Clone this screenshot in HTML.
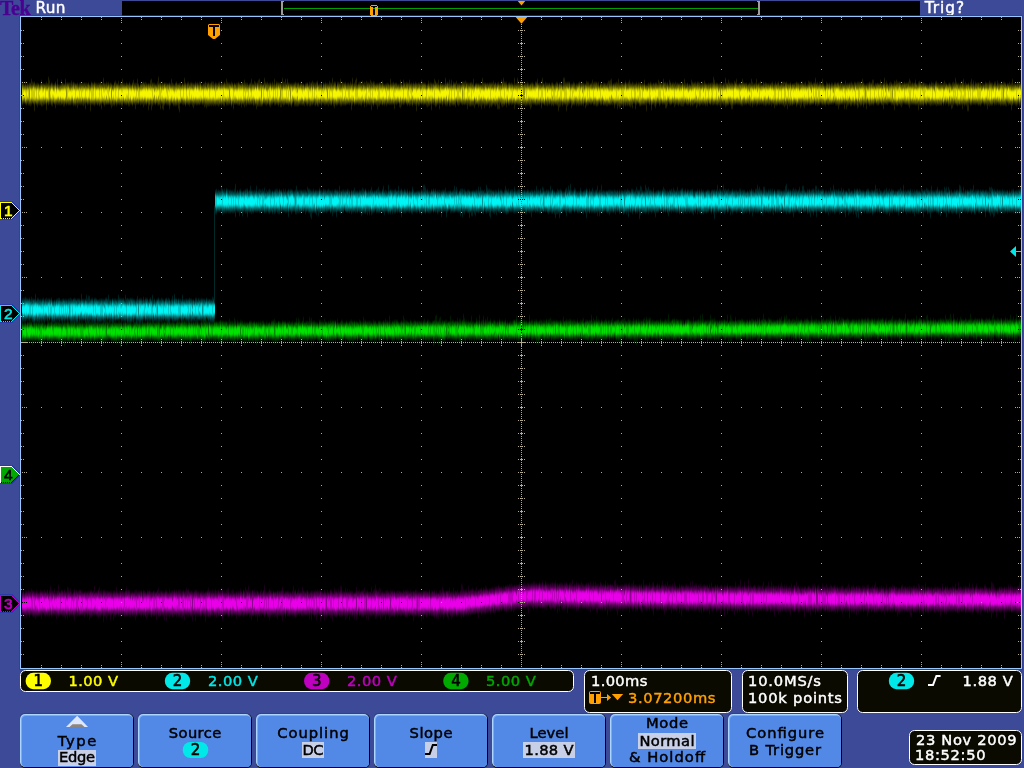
<!DOCTYPE html><html><head><meta charset="utf-8"><title>Tek Run</title><style>
html,body{margin:0;padding:0;}
body{width:1024px;height:768px;overflow:hidden;background:#3c4a98;}
svg{position:absolute;left:0;top:0;display:block;will-change:transform;}
text{font-family:"DejaVu Sans","Liberation Sans",sans-serif;white-space:pre;}
</style></head><body>
<svg width="1024" height="768" viewBox="0 0 1024 768" shape-rendering="crispEdges">
<rect x="122" y="1" width="798" height="14" fill="#000"/>
<text x="0" y="14.8" fill="#4b0091" stroke="#4b0091" stroke-width="0.35" font-size="20" font-weight="bold" textLength="30.5" lengthAdjust="spacing" style="font-family:'Liberation Serif','DejaVu Serif',serif">Tek</text>
<text x="35.5" y="13.2" fill="#fff" stroke="#fff" stroke-width="0.45" font-size="15.3" textLength="30" lengthAdjust="spacing">Run</text>
<text x="924.8" y="13.2" fill="#fff" stroke="#fff" stroke-width="0.45" font-size="15.3" textLength="39.3" lengthAdjust="spacing">Trig?</text>
<path d="M281 1h3v1h-1v12h1v1h-3z M757 1h3v14h-3v-1h1v-12h-1z" fill="#a09c9c"/>
<rect x="284" y="8" width="474" height="1" fill="#00a000"/>
<path d="M517.7 1h7.6l-3.8 4.5z" fill="#ffa000" shape-rendering="auto"/>
<rect x="19" y="15" width="1004" height="655" fill="#35418e"/>
<rect x="122" y="15" width="798" height="1" fill="#1c2466"/>
<path fill-rule="evenodd" d="M371 5h6v1h1v9h-1v1h-6v-1h-1v-9h1z M371 6v1h2v8h2v-8h2v-1z" fill="#ffa000"/>
<rect x="20" y="16" width="1002" height="653" fill="#96c8ff"/>
<rect x="21" y="17" width="1000" height="651" fill="#000"/>
<filter id="sf" filterUnits="userSpaceOnUse" x="21" y="17" width="1000" height="651"><feGaussianBlur stdDeviation="0.35 0.9"/></filter><g transform="translate(0.5,0)" fill="none" stroke-width="1" filter="url(#sf)"><path stroke="#202000" d="M22 84v21m1-22v20m1-18v18m1-21v22m1-19v20m1-22v20m1-19v21m1-22v22m1-22v23m1-27v26m1-23v21m1-20v21m1-22v29m1-27v20m1-20v21m1-22v24m1-23v20m1-19v20m1-21v21m1-25v26m1-22v22m1-22v21m1-21v20m1-20v20m1-22v28m1-26v19m1-26v28m1-25v24m1-20v20m1-20v21m1-22v23m1-21v18m1-19v20m1-22v26m1-23v19m1-25v26m1-20v19m1-19v20m1-20v20m1-25v25m1-22v21m1-20v22m1-22v22m1-27v25m1-21v22m1-22v21m1-21v22m1-22v22m1-22v22m1-24v23m1-21v21m1-22v24m1-23v22m1-21v22m1-22v21m1-22v25m1-23v20m1-22v21m1-21v22m1-22v21m1-21v22m1-22v23m1-23v21m1-21v26m1-26v20m1-19v21m1-21v19m1-18v19m1-19v26m1-29v22m1-21v21m1-20v21m1-23v24m1-23v20m1-20v21m1-20v21m1-22v20m1-20v23m1-24v23m1-21v25m1-26v20m1-25v26m1-21v23m1-22v20m1-22v22m1-21v21m1-22v22m1-20v20m1-21v22m1-21v24m1-23v21m1-21v20m1-23v24m1-25v23m1-21v23m1-22v20m1-23v23m1-19v20m1-22v21m1-21v23m1-27v27m1-22v19m1-20v21m1-20v20m1-20v21m1-21v20m1-20v22m1-24v24m1-22v19m1-18v19m1-21v23m1-26v24m1-21v21m1-21v26m1-26v21m1-25v25m1-20v20m1-18v17m1-19v21m1-22v21m1-21v20m1-21v25m1-24v22m1-23v22m1-21v22m1-21v19m1-19v26m1-26v21m1-25v24m1-25v31m1-27v23m1-23v21m1-21v21m1-20v21m1-21v19m1-21v23m1-28v28m1-22v22m1-22v26m1-25v20m1-22v27m1-25v26m1-27v22m1-22v20m1-20v21m1-20v21m1-21v21m1-22v26m1-25v21m1-26v24m1-20v21m1-20v22m1-21v19m1-21v23m1-24v22m1-20v21m1-21v25m1-26v29m1-29v20m1-18v18m1-19v19m1-19v21m1-27v26m1-21v23m1-22v20m1-21v21m1-22v23m1-21v22m1-23v21m1-21v21m1-21v23m1-22v24m1-24v21m1-23v22m1-21v22m1-22v22m1-21v20m1-22v23m1-23v22m1-19v19m1-19v20m1-21v20m1-21v24m1-25v24m1-23v25m1-25v23m1-23v23m1-22v22m1-23v22m1-23v24m1-24v23m1-23v24m1-22v21m1-22v23m1-23v22m1-21v21m1-22v23m1-24v23m1-21v19m1-22v25m1-23v21m1-20v22m1-24v24m1-21v18m1-24v26m1-23v23m1-22v22m1-22v21m1-20v20m1-22v24m1-23v21m1-19v24m1-26v21m1-20v20m1-21v21m1-21v22m1-23v23m1-22v22m1-21v20m1-21v24m1-24v21m1-21v22m1-25v27m1-24v22m1-22v23m1-23v21m1-19v19m1-20v21m1-22v20m1-24v25m1-20v20m1-20v22m1-25v24m1-23v23m1-22v26m1-27v24m1-26v26m1-27v27m1-23v23m1-23v23m1-22v21m1-21v19m1-25v26m1-22v23m1-22v22m1-23v22m1-20v20m1-21v23m1-23v24m1-23v21m1-23v22m1-20v19m1-24v26m1-21v21m1-23v22m1-20v20m1-21v23m1-23v21m1-21v24m1-24v24m1-29v26m1-22v24m1-24v23m1-26v25m1-20v20m1-25v25m1-21v23m1-23v21m1-20v21m1-21v23m1-22v19m1-20v19m1-20v23m1-24v24m1-23v23m1-23v23m1-23v23m1-21v20m1-22v22m1-23v23m1-21v21m1-21v21m1-20v21m1-22v19m1-20v22m1-22v23m1-21v19m1-22v24m1-23v23m1-22v21m1-24v24m1-22v21m1-21v22m1-22v23m1-24v22m1-23v25m1-21v21m1-22v20m1-20v20m1-22v24m1-20v18m1-21v21m1-20v21m1-22v22m1-21v20m1-21v22m1-21v22m1-25v23m1-21v22m1-22v22m1-27v25m1-20v23m1-24v26m1-26v22m1-18v19m1-23v23m1-23v22m1-21v20m1-24v27m1-23v23m1-24v23m1-22v22m1-22v22m1-23v23m1-21v20m1-21v21m1-21v21m1-20v21m1-23v21m1-19v26m1-32v27m1-21v19m1-20v22m1-25v24m1-26v26m1-19v19m1-21v22m1-23v22m1-22v23m1-23v24m1-25v23m1-20v20m1-22v25m1-24v20m1-22v25m1-23v21m1-21v21m1-21v22m1-25v25m1-23v28m1-27v21m1-22v24m1-24v22m1-20v20m1-20v21m1-22v26m1-25v22m1-23v23m1-23v21m1-21v20m1-22v23m1-20v20m1-19v19m1-20v20m1-20v22m1-23v21m1-20v20m1-19v20m1-26v25m1-20v20m1-21v21m1-22v22m1-20v25m1-26v21m1-21v22m1-21v20m1-20v19m1-19v23m1-27v28m1-25v23m1-21v19m1-24v25m1-22v21m1-21v20m1-21v22m1-20v22m1-23v21m1-24v26m1-22v21m1-22v21m1-20v22m1-23v21m1-20v19m1-21v23m1-22v28m1-27v20m1-21v23m1-23v22m1-21v19m1-23v24m1-22v22m1-21v22m1-22v21m1-21v21m1-19v21m1-22v23m1-26v25m1-21v19m1-21v21m1-21v27m1-26v20m1-21v21m1-25v26m1-24v26m1-24v23m1-23v21m1-24v24m1-19v24m1-26v21m1-20v20m1-20v22m1-22v20m1-20v20m1-26v27m1-22v23m1-24v22m1-21v20m1-23v26m1-22v22m1-26v25m1-20v20m1-23v23m1-22v22m1-22v24m1-26v21m1-18v21m1-21v22m1-22v21m1-21v19m1-20v21m1-22v23m1-23v22m1-22v23m1-24v23m1-21v22m1-22v26m1-26v22m1-22v23m1-23v23m1-23v22m1-22v21m1-25v25m1-19v23m1-24v21m1-22v21m1-20v20m1-20v23m1-23v21m1-21v22m1-21v24m1-31v27m1-22v21m1-21v25m1-25v21m1-20v21m1-22v22m1-21v20m1-21v25m1-25v23m1-23v24m1-24v22m1-24v23m1-20v21m1-21v22m1-22v21m1-22v26m1-27v27m1-25v25m1-25v19m1-23v26m1-24v25m1-29v28m1-24v23m1-23v22m1-22v25m1-22v18m1-20v22m1-22v22m1-21v20m1-21v22m1-21v20m1-19v19m1-26v31m1-25v21m1-22v21m1-26v26m1-23v24m1-21v21m1-23v24m1-23v25m1-25v23m1-21v20m1-21v21m1-22v23m1-23v21m1-22v23m1-22v22m1-21v22m1-22v25m1-26v24m1-23v20m1-20v20m1-19v19m1-22v23m1-23v23m1-26v26m1-21v20m1-21v22m1-21v19m1-22v27m1-30v26m1-21v21m1-20v21m1-23v23m1-22v22m1-22v23m1-22v20m1-21v22m1-20v19m1-21v23m1-23v22m1-21v22m1-21v19m1-20v21m1-23v23m1-21v22m1-21v26m1-28v24m1-23v22m1-24v22m1-19v21m1-28v26m1-26v26m1-22v23m1-22v28m1-29v24m1-24v23m1-23v22m1-20v19m1-19v24m1-24v21m1-23v22m1-21v22m1-20v19m1-20v22m1-22v20m1-21v23m1-24v23m1-22v22m1-23v23m1-22v21m1-21v23m1-22v19m1-19v24m1-27v25m1-24v23m1-23v23m1-21v19m1-19v20m1-21v21m1-24v23m1-20v22m1-23v23m1-23v23m1-23v24m1-23v23m1-24v23m1-19v17m1-19v21m1-22v22m1-21v20m1-21v22m1-22v22m1-21v21m1-21v22m1-23v23m1-25v23m1-23v24m1-25v25m1-26v25m1-20v21m1-21v20m1-21v25m1-25v22m1-23v22m1-21v26m1-30v27m1-23v25m1-24v23m1-24v22m1-22v22m1-21v24m1-25v22m1-24v25m1-23v22m1-22v23m1-24v23m1-25v26m1-23v24m1-23v21m1-23v26m1-25v20m1-19v19m1-19v25m1-27v23m1-21v19m1-20v20m1-20v23m1-23v23m1-21v20m1-21v21m1-21v21m1-25v25m1-20v20m1-20v26m1-27v18m1-19v20m1-19v21m1-23v22m1-20v26m1-26v20m1-21v21m1-19v21m1-23v25m1-25v22m1-21v19m1-23v23m1-21v24m1-23v21m1-21v20m1-20v21m1-25v25m1-21v21m1-22v26m1-24v24m1-25v22m1-21v19m1-23v24m1-22v23m1-21v20m1-21v20m1-20v21m1-19v22m1-25v23m1-21v20m1-21v21m1-20v22m1-22v20m1-21v22m1-21v22m1-24v24m1-22v22m1-27v25m1-21v20m1-19v20m1-21v22m1-20v20m1-21v20m1-19v21m1-26v24m1-22v24m1-23v22m1-22v21m1-22v21m1-20v25m1-26v24m1-24v22m1-20v22m1-22v21m1-20v19m1-22v23m1-21v21m1-24v23m1-21v23m1-22v21m1-21v22m1-23v20m1-18v19m1-21v22m1-22v21m1-21v22m1-28v28m1-25v24m1-20v20m1-21v22m1-22v22m1-21v20m1-20v21m1-22v24m1-24v22m1-20v19m1-21v22m1-20v20m1-27v29m1-24v23m1-23v22m1-25v25m1-21v19m1-20v22m1-22v26m1-26v26m1-25v21m1-24v23m1-22v22m1-25v25m1-20v20m1-20v20m1-21v21m1-20v21m1-21v21m1-26v27m1-22v19m1-20v22m1-22v20m1-20v22m1-21v19m1-19v20m1-21v22m1-21v22m1-27v25m1-22v25m1-23v20m1-20v21m1-22v21m1-25v27m1-22v21m1-22v21m1-21v22m1-24v23m1-20v19m1-18v19m1-22v23m1-21v21m1-22v23m1-23v22m1-21v20m1-20v21m1-21v21m1-21v20m1-21v23m1-24v22m1-20v20m1-20v24m1-26v23m1-21v21m1-22v22m1-23v22m1-19v20m1-21v20m1-22v22m1-22v23m1-23v22m1-22v25m1-24v21m1-22v23m1-20v24m1-25v20m1-20v22m1-23v22m1-20v20m1-21v21m1-21v20m1-20v20m1-21v20m1-21v23m1-22v21m1-21v21m1-19v20m1-21v24m1-26v24m1-24v21m1-19v22m1-23v25m1-26v23m1-20v20m1-21v21m1-24v23m1-22v23m1-23v23m1-23v22m1-20v20m1-21v21m1-21v20m1-25v27m1-22v21m1-22v24m1-22v21m1-23v23m1-22v20m1-19v20m1-25v26m1-21v21m1-20v20m1-20v21m1-24v22m1-21v21m1-20v21m1-22v21m1-19v19m1-21v21m1-21v21m1-19v19m1-21v20m1-19v21m1-21v21m1-22v22m1-21v25m1-25v21m1-22v21m1-23v23m1-20v20m1-20v20m1-20v25m1-28v23m1-20v25m1-26v23m1-22v21m1-22v21m1-21v23m1-24v24m1-22v20m1-20v21m1-23v24m1-23v21m1-21v22m1-23v26m1-26v25m1-25v22m1-21v23m1-24v22m1-25v25m1-20v23m1-23v20m1-20v20m1-20v25m1-25v20m1-21v21m1-22v24m1-23v22m1-22v22m1-25v24m1-24v24m1-19v19m1-21v20m1-19v20m1-21v22m1-21v21m1-21v20m1-24v23m1-19v21m1-21v21m1-22v26m1-31v26m1-21v21m1-23v23m1-20v21m1-20v18m1-20v20m1-21v21m1-20v22m1-21v20m1-19v20m1-24v29m1-28v22m1-24v25m1-23v24m1-24v23m1-23v22m1-21v22m1-21v23m1-24v22m1-21v19m1-21v22m1-20v20m1-21v21m1-21v21m1-22v22m1-25v29m1-27v24m1-21v19m1-20v21m1-20v20m1-21v21m1-24v25m1-21v21m1-21v21m1-23v28m1-29v24m1-22v22m1-21v21m1-22v22m1-21v22m1-23v21m1-20v20m1-20v21m1-21v19m1-18v19m1-21v22m1-21v22m1-24v23m1-22v22m1-22v22m1-21v19m1-21v23m1-24v25m1-23v22m1-22v22m1-21v21m1-22v22m1-21v20m1-20v19m1-20v21m1-23v22m1-20v22m1-21v19m1-18v19m1-20v22m1-23v22m1-21v21m1-19v23m1-26v25m1-26v23m1-22v21m1-26v26m1-22v23m1-21v22m1-23v22m1-21v21m1-22v22m1-24v24m1-23v27m1-30v25m1-20v22m1-24v23m1-21v22m1-22v27m1-28v28m1-26v19m1-22v22m1-25v26m1-21v20m1-23v22m1-18v19m1-22v23m1-22v21m1-21v21m1-21v21m1-21v22m1-22v23m1-20v18m1-21v20m1-19v20m1-20v20m1-22v22m1-21v22m1-22v26m1-26v22m1-24v25m1-22v21m1-22v22m1-22v22m1-20v18m1-21v23m1-23v21m1-18v20m1-24v23m1-21v22m1-20v19m1-20v22m1-24v23m1-21v21m1-23v23m1-23v23m1-22v23m1-21v21m1-23v20m1-19v21m1-23v22m1-20v21m1-22v27m1-31v26m1-21v20m1-21v21m1-20v21m1-21v22m1-23v22m1-23v22m1-21v23m1-22v21"/><path stroke="#343400" d="M22 83v21m1-19v18m1-18v17m1-17v18m1-18v19m1-19v18m1-17v18m1-20v20m1-20v19m1-17v17m1-18v18m1-20v21m1-21v22m1-20v17m1-18v19m1-18v19m1-20v20m1-19v18m1-19v19m1-20v22m1-19v17m1-19v20m1-19v19m1-20v19m1-18v20m1-19v17m1-19v20m1-18v16m1-16v16m1-19v22m1-20v19m1-19v17m1-17v19m1-21v20m1-18v19m1-19v17m1-17v19m1-19v18m1-18v17m1-17v18m1-19v18m1-17v18m1-18v19m1-21v19m1-17v19m1-21v20m1-19v20m1-20v19m1-18v19m1-18v17m1-17v17m1-19v20m1-20v20m1-20v20m1-19v18m1-19v19m1-18v18m1-18v19m1-20v19m1-19v20m1-19v18m1-18v19m1-20v20m1-19v18m1-18v18m1-18v19m1-21v21m1-19v18m1-18v20m1-20v19m1-20v20m1-20v19m1-19v20m1-19v19m1-18v17m1-19v21m1-19v18m1-19v20m1-21v20m1-20v19m1-18v17m1-18v20m1-19v20m1-21v20m1-19v19m1-18v17m1-18v18m1-18v17m1-18v20m1-20v20m1-19v18m1-18v19m1-20v20m1-20v18m1-17v19m1-20v20m1-19v18m1-18v18m1-18v19m1-21v21m1-19v19m1-20v18m1-17v19m1-19v19m1-21v21m1-20v19m1-18v19m1-20v19m1-17v18m1-19v19m1-21v21m1-20v18m1-17v19m1-19v19m1-18v18m1-19v18m1-18v18m1-16v16m1-18v19m1-20v19m1-19v20m1-20v19m1-19v19m1-18v19m1-20v20m1-19v18m1-19v20m1-19v20m1-20v19m1-19v18m1-19v20m1-19v18m1-17v17m1-18v19m1-18v17m1-18v18m1-18v20m1-20v18m1-20v19m1-18v19m1-18v18m1-18v20m1-21v20m1-19v17m1-17v19m1-20v19m1-18v19m1-21v22m1-20v20m1-20v18m1-19v19m1-18v19m1-19v20m1-21v20m1-21v22m1-20v18m1-18v20m1-19v18m1-19v18m1-18v18m1-19v20m1-18v17m1-18v18m1-20v22m1-20v18m1-20v21m1-19v18m1-18v18m1-19v19m1-20v20m1-18v19m1-20v19m1-19v20m1-20v19m1-18v19m1-21v20m1-19v20m1-19v18m1-19v19m1-18v17m1-17v18m1-19v20m1-19v18m1-20v21m1-18v18m1-20v20m1-21v21m1-20v19m1-18v19m1-21v20m1-18v17m1-17v19m1-19v19m1-21v21m1-19v18m1-18v19m1-21v22m1-20v19m1-19v19m1-20v20m1-19v18m1-19v20m1-20v21m1-21v18m1-18v20m1-20v20m1-20v19m1-19v20m1-20v19m1-19v22m1-22v20m1-19v19m1-20v19m1-18v18m1-18v18m1-18v18m1-19v20m1-19v18m1-18v18m1-19v20m1-19v18m1-18v18m1-19v18m1-18v18m1-17v19m1-19v18m1-17v16m1-18v19m1-19v20m1-19v19m1-20v19m1-18v19m1-19v18m1-19v20m1-18v17m1-19v21m1-20v18m1-18v18m1-19v20m1-19v20m1-20v20m1-20v18m1-19v19m1-19v19m1-19v21m1-21v20m1-19v18m1-18v19m1-21v21m1-19v18m1-19v20m1-19v17m1-18v20m1-18v18m1-21v20m1-20v21m1-21v22m1-21v19m1-19v19m1-19v19m1-17v17m1-18v18m1-18v18m1-18v18m1-19v19m1-20v20m1-19v20m1-19v18m1-19v20m1-20v21m1-21v19m1-19v17m1-17v20m1-20v20m1-19v19m1-19v20m1-20v19m1-19v18m1-18v18m1-18v18m1-18v19m1-19v19m1-18v17m1-19v19m1-18v19m1-19v19m1-19v19m1-19v18m1-17v19m1-22v20m1-18v19m1-21v20m1-18v17m1-17v20m1-21v20m1-21v22m1-20v18m1-18v19m1-19v18m1-19v21m1-19v16m1-18v19m1-19v20m1-21v21m1-20v20m1-19v18m1-18v17m1-18v19m1-19v20m1-20v20m1-18v17m1-18v18m1-20v22m1-21v20m1-18v19m1-21v20m1-19v18m1-18v19m1-19v19m1-19v19m1-20v19m1-19v20m1-20v20m1-20v21m1-20v19m1-19v18m1-19v19m1-18v18m1-19v19m1-19v21m1-21v20m1-18v16m1-18v21m1-21v19m1-18v19m1-18v16m1-18v20m1-19v19m1-20v20m1-19v19m1-19v17m1-18v19m1-18v18m1-17v17m1-18v18m1-20v21m1-21v21m1-19v18m1-18v18m1-20v20m1-19v20m1-22v23m1-20v18m1-18v17m1-18v21m1-20v19m1-20v19m1-19v18m1-18v19m1-18v19m1-21v22m1-20v18m1-18v20m1-20v18m1-19v20m1-19v19m1-20v19m1-18v18m1-18v19m1-20v20m1-19v19m1-19v19m1-20v20m1-19v17m1-18v19m1-17v16m1-17v17m1-16v17m1-19v19m1-20v21m1-19v18m1-19v19m1-20v20m1-17v16m1-17v18m1-20v21m1-18v17m1-19v20m1-20v20m1-20v20m1-19v20m1-22v20m1-18v19m1-19v19m1-19v20m1-20v19m1-20v20m1-19v19m1-19v17m1-19v20m1-18v18m1-19v20m1-20v20m1-19v18m1-18v19m1-19v18m1-19v20m1-20v21m1-21v20m1-19v19m1-20v18m1-17v19m1-19v17m1-20v23m1-21v21m1-21v20m1-18v17m1-18v18m1-19v19m1-17v17m1-18v19m1-19v17m1-17v18m1-19v21m1-20v18m1-19v21m1-21v19m1-18v20m1-21v19m1-18v18m1-18v19m1-20v21m1-21v20m1-20v20m1-18v16m1-17v18m1-19v20m1-20v18m1-16v17m1-18v18m1-20v21m1-19v18m1-18v18m1-18v18m1-20v19m1-18v20m1-19v18m1-18v19m1-19v20m1-22v22m1-20v20m1-21v21m1-19v15m1-17v20m1-19v18m1-18v19m1-20v20m1-19v19m1-19v18m1-18v19m1-20v20m1-20v20m1-20v20m1-20v21m1-21v21m1-20v19m1-20v20m1-20v20m1-20v20m1-20v20m1-20v21m1-20v18m1-19v20m1-21v22m1-20v18m1-19v21m1-20v17m1-17v19m1-19v18m1-17v18m1-21v20m1-20v20m1-20v21m1-20v19m1-18v19m1-19v17m1-17v19m1-21v20m1-19v18m1-18v19m1-19v20m1-19v18m1-18v17m1-17v18m1-18v18m1-18v19m1-20v20m1-19v19m1-20v20m1-20v20m1-20v20m1-19v19m1-19v19m1-19v20m1-20v20m1-21v20m1-19v18m1-17v18m1-20v19m1-19v19m1-20v20m1-19v20m1-19v18m1-20v21m1-19v19m1-21v20m1-18v19m1-19v19m1-20v19m1-17v19m1-20v18m1-18v18m1-18v19m1-19v17m1-17v18m1-18v19m1-20v20m1-19v19m1-19v18m1-18v19m1-21v20m1-18v20m1-20v19m1-20v19m1-19v20m1-21v21m1-19v19m1-20v20m1-20v20m1-20v19m1-18v20m1-21v20m1-20v20m1-19v19m1-21v20m1-19v21m1-20v18m1-18v18m1-17v16m1-17v19m1-19v20m1-20v18m1-19v20m1-19v17m1-18v20m1-19v19m1-20v19m1-20v21m1-18v18m1-20v21m1-21v20m1-19v18m1-18v16m1-16v18m1-19v20m1-20v19m1-19v19m1-18v18m1-19v20m1-20v20m1-19v18m1-19v20m1-20v20m1-20v18m1-18v21m1-19v18m1-20v19m1-17v17m1-19v20m1-20v20m1-18v16m1-17v18m1-18v19m1-20v20m1-19v19m1-20v19m1-18v19m1-20v20m1-18v17m1-20v20m1-17v16m1-18v19m1-18v20m1-21v19m1-19v20m1-20v21m1-21v19m1-18v20m1-21v19m1-19v20m1-20v20m1-19v20m1-20v18m1-20v22m1-19v16m1-17v18m1-19v20m1-21v22m1-20v18m1-19v21m1-21v19m1-18v17m1-18v19m1-19v20m1-20v19m1-18v18m1-20v20m1-19v20m1-20v20m1-20v20m1-20v19m1-18v18m1-19v19m1-17v17m1-18v18m1-16v16m1-19v19m1-19v20m1-20v18m1-18v21m1-20v19m1-19v18m1-19v19m1-19v21m1-20v17m1-17v17m1-17v18m1-18v19m1-20v20m1-20v18m1-17v19m1-20v19m1-19v19m1-18v19m1-20v21m1-22v21m1-18v16m1-18v20m1-19v19m1-19v19m1-20v19m1-19v19m1-19v19m1-18v19m1-20v19m1-19v20m1-20v20m1-20v19m1-17v18m1-19v18m1-19v19m1-18v17m1-17v18m1-17v17m1-18v19m1-20v20m1-19v19m1-19v18m1-17v19m1-21v19m1-19v20m1-20v19m1-20v20m1-18v18m1-18v18m1-20v20m1-18v18m1-20v21m1-19v19m1-20v19m1-19v19m1-18v17m1-17v19m1-19v19m1-19v18m1-18v19m1-19v18m1-19v19m1-18v19m1-18v16m1-18v19m1-19v20m1-21v20m1-18v19m1-20v19m1-18v20m1-19v18m1-20v18m1-17v18m1-17v17m1-17v16m1-17v19m1-20v19m1-18v19m1-20v20m1-19v19m1-20v18m1-19v20m1-17v18m1-20v20m1-19v19m1-18v17m1-19v20m1-20v20m1-20v18m1-17v19m1-20v20m1-19v19m1-20v20m1-21v22m1-21v20m1-21v21m1-19v18m1-18v19m1-20v19m1-17v17m1-18v19m1-20v19m1-19v19m1-18v17m1-17v19m1-19v19m1-20v19m1-18v17m1-17v18m1-18v19m1-20v19m1-18v18m1-17v17m1-18v19m1-19v18m1-19v20m1-20v19m1-20v20m1-18v19m1-19v18m1-19v19m1-19v19m1-18v18m1-19v19m1-19v19m1-17v18m1-19v19m1-19v19m1-19v20m1-21v20m1-21v20m1-18v19m1-19v18m1-18v19m1-19v18m1-19v21m1-19v16m1-18v21m1-22v21m1-20v18m1-18v20m1-19v18m1-20v21m1-19v18m1-18v20m1-20v18m1-19v20m1-18v17m1-20v23m1-22v19m1-19v20m1-20v18m1-18v19m1-18v18m1-19v18m1-17v19m1-19v18m1-19v20m1-19v18m1-18v19m1-19v17m1-19v21m1-19v19m1-19v19m1-19v18m1-19v19m1-20v19m1-18v20m1-19v19m1-20v19m1-18v19m1-19v18m1-19v19m1-18v19m1-19v19m1-20v19m1-17v17m1-17v18m1-19v18m1-17v17m1-18v19m1-19v19m1-18v17m1-19v19m1-18v18m1-17v17m1-19v18m1-19v20m1-18v19m1-20v20m1-21v21m1-19v20m1-21v20m1-19v18m1-19v20m1-19v18m1-18v18m1-18v18m1-18v18m1-18v18m1-19v20m1-20v19m1-18v19m1-20v20m1-20v19m1-17v16m1-18v20m1-21v21m1-19v18m1-19v21m1-20v18m1-18v19m1-19v19m1-20v21m1-21v19m1-20v22m1-20v18m1-17v17m1-18v18m1-19v18m1-17v18m1-20v21m1-19v19m1-20v20m1-20v20m1-18v19m1-20v17m1-17v18m1-18v19m1-20v20m1-20v20m1-20v19m1-19v19m1-19v19m1-18v19m1-20v20m1-20v19m1-17v17m1-18v17m1-18v19m1-18v18m1-19v18m1-17v18m1-19v19m1-18v19m1-20v20m1-20v20m1-19v19m1-20v21m1-21v20m1-20v19m1-20v21m1-21v22m1-20v18m1-18v18m1-19v19m1-18v17m1-18v19m1-19v19m1-19v20m1-20v21m1-20v19m1-19v18m1-19v20m1-21v20m1-19v20m1-20v20m1-20v20m1-19v18m1-18v18m1-18v19m1-20v20m1-21v22m1-21v21m1-21v20m1-21v22m1-20v17m1-17v19m1-19v19m1-18v17m1-17v17m1-18v18m1-17v18m1-20v20m1-19v18m1-18v18m1-16v17m1-21v20m1-20v20m1-18v19m1-19v19m1-19v19m1-19v19m1-20v21m1-20v17m1-17v20m1-20v18m1-18v18m1-19v19m1-18v17m1-18v20m1-20v19m1-19v20m1-19v18m1-19v19m1-18v19m1-19v18m1-19v20m1-20v20m1-20v21m1-20v18m1-18v19m1-19v19m1-19v18m1-20v21m1-20v20m1-19v19m1-19v18m1-18v18m1-18v19m1-20v18m1-17v18m1-18v20m1-21v20m1-20v19m1-19v20m1-19v18m1-18v18m1-17v17m1-19v20m1-20v21m1-20v17m1-18v20m1-19v19m1-18v17m1-18v18m1-17v19m1-20v19m1-20v20m1-19v19m1-18v18m1-20v19m1-20v21m1-20v21m1-20v19m1-19v18m1-19v20m1-20v20m1-19v18m1-19v18m1-17v18m1-19v19m1-19v20m1-21v20m1-19v20m1-19v20m1-21v20m1-20v20m1-19v16m1-16v18m1-18v19m1-19v18m1-18v18m1-18v20m1-21v19m1-18v18m1-18v18m1-18v19m1-19v19m1-20v19m1-18v17m1-17v19m1-20v19"/><path stroke="#4e4e00" d="M22 85v18m1-17v15m1-14v15m1-16v17m1-17v17m1-17v16m1-16v15m1-15v17m1-18v17m1-16v16m1-16v16m1-16v16m1-17v18m1-16v15m1-15v16m1-17v17m1-18v17m1-15v14m1-15v17m1-17v17m1-18v17m1-17v17m1-16v16m1-16v16m1-16v17m1-18v16m1-15v16m1-16v15m1-14v14m1-16v18m1-17v16m1-16v16m1-16v17m1-18v18m1-16v15m1-17v16m1-14v15m1-15v15m1-16v15m1-15v16m1-17v18m1-18v17m1-16v17m1-17v16m1-16v17m1-18v17m1-16v16m1-15v16m1-16v15m1-17v16m1-15v15m1-17v19m1-16v16m1-18v18m1-18v17m1-16v16m1-15v15m1-16v16m1-15v15m1-16v16m1-16v15m1-15v16m1-16v16m1-16v16m1-15v14m1-16v17m1-17v17m1-16v15m1-14v15m1-18v19m1-18v18m1-18v18m1-19v19m1-18v16m1-15v16m1-16v17m1-17v16m1-16v17m1-18v17m1-17v17m1-16v16m1-17v18m1-18v18m1-18v17m1-17v18m1-17v17m1-18v18m1-17v16m1-16v17m1-18v17m1-15v14m1-14v16m1-19v19m1-16v15m1-16v16m1-17v17m1-16v16m1-16v16m1-17v17m1-17v18m1-18v18m1-18v17m1-16v16m1-16v17m1-17v17m1-18v17m1-16v17m1-18v17m1-16v16m1-15v16m1-18v19m1-17v15m1-16v17m1-17v15m1-14v15m1-17v17m1-17v18m1-16v14m1-16v16m1-15v16m1-17v17m1-18v17m1-16v17m1-16v16m1-16v17m1-17v15m1-17v19m1-18v19m1-19v16m1-14v16m1-18v18m1-17v15m1-15v16m1-16v17m1-17v16m1-15v14m1-16v18m1-18v18m1-18v17m1-15v15m1-16v16m1-17v18m1-18v18m1-18v18m1-17v16m1-17v17m1-17v17m1-17v19m1-18v16m1-15v15m1-15v15m1-15v16m1-17v16m1-16v17m1-18v18m1-17v15m1-16v17m1-16v17m1-16v16m1-16v15m1-18v17m1-15v16m1-17v18m1-18v19m1-17v15m1-16v16m1-17v18m1-17v16m1-16v16m1-17v17m1-16v16m1-17v17m1-16v16m1-17v17m1-16v16m1-17v18m1-17v17m1-17v17m1-18v17m1-15v14m1-15v15m1-15v15m1-15v16m1-16v16m1-15v15m1-16v17m1-19v19m1-16v15m1-17v18m1-18v17m1-16v17m1-17v16m1-15v16m1-17v16m1-16v17m1-17v17m1-18v17m1-17v18m1-16v16m1-18v18m1-17v17m1-17v17m1-19v18m1-17v16m1-15v16m1-17v17m1-16v16m1-16v17m1-18v16m1-15v18m1-19v17m1-15v15m1-17v18m1-17v17m1-16v15m1-16v17m1-19v18m1-17v19m1-18v16m1-16v17m1-19v18m1-16v17m1-17v16m1-16v15m1-14v15m1-16v15m1-15v17m1-18v17m1-17v17m1-16v17m1-18v16m1-15v17m1-17v15m1-16v18m1-17v17m1-18v19m1-19v18m1-16v14m1-15v16m1-15v17m1-18v17m1-18v18m1-16v15m1-16v16m1-17v17m1-16v17m1-18v16m1-15v18m1-19v18m1-16v15m1-16v16m1-15v13m1-14v15m1-15v17m1-18v17m1-16v17m1-18v18m1-18v17m1-17v17m1-15v15m1-16v17m1-18v18m1-17v17m1-18v17m1-18v19m1-17v17m1-18v17m1-16v17m1-17v17m1-18v19m1-17v15m1-16v14m1-15v17m1-17v18m1-16v15m1-17v17m1-18v19m1-17v16m1-16v16m1-17v17m1-16v17m1-17v17m1-16v14m1-15v16m1-17v17m1-18v19m1-17v16m1-16v15m1-15v17m1-19v18m1-16v17m1-17v16m1-15v14m1-15v17m1-17v17m1-19v20m1-18v16m1-16v16m1-16v16m1-17v18m1-15v14m1-15v15m1-15v15m1-16v16m1-16v16m1-15v15m1-16v16m1-16v17m1-16v15m1-17v19m1-18v15m1-15v17m1-18v17m1-17v18m1-16v16m1-18v18m1-18v17m1-17v16m1-15v16m1-15v16m1-18v17m1-16v16m1-17v17m1-17v18m1-17v17m1-17v17m1-17v16m1-16v16m1-16v16m1-16v17m1-18v17m1-15v15m1-16v17m1-17v17m1-17v16m1-16v16m1-16v15m1-15v17m1-17v16m1-16v17m1-17v15m1-16v16m1-15v16m1-15v14m1-14v15m1-16v16m1-16v17m1-18v18m1-17v16m1-16v16m1-16v16m1-17v18m1-17v16m1-16v17m1-18v17m1-15v15m1-16v16m1-18v19m1-18v18m1-17v15m1-16v19m1-18v17m1-18v17m1-16v16m1-16v16m1-16v15m1-16v18m1-17v15m1-16v18m1-17v17m1-17v15m1-16v18m1-18v17m1-17v17m1-16v16m1-15v15m1-16v15m1-14v16m1-16v14m1-16v17m1-16v16m1-16v17m1-18v17m1-16v15m1-16v18m1-18v18m1-18v18m1-17v16m1-17v17m1-16v15m1-15v18m1-19v17m1-17v17m1-17v17m1-17v18m1-18v17m1-17v18m1-18v17m1-17v18m1-17v18m1-19v17m1-17v17m1-17v18m1-17v17m1-16v15m1-16v16m1-17v18m1-16v15m1-15v15m1-17v18m1-17v16m1-17v17m1-16v15m1-16v18m1-18v18m1-17v16m1-16v15m1-14v15m1-17v17m1-17v16m1-15v17m1-17v15m1-15v15m1-16v18m1-17v16m1-18v18m1-16v15m1-16v18m1-17v16m1-17v17m1-15v16m1-18v19m1-19v18m1-18v17m1-15v14m1-16v18m1-17v15m1-16v17m1-15v14m1-15v17m1-17v16m1-17v18m1-18v18m1-17v17m1-19v18m1-16v16m1-16v16m1-16v16m1-18v19m1-17v16m1-16v16m1-16v16m1-15v14m1-16v18m1-18v18m1-18v18m1-18v18m1-17v16m1-16v16m1-17v17m1-16v16m1-16v17m1-17v17m1-18v17m1-17v18m1-18v17m1-16v16m1-17v17m1-16v16m1-17v19m1-18v17m1-17v16m1-17v18m1-19v18m1-15v14m1-15v17m1-18v16m1-15v16m1-17v17m1-16v17m1-19v19m1-17v17m1-18v19m1-19v17m1-17v18m1-17v16m1-17v18m1-18v17m1-16v16m1-16v15m1-15v16m1-16v15m1-15v16m1-16v17m1-17v16m1-16v17m1-17v17m1-16v15m1-17v17m1-16v17m1-18v17m1-15v16m1-18v18m1-18v17m1-16v17m1-18v17m1-16v16m1-16v17m1-18v18m1-17v16m1-17v17m1-16v16m1-15v16m1-17v17m1-19v17m1-16v18m1-18v18m1-17v16m1-16v15m1-14v15m1-16v16m1-17v17m1-15v17m1-18v15m1-15v15m1-15v16m1-16v15m1-16v17m1-16v16m1-15v15m1-17v18m1-17v16m1-15v15m1-15v14m1-15v16m1-18v19m1-16v15m1-17v16m1-16v17m1-16v15m1-14v16m1-17v16m1-16v17m1-18v16m1-15v17m1-18v17m1-17v17m1-18v18m1-15v14m1-15v16m1-17v19m1-19v19m1-18v16m1-15v14m1-14v15m1-16v17m1-18v18m1-18v17m1-16v16m1-17v18m1-17v16m1-16v17m1-17v16m1-17v17m1-16v17m1-17v16m1-16v15m1-14v16m1-18v17m1-17v17m1-16v16m1-16v16m1-17v18m1-17v16m1-18v18m1-16v17m1-17v15m1-14v14m1-16v17m1-16v17m1-17v14m1-14v18m1-19v18m1-17v17m1-16v15m1-16v17m1-16v17m1-19v18m1-18v18m1-18v18m1-16v14m1-16v17m1-16v17m1-17v16m1-16v16m1-16v16m1-16v17m1-17v17m1-17v17m1-18v19m1-18v16m1-17v18m1-17v16m1-18v19m1-18v17m1-16v17m1-18v17m1-16v18m1-19v18m1-18v17m1-16v17m1-17v16m1-16v16m1-16v17m1-18v17m1-16v15m1-15v17m1-16v16m1-17v18m1-17v16m1-18v18m1-17v17m1-17v17m1-17v15m1-14v15m1-15v14m1-15v16m1-15v16m1-18v16m1-15v18m1-17v16m1-18v17m1-16v16m1-17v18m1-18v17m1-16v16m1-16v16m1-17v18m1-18v16m1-15v16m1-16v17m1-19v18m1-18v19m1-18v17m1-16v16m1-17v16m1-14v14m1-15v16m1-18v19m1-17v17m1-17v16m1-15v15m1-17v15m1-13v16m1-17v15m1-15v16m1-17v18m1-18v18m1-17v15m1-15v17m1-18v16m1-15v17m1-17v16m1-16v16m1-15v16m1-18v18m1-16v15m1-16v16m1-16v17m1-16v16m1-18v18m1-17v16m1-17v16m1-16v18m1-17v16m1-17v17m1-17v18m1-17v17m1-17v16m1-16v16m1-16v16m1-16v16m1-17v17m1-17v17m1-17v17m1-16v16m1-16v15m1-15v17m1-18v18m1-17v15m1-15v15m1-16v17m1-17v18m1-18v16m1-16v18m1-18v18m1-17v16m1-15v14m1-15v16m1-16v15m1-15v16m1-16v16m1-15v14m1-14v16m1-18v18m1-18v18m1-17v17m1-18v17m1-16v16m1-16v18m1-19v19m1-18v16m1-16v16m1-18v19m1-18v17m1-16v16m1-16v16m1-17v17m1-17v17m1-17v19m1-19v17m1-16v15m1-16v17m1-17v17m1-16v16m1-15v15m1-17v18m1-17v15m1-16v17m1-16v16m1-16v16m1-16v16m1-17v17m1-16v16m1-17v17m1-16v17m1-18v17m1-15v15m1-15v15m1-15v15m1-16v16m1-16v16m1-16v15m1-15v17m1-18v17m1-17v17m1-17v17m1-15v16m1-18v16m1-14v15m1-17v17m1-15v15m1-16v16m1-17v18m1-17v17m1-17v16m1-17v17m1-16v16m1-16v17m1-18v18m1-17v16m1-16v17m1-16v15m1-18v19m1-18v17m1-17v16m1-16v18m1-18v17m1-17v19m1-17v15m1-17v19m1-19v18m1-18v17m1-15v15m1-17v18m1-18v19m1-19v17m1-15v15m1-17v17m1-17v18m1-17v16m1-16v16m1-16v17m1-17v16m1-15v15m1-16v16m1-16v16m1-17v17m1-17v18m1-18v18m1-18v18m1-17v17m1-18v16m1-16v19m1-19v17m1-16v16m1-16v17m1-17v16m1-17v17m1-16v16m1-17v17m1-16v16m1-15v16m1-16v15m1-16v15m1-16v18m1-17v17m1-18v18m1-17v17m1-17v17m1-17v15m1-15v16m1-17v17m1-16v16m1-17v17m1-18v19m1-18v18m1-16v16m1-17v17m1-16v16m1-17v16m1-16v15m1-15v16m1-16v16m1-16v15m1-15v17m1-17v16m1-16v16m1-15v16m1-17v17m1-18v17m1-15v15m1-16v17m1-18v17m1-16v15m1-15v18m1-19v17m1-17v18m1-19v18m1-16v17m1-18v17m1-17v18m1-17v17m1-16v15m1-16v17m1-16v14m1-15v17m1-18v18m1-18v17m1-17v17m1-16v17m1-17v16m1-16v15m1-15v15m1-16v18m1-18v16m1-16v18m1-17v16m1-17v17m1-16v17m1-17v15m1-16v17m1-17v17m1-15v15m1-17v18m1-19v17m1-14v15m1-16v15m1-15v15m1-16v17m1-16v17m1-17v17m1-17v16m1-16v17m1-18v18m1-18v19m1-19v17m1-18v19m1-17v16m1-16v16m1-17v16m1-16v17m1-17v17m1-18v19m1-18v18m1-17v16m1-17v18m1-17v17m1-17v16m1-16v16m1-17v18m1-17v17m1-18v18m1-19v18m1-17v18m1-16v15m1-17v17m1-18v18m1-17v18m1-18v18m1-17v17m1-18v19m1-18v16m1-17v18m1-17v18m1-17v15m1-16v16m1-17v17m1-16v16m1-16v16m1-15v14m1-14v15m1-16v16m1-17v18m1-18v17m1-16v17m1-17v17m1-17v16m1-15v16m1-17v17m1-17v16m1-16v17m1-17v16m1-16v15m1-16v18m1-17v15m1-15v16m1-17v17m1-16v16m1-15v14m1-14v15m1-16v16m1-17v16m1-16v17m1-17v18m1-18v18m1-17v17m1-16v16m1-18v17m1-16v16m1-17v18m1-17v17m1-17v17m1-16v16m1-18v18m1-17v16m1-17v17m1-16v15m1-15v16m1-17v17m1-16v15m1-15v16m1-15v16m1-18v17m1-17v17m1-16v16m1-18v19m1-16v16m1-17v17m1-16v15m1-15v14m1-15v16m1-16v16m1-17v17m1-17v17m1-16v16m1-16v16m1-17v17m1-17v18m1-18v18m1-16v16m1-17v16m1-17v17m1-16v15m1-14v14m1-16v16m1-15v16m1-16v17m1-18v18m1-18v18m1-18v17m1-16v17m1-18v18m1-18v18m1-17v15m1-15v15m1-16v17m1-16v17m1-17v17m1-16v15m1-15v17m1-17v14m1-14v15m1-16v16m1-16v16m1-16v16m1-15v13m1-15v17m1-15v14"/><path stroke="#707000" d="M22 86v15m1-14v13m1-13v13m1-13v15m1-14v13m1-14v13m1-12v12m1-13v14m1-14v15m1-15v13m1-13v13m1-14v16m1-15v14m1-14v14m1-14v15m1-15v15m1-16v14m1-12v12m1-13v14m1-15v15m1-14v14m1-13v13m1-15v14m1-13v13m1-13v15m1-14v13m1-14v14m1-14v13m1-13v13m1-14v15m1-14v14m1-13v13m1-14v15m1-16v15m1-13v13m1-14v14m1-13v13m1-13v13m1-14v14m1-14v15m1-14v12m1-13v14m1-15v15m1-15v15m1-14v14m1-15v15m1-15v15m1-13v12m1-12v13m1-13v12m1-13v13m1-14v16m1-15v15m1-16v16m1-15v13m1-12v14m1-14v13m1-13v13m1-14v14m1-14v14m1-14v13m1-13v14m1-13v12m1-13v14m1-13v13m1-13v14m1-16v15m1-14v13m1-12v14m1-15v14m1-14v14m1-14v14m1-15v15m1-13v13m1-14v14m1-14v14m1-14v14m1-15v15m1-14v15m1-15v15m1-15v14m1-13v13m1-14v14m1-13v12m1-13v15m1-15v14m1-15v16m1-14v12m1-13v14m1-14v15m1-13v11m1-13v14m1-14v14m1-14v13m1-14v16m1-16v15m1-14v14m1-14v14m1-13v13m1-14v14m1-14v14m1-14v13m1-13v14m1-14v14m1-14v14m1-14v14m1-14v15m1-15v14m1-13v13m1-14v15m1-16v16m1-14v13m1-14v14m1-14v14m1-13v13m1-13v13m1-13v14m1-14v12m1-13v14m1-15v15m1-14v14m1-14v14m1-15v14m1-13v14m1-15v16m1-15v14m1-15v15m1-14v14m1-15v14m1-13v14m1-14v14m1-13v12m1-13v14m1-14v15m1-14v13m1-14v14m1-15v15m1-14v13m1-14v14m1-13v14m1-15v16m1-15v15m1-17v16m1-14v13m1-13v14m1-15v14m1-13v14m1-15v16m1-15v14m1-14v14m1-14v15m1-15v14m1-13v13m1-13v14m1-15v14m1-14v14m1-14v15m1-16v15m1-13v14m1-15v12m1-13v14m1-13v14m1-15v15m1-15v16m1-14v13m1-15v15m1-13v13m1-14v15m1-15v13m1-13v13m1-12v13m1-14v15m1-15v14m1-15v15m1-13v13m1-15v15m1-14v14m1-14v13m1-15v16m1-14v13m1-12v14m1-14v13m1-13v12m1-13v15m1-14v14m1-16v15m1-14v14m1-14v15m1-15v14m1-15v16m1-15v14m1-14v14m1-13v14m1-16v16m1-15v13m1-13v14m1-14v14m1-15v16m1-14v13m1-14v14m1-14v14m1-15v15m1-15v15m1-13v13m1-14v14m1-13v13m1-14v14m1-15v15m1-14v13m1-13v16m1-17v15m1-13v13m1-15v16m1-16v14m1-12v14m1-14v13m1-15v14m1-14v15m1-15v15m1-14v14m1-15v16m1-15v14m1-14v14m1-14v13m1-13v15m1-14v12m1-12v13m1-14v13m1-12v13m1-13v12m1-13v13m1-14v15m1-14v13m1-13v15m1-14v14m1-17v17m1-15v14m1-14v13m1-14v16m1-16v16m1-15v16m1-17v14m1-12v13m1-15v14m1-13v14m1-14v15m1-14v12m1-13v15m1-16v16m1-14v13m1-14v14m1-14v14m1-14v14m1-13v13m1-15v15m1-14v14m1-15v15m1-14v14m1-15v15m1-13v12m1-12v13m1-14v13m1-12v13m1-14v14m1-15v16m1-15v15m1-16v16m1-14v13m1-15v15m1-14v16m1-16v14m1-14v13m1-13v13m1-13v14m1-13v13m1-14v14m1-14v15m1-15v15m1-16v14m1-13v13m1-13v13m1-14v16m1-14v12m1-13v14m1-14v14m1-14v15m1-14v12m1-13v14m1-13v13m1-14v14m1-13v13m1-14v14m1-13v12m1-13v14m1-13v13m1-15v16m1-15v14m1-13v14m1-14v11m1-12v14m1-12v12m1-15v15m1-14v14m1-15v15m1-13v14m1-15v14m1-14v13m1-13v13m1-13v14m1-14v15m1-14v12m1-13v14m1-15v16m1-15v14m1-13v14m1-16v15m1-14v14m1-14v13m1-12v14m1-14v13m1-14v14m1-14v14m1-15v15m1-14v14m1-13v13m1-14v13m1-13v14m1-14v14m1-14v14m1-15v15m1-14v14m1-13v13m1-14v15m1-15v14m1-13v13m1-13v13m1-15v15m1-15v15m1-14v14m1-14v14m1-13v13m1-15v14m1-13v15m1-15v13m1-13v15m1-16v14m1-13v14m1-15v14m1-12v13m1-14v14m1-13v14m1-16v17m1-17v15m1-14v14m1-14v14m1-15v14m1-13v13m1-14v15m1-14v14m1-14v13m1-14v16m1-15v14m1-13v14m1-14v12m1-13v13m1-12v14m1-15v13m1-12v13m1-15v14m1-13v14m1-14v14m1-14v15m1-15v14m1-13v12m1-13v13m1-13v13m1-12v13m1-13v14m1-15v14m1-15v16m1-15v13m1-14v14m1-14v15m1-13v12m1-14v16m1-16v15m1-13v14m1-16v15m1-15v14m1-13v13m1-12v13m1-14v13m1-13v14m1-15v14m1-13v15m1-14v13m1-13v12m1-14v15m1-13v13m1-14v15m1-16v15m1-15v15m1-15v16m1-16v15m1-12v11m1-13v14m1-15v16m1-15v14m1-13v13m1-14v15m1-14v12m1-14v15m1-14v13m1-14v16m1-16v16m1-15v15m1-16v14m1-12v14m1-16v16m1-15v13m1-14v15m1-14v12m1-12v13m1-13v14m1-15v15m1-15v16m1-14v12m1-12v13m1-13v14m1-15v14m1-14v14m1-15v15m1-15v15m1-14v14m1-13v12m1-13v14m1-14v14m1-14v13m1-13v14m1-14v14m1-15v15m1-15v14m1-13v13m1-13v14m1-15v14m1-12v13m1-14v13m1-13v13m1-13v15m1-15v14m1-15v15m1-14v14m1-13v11m1-13v15m1-15v16m1-14v14m1-16v15m1-14v14m1-14v13m1-13v14m1-13v13m1-13v13m1-14v14m1-15v15m1-13v14m1-14v14m1-15v14m1-14v14m1-15v15m1-14v14m1-13v14m1-14v14m1-16v15m1-14v14m1-14v15m1-16v15m1-15v15m1-14v13m1-13v14m1-14v14m1-16v17m1-15v15m1-16v16m1-16v15m1-15v16m1-13v11m1-13v15m1-16v15m1-15v15m1-14v14m1-15v16m1-14v13m1-14v15m1-15v14m1-14v14m1-14v13m1-13v14m1-14v15m1-15v14m1-14v14m1-15v14m1-13v14m1-15v15m1-14v14m1-14v15m1-16v15m1-14v14m1-14v13m1-14v15m1-13v12m1-14v14m1-12v13m1-14v14m1-14v14m1-15v14m1-15v16m1-15v14m1-13v14m1-14v14m1-14v15m1-15v14m1-15v16m1-14v14m1-14v12m1-13v14m1-14v14m1-14v13m1-13v15m1-14v12m1-13v14m1-14v14m1-14v14m1-13v13m1-14v15m1-15v14m1-14v14m1-13v13m1-15v15m1-14v14m1-14v13m1-12v13m1-14v14m1-14v14m1-14v15m1-15v13m1-13v15m1-14v13m1-15v13m1-11v11m1-11v13m1-14v14m1-14v15m1-14v12m1-11v11m1-13v13m1-13v14m1-14v14m1-15v14m1-12v13m1-14v15m1-15v13m1-14v16m1-14v12m1-14v15m1-14v15m1-15v13m1-13v14m1-14v14m1-15v15m1-14v14m1-13v13m1-14v13m1-13v14m1-15v14m1-13v14m1-14v14m1-14v14m1-13v12m1-14v15m1-13v13m1-13v12m1-13v14m1-14v14m1-14v14m1-14v14m1-13v13m1-13v14m1-15v15m1-15v14m1-14v14m1-14v13m1-14v15m1-14v15m1-16v16m1-15v14m1-14v14m1-14v14m1-14v15m1-14v14m1-15v15m1-16v15m1-14v15m1-16v15m1-16v16m1-14v14m1-13v13m1-14v14m1-15v15m1-14v14m1-14v14m1-14v13m1-13v13m1-13v13m1-14v15m1-14v13m1-12v13m1-15v16m1-15v15m1-16v16m1-15v14m1-13v13m1-14v15m1-16v15m1-13v13m1-14v14m1-14v13m1-12v12m1-13v14m1-15v14m1-13v15m1-15v15m1-14v13m1-14v14m1-14v15m1-15v14m1-14v13m1-13v13m1-13v14m1-15v15m1-14v13m1-13v14m1-15v15m1-14v14m1-13v13m1-14v14m1-14v13m1-13v13m1-12v13m1-14v14m1-14v15m1-16v14m1-13v14m1-13v13m1-13v12m1-13v14m1-14v13m1-14v15m1-14v14m1-14v14m1-14v14m1-16v16m1-13v12m1-13v14m1-13v12m1-12v13m1-13v12m1-12v14m1-15v14m1-14v14m1-14v13m1-13v13m1-14v14m1-13v15m1-15v14m1-14v14m1-15v16m1-15v14m1-14v15m1-14v13m1-13v14m1-15v14m1-13v13m1-14v15m1-16v16m1-15v14m1-13v14m1-15v13m1-12v14m1-15v15m1-14v12m1-13v14m1-15v15m1-15v15m1-14v13m1-13v13m1-13v14m1-13v13m1-13v13m1-13v12m1-12v12m1-12v13m1-14v13m1-12v12m1-12v14m1-14v14m1-16v16m1-15v13m1-13v13m1-14v15m1-14v14m1-14v15m1-15v13m1-14v14m1-15v16m1-15v15m1-14v14m1-14v14m1-15v15m1-15v16m1-15v15m1-16v15m1-15v15m1-15v14m1-13v15m1-16v16m1-15v14m1-14v14m1-14v13m1-12v14m1-15v14m1-14v15m1-15v14m1-14v13m1-12v13m1-15v15m1-14v15m1-16v14m1-13v13m1-13v14m1-14v13m1-13v14m1-14v14m1-13v12m1-13v14m1-14v14m1-13v13m1-14v13m1-13v13m1-14v14m1-13v14m1-14v14m1-13v14m1-15v14m1-14v13m1-14v16m1-15v14m1-14v14m1-14v15m1-15v14m1-14v14m1-14v14m1-14v15m1-15v13m1-14v15m1-14v14m1-13v12m1-13v14m1-14v14m1-15v15m1-13v13m1-15v16m1-15v14m1-14v13m1-13v14m1-15v16m1-15v15m1-16v15m1-14v13m1-13v14m1-14v14m1-15v14m1-14v15m1-14v13m1-13v14m1-14v14m1-13v14m1-16v15m1-14v14m1-14v15m1-16v16m1-15v15m1-14v14m1-16v14m1-13v14m1-15v15m1-14v14m1-14v15m1-16v15m1-14v13m1-13v14m1-14v15m1-15v13m1-12v14m1-13v13m1-15v13m1-13v13m1-12v12m1-13v14m1-12v12m1-14v14m1-14v14m1-14v14m1-14v14m1-15v14m1-13v14m1-14v14m1-14v14m1-14v15m1-15v13m1-12v14m1-15v14m1-14v13m1-13v14m1-13v12m1-13v13m1-13v14m1-14v14m1-15v15m1-14v14m1-14v14m1-14v14m1-14v14m1-13v14m1-15v13m1-13v13m1-13v14m1-14v13m1-13v14m1-14v15m1-15v14m1-15v14m1-13v14m1-14v13m1-13v14m1-14v14m1-13v11m1-12v14m1-15v16m1-14v12m1-14v16m1-15v14m1-14v15m1-14v13m1-13v12m1-13v14m1-14v14m1-15v15m1-15v14m1-13v14m1-14v15m1-14v13m1-15v15m1-15v15m1-14v14m1-15v14m1-13v14m1-14v13m1-12v13m1-14v14m1-15v15m1-14v14m1-14v13m1-14v15m1-14v14m1-15v16m1-16v15m1-14v14m1-15v16m1-16v15m1-14v15m1-15v14m1-14v13m1-14v15m1-14v14m1-13v13m1-14v13m1-14v16m1-15v14m1-14v13m1-12v13m1-14v14m1-14v14m1-13v13m1-15v16m1-16v15m1-14v15m1-15v14m1-15v15m1-15v15m1-14v14m1-14v14m1-14v15m1-15v13m1-13v15m1-14v13m1-14v14m1-13v13m1-14v14m1-14v14m1-14v14m1-13v13m1-14v13m1-12v13m1-15v15m1-15v15m1-14v15m1-15v13m1-12v13m1-14v14m1-14v14m1-14v14m1-13v14m1-14v12m1-13v13m1-14v15m1-14v13m1-12v14m1-15v13m1-13v15m1-14v13m1-13v12m1-13v14m1-14v13m1-13v15m1-16v16m1-16v16m1-14v13m1-14v16m1-16v14m1-14v15m1-16v15m1-14v14m1-13v13m1-14v14m1-15v15m1-15v15m1-15v15m1-13v12m1-13v15m1-15v14m1-13v12m1-13v14m1-13v12m1-13v14m1-13v13m1-14v14m1-14v13m1-12v12m1-12v13m1-14v15m1-14v12m1-13v14m1-13v14m1-15v14m1-14v14m1-13v13m1-13v12m1-14v15m1-15v16m1-15v14m1-13v13m1-14v13m1-13v14m1-14v13m1-13v14m1-14v14m1-14v14m1-13v13m1-15v15m1-15v14m1-14v15m1-15v15m1-14v14m1-15v15m1-13v12m1-14v15m1-14v14m1-14v15m1-15v14m1-14v14m1-13v14m1-15v13m1-13v13m1-14v15m1-13v14m1-15v14m1-13v12m1-14v16m1-16v14"/><path stroke="#969600" d="M22 88v12m1-11v10m1-10v9m1-9v11m1-10v9m1-10v10m1-10v10m1-11v12m1-12v12m1-11v10m1-10v11m1-13v12m1-11v12m1-12v12m1-11v11m1-12v12m1-11v11m1-11v11m1-12v11m1-12v13m1-12v11m1-10v10m1-10v10m1-11v11m1-10v12m1-12v10m1-11v12m1-11v10m1-10v9m1-10v12m1-12v11m1-9v8m1-10v12m1-13v13m1-10v9m1-11v11m1-9v9m1-10v11m1-11v10m1-10v10m1-11v12m1-12v11m1-11v12m1-11v10m1-11v12m1-12v11m1-11v12m1-11v10m1-10v11m1-11v10m1-11v10m1-11v14m1-12v10m1-11v12m1-12v11m1-11v11m1-10v10m1-11v11m1-10v10m1-10v11m1-12v10m1-8v10m1-11v10m1-11v11m1-11v11m1-10v11m1-11v10m1-9v9m1-10v11m1-12v12m1-12v12m1-11v11m1-13v13m1-11v10m1-10v11m1-11v11m1-11v11m1-11v11m1-12v13m1-13v12m1-11v11m1-11v11m1-12v12m1-11v11m1-11v11m1-12v12m1-13v13m1-11v10m1-11v12m1-12v12m1-10v10m1-10v10m1-12v12m1-11v11m1-12v13m1-13v11m1-11v11m1-10v10m1-10v11m1-11v10m1-11v12m1-12v11m1-11v12m1-12v11m1-12v13m1-11v11m1-11v10m1-11v12m1-12v11m1-10v11m1-13v13m1-11v10m1-10v11m1-12v12m1-10v9m1-10v9m1-10v11m1-10v10m1-10v11m1-11v10m1-10v10m1-11v12m1-12v11m1-11v12m1-12v12m1-11v10m1-11v12m1-12v12m1-12v11m1-11v11m1-10v11m1-11v9m1-9v10m1-11v12m1-12v11m1-10v10m1-11v12m1-11v11m1-11v10m1-10v11m1-12v12m1-11v11m1-13v13m1-12v10m1-10v12m1-11v10m1-10v11m1-13v14m1-12v11m1-11v10m1-11v12m1-11v11m1-11v11m1-12v12m1-11v11m1-11v10m1-10v12m1-12v11m1-12v12m1-11v9m1-9v10m1-10v10m1-11v11m1-11v12m1-10v9m1-10v11m1-11v11m1-12v11m1-11v11m1-10v11m1-11v11m1-11v11m1-12v11m1-12v12m1-11v12m1-13v12m1-11v12m1-11v10m1-11v12m1-11v10m1-10v10m1-10v10m1-11v11m1-11v11m1-10v10m1-10v11m1-11v11m1-11v10m1-10v11m1-12v12m1-11v11m1-11v11m1-10v10m1-12v12m1-11v11m1-11v10m1-11v11m1-11v12m1-12v11m1-11v13m1-12v9m1-10v12m1-12v12m1-11v10m1-10v10m1-11v12m1-11v10m1-11v11m1-12v12m1-11v13m1-13v12m1-11v10m1-10v11m1-11v11m1-11v10m1-10v11m1-12v12m1-11v11m1-12v11m1-11v11m1-11v12m1-11v11m1-11v10m1-10v10m1-10v10m1-10v10m1-10v11m1-12v10m1-9v11m1-11v10m1-11v11m1-10v10m1-10v10m1-11v13m1-12v10m1-12v13m1-12v12m1-11v10m1-11v12m1-11v11m1-12v13m1-12v10m1-10v10m1-11v12m1-10v10m1-10v9m1-10v10m1-11v12m1-13v13m1-11v10m1-11v11m1-10v9m1-9v11m1-11v10m1-11v11m1-10v11m1-13v14m1-12v10m1-11v11m1-10v11m1-10v10m1-12v12m1-12v12m1-12v11m1-10v11m1-12v11m1-12v13m1-11v12m1-13v12m1-12v13m1-13v12m1-12v10m1-11v13m1-12v11m1-10v11m1-12v12m1-12v12m1-11v11m1-12v12m1-11v10m1-10v10m1-11v12m1-11v11m1-12v11m1-11v12m1-12v12m1-12v11m1-10v10m1-10v11m1-12v12m1-10v10m1-13v12m1-10v9m1-9v10m1-10v11m1-12v12m1-12v11m1-10v10m1-10v9m1-9v11m1-11v11m1-11v10m1-10v10m1-11v12m1-11v11m1-12v12m1-11v11m1-12v11m1-10v11m1-12v12m1-12v11m1-11v11m1-11v12m1-11v10m1-9v10m1-12v12m1-12v11m1-9v9m1-9v10m1-11v10m1-11v12m1-11v11m1-12v11m1-12v13m1-11v10m1-10v11m1-11v11m1-11v10m1-10v10m1-11v11m1-10v11m1-10v9m1-11v13m1-13v11m1-10v11m1-11v10m1-10v11m1-12v11m1-11v12m1-12v12m1-11v11m1-12v11m1-11v12m1-11v9m1-9v10m1-11v12m1-11v11m1-12v11m1-10v10m1-11v11m1-10v10m1-11v13m1-12v9m1-10v11m1-11v12m1-12v12m1-11v11m1-12v11m1-11v11m1-10v11m1-12v12m1-12v12m1-12v11m1-10v11m1-12v11m1-10v11m1-11v11m1-10v9m1-11v11m1-11v12m1-12v11m1-12v12m1-10v11m1-11v10m1-10v11m1-11v10m1-11v11m1-10v12m1-12v10m1-11v12m1-11v10m1-11v12m1-11v10m1-11v11m1-10v11m1-12v12m1-10v11m1-13v12m1-12v11m1-10v10m1-10v11m1-12v11m1-9v9m1-11v11m1-11v12m1-11v11m1-12v11m1-11v12m1-10v8m1-9v11m1-12v11m1-11v11m1-10v11m1-11v10m1-9v10m1-11v11m1-12v11m1-11v12m1-11v11m1-11v11m1-11v9m1-9v10m1-12v11m1-11v14m1-13v12m1-11v11m1-11v10m1-9v10m1-12v11m1-11v11m1-10v11m1-11v10m1-10v10m1-11v12m1-12v11m1-11v12m1-11v10m1-11v12m1-12v13m1-13v11m1-10v11m1-12v12m1-11v10m1-10v10m1-9v9m1-10v11m1-11v10m1-11v11m1-9v9m1-11v12m1-12v11m1-11v11m1-10v11m1-11v11m1-13v12m1-10v10m1-11v11m1-11v11m1-11v12m1-11v11m1-11v11m1-11v11m1-12v10m1-10v11m1-11v12m1-12v12m1-12v12m1-12v11m1-11v11m1-10v10m1-11v12m1-11v10m1-10v10m1-11v11m1-11v12m1-11v10m1-11v12m1-11v11m1-12v11m1-10v11m1-11v11m1-11v10m1-11v12m1-12v12m1-11v10m1-11v12m1-13v12m1-10v10m1-11v11m1-9v9m1-11v11m1-11v11m1-11v12m1-12v11m1-11v13m1-12v9m1-9v11m1-13v12m1-10v10m1-10v10m1-11v12m1-11v10m1-10v10m1-10v10m1-11v12m1-11v10m1-10v10m1-10v10m1-10v11m1-12v11m1-11v12m1-11v10m1-10v11m1-12v11m1-10v11m1-12v12m1-12v11m1-11v11m1-11v12m1-11v9m1-10v11m1-11v11m1-10v11m1-12v13m1-13v11m1-12v13m1-12v12m1-11v11m1-11v9m1-9v11m1-12v12m1-12v11m1-10v11m1-11v9m1-10v12m1-12v11m1-11v12m1-11v11m1-12v11m1-10v11m1-13v13m1-12v12m1-10v10m1-11v11m1-12v12m1-12v11m1-10v11m1-12v11m1-10v10m1-12v13m1-10v10m1-12v12m1-12v12m1-11v10m1-12v13m1-12v12m1-11v11m1-12v11m1-9v9m1-9v9m1-11v12m1-11v11m1-11v11m1-11v10m1-10v11m1-12v12m1-12v12m1-13v12m1-11v12m1-11v11m1-12v11m1-11v11m1-9v9m1-11v11m1-12v14m1-13v12m1-12v12m1-12v12m1-11v10m1-10v10m1-10v11m1-11v10m1-10v10m1-11v11m1-11v12m1-11v11m1-12v11m1-10v10m1-10v11m1-11v10m1-10v10m1-11v11m1-11v12m1-11v12m1-13v12m1-12v12m1-11v11m1-12v13m1-13v10m1-10v11m1-10v11m1-12v11m1-11v12m1-12v12m1-11v11m1-11v11m1-11v11m1-12v11m1-11v11m1-10v11m1-11v10m1-10v11m1-12v11m1-12v13m1-11v11m1-11v10m1-10v10m1-11v12m1-12v11m1-11v12m1-12v11m1-11v12m1-11v9m1-9v10m1-11v12m1-12v11m1-11v11m1-10v12m1-13v12m1-11v11m1-12v11m1-10v10m1-12v12m1-10v10m1-10v10m1-9v9m1-11v11m1-10v11m1-12v11m1-11v12m1-11v11m1-11v10m1-10v10m1-11v12m1-11v11m1-11v9m1-9v10m1-11v12m1-12v11m1-10v10m1-11v12m1-13v13m1-12v12m1-11v10m1-10v11m1-12v11m1-10v9m1-10v11m1-11v12m1-11v10m1-10v10m1-10v10m1-10v10m1-11v12m1-11v10m1-10v10m1-11v12m1-11v11m1-11v11m1-11v10m1-11v11m1-10v11m1-12v11m1-10v9m1-9v11m1-12v11m1-10v11m1-10v9m1-10v12m1-12v10m1-11v12m1-11v10m1-11v11m1-11v12m1-12v12m1-12v12m1-11v11m1-12v12m1-11v11m1-11v11m1-12v11m1-10v11m1-11v11m1-12v11m1-10v11m1-11v10m1-10v10m1-10v10m1-10v11m1-11v9m1-9v9m1-10v12m1-12v12m1-12v11m1-11v12m1-12v12m1-10v9m1-10v10m1-10v10m1-10v10m1-9v10m1-12v12m1-11v10m1-10v11m1-12v12m1-12v12m1-12v11m1-11v11m1-10v10m1-11v12m1-12v13m1-12v10m1-11v11m1-12v13m1-11v9m1-10v11m1-10v10m1-10v11m1-12v11m1-11v13m1-13v11m1-11v10m1-10v11m1-10v11m1-12v11m1-10v10m1-10v10m1-9v9m1-11v12m1-12v12m1-11v11m1-11v11m1-12v11m1-10v10m1-11v11m1-11v12m1-12v12m1-11v11m1-11v10m1-11v11m1-11v12m1-12v12m1-11v10m1-11v12m1-12v11m1-11v11m1-11v10m1-10v12m1-13v13m1-12v12m1-12v11m1-10v11m1-11v10m1-11v12m1-12v12m1-11v11m1-11v11m1-11v11m1-12v12m1-11v11m1-11v10m1-11v11m1-11v11m1-11v12m1-13v12m1-10v10m1-11v11m1-10v10m1-12v13m1-11v10m1-10v11m1-12v11m1-10v10m1-10v10m1-11v12m1-12v13m1-13v11m1-9v9m1-10v10m1-11v11m1-11v11m1-11v12m1-12v12m1-12v12m1-12v11m1-11v12m1-12v11m1-12v12m1-10v12m1-12v11m1-13v12m1-11v12m1-12v11m1-11v12m1-12v12m1-12v11m1-11v12m1-12v11m1-11v11m1-10v10m1-11v11m1-11v12m1-11v11m1-10v10m1-11v10m1-10v10m1-10v10m1-11v12m1-10v10m1-12v13m1-12v11m1-11v10m1-11v11m1-11v11m1-11v12m1-12v12m1-13v13m1-12v12m1-10v10m1-11v11m1-11v11m1-12v11m1-10v10m1-10v10m1-10v11m1-11v11m1-11v10m1-11v10m1-9v10m1-10v11m1-12v12m1-11v11m1-11v11m1-13v12m1-10v10m1-10v11m1-11v10m1-11v12m1-11v10m1-11v12m1-12v11m1-11v11m1-10v11m1-11v10m1-11v11m1-10v9m1-9v11m1-12v12m1-12v11m1-11v12m1-11v10m1-11v11m1-11v10m1-9v9m1-10v13m1-13v12m1-11v10m1-10v10m1-10v10m1-10v11m1-11v10m1-12v13m1-12v11m1-10v10m1-10v10m1-11v11m1-9v9m1-11v11m1-11v12m1-12v12m1-12v13m1-13v12m1-12v12m1-13v13m1-12v13m1-12v11m1-12v12m1-13v13m1-12v11m1-10v10m1-10v10m1-10v10m1-10v10m1-10v11m1-11v11m1-12v12m1-12v12m1-12v12m1-12v11m1-11v12m1-12v11m1-11v12m1-12v11m1-10v11m1-11v10m1-10v11m1-12v12m1-12v12m1-12v13m1-13v12m1-12v12m1-12v12m1-12v11m1-11v12m1-12v12m1-10v10m1-11v9m1-10v11m1-11v12m1-11v10m1-11v11m1-10v11m1-10v10m1-13v12m1-11v11m1-11v12m1-11v10m1-10v11m1-11v10m1-10v11m1-11v9m1-8v11m1-11v9m1-11v11m1-11v12m1-12v11m1-11v12m1-12v10m1-10v12m1-10v9m1-9v8m1-10v12m1-11v10m1-11v11m1-11v12m1-12v11m1-10v11m1-11v11m1-12v12m1-11v11m1-11v11m1-11v10m1-10v10m1-10v11m1-12v13m1-12v11m1-12v11m1-10v9m1-10v12m1-12v13m1-12v10m1-11v11m1-9v9m1-10v10m1-10v10m1-11v12m1-12v12m1-11v11m1-12v11m1-9v9m1-10v10m1-11v12m1-11v11m1-11v11m1-11v9m1-9v10m1-10v10m1-11v12m1-12v12m1-12v11m1-10v10m1-10v9m1-11v12m1-11v11m1-10v10m1-11v11m1-9v10m1-11v10m1-11v12m1-13v12m1-10v11m1-11v11m1-12v12m1-11v10m1-11v11m1-10v10m1-11v12m1-11v10m1-11v12m1-10v10m1-12v12m1-11v9m1-10v12m1-12v12m1-12v12m1-12v11m1-10v9m1-10v13m1-12v10"/><path stroke="#cdcd00" d="M22 89v10m1-9v8m1-8v7m1-7v10m1-10v9m1-10v9m1-8v8m2-9v10m1-9v8m1-9v9m1-10v11m1-10v10m1-10v10m1-9v8m1-9v10m1-10v10m1-9v8m1-8v9m1-11v10m1-9v10m1-9v8m1-9v10m1-9v8m1-8v8m1-8v9m1-10v10m2-9v8m2-9v10m1-8v7m1-8v9m1-10v10m1-9v9m1-10v9m2-7v8m2-9v9m2-9v9m1-10v10m1-10v9m2-9v10m1-11v10m1-8v9m1-8v8m1-10v9m1-8v8m1-9v10m1-9v8m1-8v8m1-8v8m2-8v8m1-9v9m1-8v8m1-9v10m1-9v8m1-9v9m1-9v9m1-8v8m1-8v8m1-9v10m1-10v9m1-8v8m1-8v9m1-10v9m1-9v10m1-9v9m1-11v11m1-10v9m1-8v9m1-10v10m1-10v9m1-8v9m1-10v10m1-9v9m1-10v9m1-9v9m1-9v10m1-9v9m2-10v10m1-10v10m2-10v10m2-9v8m1-8v8m1-9v10m1-10v10m1-10v11m1-11v10m1-9v8m2-9v10m1-10v10m1-10v10m1-10v8m1-8v10m1-10v9m1-9v10m1-10v9m1-8v8m1-9v10m1-9v8m1-8v10m1-11v10m2-9v9m2-9v9m2-10v10m1-8v7m1-8v9m1-9v9m1-9v8m1-9v10m1-10v9m1-9v9m1-9v11m1-10v8m1-9v9m1-9v10m2-10v10m1-10v10m1-10v9m2-8v9m1-10v9m1-8v9m2-9v9m1-11v10m1-8v9m1-9v8m2-9v9m1-8v8m1-8v9m1-10v10m1-9v9m1-10v10m1-10v10m1-10v9m1-8v10m1-9v8m1-8v7m1-8v10m1-11v10m1-9v8m1-9v10m1-9v9m1-9v9m1-9v8m1-9v9m1-8v9m1-10v10m1-10v11m1-10v8m1-9v9m1-9v10m1-10v10m1-9v9m1-10v9m1-8v9m1-9v8m1-9v10m1-11v10m2-9v10m2-9v9m1-11v11m1-9v8m1-8v9m1-9v8m1-8v8m1-9v10m2-9v9m1-10v10m1-9v9m1-10v9m1-9v10m1-9v8m1-9v9m1-8v9m1-10v10m1-9v9m1-9v9m1-11v11m1-10v9m1-8v8m1-9v11m1-11v9m1-9v10m1-10v10m1-10v9m1-9v9m1-8v9m1-9v8m2-9v9m1-9v10m1-10v10m1-9v9m1-9v8m1-8v8m1-8v8m1-8v9m1-10v10m1-10v10m1-9v9m1-9v9m1-10v10m1-9v8m1-8v8m1-9v9m1-8v9m1-9v8m1-8v9m1-10v9m1-8v9m1-8v8m1-9v8m1-9v9m1-8v8m1-10v11m1-9v9m1-11v11m1-9v9m1-9v8m1-9v10m2-10v11m1-11v9m1-8v8m1-9v10m2-8v8m1-9v8m1-9v10m1-11v12m1-10v9m1-10v9m1-8v7m1-7v8m1-9v9m1-9v9m1-9v10m1-11v11m1-10v8m2-7v9m1-9v8m1-9v10m1-9v8m1-8v8m1-9v10m1-9v9m1-11v11m1-9v10m2-12v11m2-9v7m1-8v9m1-9v10m1-10v10m2-10v11m1-11v10m1-10v10m1-9v8m1-8v8m1-8v10m1-10v9m1-10v9m1-9v10m1-11v11m1-10v9m1-8v8m1-8v9m1-11v11m1-9v9m1-10v10m1-9v8m1-8v8m1-9v9m1-10v11m1-9v8m1-8v9m1-9v8m1-8v9m1-9v8m1-9v9m1-8v8m1-9v10m1-9v9m2-10v9m1-9v9m1-8v9m1-9v9m1-9v8m1-8v8m1-9v10m1-9v9m1-8v9m1-10v8m1-9v9m1-8v8m1-8v8m1-8v8m1-8v8m1-9v10m2-10v10m1-9v8m1-8v8m1-8v9m1-9v8m1-8v8m1-9v10m1-9v9m2-10v11m1-10v9m1-9v9m1-9v9m1-10v9m1-9v10m3-9v8m1-9v10m1-9v10m1-10v8m1-8v8m1-9v10m1-10v9m1-8v8m1-8v8m2-9v10m2-10v9m2-9v9m1-8v9m1-9v8m1-9v9m1-8v8m1-9v9m1-9v9m2-9v10m1-9v8m1-9v9m1-8v9m1-9v8m1-8v8m1-9v9m1-9v10m2-10v10m1-9v8m1-9v10m1-9v8m1-9v8m1-7v8m1-8v9m1-10v8m1-9v11m1-10v9m1-8v8m1-9v10m1-10v9m1-9v10m1-10v10m1-9v9m1-10v9m1-9v10m1-9v8m2-9v10m1-10v10m1-10v9m1-8v9m1-9v8m1-9v9m1-9v10m1-9v8m1-8v9m1-10v9m1-8v9m1-10v9m2-8v8m1-8v9m1-10v10m2-9v9m1-10v10m1-9v8m1-9v9m1-9v9m1-9v10m1-10v10m1-10v10m2-8v7m1-9v10m2-9v10m1-10v8m1-9v9m1-10v10m2-10v12m1-11v9m1-9v10m1-9v9m1-9v8m1-8v9m2-10v10m1-10v9m1-8v7m1-8v9m1-9v9m1-8v8m1-8v8m1-9v10m2-11v11m1-9v8m1-8v9m2-9v9m1-9v8m1-9v10m1-10v10m1-10v10m1-9v8m1-9v10m1-9v7m1-9v11m1-10v9m1-9v11m1-11v10m1-10v10m1-10v9m2-8v9m1-9v8m1-8v8m1-10v11m1-10v11m2-11v10m1-10v10m1-10v10m1-9v9m1-10v11m1-10v8m1-9v10m1-10v11m1-10v9m1-11v11m2-9v8m1-8v8m2-9v9m1-9v10m1-10v10m1-10v10m1-10v10m1-9v8m1-9v11m1-11v10m1-10v9m1-9v9m1-9v10m1-9v8m1-9v9m1-8v10m1-10v9m1-9v9m1-10v9m1-8v9m1-10v10m1-10v10m1-10v10m3-10v10m1-10v10m1-10v10m1-10v9m1-8v8m1-8v8m1-8v8m1-9v10m1-9v8m1-9v9m1-9v10m1-10v9m1-10v10m1-8v9m1-10v10m1-9v8m1-9v10m1-10v10m1-10v9m1-9v11m1-10v8m1-9v10m2-9v8m1-8v8m1-8v8m1-8v9m2-9v9m1-9v8m1-8v9m1-10v10m1-10v10m3-10v10m1-10v9m1-8v10m2-10v8m1-9v10m1-10v9m1-9v10m1-10v10m1-11v10m1-8v8m1-9v10m1-10v10m1-10v10m1-9v8m1-7v6m2-8v9m1-10v11m1-10v9m1-8v9m1-11v11m2-9v9m1-9v8m1-9v9m1-9v11m1-10v9m1-10v9m1-8v8m1-9v9m2-8v9m1-10v9m1-8v8m1-9v9m1-9v10m2-10v10m1-9v8m1-9v10m1-10v9m1-9v8m1-7v9m1-10v11m1-11v10m1-10v10m1-10v10m1-9v10m2-10v9m2-8v7m1-9v10m1-9v9m1-10v10m1-10v10m1-10v10m1-9v9m2-10v9m1-8v9m1-10v9m1-9v10m1-9v8m1-10v10m1-8v8m1-8v8m1-8v8m1-9v11m1-11v10m1-10v9m1-8v8m1-9v9m1-8v8m1-9v9m1-9v9m1-8v9m1-10v9m1-8v9m1-11v11m1-10v9m1-8v8m2-9v10m1-9v9m1-9v9m1-8v7m1-9v9m1-8v8m1-9v9m1-9v11m1-10v9m1-10v9m1-8v9m1-10v10m1-10v10m1-10v8m1-8v9m1-9v10m1-10v9m1-9v9m1-8v9m1-10v9m1-9v10m1-10v10m2-11v10m1-8v7m1-8v10m1-10v10m1-9v9m2-10v9m1-8v7m1-7v8m1-8v8m1-9v9m1-9v10m2-10v9m1-8v8m1-10v10m1-8v8m1-9v10m1-9v8m1-9v10m1-9v8m2-8v8m1-8v10m1-9v8m1-9v9m1-10v10m2-10v9m2-9v10m1-10v9m1-9v10m1-9v9m1-9v9m1-10v10m2-10v10m1-10v10m1-10v10m1-9v8m1-8v8m1-8v9m1-10v10m1-9v8m1-9v9m1-9v10m1-10v10m1-9v9m1-10v9m1-9v10m2-9v8m2-8v8m1-8v9m1-9v8m1-8v9m2-9v9m1-10v9m1-8v7m1-8v9m4-8v8m1-9v10m1-10v10m1-10v9m1-8v8m1-9v10m1-9v9m3-10v10m1-10v9m1-10v9m1-8v10m1-10v10m1-8v7m1-8v8m2-9v9m1-9v10m1-10v10m1-9v9m1-10v9m1-8v9m1-10v10m2-10v9m1-9v9m1-8v9m1-9v8m1-8v9m1-10v10m1-10v8m1-8v9m1-9v10m3-10v9m1-9v9m1-8v9m1-10v10m1-9v9m1-9v9m1-9v8m1-9v11m1-10v8m1-9v9m1-8v9m1-9v9m1-9v8m1-9v10m1-10v10m1-9v8m1-9v11m1-11v9m1-8v8m1-8v9m1-10v9m1-9v10m1-9v8m1-9v11m1-11v10m1-9v8m1-9v10m1-10v10m1-10v11m1-11v9m2-8v8m1-9v9m1-9v9m1-9v9m1-9v10m1-10v9m1-8v9m1-10v10m1-10v9m1-10v10m3-9v10m1-10v10m2-10v10m1-10v9m1-8v8m1-9v10m1-10v9m1-8v8m1-9v9m1-8v8m1-9v9m1-8v9m1-8v8m1-10v10m1-10v9m1-8v8m1-9v10m1-9v9m1-10v10m1-10v10m2-10v10m1-10v9m1-8v8m1-9v10m1-10v9m1-8v9m1-9v8m1-8v9m1-9v9m1-10v9m1-9v10m1-9v8m1-8v9m1-10v10m1-10v9m1-8v7m1-7v9m1-10v11m1-11v10m1-9v8m1-7v9m1-12v10m2-8v10m1-10v8m1-9v11m1-11v9m1-9v10m1-10v8m1-8v10m1-9v8m2-9v10m1-9v8m1-8v9m1-10v10m1-9v8m1-9v10m1-10v10m1-9v9m1-10v9m1-8v8m1-9v10m1-10v9m1-9v10m1-10v9m1-9v10m1-10v10m2-10v10m1-10v9m2-9v10m1-10v9m1-7v7m1-8v8m1-8v8m1-9v9m2-8v8m1-8v9m1-10v10m1-10v11m1-10v10m1-11v9m1-10v11m1-10v10m1-9v9m1-9v8m1-9v10m1-9v8m1-9v9m1-9v10m1-10v9m1-9v10m1-10v9m1-9v9m1-9v10m1-10v9m1-8v9m1-9v9m1-10v10m1-9v8m1-9v9m1-9v10m1-11v10m1-9v10m1-10v10m1-9v9m1-10v10m1-10v9m1-10v10m1-9v10m1-9v8m1-8v8m1-8v8m1-9v10m1-11v10m1-8v8m1-8v9m1-8v8m1-11v11m1-11v11m1-10v10m1-9v9m1-9v9m1-9v9m1-10v10m1-10v9m1-8v10m1-10v9m1-10v9m1-9v10m1-9v8m1-9v10m2-10v10m1-8v6m1-7v8m1-8v8m1-9v9m1-9v10m2-9v9m1-9v9m1-9v9m1-9v8m1-9v10m1-10v10m1-9v8m1-8v9m1-9v9m1-10v10m1-9v9m1-10v9m1-8v8m1-8v9m1-10v10m1-9v8m1-8v9m1-9v9m1-10v10m1-9v8m1-8v9m1-10v9m1-9v9m1-9v10m1-8v8m1-9v8m1-9v10m1-9v9m1-10v9m1-9v9m1-8v9m1-9v9m1-10v10m1-10v10m1-9v8m1-8v9m1-9v8m1-9v9m1-9v9m1-8v8m1-9v8m1-7v9m1-9v8m1-9v11m1-11v9m1-9v9m2-9v10m1-10v9m1-9v9m1-8v8m1-10v10m1-9v10m1-9v9m1-8v8m3-9v9m2-10v10m1-10v10m1-10v8m1-9v11"/><path stroke="#f6f600" d="M23 93v3m1-5v6m1-4v3m2-4v4m3-6v8m5-7v6m2-7v8m2-6v3m1-5v8m1-8v8m1-6v5m1-5v4m1-7v8m2-6v7m1-7v7m3-6v2m1-5v9m1-8v5m1-4v4m1-3v5m1-8v9m1-5v5m1-8v7m1-7v7m1-6v7m1-7v6m1-7v8m1-8v8m1-8v8m1-8v9m1-8v6m3-5v5m1-6v6m1-6v7m1-6v4m1-5v5m1-6v9m1-9v8m2-7v7m1-8v7m1-6v7m2-7v6m2-5v5m1-6v7m1-8v7m2-6v6m1-6v7m1-8v7m2-5v7m4-9v8m2-8v7m1-7v8m1-8v8m2-8v8m2-9v7m1-4v6m1-6v4m1-6v8m1-8v6m1-3v5m2-7v6m1-8v9m2-7v7m1-6v3m1-5v8m2-7v6m1-8v8m2-7v8m1-8v8m1-6v4m1-4v5m1-7v7m1-7v9m1-9v8m1-8v5m1-5v5m2-5v8m1-8v6m1-5v8m1-9v8m1-8v7m1-5v5m1-7v7m2-6v7m3-7v6m1-6v6m1-7v7m1-7v8m1-8v7m1-6v6m1-8v9m1-7v7m1-8v8m1-8v8m1-8v8m1-7v7m2-8v7m1-5v3m1-4v7m1-6v4m1-5v7m1-8v6m3-3v3m1-6v6m1-6v8m1-9v9m1-9v8m1-4v4m2-6v5m1-4v7m1-9v8m1-7v5m1-6v7m1-6v7m1-5v4m1-6v8m1-7v5m1-7v8m1-8v9m1-9v9m2-9v7m1-7v7m2-7v8m1-8v8m2-8v6m1-6v8m2-8v8m1-8v5m1-5v8m1-7v6m1-7v8m1-9v8m1-7v8m1-9v9m1-8v8m1-7v6m1-6v5m1-5v6m1-7v8m2-8v7m1-6v5m1-6v8m1-7v6m1-8v9m2-7v7m1-8v8m1-8v8m1-8v7m1-6v7m2-7v7m1-8v8m1-8v7m1-7v8m1-8v7m1-7v8m1-8v6m2-7v7m1-6v7m1-7v8m1-8v6m1-6v7m2-7v6m1-7v10m1-9v7m2-5v4m1-6v6m1-5v7m1-7v8m1-9v7m1-6v7m1-8v7m1-7v7m1-7v9m2-7v4m2-4v6m1-6v4m2-6v7m1-5v4m2-6v7m1-6v5m1-6v8m1-9v10m1-9v8m1-9v10m1-9v8m1-7v6m1-6v6m2-7v9m2-9v7m1-7v8m1-7v7m2-7v6m2-7v6m1-5v7m1-8v7m2-7v8m2-8v7m2-7v8m1-8v7m4-7v7m1-7v8m1-8v8m2-8v7m2-6v8m2-8v7m1-7v5m1-6v7m1-7v7m1-6v6m1-4v4m1-4v3m1-6v9m1-9v8m1-8v8m1-8v7m1-4v5m1-8v9m1-8v6m1-8v8m1-7v8m1-7v7m2-7v7m1-6v6m1-7v6m2-8v8m2-7v8m1-6v3m1-5v7m1-6v7m1-7v7m1-8v8m2-6v5m1-4v4m1-6v7m1-8v8m1-6v6m2-8v8m2-7v6m1-5v5m2-7v8m1-9v9m1-8v8m1-7v7m1-8v7m1-7v7m1-6v6m1-5v4m1-4v5m2-7v8m1-8v7m2-6v6m1-6v7m3-8v8m1-7v5m1-4v4m1-5v6m1-7v9m4-9v7m1-7v7m1-7v8m1-7v6m1-6v4m1-4v7m1-7v6m1-7v4m2-5v9m1-6v4m1-4v5m2-7v8m2-8v8m1-7v7m1-7v7m1-8v9m1-8v5m3-6v8m1-7v7m1-6v5m1-7v7m1-7v8m1-6v6m2-7v7m1-7v5m2-6v7m1-6v7m1-8v8m2-5v2m1-3v5m1-7v8m1-7v6m1-6v6m1-6v7m1-7v6m1-6v7m1-8v8m2-8v8m1-8v7m1-7v8m3-7v5m1-3v5m2-6v4m1-6v7m1-7v8m1-8v8m1-6v6m1-8v8m1-8v8m1-8v9m1-7v5m1-7v9m2-9v7m1-7v8m1-8v7m2-7v8m1-9v7m1-6v7m1-6v5m1-5v5m1-4v4m1-6v8m2-8v8m1-8v8m1-8v8m1-8v7m1-5v6m1-5v4m1-7v7m1-7v8m1-8v7m1-7v7m1-8v9m1-8v6m1-6v9m1-9v5m2-5v8m2-8v8m1-8v9m2-9v8m1-7v6m3-5v4m1-3v4m1-7v8m4-9v9m1-9v9m2-5v3m1-4v4m1-6v8m2-8v9m1-6v6m1-8v6m1-8v9m1-8v7m1-7v9m1-10v7m1-5v4m1-2v5m1-8v7m1-7v8m1-7v5m1-5v7m1-8v8m1-8v9m1-9v8m1-9v8m1-7v9m2-9v8m1-8v8m1-7v7m1-8v8m1-6v4m1-5v7m1-9v9m1-8v7m1-6v6m2-7v7m1-7v8m1-8v8m2-9v9m1-7v5m1-5v4m1-3v7m1-10v9m1-7v7m1-6v3m2-4v7m1-8v8m1-8v9m1-8v7m1-6v5m1-7v7m1-7v8m1-8v8m1-7v7m1-7v5m3-4v6m2-7v7m1-8v6m1-5v6m1-6v6m1-6v7m1-7v6m1-7v8m1-7v7m1-7v7m1-9v9m1-9v9m2-7v7m1-8v7m3-7v8m1-7v8m2-9v8m1-6v5m1-7v7m1-7v8m1-8v8m2-7v5m3-4v4m1-6v6m2-5v7m1-8v7m3-6v7m1-7v7m4-9v9m1-8v8m1-7v5m2-5v6m2-4v4m1-6v5m1-5v6m1-6v6m1-7v8m1-7v5m2-5v5m1-6v8m1-5v4m2-5v5m1-6v5m1-6v8m2-7v7m2-8v7m1-7v8m1-8v8m2-8v7m1-7v7m1-7v8m1-7v8m1-9v8m1-7v7m2-8v8m1-8v6m1-5v7m1-7v8m1-9v7m1-6v8m1-9v8m1-7v7m1-7v6m1-6v6m1-6v4m1-4v6m1-7v8m1-8v8m1-7v6m2-6v6m1-6v5m1-6v9m1-9v8m4-8v7m1-7v7m1-6v6m1-7v8m1-8v9m1-9v7m1-7v8m2-8v7m1-6v7m3-8v8m1-6v4m1-5v5m3-6v8m2-7v7m1-8v8m1-8v8m1-7v7m1-7v6m1-7v7m2-5v3m1-5v9m1-8v8m1-8v7m1-8v8m1-6v4m1-6v7m1-7v7m4-7v8m1-8v9m2-9v6m1-4v4m1-5v8m1-9v6m1-5v6m1-6v5m1-6v8m1-8v8m1-8v7m1-6v7m2-8v8m1-7v7m1-8v8m1-8v8m1-7v7m1-7v7m1-7v6m1-8v8m2-6v5m1-6v8m1-8v7m1-6v7m1-6v7m1-8v6m1-7v9m1-8v7m1-8v8m1-7v7m1-9v9m2-8v6m1-5v7m1-7v6m3-7v8m1-8v8m1-6v5m1-7v8m2-7v7m1-7v7m2-7v6m1-8v9m1-5v2m2-4v7m1-8v8m1-8v7m2-7v8m1-6v4m1-5v6m2-7v7m2-6v7m1-7v7m1-8v8m1-6v6m1-8v8m1-8v7m1-7v7m1-7v7m1-7v8m1-8v8m2-9v9m1-9v9m1-8v8m1-8v7m1-6v7m2-7v5m1-6v9m1-9v8m1-8v7m1-6v6m1-7v8m1-8v8m1-5v3m1-5v6m1-5v3m1-3v5m2-7v9m1-8v6m1-7v7m1-7v7m1-7v7m1-5v6m1-8v7m2-6v7m1-7v6m1-7v9m1-9v7m1-7v7m1-5v4m1-6v8m1-8v8m1-8v6m1-6v8m1-9v9m1-8v9m1-9v8m1-7v5m3-6v8m1-8v8m2-7v8m1-8v7m2-8v8m1-8v8m3-9v8m1-6v6m2-7v8m2-7v6m1-7v9m1-7v5m1-7v8m1-7v7m1-9v9m1-7v7m1-8v8m1-7v7m1-8v8m1-8v8m1-7v6m1-7v8m1-7v4m1-5v8m1-7v6m1-7v8m2-8v7m1-7v8m1-5v3m1-7v9m2-9v8m3-7v7m3-7v7m1-7v7m1-7v8m1-6v6m1-7v7m2-8v8m2-8v7m1-7v6m2-6v8m1-6v6m1-5v3m2-5v5m1-7v8m1-8v10m1-9v8m1-7v8m1-8v6m1-6v7m1-6v4m1-6v7m1-4v5m2-7v7m1-6v4m1-6v8m1-7v5m1-5v7m1-8v8m1-6v5m1-7v7m1-6v8m2-9v8m1-8v8m3-8v8m1-8v7m1-7v6m1-4v4m4-5v6m1-6v7m1-7v6m2-7v8m1-8v7m1-7v8m2-8v8m1-7v5m1-6v8m2-8v6m1-7v8m2-7v7m2-8v8m1-5v4m2-6v6m1-4v5m1-5v5m4-7v8m3-7v7m1-7v8m1-8v6m1-5v6m1-8v8m1-7v6m1-6v7m1-8v7m2-6v5m1-5v7m1-8v7m1-5v5m3-6v7m1-8v8m2-8v8m1-8v5m1-5v8m1-7v7m1-8v9m1-9v8m2-8v8m1-6v6m3-6v5m1-7v7m1-7v6m1-6v7m1-7v7m1-6v8m1-9v8m2-8v8m1-6v6m2-7v7m1-9v9m1-8v8m1-7v6m1-6v6m1-6v7m1-8v7m2-6v6m1-7v6m1-6v7m1-6v6m1-6v7m1-5v3m1-4v4m1-5v6m1-6v6m2-4v2m2-5v7m2-7v8m1-7v7m1-5v2m2-4v5m1-4v3m3-5v8m1-7v7m2-7v7m2-8v8m2-6v4m1-5v6m1-6v5m1-6v8m5-7v7m1-8v7m1-8v9m1-7v7m1-8v7m1-7v6m2-5v6m2-6v8m2-8v7m1-6v6m1-9v8m2-6v7m1-9v8m1-6v6m1-6v6m1-7v8m4-6v5m1-8v9m2-7v4m1-6v8m1-6v6m1-6v8m1-8v6m1-6v8m1-8v6m1-6v7m1-8v9m2-8v7m1-8v4m1-4v8m1-8v7"/><path stroke="#002020" d="M22 299v22m1-23v24m1-24v21m1-22v23m1-22v22m1-21v20m1-20v21m1-22v23m1-21v20m1-23v23m1-21v23m1-23v24m1-24v24m1-29v27m1-21v20m1-22v24m1-22v22m1-22v23m1-24v22m1-21v21m1-22v22m1-23v23m1-21v24m1-25v21m1-22v22m1-21v22m1-22v22m1-21v21m1-20v18m1-21v22m1-19v20m1-20v21m1-22v22m1-21v18m1-20v21m1-21v22m1-23v22m1-22v25m1-23v20m1-20v21m1-22v27m1-27v21m1-20v20m1-21v21m1-20v20m1-20v20m1-21v21m1-21v20m1-21v25m1-24v23m1-22v26m1-27v23m1-24v24m1-23v21m1-20v25m1-26v24m1-24v20m1-20v23m1-22v20m1-26v26m1-21v21m1-21v21m1-20v20m1-21v24m1-28v25m1-21v23m1-26v27m1-27v26m1-21v19m1-21v21m1-22v24m1-21v20m1-23v28m1-28v25m1-24v21m1-20v22m1-22v20m1-21v23m1-23v23m1-23v22m1-22v21m1-21v23m1-22v22m1-24v22m1-22v24m1-23v22m1-26v25m1-20v25m1-24v20m1-21v21m1-22v23m1-22v23m1-24v20m1-20v22m1-21v20m1-21v21m1-25v27m1-24v23m1-22v20m1-20v23m1-23v22m1-23v23m1-21v21m1-26v26m1-22v21m1-22v24m1-23v23m1-23v23m1-24v27m1-26v23m1-23v22m1-22v26m1-24v19m1-19v19m1-21v25m1-28v25m1-21v21m1-22v23m1-23v25m1-25v22m1-21v22m1-25v23m1-20v20m1-22v23m1-23v22m1-21v24m1-22v19m1-21v22m1-23v22m1-20v20m1-25v26m1-21v23m1-24v22m1-20v20m1-21v21m1-22v22m1-23v23m1-21v21m1-20v20m1-23v24m1-23v21m1-20v21m1-21v20m1-21v22m1-23v23m1-21v20m1-22v25m1-24v23m1-21v19m1-21v21m1-24v25m1-21v20m1-26v26m1-21v22m1-22v22m1-21v22m1-23v22m1-21v21m1-22v20m1-19v21m1-26v26m1-21v20m1-20v21m1-22v21m1-21v22m1-21v20m1-21v22m1-23v21m1-20v22m1-22v22m1-21v20m1-20v21m1-20v20m1-23v23m1-23v23m1-20v19m1-22v22m1-20v20m1-21v21m1-21v27m1-27v21m1-21v26m1-26v23m1-22v21m1-23v22m1-20v19m1-19v21m1-22v21m1-20v25m1-25v21m1-24v25m1-24v25m1-24v21"/><path stroke="#003434" d="M22 300v21m1-21v20m1-20v20m1-21v22m1-21v19m1-19v19m1-19v19m1-20v21m1-20v19m1-19v19m1-19v19m1-19v21m1-20v20m1-21v20m1-19v18m1-18v20m1-22v21m1-19v19m1-19v18m1-18v19m1-20v19m1-18v18m1-18v19m1-20v20m1-19v18m1-18v20m1-21v21m1-22v21m1-20v19m1-20v21m1-18v19m1-19v16m1-17v19m1-19v17m1-17v19m1-20v19m1-18v18m1-19v20m1-19v18m1-18v20m1-20v19m1-20v19m1-19v19m1-17v18m1-20v19m1-18v20m1-21v19m1-18v19m1-19v18m1-19v20m1-19v19m1-20v20m1-20v20m1-20v19m1-19v21m1-21v21m1-21v19m1-19v20m1-19v18m1-19v20m1-19v19m1-19v19m1-20v19m1-19v20m1-19v17m1-18v20m1-20v19m1-19v20m1-20v19m1-20v20m1-19v20m1-19v18m1-19v20m1-20v20m1-20v19m1-18v19m1-19v20m1-20v19m1-19v19m1-20v21m1-20v19m1-19v19m1-20v19m1-19v20m1-21v20m1-17v17m1-19v18m1-18v18m1-18v20m1-18v16m1-19v22m1-21v19m1-19v20m1-20v20m1-20v19m1-18v18m1-19v21m1-21v19m1-20v20m1-20v20m1-19v20m1-20v19m1-18v19m1-18v18m1-20v20m1-20v21m1-21v20m1-20v20m1-20v21m1-22v22m1-22v20m1-18v20m1-21v18m1-17v17m1-17v20m1-21v19m1-19v21m1-22v22m1-22v22m1-22v21m1-19v18m1-19v19m1-18v17m1-18v21m1-21v19m1-20v20m1-18v18m1-19v20m1-21v21m1-19v18m1-18v19m1-18v16m1-18v19m1-17v17m1-19v20m1-20v18m1-19v20m1-19v21m1-21v19m1-19v19m1-19v20m1-20v20m1-18v16m1-18v20m1-21v20m1-19v21m1-21v21m1-21v20m1-18v16m1-17v18m1-19v20m1-19v18m1-20v22m1-22v22m1-22v21m1-19v19m1-20v21m1-21v20m1-19v18m1-18v19m1-20v19m1-18v19m1-19v19m1-19v19m1-20v20m1-20v20m1-19v19m1-20v20m1-20v19m1-19v20m1-19v19m1-20v19m1-18v19m1-20v20m1-20v19m1-18v19m1-20v19m1-19v20m1-19v19m1-21v21m1-20v20m1-20v20m1-19v18m1-18v18m1-20v21m1-20v19m1-19v21m1-20v18m1-19v20m1-18v18m1-19v20m1-22v21m1-20v18"/><path stroke="#004e4e" d="M22 301v18m1-17v16m1-17v17m1-17v17m1-17v17m1-18v17m1-16v16m1-16v18m1-17v15m1-15v15m1-15v17m1-18v18m1-18v19m1-19v17m1-16v17m1-18v18m1-17v16m1-17v18m1-17v16m1-16v17m1-18v17m1-17v18m1-16v15m1-17v17m1-16v15m1-15v17m1-17v16m1-17v18m1-18v16m1-16v18m1-17v18m1-17v15m1-16v17m1-16v14m1-15v17m1-16v16m1-17v17m1-17v16m1-16v15m1-14v16m1-17v17m1-18v17m1-15v16m1-17v16m1-17v17m1-15v15m1-16v15m1-15v16m1-16v17m1-17v18m1-19v18m1-19v18m1-17v17m1-17v18m1-17v17m1-17v18m1-19v16m1-16v17m1-15v16m1-18v17m1-17v17m1-16v17m1-16v15m1-17v18m1-17v16m1-15v16m1-16v15m1-16v15m1-16v18m1-18v16m1-16v18m1-16v15m1-17v19m1-19v18m1-18v16m1-16v19m1-19v17m1-16v18m1-18v17m1-17v16m1-16v17m1-17v17m1-16v15m1-17v18m1-18v18m1-18v17m1-15v15m1-16v16m1-17v17m1-15v14m1-17v18m1-15v16m1-17v16m1-16v17m1-17v16m1-15v16m1-18v19m1-19v16m1-16v17m1-16v17m1-18v17m1-17v17m1-16v17m1-17v16m1-16v16m1-16v18m1-19v18m1-18v17m1-17v19m1-20v19m1-17v15m1-16v17m1-17v16m1-14v14m1-15v16m1-17v19m1-18v16m1-17v18m1-18v18m1-17v17m1-17v17m1-18v17m1-16v15m1-16v18m1-18v18m1-18v18m1-16v15m1-16v16m1-18v19m1-17v15m1-14v15m1-15v14m1-16v18m1-16v16m1-17v16m1-17v16m1-16v18m1-17v16m1-16v16m1-16v17m1-18v17m1-17v17m1-15v14m1-17v19m1-18v18m1-18v17m1-16v17m1-18v18m1-17v15m1-15v16m1-17v18m1-16v14m1-17v18m1-17v18m1-19v18m1-16v17m1-19v18m1-15v16m1-17v16m1-16v17m1-18v17m1-16v16m1-17v17m1-15v15m1-16v16m1-17v18m1-18v18m1-18v17m1-16v15m1-15v17m1-17v17m1-18v17m1-16v16m1-16v16m1-16v15m1-16v18m1-17v17m1-17v17m1-17v16m1-17v19m1-19v18m1-17v16m1-17v18m1-17v17m1-18v17m1-15v16m1-18v18m1-18v17m1-16v17m1-18v17m1-16v17m1-18v19m1-18v16"/><path stroke="#007070" d="M22 302v16m1-15v14m1-14v14m1-15v15m1-15v15m1-15v15m1-15v14m1-14v15m1-14v14m1-14v13m1-12v13m1-15v16m1-15v16m1-16v14m1-14v13m1-13v15m1-14v13m1-13v14m1-15v14m1-13v13m1-15v15m1-15v16m1-15v13m1-13v13m1-13v13m1-13v14m1-14v15m1-16v16m1-14v12m1-14v14m1-11v13m1-14v13m1-14v15m1-14v13m1-15v15m1-14v14m1-15v15m1-15v15m1-14v14m1-14v14m1-14v14m1-15v15m1-15v14m1-13v14m1-14v13m1-12v14m1-15v13m1-13v13m1-13v15m1-15v15m1-15v14m1-14v15m1-15v13m1-13v13m1-14v16m1-14v13m1-13v12m1-13v15m1-15v13m1-14v15m1-15v15m1-14v15m1-15v14m1-15v16m1-16v15m1-14v14m1-14v14m1-14v14m1-14v14m1-15v14m1-14v15m1-13v14m1-16v15m1-14v14m1-15v15m1-15v16m1-15v15m1-15v14m1-14v14m1-15v15m1-14v14m1-14v15m1-16v15m1-14v14m1-14v14m1-14v15m1-14v13m1-13v13m1-14v14m1-13v13m1-16v17m1-16v15m1-14v13m1-14v16m1-16v16m1-14v14m1-16v16m1-16v15m1-15v14m1-14v15m1-15v15m1-15v15m1-14v14m1-13v14m1-14v13m1-14v15m1-15v14m1-14v14m1-13v13m1-15v16m1-16v15m1-14v15m1-14v13m1-13v12m1-13v15m1-15v15m1-14v14m1-16v15m1-15v16m1-16v16m1-14v14m1-15v13m1-12v12m1-13v15m1-16v14m1-13v13m1-13v14m1-14v14m1-14v14m1-15v15m1-13v14m1-13v10m1-11v13m1-13v12m1-13v14m1-15v15m1-15v15m1-14v15m1-15v13m1-13v14m1-15v15m1-14v15m1-15v14m1-15v15m1-15v15m1-14v15m1-15v14m1-15v15m1-13v13m1-13v13m1-15v16m1-14v13m1-15v16m1-15v15m1-15v15m1-14v13m1-15v16m1-14v13m1-13v13m1-14v15m1-15v14m1-14v15m1-15v15m1-15v14m1-15v15m1-14v14m1-14v14m1-15v15m1-13v12m1-13v14m1-13v13m1-15v15m1-13v12m1-13v14m1-14v13m1-13v14m1-14v15m1-16v16m1-15v13m1-13v14m1-14v14m1-13v12m1-13v14m1-14v14m1-15v16m1-15v14m1-14v14m1-14v14m1-14v15m1-15v14m1-14v14m1-15v15m1-14v14"/><path stroke="#009696" d="M22 303v12m1-11v12m1-12v11m1-11v12m1-12v12m1-12v11m1-11v10m1-10v11m1-11v12m1-11v10m1-10v11m1-11v10m1-11v12m1-12v12m1-12v11m1-10v11m1-12v12m1-11v10m1-10v11m1-12v12m1-12v11m1-10v11m1-11v9m1-10v10m1-9v9m1-9v11m1-12v11m1-12v12m1-10v10m1-12v13m1-11v12m1-11v8m1-9v10m1-9v9m1-11v12m1-11v11m1-12v11m1-10v11m1-11v10m1-10v11m1-12v11m1-10v10m1-10v11m1-11v12m1-12v11m1-11v11m1-11v10m1-10v11m1-11v11m1-12v12m1-12v11m1-11v12m1-12v11m1-10v11m1-12v12m1-11v12m1-12v10m1-11v11m1-11v11m1-11v11m1-11v12m1-12v11m1-10v10m1-12v13m1-12v11m1-10v11m1-11v10m1-11v10m1-10v11m1-11v11m1-11v12m1-11v11m1-11v11m1-13v13m1-12v11m1-11v12m1-11v11m1-11v11m1-11v11m1-12v12m1-11v10m1-10v11m1-12v12m1-12v11m1-11v11m1-9v10m1-11v11m1-11v10m1-11v12m1-11v9m1-11v14m1-13v12m1-11v10m1-10v11m1-12v11m1-11v11m1-11v13m1-13v10m1-10v12m1-12v12m1-12v12m1-12v12m1-11v10m1-9v9m1-10v10m1-10v12m1-12v11m1-13v13m1-11v11m1-12v12m1-12v11m1-10v11m1-12v11m1-9v9m1-11v12m1-11v12m1-12v11m1-12v12m1-12v12m1-11v10m1-10v11m1-12v11m1-11v11m1-11v13m1-13v12m1-11v10m1-10v10m1-11v12m1-13v13m1-12v11m1-9v9m1-10v9m1-9v11m1-10v9m1-10v10m1-11v11m1-11v12m1-11v10m1-10v10m1-11v12m1-12v11m1-11v11m1-10v9m1-11v13m1-12v12m1-12v12m1-11v11m1-11v10m1-9v9m1-10v11m1-12v12m1-11v10m1-12v13m1-12v11m1-11v12m1-11v12m1-13v12m1-11v11m1-11v10m1-11v12m1-12v11m1-11v12m1-12v12m1-11v11m1-11v12m1-12v10m1-10v11m1-12v11m1-11v10m1-10v11m1-10v10m1-10v11m1-10v9m1-11v11m1-10v10m1-11v11m1-11v11m1-10v11m1-12v12m1-13v13m1-12v11m1-11v11m1-10v11m1-12v11m1-12v13m1-10v9m1-11v11m1-11v11m1-11v12m1-11v10m1-11v12m1-12v12m1-12v10"/><path stroke="#00cdcd" d="M23 305v10m1-9v8m1-9v10m1-11v11m1-11v11m1-10v9m1-9v10m1-9v8m1-8v9m1-10v9m1-9v11m1-11v10m1-11v11m1-10v9m1-9v11m1-10v9m1-9v8m1-8v8m1-8v9m1-10v10m1-9v8m1-8v9m1-10v9m1-8v8m1-9v10m1-11v11m1-10v10m1-10v9m1-10v11m1-9v9m1-8v7m1-8v9m1-9v8m1-9v10m1-9v9m1-10v10m1-10v9m1-8v9m1-9v9m2-9v9m1-10v10m1-9v9m1-10v9m1-8v10m1-11v10m2-10v10m1-10v11m1-11v10m1-10v10m1-10v10m1-10v9m1-8v9m1-9v9m1-10v9m1-9v10m3-11v11m1-9v9m1-10v9m1-9v10m1-10v9m1-9v9m1-9v10m1-10v9m1-9v9m1-9v9m1-8v9m1-9v9m1-10v9m1-9v11m3-10v9m2-10v9m1-8v9m1-9v9m1-9v10m2-11v10m1-10v9m1-9v10m1-9v8m3-8v7m1-9v11m1-9v9m1-10v9m1-8v9m1-9v8m1-8v9m1-10v11m1-11v9m1-10v10m1-8v9m1-10v10m1-10v10m1-10v9m1-9v10m1-9v8m1-9v10m1-9v9m1-10v9m1-8v9m2-10v9m1-8v8m1-8v8m1-8v8m1-8v9m1-10v10m2-10v10m1-10v10m1-10v11m1-11v10m1-10v10m1-10v9m1-8v9m1-11v10m1-9v10m4-10v9m1-7v8m1-9v8m1-9v11m1-9v7m1-9v10m2-10v10m1-9v9m1-9v9m1-10v10m1-10v9m1-8v9m1-9v8m1-9v10m1-10v9m1-9v10m1-9v9m1-10v10m1-9v9m1-9v8m1-8v9m1-9v8m2-9v10m1-10v10m1-10v10m1-10v10m1-10v10m1-9v8m1-8v9m1-9v8m1-8v8m1-9v10m1-10v9m1-9v10m1-10v9m1-9v10m1-10v9m1-9v9m1-8v9m2-10v9m1-8v9m1-10v10m1-9v9m1-9v9m1-10v10m2-10v9m1-10v11m2-9v9m1-9v9m1-10v9m1-9v9m1-8v8m1-8v9m1-10v10m1-10v9m1-9v10m1-10v11m1-11v10m1-10v9"/><path stroke="#00f6f6" d="M22 306v7m1-7v8m1-8v7m1-8v9m1-9v7m1-6v8m1-8v7m3-7v8m2-7v7m1-8v9m1-9v8m1-7v6m1-8v9m1-7v6m1-7v7m1-6v6m1-4v4m1-5v5m2-7v7m1-5v4m1-6v7m1-6v8m2-9v7m3-6v7m1-7v7m2-7v6m1-7v8m1-8v8m1-8v8m2-7v7m2-7v7m2-8v7m2-7v7m2-5v5m3-7v9m2-9v8m1-8v8m1-6v3m1-5v8m1-7v7m1-8v8m1-8v8m1-7v6m1-8v7m1-7v9m1-8v8m1-7v6m1-7v6m1-6v7m1-5v5m1-6v7m1-7v7m1-7v7m1-8v7m1-7v9m2-9v9m2-10v9m1-8v8m1-8v8m1-8v9m4-8v8m1-7v5m2-7v7m1-6v7m1-6v6m1-8v7m1-7v8m1-7v6m1-6v8m1-8v5m2-6v8m2-7v7m1-7v5m1-7v8m1-5v4m1-4v6m1-8v6m1-7v9m1-8v8m1-7v7m2-8v9m1-9v8m1-8v8m1-7v8m1-9v9m1-9v8m1-7v7m1-8v8m1-7v5m2-7v10m2-9v8m1-6v5m1-7v8m1-8v7m1-7v5m2-3v5m1-8v8m1-6v4m1-4v7m1-9v9m1-8v8m3-7v6m1-7v8m1-7v6m3-7v8m1-8v8m1-7v7m1-6v5m1-6v7m2-7v7m1-6v6m1-7v7m1-9v9m2-8v8m2-8v6m1-6v8m1-7v6m1-7v8m1-8v7m1-7v8m1-8v8m4-8v9m1-9v7m1-6v7m1-8v8m1-8v8m1-8v8m1-6v4m2-6v7m2-7v8m1-5v2m1-5v8m1-8v7m2-7v7m1-7v8m2-7v5m1-5v6m1-7v8m3-8v8m1-8v8m1-7v7m1-6v6m1-7v7m1-9v7m1-6v8m1-8v8m2-7v6m1-7v7"/><path stroke="#002020" d="M215 190v24m1-25v25m1-23v21m1-22v22m1-21v21m1-21v21m1-27v27m1-23v26m1-24v22m1-24v24m1-22v22m1-23v23m1-24v23m1-22v23m1-23v23m1-23v23m1-22v21m1-22v23m1-22v22m1-24v22m1-27v33m1-25v19m1-21v22m1-20v20m1-22v26m1-27v23m1-21v21m1-20v24m1-24v20m1-21v21m1-21v22m1-24v24m1-24v28m1-26v21m1-22v23m1-27v26m1-22v24m1-23v21m1-21v22m1-23v21m1-20v21m1-26v26m1-20v20m1-22v21m1-22v24m1-23v22m1-21v21m1-23v23m1-21v20m1-23v25m1-21v21m1-23v21m1-20v20m1-21v23m1-24v25m1-24v21m1-19v20m1-21v23m1-22v20m1-21v23m1-24v23m1-24v22m1-21v23m1-22v23m1-25v25m1-23v21m1-22v24m1-21v19m1-23v23m1-21v21m1-23v23m1-20v19m1-20v21m1-23v28m1-25v19m1-21v21m1-20v23m1-24v22m1-21v20m1-20v19m1-20v24m1-28v28m1-24v23m1-22v22m1-23v22m1-22v22m1-22v22m1-21v21m1-22v22m1-22v21m1-21v24m1-23v21m1-25v24m1-22v23m1-23v24m1-23v27m1-26v28m1-28v22m1-24v23m1-21v22m1-23v23m1-23v25m1-24v20m1-20v25m1-28v25m1-23v23m1-23v22m1-21v22m1-24v23m1-22v22m1-22v22m1-21v22m1-23v22m1-23v22m1-21v20m1-19v22m1-22v21m1-22v26m1-24v21m1-23v21m1-19v20m1-22v27m1-27v21m1-20v20m1-25v26m1-21v23m1-23v21m1-22v23m1-23v22m1-21v19m1-20v22m1-21v21m1-23v23m1-22v22m1-21v22m1-21v19m1-21v24m1-23v20m1-21v22m1-24v24m1-21v22m1-22v21m1-21v22m1-21v19m1-21v22m1-21v22m1-23v26m1-28v26m1-25v24m1-22v22m1-24v25m1-23v20m1-19v23m1-25v22m1-21v24m1-25v21m1-24v28m1-24v22m1-21v20m1-21v21m1-21v19m1-20v23m1-24v23m1-25v26m1-22v22m1-22v21m1-20v20m1-23v23m1-26v26m1-21v24m1-25v22m1-21v20m1-19v20m1-27v29m1-23v21m1-22v24m1-24v21m1-21v24m1-22v20m1-22v23m1-24v24m1-22v21m1-21v22m1-27v26m1-21v22m1-23v22m1-23v28m1-26v21m1-21v22m1-24v24m1-23v23m1-22v21m1-21v21m1-20v20m1-21v22m1-21v20m1-21v22m1-26v27m1-24v21m1-19v20m1-20v20m1-20v21m1-22v21m1-21v20m1-20v22m1-21v21m1-24v26m1-24v22m1-28v27m1-27v27m1-25v26m1-23v22m1-23v23m1-21v22m1-22v22m1-21v21m1-22v21m1-21v20m1-22v24m1-22v20m1-22v23m1-21v21m1-22v24m1-23v21m1-22v22m1-21v20m1-20v26m1-27v23m1-23v20m1-20v21m1-23v24m1-21v26m1-26v21m1-21v20m1-20v19m1-19v22m1-21v20m1-21v21m1-22v23m1-27v26m1-22v22m1-25v24m1-21v22m1-20v19m1-20v20m1-22v27m1-27v23m1-23v28m1-27v23m1-22v23m1-23v21m1-21v20m1-21v22m1-22v23m1-22v27m1-26v20m1-21v25m1-25v25m1-25v21m1-21v23m1-22v24m1-26v22m1-20v20m1-25v26m1-22v21m1-25v25m1-22v23m1-23v23m1-22v23m1-24v21m1-19v20m1-27v28m1-25v24m1-21v21m1-23v27m1-26v28m1-28v21m1-20v21m1-21v22m1-22v23m1-24v22m1-21v24m1-23v19m1-22v23m1-21v22m1-23v23m1-23v22m1-21v21m1-19v20m1-23v23m1-27v27m1-22v23m1-23v22m1-24v24m1-21v19m1-21v22m1-22v22m1-22v22m1-20v21m1-26v26m1-23v23m1-22v22m1-23v22m1-22v22m1-23v22m1-19v21m1-23v23m1-22v22m1-22v22m1-23v22m1-21v23m1-23v23m1-24v21m1-21v22m1-20v21m1-22v21m1-22v27m1-26v21m1-20v20m1-22v20m1-19v22m1-27v26m1-22v22m1-22v22m1-21v22m1-24v24m1-21v20m1-25v24m1-23v24m1-21v20m1-20v21m1-22v21m1-21v23m1-23v24m1-23v21m1-26v26m1-21v22m1-24v24m1-22v21m1-21v23m1-22v26m1-27v23m1-25v25m1-24v23m1-23v28m1-27v23m1-24v22m1-20v21m1-21v19m1-19v19m1-22v22m1-23v28m1-25v20m1-25v26m1-22v23m1-29v29m1-23v23m1-22v20m1-21v21m1-23v25m1-24v22m1-20v20m1-19v21m1-22v22m1-21v20m1-24v24m1-21v21m1-20v21m1-22v23m1-24v21m1-20v22m1-24v29m1-28v23m1-21v19m1-22v24m1-22v20m1-20v22m1-25v24m1-21v21m1-21v22m1-23v23m1-23v22m1-26v30m1-23v19m1-22v26m1-26v22m1-27v28m1-22v22m1-22v20m1-20v20m1-20v20m1-20v21m1-21v22m1-23v23m1-23v25m1-25v23m1-21v20m1-21v21m1-21v22m1-23v22m1-21v23m1-23v20m1-21v22m1-20v19m1-21v24m1-22v21m1-23v23m1-22v21m1-21v23m1-24v23m1-23v22m1-21v23m1-25v23m1-22v27m1-26v20m1-19v20m1-23v23m1-23v25m1-24v21m1-20v20m1-21v23m1-26v25m1-22v23m1-23v21m1-21v29m1-33v29m1-28v25m1-21v22m1-21v21m1-22v22m1-28v28m1-25v25m1-23v22m1-25v27m1-24v22m1-22v22m1-21v22m1-22v21m1-24v23m1-19v21m1-21v25m1-26v21m1-20v20m1-22v22m1-21v19m1-19v20m1-20v21m1-22v21m1-24v26m1-24v22m1-21v22m1-21v20m1-20v22m1-21v24m1-26v22m1-22v21m1-22v24m1-22v20m1-23v24m1-22v22m1-21v21m1-22v23m1-26v26m1-21v20m1-21v23m1-24v22m1-23v25m1-26v25m1-22v23m1-23v21m1-23v24m1-21v21m1-23v22m1-22v22m1-21v22m1-23v22m1-22v21m1-22v24m1-21v23m1-24v20m1-20v22m1-22v19m1-20v24m1-23v20m1-21v23m1-22v23m1-25v25m1-23v21m1-22v24m1-21v19m1-21v22m1-22v22m1-23v22m1-22v22m1-21v19m1-18v20m1-21v22m1-23v21m1-21v24m1-24v29m1-28v21m1-22v23m1-28v26m1-20v21m1-23v22m1-21v24m1-23v21m1-22v22m1-27v26m1-21v24m1-25v23m1-22v21m1-21v23m1-24v23m1-21v19m1-19v24m1-24v21m1-23v25m1-23v21m1-21v20m1-20v20m1-21v23m1-22v21m1-21v19m1-21v23m1-23v22m1-20v21m1-22v24m1-24v23m1-23v23m1-21v20m1-20v21m1-22v21m1-20v19m1-21v24m1-23v21m1-23v23m1-21v25m1-26v22m1-20v20m1-23v24m1-24v23m1-27v28m1-24v22m1-24v24m1-21v24m1-24v23m1-22v24m1-28v26m1-26v25m1-21v22m1-23v22m1-20v20m1-22v23m1-22v21m1-23v23m1-21v20m1-22v24m1-21v23m1-25v21m1-19v21m1-22v21m1-22v23m1-23v22m1-22v21m1-19v20m1-21v22m1-22v19m1-18v21m1-23v22m1-26v26m1-28v30m1-23v21m1-23v24m1-22v21m1-22v23m1-22v20m1-21v22m1-24v29m1-27v21m1-22v23m1-22v20m1-19v20m1-21v22m1-25v26m1-22v20m1-20v21m1-26v24m1-24v26m1-22v22m1-20v20m1-21v20m1-21v23m1-23v23m1-24v24m1-22v26m1-27v22m1-23v23m1-23v26m1-25v21m1-25v26m1-26v31m1-25v19m1-22v22m1-19v20m1-22v23m1-23v23m1-24v23m1-22v21m1-19v19m1-19v21m1-22v21m1-20v20m1-20v23m1-23v20m1-24v25m1-22v20m1-21v22m1-27v27m1-22v24m1-24v23m1-23v22m1-20v20m1-23v23m1-20v22m1-23v22m1-25v24m1-21v22m1-24v23m1-21v22m1-22v26m1-26v20m1-19v19m1-22v26m1-26v24m1-21v21m1-22v20m1-20v21m1-20v22m1-25v22m1-21v24m1-23v26m1-28v23m1-21v27m1-29v22m1-21v23m1-22v24m1-24v20m1-20v21m1-21v22m1-21v19m1-21v23m1-24v24m1-24v24m1-22v22m1-22v22m1-23v22m1-21v24m1-24v22m1-23v23m1-28v27m1-23v22m1-22v23m1-21v20m1-22v24m1-22v21m1-21v22m1-21v20m1-21v22m1-23v22m1-22v23m1-25v26m1-23v23m1-24v21m1-22v27m1-25v21m1-23v23m1-22v23m1-23v20m1-19v21m1-21v21m1-21v21m1-21v21m1-22v25m1-25v22m1-24v24m1-22v23m1-22v21m1-27v28m1-22v20m1-21v22m1-21v23m1-24v22m1-22v22m1-21v21m1-23v24m1-21v19m1-21v23m1-21v21m1-23v26m1-25v21m1-22v23m1-23v23m1-22v23m1-22v20m1-20v19m1-24v26m1-23v22m1-21v26m1-27v22m1-22v22m1-24v23m1-22v25m1-24v23m1-22v22m1-23v28m1-32v27m1-21v20m1-21v21m1-21v20m1-20v20m1-21v22m1-25v25m1-21v23m1-24v22m1-21v25m1-26v24m1-24v21m1-19v20m1-25v24m1-22v24m1-26v30m1-25v19m1-24v26m1-23v23m1-21v19m1-21v23m1-21v21m1-21v21m1-23v21m1-20v22m1-23v24m1-24v23m1-22v22m1-28v33m1-32v27m1-24v23m1-20v21m1-26v24m1-19v20m1-22v21m1-20v21m1-22v23m1-22v21m1-20v20m1-23v23m1-22v24m1-24v22m1-27v27m1-21v23m1-24v24m1-24v21m1-21v21m1-21v23m1-22v22m1-23v22m1-21v23m1-24v22m1-22v21m1-20v21m1-22v27m1-27v21m1-20v20m1-20v21m1-25v26m1-25v28m1-29v26m1-24v25m1-23v26m1-26v25m1-25v22m1-22v21m1-22v24m1-23v22m1-23v22m1-22v23m1-22v22m1-23v23m1-22v21m1-20v21m1-22v21m1-21v21m1-22v23m1-21v20m1-22v22m1-20v20m1-22v22m1-22v22m1-23v24m1-22v21m1-21v23m1-24v23m1-22v20m1-21v22m1-22v24m1-26v24"/><path stroke="#003434" d="M215 192v20m1-21v21m1-20v18m1-19v19m1-18v19m1-20v19m1-18v19m1-20v21m1-21v21m1-20v20m1-19v18m1-22v22m1-19v19m1-18v17m1-18v18m1-19v21m1-21v20m1-19v19m1-19v19m1-19v20m1-21v19m1-18v19m1-19v19m1-19v19m1-20v20m1-20v20m1-18v17m1-18v20m1-21v20m1-20v19m1-20v22m1-21v20m1-21v23m1-20v17m1-19v20m1-19v20m1-20v19m1-20v21m1-20v20m1-20v19m1-20v20m1-20v20m1-18v18m1-19v19m1-19v19m1-20v20m1-20v21m1-20v19m1-19v19m1-18v19m1-19v18m1-18v19m1-19v18m1-19v20m1-21v21m1-19v19m1-20v18m1-19v21m1-20v19m1-20v21m1-22v22m1-21v20m1-21v22m1-20v19m1-20v21m1-21v19m1-19v20m1-19v18m1-18v18m1-18v19m1-19v20m1-20v20m1-20v18m1-19v20m1-20v19m1-20v21m1-21v22m1-20v19m1-18v16m1-17v19m1-20v20m1-20v20m1-20v19m1-18v18m1-17v19m1-20v20m1-19v18m1-20v19m1-18v19m1-19v18m1-18v18m1-18v18m1-17v17m1-20v22m1-21v21m1-21v20m1-20v20m1-20v20m1-19v19m1-19v19m1-19v19m1-19v19m1-20v20m1-20v20m1-20v20m1-19v19m1-18v18m1-18v18m1-20v20m1-20v20m1-20v19m1-18v19m1-19v18m1-19v19m1-18v17m1-17v20m1-20v18m1-17v18m1-18v17m1-19v21m1-22v21m1-19v20m1-21v20m1-19v19m1-20v20m1-19v20m1-20v18m1-18v18m1-19v21m1-21v18m1-17v18m1-19v20m1-20v21m1-20v19m1-20v21m1-18v17m1-18v19m1-20v20m1-20v20m1-20v18m1-18v19m1-19v19m1-19v19m1-19v19m1-19v20m1-21v20m1-19v19m1-19v20m1-21v19m1-19v21m1-22v22m1-21v21m1-20v18m1-17v17m1-17v19m1-21v20m1-19v20m1-21v22m1-20v19m1-20v19m1-19v18m1-19v20m1-19v19m1-19v19m1-20v20m1-18v18m1-18v17m1-19v20m1-20v20m1-18v18m1-18v17m1-18v19m1-18v19m1-20v19m1-19v20m1-22v22m1-21v20m1-19v20m1-21v20m1-20v21m1-21v21m1-21v19m1-18v19m1-20v19m1-18v19m1-18v19m1-22v22m1-20v19m1-19v19m1-20v20m1-19v19m1-18v18m1-21v20m1-17v18m1-20v20m1-19v18m1-17v20m1-23v22m1-20v19m1-19v18m1-18v19m1-19v19m1-19v20m1-20v18m1-18v20m1-20v19m1-20v18m1-18v21m1-20v19m1-19v20m1-21v22m1-21v19m1-19v20m1-19v18m1-19v19m1-18v18m1-21v21m1-20v19m1-20v21m1-20v20m1-20v21m1-19v17m1-18v20m1-20v20m1-19v17m1-17v17m1-18v20m1-19v17m1-18v19m1-19v17m1-17v18m1-17v19m1-19v18m1-19v18m1-18v17m1-18v19m1-17v19m1-20v19m1-19v19m1-19v18m1-18v18m1-19v20m1-18v18m1-18v19m1-21v21m1-21v20m1-19v17m1-19v21m1-18v18m1-21v21m1-20v19m1-17v18m1-19v20m1-21v20m1-20v21m1-20v19m1-18v18m1-19v19m1-20v20m1-19v19m1-20v19m1-19v20m1-20v20m1-19v20m1-19v18m1-18v17m1-18v20m1-20v20m1-20v19m1-18v17m1-17v19m1-22v22m1-21v20m1-21v21m1-20v20m1-20v21m1-21v20m1-19v19m1-20v21m1-20v19m1-19v19m1-20v20m1-19v18m1-20v21m1-18v18m1-20v21m1-21v19m1-18v19m1-18v18m1-19v18m1-19v21m1-22v23m1-22v22m1-21v20m1-20v18m1-18v19m1-20v20m1-20v19m1-17v18m1-20v21m1-20v19m1-19v19m1-19v19m1-21v21m1-20v20m1-19v19m1-20v20m1-20v20m1-19v17m1-17v19m1-19v20m1-20v20m1-21v19m1-18v19m1-19v19m1-19v20m1-20v19m1-20v20m1-19v18m1-19v20m1-19v19m1-20v20m1-19v20m1-21v20m1-19v19m1-21v22m1-20v20m1-20v19m1-19v19m1-20v19m1-18v19m1-20v19m1-18v19m1-20v21m1-20v20m1-19v17m1-18v20m1-21v21m1-19v18m1-19v20m1-19v18m1-18v18m1-19v19m1-18v19m1-19v18m1-21v22m1-20v20m1-20v19m1-19v18m1-18v18m1-18v20m1-21v21m1-21v20m1-20v20m1-20v21m1-21v20m1-19v19m1-19v18m1-17v17m1-19v20m1-20v19m1-17v17m1-18v19m1-18v17m1-18v20m1-21v20m1-19v19m1-18v19m1-20v20m1-20v19m1-20v21m1-23v22m1-20v20m1-18v18m1-19v20m1-20v19m1-20v20m1-20v21m1-20v20m1-19v19m1-19v17m1-19v20m1-18v18m1-19v19m1-19v20m1-19v17m1-18v20m1-20v20m1-21v19m1-18v19m1-18v17m1-18v19m1-19v20m1-20v19m1-19v18m1-18v18m1-19v20m1-18v18m1-19v19m1-20v20m1-20v20m1-19v19m1-19v19m1-19v19m1-20v21m1-20v18m1-18v19m1-19v19m1-18v20m1-21v20m1-20v19m1-20v20m1-20v21m1-20v19m1-20v20m1-19v18m1-18v17m1-18v21m1-19v18m1-19v18m1-18v21m1-20v19m1-21v21m1-20v19m1-20v21m1-19v18m1-19v19m1-20v21m1-20v19m1-19v19m1-18v20m1-22v20m1-20v19m1-18v19m1-20v20m1-20v19m1-19v21m1-20v19m1-19v19m1-18v18m1-19v18m1-18v18m1-19v20m1-19v19m1-19v17m1-18v20m1-17v16m1-19v19m1-18v19m1-20v19m1-18v20m1-19v17m1-19v21m1-20v19m1-20v20m1-19v19m1-20v20m1-20v20m1-20v20m1-19v18m1-18v19m1-19v18m1-18v19m1-20v19m1-19v21m1-21v19m1-20v22m1-22v21m1-18v19m1-21v20m1-20v20m1-19v18m1-20v22m1-21v19m1-18v20m1-21v20m1-20v21m1-21v22m1-20v18m1-18v18m1-19v20m1-20v17m1-19v20m1-17v18m1-21v21m1-18v19m1-21v21m1-20v21m1-21v19m1-19v20m1-20v18m1-18v20m1-21v20m1-19v19m1-20v19m1-17v18m1-20v22m1-22v19m1-18v19m1-20v21m1-20v19m1-20v19m1-18v19m1-19v20m1-20v19m1-21v21m1-20v20m1-19v20m1-19v19m1-21v21m1-20v20m1-20v18m1-19v21m1-19v18m1-19v17m1-17v18m1-19v20m1-20v20m1-19v18m1-19v20m1-20v19m1-18v19m1-19v19m1-19v19m1-18v18m1-19v20m1-20v19m1-19v20m1-20v19m1-19v19m1-19v19m1-18v18m1-20v20m1-18v18m1-18v18m1-20v20m1-21v20m1-19v19m1-17v19m1-20v17m1-18v20m1-20v20m1-19v18m1-18v20m1-21v19m1-19v21m1-21v20m1-19v19m1-20v19m1-20v20m1-18v19m1-18v17m1-18v18m1-20v21m1-20v20m1-20v21m1-20v18m1-18v18m1-17v17m1-19v19m1-18v20m1-19v18m1-20v20m1-20v20m1-20v21m1-21v20m1-20v20m1-18v18m1-20v20m1-19v19m1-20v21m1-22v20m1-18v19m1-20v20m1-20v22m1-22v21m1-19v18m1-20v21m1-20v19m1-20v21m1-20v19m1-20v20m1-19v18m1-19v21m1-21v21m1-20v20m1-21v21m1-21v19m1-19v20m1-20v20m1-19v18m1-17v17m1-20v23m1-20v17m1-19v21m1-20v18m1-19v20m1-20v21m1-22v22m1-19v18m1-20v20m1-20v21m1-21v20m1-21v21m1-20v19m1-18v20m1-21v19m1-19v20m1-19v19m1-18v18m1-20v21m1-21v21m1-19v18m1-20v19m1-18v18m1-18v18m1-18v19m1-19v20m1-20v18m1-20v21m1-18v18m1-20v19m1-19v19m1-18v18m1-19v20m1-19v19m1-19v19m1-19v19m1-20v19m1-17v18m1-19v19m1-19v19m1-18v17m1-17v18m1-19v19m1-19v19m1-18v19m1-20v18m1-17v17m1-19v20m1-19v19m1-21v21m1-21v22m1-21v20m1-20v20m1-20v21m1-20v18m1-19v20m1-20v19m1-17v17m1-18v18m1-19v20m1-19v20m1-21v20m1-19v18m1-18v19m1-18v18m1-20v22m1-21v20m1-21v20m1-20v21m1-20v18m1-18v20m1-18v17m1-18v18m1-19v19m1-19v18m1-18v18m1-18v20m1-21v21m1-19v19m1-21v20m1-19v20m1-20v20m1-19v18m1-19v20m1-20v19m1-20v20m1-19v18m1-17v18m1-19v18m1-17v19m1-21v19m1-19v20m1-20v20m1-19v18m1-19v20m1-20v20m1-20v20m1-19v18m1-18v20m1-20v19m1-19v19m1-19v20m1-21v21m1-21v20m1-19v19m1-18v19m1-19v19m1-20v20m1-19v18m1-20v21m1-20v18m1-18v20m1-21v21m1-20v20m1-19v18m1-20v19m1-18v19m1-20v19m1-17v18m1-19v18m1-18v19m1-20v20m1-19v20m1-19v19m1-21v20m1-20v20m1-19v18m1-18v19m1-20v19m1-19v21m1-22v20m1-19v21m1-21v20m1-19v19m1-19v20m1-20v19m1-18v18m1-19v20m1-21v20m1-19v19m1-19v18m1-18v20m1-22v20m1-18v19m1-19v20m1-19v20m1-20v18m1-19v20m1-20v20m1-21v22m1-22v20m1-19v19m1-21v21m1-20v20m1-19v20m1-19v17m1-17v17m1-18v18m1-19v21m1-20v18m1-19v21m1-20v19m1-20v19m1-19v20m1-20v21m1-22v21m1-19v19m1-19v21m1-20v17m1-18v19m1-20v19m1-19v20m1-18v19m1-21v20m1-19v19m1-20v20m1-19v18m1-18v18m1-18v19m1-19v19m1-19v19m1-19v19m1-19v21m1-20v17m1-19v21m1-23v23m1-21v20m1-21v21m1-19v19m1-20v21m1-22v22m1-21v19m1-18v19m1-19v20m1-20v19m1-21v22m1-20v20m1-21v19m1-18v20m1-20v18m1-17v19m1-19v18m1-19v19m1-17v17m1-19v20m1-21v19m1-19v21m1-19v17m1-18v20m1-20v20m1-21v20m1-20v20m1-21v22m1-22v21"/><path stroke="#004e4e" d="M215 193v16m1-15v16m1-17v16m1-16v16m1-17v18m1-17v16m1-17v17m1-18v19m1-17v16m1-16v17m1-16v15m1-18v19m1-18v17m1-15v16m1-18v18m1-16v16m1-18v19m1-18v17m1-16v15m1-16v17m1-16v15m1-16v16m1-17v17m1-16v17m1-17v16m1-17v19m1-18v17m1-18v18m1-18v17m1-16v16m1-17v17m1-15v16m1-18v18m1-17v17m1-18v17m1-17v19m1-19v18m1-17v18m1-18v17m1-16v16m1-17v17m1-18v17m1-16v17m1-17v17m1-17v17m1-16v16m1-16v15m1-16v17m1-18v18m1-17v18m1-18v16m1-15v15m1-16v16m1-15v16m1-17v18m1-18v17m1-16v16m1-18v19m1-18v15m1-16v18m1-17v16m1-16v16m1-16v17m1-17v17m1-19v19m1-18v17m1-17v18m1-17v16m1-16v16m1-16v16m1-16v17m1-16v16m1-18v17m1-17v18m1-17v15m1-16v18m1-19v19m1-18v17m1-15v16m1-17v17m1-16v17m1-18v17m1-18v18m1-18v17m1-15v16m1-17v16m1-17v18m1-17v16m1-16v17m1-16v15m1-16v17m1-17v17m1-16v15m1-17v17m1-16v18m1-18v18m1-18v18m1-17v17m1-19v17m1-16v17m1-18v20m1-19v16m1-16v17m1-17v16m1-18v19m1-18v19m1-18v17m1-17v18m1-18v18m1-18v18m1-18v16m1-16v16m1-17v18m1-16v15m1-16v17m1-18v19m1-18v16m1-16v16m1-16v17m1-17v17m1-18v18m1-18v19m1-18v18m1-18v17m1-17v17m1-16v17m1-19v19m1-18v17m1-17v17m1-17v16m1-16v17m1-18v19m1-19v19m1-17v16m1-18v17m1-14v15m1-18v18m1-17v16m1-17v18m1-17v17m1-17v16m1-15v15m1-16v18m1-18v17m1-17v17m1-17v17m1-17v18m1-18v17m1-17v17m1-18v18m1-19v20m1-18v16m1-15v16m1-17v17m1-17v17m1-18v16m1-15v18m1-19v18m1-16v16m1-18v18m1-17v16m1-17v18m1-17v18m1-18v17m1-17v18m1-17v16m1-17v17m1-18v18m1-17v18m1-18v17m1-16v15m1-15v16m1-16v16m1-18v19m1-19v19m1-20v20m1-18v17m1-17v16m1-15v15m1-16v17m1-18v19m1-18v16m1-17v18m1-18v17m1-15v17m1-19v19m1-20v20m1-19v17m1-16v16m1-17v18m1-17v17m1-16v15m1-16v16m1-15v15m1-17v18m1-17v17m1-16v17m1-19v18m1-16v17m1-17v16m1-16v16m1-18v18m1-16v15m1-16v16m1-16v19m1-19v17m1-18v18m1-17v17m1-17v16m1-16v17m1-17v19m1-19v16m1-17v19m1-17v17m1-17v15m1-16v17m1-18v18m1-17v16m1-17v19m1-18v17m1-18v18m1-17v16m1-16v18m1-17v15m1-15v16m1-16v16m1-17v18m1-18v17m1-17v16m1-16v17m1-17v16m1-15v16m1-16v16m1-16v15m1-16v15m1-16v17m1-16v17m1-17v16m1-16v16m1-16v18m1-18v16m1-16v17m1-16v16m1-16v16m1-18v17m1-16v18m1-18v15m1-15v17m1-16v15m1-16v17m1-18v17m1-16v17m1-17v16m1-16v18m1-19v18m1-17v18m1-18v17m1-18v17m1-16v17m1-17v18m1-18v17m1-17v18m1-17v16m1-18v18m1-18v17m1-17v18m1-18v18m1-17v16m1-17v19m1-17v14m1-15v16m1-16v17m1-17v16m1-16v17m1-16v15m1-16v18m1-18v16m1-17v17m1-17v18m1-16v16m1-16v16m1-17v16m1-15v16m1-17v18m1-18v17m1-17v17m1-18v17m1-16v17m1-17v17m1-17v17m1-18v18m1-18v19m1-18v18m1-18v17m1-16v16m1-18v17m1-15v15m1-15v14m1-16v17m1-16v17m1-17v16m1-16v16m1-16v18m1-18v17m1-17v17m1-16v15m1-16v17m1-17v17m1-16v16m1-18v18m1-17v17m1-17v18m1-19v17m1-16v17m1-17v17m1-17v16m1-15v16m1-18v18m1-17v16m1-16v17m1-16v16m1-17v16m1-16v18m1-18v16m1-15v15m1-17v19m1-17v16m1-17v17m1-18v19m1-18v17m1-17v17m1-17v17m1-17v18m1-18v17m1-17v17m1-17v17m1-18v18m1-19v21m1-18v16m1-17v17m1-16v16m1-16v15m1-16v17m1-18v19m1-18v18m1-18v18m1-19v18m1-16v16m1-16v15m1-16v16m1-17v17m1-15v15m1-16v17m1-17v16m1-18v20m1-19v19m1-18v17m1-16v15m1-16v17m1-18v18m1-17v17m1-16v14m1-15v18m1-16v15m1-17v17m1-18v19m1-18v17m1-17v17m1-17v17m1-17v16m1-16v18m1-20v18m1-15v16m1-17v18m1-19v20m1-19v17m1-17v17m1-16v17m1-17v15m1-15v16m1-17v17m1-18v19m1-17v16m1-17v16m1-16v17m1-16v17m1-18v16m1-16v18m1-17v17m1-18v16m1-15v14m1-16v19m1-18v18m1-18v17m1-17v17m1-17v17m1-18v17m1-17v18m1-16v17m1-17v15m1-16v16m1-15v14m1-16v18m1-16v15m1-16v18m1-17v16m1-17v16m1-17v18m1-17v19m1-19v19m1-18v16m1-17v17m1-17v16m1-17v17m1-17v16m1-15v18m1-19v16m1-16v17m1-15v16m1-16v16m1-17v18m1-17v16m1-17v16m1-17v17m1-16v18m1-17v15m1-16v16m1-16v17m1-17v17m1-16v17m1-18v17m1-17v18m1-19v17m1-15v16m1-17v16m1-16v17m1-17v17m1-16v16m1-18v17m1-15v17m1-18v17m1-17v18m1-17v16m1-18v18m1-17v15m1-15v17m1-16v15m1-18v18m1-17v18m1-17v17m1-17v17m1-16v15m1-15v17m1-19v17m1-15v17m1-19v18m1-16v15m1-16v16m1-15v16m1-18v17m1-16v17m1-17v17m1-16v16m1-17v16m1-15v18m1-20v18m1-19v20m1-20v20m1-18v17m1-18v18m1-18v18m1-18v17m1-17v17m1-16v17m1-17v16m1-17v18m1-18v18m1-18v19m1-17v16m1-15v14m1-16v17m1-17v16m1-16v17m1-16v17m1-19v17m1-15v15m1-16v17m1-17v17m1-17v18m1-17v17m1-17v16m1-18v19m1-19v19m1-19v18m1-17v16m1-15v15m1-17v19m1-18v16m1-16v18m1-18v17m1-17v16m1-17v17m1-15v16m1-18v18m1-17v16m1-17v18m1-17v17m1-17v18m1-17v16m1-18v18m1-17v17m1-18v17m1-16v17m1-17v17m1-16v14m1-15v16m1-16v17m1-18v19m1-18v17m1-17v17m1-16v17m1-18v17m1-17v16m1-16v16m1-16v16m1-17v17m1-15v16m1-16v18m1-19v17m1-17v17m1-17v17m1-16v15m1-16v16m1-16v17m1-16v17m1-19v17m1-17v18m1-17v17m1-17v17m1-16v15m1-16v16m1-15v15m1-17v18m1-18v18m1-17v17m1-17v18m1-18v17m1-16v16m1-17v17m1-18v17m1-15v16m1-17v17m1-17v18m1-18v17m1-17v17m1-17v18m1-18v16m1-15v15m1-16v17m1-19v19m1-16v17m1-17v15m1-17v18m1-18v17m1-16v17m1-17v18m1-19v18m1-17v16m1-16v17m1-17v17m1-17v17m1-17v18m1-19v18m1-18v19m1-18v19m1-19v18m1-16v14m1-16v18m1-18v16m1-16v16m1-16v17m1-17v16m1-16v17m1-18v18m1-16v17m1-18v16m1-16v18m1-19v17m1-17v19m1-18v17m1-17v17m1-16v15m1-16v18m1-18v17m1-19v20m1-18v17m1-17v17m1-18v19m1-18v18m1-17v17m1-17v15m1-17v18m1-17v16m1-17v18m1-16v16m1-18v18m1-18v19m1-19v18m1-18v17m1-14v15m1-16v16m1-16v16m1-17v18m1-17v15m1-17v18m1-16v15m1-17v17m1-17v18m1-17v17m1-18v19m1-17v15m1-16v17m1-17v16m1-17v17m1-16v17m1-18v19m1-17v15m1-16v17m1-18v17m1-15v15m1-16v18m1-19v17m1-16v16m1-15v16m1-17v18m1-18v17m1-18v19m1-17v14m1-14v16m1-18v18m1-17v17m1-18v18m1-19v20m1-19v18m1-17v16m1-17v19m1-18v17m1-17v17m1-18v18m1-17v17m1-16v15m1-17v18m1-18v17m1-17v18m1-17v16m1-15v16m1-17v16m1-18v20m1-18v17m1-17v17m1-17v18m1-18v16m1-16v16m1-15v15m1-15v17m1-19v17m1-15v16m1-16v15m1-15v17m1-18v15m1-14v16m1-17v18m1-18v18m1-18v17m1-16v16m1-17v17m1-18v17m1-17v18m1-18v17m1-15v16m1-17v16m1-16v17m1-17v17m1-18v19m1-18v17m1-17v16m1-16v17m1-17v16m1-17v18m1-17v15m1-14v16m1-17v17m1-17v18m1-19v18m1-18v18m1-18v18m1-16v16m1-16v16m1-17v18m1-17v16m1-17v17m1-17v18m1-18v16m1-16v18m1-18v17m1-17v17m1-16v16m1-17v16m1-17v18m1-17v16m1-15v15m1-15v15m1-17v19m1-18v17m1-18v19m1-17v16m1-17v17m1-17v17m1-17v15m1-15v17m1-16v16m1-18v18m1-18v19m1-18v18m1-19v16m1-15v17m1-18v18m1-16v15m1-16v17m1-18v18m1-17v17m1-17v17m1-16v16m1-17v18m1-19v18m1-15v14m1-15v16m1-16v16m1-17v16m1-15v15m1-16v16m1-16v19m1-19v16m1-16v16m1-17v18m1-18v19m1-18v17m1-17v18m1-17v16m1-16v15m1-16v16m1-15v16m1-18v17m1-17v19m1-18v16m1-16v17m1-17v18m1-19v18m1-17v17m1-17v19m1-19v16m1-16v16m1-16v16m1-17v18m1-16v16m1-17v16m1-17v18m1-17v16m1-17v18m1-17v16m1-17v19m1-18v17m1-17v17m1-16v16m1-16v18m1-18v17m1-19v18m1-19v20m1-19v18m1-17v18m1-19v18m1-17v18m1-19v19m1-18v16m1-17v17m1-16v18m1-18v16m1-16v16m1-17v17m1-15v16m1-16v17m1-18v17m1-18v18m1-16v16m1-17v18m1-18v16m1-16v16m1-15v16m1-18v17m1-15v15m1-17v19m1-18v17m1-17v16m1-15v16m1-18v18m1-18v19"/><path stroke="#007070" d="M215 194v13m1-13v16m1-15v13m1-13v14m1-14v14m1-15v14m1-14v14m1-15v17m1-17v16m1-15v15m1-15v14m1-16v17m1-15v15m1-14v14m1-14v14m1-15v15m1-14v13m1-13v13m1-14v14m1-13v14m1-14v13m1-13v13m1-13v14m1-14v13m1-14v14m1-15v16m1-14v13m1-14v15m1-15v15m1-14v13m1-14v15m1-15v15m1-16v16m1-14v14m1-14v14m1-16v17m1-17v15m1-13v14m1-14v14m1-14v14m1-15v15m1-15v15m1-14v14m1-15v15m1-15v15m1-14v14m1-15v14m1-14v14m1-14v14m1-13v14m1-14v13m1-13v14m1-15v14m1-14v15m1-15v15m1-14v13m1-13v14m1-16v15m1-13v13m1-14v15m1-16v16m1-15v14m1-14v14m1-14v15m1-16v16m1-16v14m1-14v16m1-14v13m1-13v14m1-15v15m1-14v13m1-13v13m1-14v13m1-13v16m1-15v12m1-14v16m1-15v15m1-15v15m1-14v12m1-12v13m1-14v15m1-15v15m1-16v16m1-15v14m1-13v14m1-14v14m1-15v16m1-16v14m1-14v15m1-15v13m1-13v14m1-14v15m1-14v13m1-14v15m1-15v15m1-15v15m1-15v15m1-15v15m1-15v15m1-15v15m1-15v16m1-16v14m1-13v14m1-14v14m1-17v16m1-14v16m1-15v13m1-14v15m1-16v15m1-14v15m1-15v14m1-13v14m1-14v13m1-14v15m1-14v13m1-14v15m1-15v14m1-13v13m1-13v14m1-14v13m1-14v14m1-14v14m1-15v16m1-14v14m1-15v15m1-14v14m1-16v16m1-14v13m1-14v14m1-14v13m1-13v15m1-15v14m1-15v16m1-14v13m1-14v15m1-13v13m1-15v14m1-13v14m1-14v14m1-14v14m1-14v13m1-14v14m1-13v14m1-14v13m1-14v14m1-14v14m1-13v14m1-15v15m1-15v14m1-14v14m1-16v18m1-16v14m1-13v12m1-13v14m1-13v14m1-15v14m1-14v15m1-15v15m1-15v15m1-15v14m1-13v13m1-14v14m1-13v14m1-15v14m1-14v15m1-15v14m1-13v14m1-16v16m1-14v13m1-14v14m1-13v14m1-14v13m1-13v14m1-15v16m1-16v15m1-16v17m1-17v16m1-15v15m1-14v13m1-14v14m1-14v15m1-16v15m1-13v14m1-14v13m1-13v14m1-15v15m1-15v17m1-17v14m1-13v13m1-15v16m1-16v15m1-14v15m1-16v16m1-14v13m1-13v14m1-14v13m1-14v15m1-16v16m1-14v13m1-14v14m1-14v14m1-13v14m1-14v13m1-14v15m1-15v16m1-15v14m1-16v15m1-14v14m1-14v14m1-15v15m1-14v17m1-16v13m1-14v15m1-15v14m1-12v13m1-15v15m1-16v16m1-16v15m1-15v17m1-17v16m1-15v14m1-13v13m1-14v14m1-14v15m1-15v13m1-12v13m1-14v15m1-15v13m1-14v14m1-12v13m1-13v13m1-14v14m1-13v14m1-14v13m1-13v13m1-14v14m1-14v15m1-15v15m1-14v14m1-14v14m1-14v14m1-16v15m1-13v13m1-13v14m1-16v16m1-16v15m1-14v13m1-13v14m1-13v13m1-14v14m1-14v14m1-13v13m1-14v14m1-13v14m1-16v16m1-14v15m1-15v14m1-16v15m1-14v15m1-16v15m1-14v14m1-14v15m1-14v13m1-13v13m1-14v14m1-13v12m1-12v13m1-13v14m1-14v15m1-15v12m1-13v14m1-13v14m1-16v15m1-13v13m1-13v13m1-13v13m1-13v13m1-13v13m1-14v15m1-14v14m1-15v14m1-14v14m1-14v14m1-15v16m1-14v13m1-13v13m1-14v13m1-12v13m1-14v14m1-13v13m1-14v16m1-16v16m1-17v17m1-16v14m1-13v13m1-15v16m1-15v14m1-14v14m1-13v13m1-15v16m1-15v15m1-14v14m1-15v14m1-14v14m1-14v14m1-13v14m1-14v14m1-15v15m1-14v12m1-13v14m1-13v14m1-15v16m1-16v15m1-15v15m1-15v15m1-16v16m1-14v14m1-15v15m1-14v13m1-13v13m1-13v13m1-14v15m1-15v15m1-14v12m1-12v13m1-14v15m1-15v14m1-14v15m1-16v17m1-16v13m1-12v13m1-13v13m1-14v15m1-16v17m1-15v14m1-15v14m1-14v14m1-16v17m1-14v14m1-15v15m1-14v14m1-15v15m1-15v14m1-14v15m1-14v14m1-15v16m1-17v16m1-14v13m1-13v13m1-12v12m1-15v16m1-14v14m1-15v14m1-14v14m1-15v16m1-15v15m1-14v14m1-15v14m1-14v14m1-16v18m1-15v13m1-13v14m1-13v13m1-14v14m1-14v14m1-15v14m1-13v13m1-13v14m1-15v14m1-14v15m1-15v15m1-17v16m1-13v14m1-13v12m1-14v15m1-15v14m1-15v15m1-14v14m1-12v13m1-14v14m1-15v14m1-14v15m1-15v14m1-13v14m1-15v15m1-15v15m1-15v14m1-13v15m1-15v13m1-13v14m1-13v12m1-14v15m1-16v17m1-15v15m1-15v13m1-13v14m1-14v13m1-13v13m1-13v15m1-15v13m1-13v14m1-15v14m1-13v14m1-13v12m1-14v16m1-15v13m1-14v15m1-15v14m1-13v15m1-15v15m1-16v15m1-16v16m1-15v14m1-13v14m1-15v14m1-14v15m1-15v14m1-15v17m1-16v15m1-15v14m1-13v15m1-15v13m1-13v14m1-15v14m1-14v15m1-14v14m1-14v13m1-14v15m1-14v14m1-14v14m1-15v16m1-16v15m1-14v12m1-12v14m1-15v14m1-14v14m1-14v14m1-14v14m1-14v15m1-14v13m1-13v13m1-13v13m1-14v15m1-16v15m1-14v14m1-13v14m1-13v13m1-16v14m1-14v17m1-16v14m1-13v14m1-14v13m1-13v14m1-15v15m1-14v15m1-17v15m1-14v15m1-15v15m1-15v14m1-13v13m1-14v14m1-15v16m1-14v14m1-14v12m1-12v14m1-15v14m1-15v16m1-16v16m1-15v15m1-14v13m1-15v17m1-16v14m1-15v15m1-13v13m1-14v14m1-15v16m1-15v15m1-16v16m1-13v13m1-13v13m1-15v14m1-15v14m1-14v15m1-13v13m1-15v15m1-14v14m1-15v17m1-17v17m1-16v16m1-14v12m1-13v14m1-16v15m1-14v14m1-14v14m1-13v12m1-12v13m1-14v16m1-15v13m1-15v15m1-14v16m1-15v12m1-14v15m1-13v14m1-15v16m1-16v15m1-16v16m1-14v15m1-16v15m1-13v13m1-14v14m1-15v15m1-15v14m1-14v16m1-15v13m1-13v12m1-12v13m1-14v15m1-16v16m1-15v15m1-15v15m1-14v13m1-13v14m1-15v14m1-12v12m1-13v13m1-14v15m1-13v13m1-14v15m1-16v14m1-13v13m1-13v14m1-15v14m1-14v14m1-13v13m1-13v15m1-16v14m1-15v15m1-13v13m1-14v14m1-14v14m1-14v15m1-15v14m1-13v14m1-15v15m1-15v15m1-15v15m1-15v14m1-13v15m1-16v14m1-14v14m1-13v14m1-15v15m1-15v14m1-14v14m1-13v14m1-15v14m1-13v13m1-14v13m1-12v14m1-17v16m1-13v15m1-15v13m1-13v13m1-14v14m1-14v15m1-14v14m1-15v15m1-14v12m1-12v14m1-15v14m1-14v15m1-15v15m1-16v16m1-16v15m1-14v15m1-16v17m1-14v11m1-13v15m1-14v13m1-14v15m1-15v14m1-13v13m1-14v15m1-15v15m1-15v15m1-15v14m1-13v15m1-16v14m1-13v13m1-14v14m1-15v16m1-15v13m1-13v15m1-15v14m1-14v15m1-15v14m1-14v15m1-15v15m1-16v16m1-15v14m1-14v15m1-15v15m1-14v13m1-14v14m1-14v14m1-14v14m1-15v16m1-16v16m1-14v13m1-13v13m1-14v16m1-15v13m1-13v14m1-14v13m1-13v13m1-13v14m1-15v15m1-15v15m1-14v13m1-15v16m1-14v13m1-13v14m1-14v13m1-14v14m1-13v13m1-13v14m1-14v14m1-15v14m1-13v14m1-14v13m1-14v14m1-15v14m1-13v15m1-14v14m1-15v15m1-15v15m1-15v14m1-13v13m1-13v12m1-13v14m1-14v15m1-16v15m1-15v17m1-16v15m1-14v14m1-15v15m1-15v15m1-15v15m1-15v15m1-14v14m1-13v13m1-16v15m1-14v15m1-16v17m1-15v13m1-14v14m1-14v14m1-14v16m1-16v15m1-16v16m1-15v15m1-15v14m1-14v14m1-13v13m1-13v14m1-15v14m1-13v13m1-13v13m1-14v15m1-14v14m1-14v14m1-15v16m1-16v15m1-15v15m1-14v13m1-15v15m1-14v14m1-14v15m1-14v13m1-13v13m1-13v13m1-13v15m1-17v15m1-14v16m1-16v14m1-14v14m1-15v16m1-15v14m1-14v16m1-15v13m1-13v15m1-16v15m1-14v13m1-13v14m1-15v14m1-14v15m1-14v14m1-14v14m1-14v14m1-14v14m1-14v13m1-13v14m1-15v15m1-15v16m1-16v15m1-15v15m1-14v12m1-12v14m1-15v14m1-15v15m1-14v14m1-13v14m1-14v14m1-15v13m1-13v14m1-14v14m1-15v15m1-13v14m1-15v14m1-14v15m1-14v12m1-13v15m1-15v15m1-15v16m1-17v15m1-12v13m1-15v16m1-16v14m1-12v13m1-14v14m1-15v14m1-14v15m1-16v14m1-13v15m1-16v15m1-12v13m1-15v14m1-14v14m1-13v14m1-15v15m1-15v14m1-15v17m1-15v13m1-14v14m1-15v15m1-14v15m1-15v15m1-15v15m1-15v14m1-13v13m1-14v14m1-13v14m1-16v16m1-16v16m1-15v14m1-15v16m1-15v15m1-15v16m1-16v14m1-14v16m1-15v12m1-13v15m1-16v14m1-12v14m1-13v14m1-16v15m1-16v15m1-15v16m1-15v14m1-14v14m1-14v16m1-16v15m1-14v13m1-12v12m1-14v16m1-15v13m1-14v16m1-17v16m1-15v14m1-14v15m1-16v16m1-15v16m1-16v16m1-16v13m1-13v15m1-15v15m1-14v14m1-15v14m1-13v13m1-13v13m1-14v15m1-14v13m1-14v15m1-14v14m1-15v15m1-15v14m1-13v14m1-15v14m1-15v15m1-14v14m1-13v14m1-15v15m1-15v15m1-14v13m1-15v17m1-17v17"/><path stroke="#009696" d="M215 195v12m1-11v12m1-13v12m1-11v10m1-11v12m1-11v11m1-11v11m1-12v12m1-12v12m1-11v11m1-11v11m1-13v13m1-12v12m1-11v11m1-11v10m1-10v11m1-11v11m1-11v12m1-12v10m1-10v11m1-11v10m1-10v10m1-10v11m1-11v12m1-12v12m1-13v13m1-11v11m1-11v10m1-12v11m1-10v10m1-11v11m1-11v12m1-11v12m1-11v10m1-11v11m1-11v11m1-12v12m1-11v12m1-12v11m1-12v12m1-12v12m1-12v12m1-11v11m1-11v11m1-12v12m1-11v11m1-12v11m1-11v11m1-10v10m1-10v12m1-13v12m1-11v11m1-11v10m1-10v11m1-11v12m1-12v11m1-11v11m1-11v11m1-11v11m1-11v11m1-12v12m1-12v12m1-11v11m1-11v11m1-12v13m1-12v9m1-11v13m1-11v10m1-10v11m1-11v11m1-11v11m1-10v10m1-11v10m1-11v12m1-11v11m1-11v11m1-12v12m1-13v12m1-9v9m1-9v9m1-10v11m1-11v11m1-12v12m1-11v10m1-10v12m1-12v11m1-11v12m1-13v12m1-12v12m1-11v11m1-11v11m1-11v11m1-10v10m1-11v11m1-12v12m1-12v12m1-11v12m1-12v12m1-12v11m1-12v12m1-12v14m1-13v10m1-10v12m1-13v11m1-12v13m1-12v12m1-11v11m1-11v11m1-12v13m1-12v11m1-11v10m1-11v12m1-11v10m1-10v11m1-11v10m1-10v11m1-12v11m1-10v10m1-10v12m1-12v11m1-11v11m1-11v12m1-13v13m1-12v11m1-12v12m1-11v11m1-12v11m1-10v10m1-10v11m1-11v10m1-11v12m1-11v12m1-12v11m1-12v12m1-11v11m1-10v10m1-11v11m1-11v10m1-11v12m1-11v11m1-12v12m1-11v10m1-11v12m1-11v10m1-10v11m1-11v11m1-10v10m1-11v12m1-12v11m1-11v11m1-13v14m1-13v12m1-10v10m1-11v10m1-10v11m1-11v11m1-12v14m1-13v11m1-12v12m1-12v12m1-10v10m1-11v11m1-11v11m1-11v11m1-12v13m1-13v11m1-10v10m1-11v13m1-13v12m1-11v11m1-11v10m1-9v10m1-11v11m1-11v11m1-11v12m1-12v12m1-14v14m1-12v12m1-12v11m1-12v12m1-12v12m1-11v11m1-10v11m1-13v12m1-11v11m1-11v11m1-13v14m1-12v10m1-11v12m1-12v12m1-12v12m1-12v12m1-11v11m1-10v9m1-11v12m1-10v9m1-9v11m1-13v12m1-11v11m1-11v10m1-10v11m1-11v12m1-12v11m1-11v11m1-12v13m1-11v10m1-11v10m1-10v11m1-11v11m1-11v11m1-12v13m1-12v11m1-12v11m1-9v11m1-11v10m1-11v12m1-12v11m1-11v11m1-12v13m1-12v12m1-13v12m1-10v10m1-11v11m1-11v11m1-12v12m1-10v10m1-11v12m1-12v11m1-12v11m1-11v11m1-10v10m1-10v11m1-11v12m1-12v11m1-12v10m1-9v11m1-10v10m1-11v11m1-11v10m1-9v11m1-12v11m1-11v10m1-10v11m1-11v11m1-11v11m1-12v13m1-12v10m1-10v12m1-12v11m1-11v11m1-12v13m1-12v11m1-11v12m1-11v10m1-11v12m1-11v11m1-11v11m1-13v11m1-9v10m1-12v12m1-11v10m1-11v13m1-12v11m1-10v11m1-13v12m1-11v11m1-11v11m1-11v11m1-11v12m1-13v12m1-11v11m1-12v12m1-12v13m1-12v11m1-12v13m1-12v12m1-13v11m1-9v10m1-12v13m1-11v10m1-11v11m1-11v12m1-12v10m1-10v10m1-10v12m1-12v11m1-11v11m1-11v11m1-10v10m1-12v11m1-11v13m1-13v13m1-13v12m1-12v12m1-12v12m1-12v11m1-10v10m1-10v10m1-9v10m1-12v13m1-12v11m1-11v11m1-10v10m1-12v12m1-11v11m1-10v10m1-12v12m1-11v11m1-10v10m1-11v11m1-11v12m1-12v12m1-12v11m1-11v11m1-11v12m1-13v12m1-12v12m1-12v12m1-10v11m1-12v10m1-10v11m1-12v11m1-10v11m1-11v11m1-10v10m1-12v12m1-12v12m1-12v13m1-13v12m1-11v10m1-10v11m1-11v11m1-12v12m1-12v13m1-12v12m1-12v10m1-11v12m1-12v13m1-12v11m1-11v11m1-11v12m1-12v12m1-12v12m1-13v13m1-12v11m1-12v14m1-14v13m1-12v11m1-10v9m1-10v10m1-11v11m1-10v11m1-12v12m1-11v11m1-13v14m1-12v11m1-11v11m1-11v10m1-11v12m1-12v13m1-12v11m1-11v11m1-11v11m1-10v10m1-10v9m1-11v12m1-11v10m1-9v10m1-10v10m1-11v12m1-12v12m1-14v13m1-11v11m1-10v10m1-11v12m1-12v10m1-10v10m1-10v11m1-10v11m1-11v11m1-12v11m1-12v12m1-11v11m1-11v11m1-11v11m1-10v10m1-11v11m1-11v12m1-12v11m1-11v10m1-9v10m1-10v10m1-11v11m1-12v13m1-13v12m1-11v11m1-11v10m1-10v11m1-11v12m1-12v11m1-11v11m1-10v9m1-10v10m1-9v9m1-10v12m1-12v11m1-11v11m1-12v12m1-11v12m1-12v12m1-12v11m1-11v11m1-12v12m1-12v12m1-12v11m1-11v12m1-12v11m1-11v12m1-12v12m1-11v11m1-11v13m1-13v11m1-11v11m1-12v12m1-11v12m1-12v11m1-12v12m1-12v12m1-11v11m1-11v11m1-11v11m1-11v11m1-12v11m1-10v11m1-11v11m1-11v11m1-11v11m1-10v10m1-12v12m1-10v11m1-12v11m1-12v12m1-10v9m1-11v12m1-11v10m1-10v12m1-12v11m1-13v12m1-10v11m1-11v11m1-12v13m1-11v9m1-10v11m1-11v11m1-11v12m1-12v10m1-9v11m1-13v12m1-11v11m1-12v12m1-11v12m1-12v10m1-10v12m1-13v11m1-10v13m1-13v10m1-12v13m1-12v12m1-10v10m1-12v12m1-12v12m1-12v12m1-13v13m1-12v12m1-12v12m1-12v12m1-12v12m1-11v12m1-11v9m1-8v9m1-12v13m1-13v12m1-11v11m1-11v11m1-12v12m1-11v10m1-11v13m1-13v13m1-13v12m1-10v10m1-10v9m1-11v12m1-12v12m1-12v13m1-13v11m1-9v10m1-11v12m1-11v10m1-12v12m1-12v13m1-12v11m1-12v11m1-9v9m1-10v12m1-13v12m1-11v12m1-12v12m1-12v11m1-11v12m1-12v12m1-13v13m1-13v11m1-11v13m1-12v10m1-11v12m1-11v11m1-12v11m1-11v13m1-12v11m1-11v11m1-10v10m1-10v11m1-12v12m1-12v11m1-11v11m1-12v11m1-9v11m1-12v11m1-11v12m1-12v11m1-11v11m1-10v11m1-12v10m1-9v10m1-10v10m1-11v10m1-11v11m1-10v11m1-11v12m1-12v10m1-10v10m1-10v11m1-11v11m1-12v12m1-11v11m1-11v12m1-13v12m1-11v12m1-13v12m1-11v10m1-10v11m1-11v10m1-10v11m1-11v11m1-11v11m1-11v11m1-11v11m1-11v11m1-11v11m1-12v11m1-10v12m1-12v10m1-11v12m1-12v12m1-11v10m1-10v12m1-12v11m1-10v8m1-9v11m1-11v12m1-12v11m1-12v12m1-12v12m1-12v12m1-11v12m1-13v13m1-11v9m1-10v12m1-11v10m1-12v13m1-12v11m1-10v9m1-10v12m1-12v10m1-10v11m1-12v12m1-12v12m1-11v11m1-11v12m1-12v10m1-11v12m1-11v10m1-11v13m1-11v9m1-11v12m1-11v11m1-12v12m1-11v10m1-11v12m1-11v11m1-11v11m1-12v12m1-11v11m1-12v12m1-12v12m1-12v12m1-11v12m1-12v10m1-10v11m1-11v10m1-10v12m1-13v12m1-11v11m1-11v11m1-12v11m1-10v11m1-11v10m1-12v14m1-12v10m1-12v14m1-12v12m1-12v11m1-11v10m1-10v11m1-11v10m1-10v11m1-11v11m1-10v10m1-11v11m1-11v11m1-11v11m1-12v12m1-11v10m1-10v12m1-12v11m1-11v10m1-10v11m1-12v11m1-10v10m1-11v11m1-9v11m1-13v11m1-11v12m1-11v10m1-10v10m1-11v13m1-12v12m1-13v12m1-12v12m1-11v10m1-10v11m1-12v12m1-11v12m1-13v12m1-11v11m1-11v11m1-11v10m1-11v14m1-14v12m1-12v12m1-11v12m1-12v11m1-12v11m1-10v10m1-10v12m1-12v11m1-11v11m1-11v10m1-9v11m1-11v10m1-11v12m1-12v12m1-12v12m1-13v13m1-12v10m1-10v12m1-13v12m1-11v11m1-11v10m1-10v11m1-11v11m1-11v12m1-13v11m1-10v12m1-12v11m1-12v11m1-10v11m1-11v10m1-11v12m1-10v10m1-11v11m1-11v12m1-12v11m1-11v11m1-12v13m1-13v12m1-10v10m1-10v11m1-11v10m1-11v11m1-11v11m1-11v12m1-12v10m1-10v11m1-11v10m1-11v12m1-10v10m1-11v10m1-10v12m1-12v11m1-11v11m1-11v10m1-10v12m1-13v12m1-10v9m1-10v12m1-12v12m1-12v10m1-10v10m1-10v11m1-11v11m1-11v11m1-11v11m1-12v12m1-12v11m1-10v12m1-13v13m1-12v11m1-10v9m1-10v11m1-11v10m1-10v11m1-12v10m1-8v11m1-13v12m1-11v11m1-11v11m1-11v12m1-12v11m1-11v12m1-12v11m1-12v13m1-13v12m1-11v11m1-13v14m1-13v12m1-11v11m1-11v12m1-12v11m1-11v11m1-11v11m1-11v11m1-12v12m1-11v12m1-11v10m1-11v11m1-11v11m1-12v13m1-12v11m1-11v12m1-12v10m1-11v12m1-12v12m1-12v12m1-10v11m1-12v11m1-12v11m1-11v12m1-11v11m1-11v12m1-12v12m1-11v10m1-12v12m1-11v10m1-10v13m1-13v11m1-10v10m1-13v13m1-11v10m1-10v12m1-12v12m1-12v11m1-12v12m1-11v11m1-11v10m1-11v13m1-12v11m1-12v12m1-11v11m1-11v11m1-11v12m1-12v11m1-11v12m1-12v11m1-12v12m1-11v11m1-11v12m1-13v13m1-13v12m1-10v9m1-10v12m1-12v11m1-11v12m1-13v12m1-11v11m1-12v12"/><path stroke="#00cdcd" d="M215 196v10m1-9v9m1-9v9m1-9v9m1-9v9m1-9v8m1-8v9m1-10v10m1-9v9m1-10v11m1-10v9m1-11v12m1-10v9m1-9v10m1-10v9m1-9v9m1-10v10m1-9v9m1-9v9m1-9v9m1-9v8m1-7v8m1-10v10m1-9v9m1-9v9m1-10v11m1-10v9m2-9v9m1-9v8m1-9v10m1-9v10m1-11v11m1-10v9m1-9v9m1-10v10m1-10v11m1-11v10m1-8v9m1-10v9m1-10v10m1-9v9m1-9v9m2-10v11m1-11v10m1-9v9m1-9v8m1-9v10m1-9v9m2-8v8m1-9v9m1-9v9m1-10v11m1-10v9m1-8v8m1-10v10m2-9v9m1-9v9m1-9v9m1-9v10m2-11v10m1-9v7m1-9v11m1-9v9m1-9v9m1-9v9m1-10v10m1-9v9m2-10v11m1-10v8m1-9v10m1-11v11m1-10v10m1-9v9m1-8v7m2-8v9m2-10v9m1-8v9m1-9v10m1-10v9m1-10v9m1-9v10m1-9v9m1-9v8m1-8v9m1-9v9m1-10v10m1-10v11m1-10v9m1-9v10m1-10v9m1-10v10m2-9v10m1-10v9m1-9v10m1-10v8m1-9v11m1-10v10m1-11v10m1-9v10m3-10v8m1-7v7m1-9v10m2-9v9m1-9v10m1-11v10m1-9v8m1-7v8m1-10v10m1-9v9m1-10v10m2-9v9m1-10v9m1-8v10m1-11v10m1-9v9m1-9v9m1-9v8m1-9v10m1-9v9m2-9v10m1-11v10m1-8v9m1-11v11m1-10v9m1-10v11m1-11v10m1-9v9m1-9v9m1-9v9m2-9v9m1-10v10m1-10v10m1-9v10m1-10v9m1-9v9m3-9v8m1-8v9m1-9v9m1-9v9m1-9v11m1-12v11m1-11v11m1-11v10m1-9v8m1-9v10m1-10v10m1-8v9m1-11v10m1-9v9m1-9v9m1-9v10m1-10v9m1-9v10m1-10v9m1-9v9m1-9v10m1-11v10m1-9v10m1-11v11m1-11v11m1-10v9m2-10v10m1-10v10m1-9v9m1-9v10m1-11v10m1-9v9m1-9v10m1-11v12m1-11v10m1-11v10m1-10v11m1-10v10m1-10v9m1-10v9m1-8v9m1-9v9m1-9v8m1-7v9m1-11v11m1-10v9m1-10v9m1-8v9m1-9v10m1-10v9m1-9v9m1-10v11m1-10v10m1-11v10m1-10v9m1-9v11m1-11v10m1-10v11m1-10v9m1-9v10m1-11v11m1-9v8m1-9v10m1-10v9m1-9v8m1-9v11m1-11v10m1-11v11m1-8v8m1-10v10m1-9v9m1-9v9m1-9v9m1-10v11m1-11v9m2-8v9m2-9v9m1-9v10m1-10v8m1-9v9m1-9v10m1-8v9m1-9v8m1-9v8m1-8v10m2-10v9m1-10v9m1-8v9m1-10v10m1-10v10m1-9v8m1-9v9m1-9v10m2-10v11m1-10v9m1-9v9m1-10v10m1-10v10m1-9v9m1-9v9m1-10v9m1-7v8m1-10v10m1-10v10m2-9v9m1-8v9m1-10v9m2-10v10m2-9v10m1-10v8m1-8v9m1-10v10m1-10v11m1-11v9m1-8v9m1-9v9m1-9v8m1-8v9m1-9v10m1-10v9m1-10v11m1-11v10m2-10v10m1-9v10m2-11v9m1-8v8m1-8v9m1-9v9m1-9v9m1-9v10m1-10v10m1-10v9m1-9v10m1-11v9m1-8v9m2-9v9m1-10v10m1-10v10m1-10v10m1-9v9m1-10v10m1-10v10m1-8v9m2-10v9m2-10v10m2-9v9m1-9v9m1-9v9m3-9v10m1-11v10m1-9v9m1-9v8m1-8v10m1-11v10m1-10v10m1-10v10m1-9v9m1-10v11m1-11v10m1-10v11m2-10v9m1-9v9m1-9v8m1-9v11m1-11v10m1-9v9m1-9v8m1-9v10m1-10v11m1-10v9m2-9v9m1-10v10m1-9v9m1-10v10m1-9v9m1-9v10m1-11v11m1-9v8m1-8v7m1-7v7m1-9v9m1-8v9m1-10v9m1-8v9m1-9v9m1-10v10m1-10v11m1-10v8m1-8v9m1-10v10m1-9v9m1-9v9m1-8v8m2-9v10m1-11v10m1-9v9m1-9v10m1-10v10m1-10v9m1-10v11m1-12v11m1-9v9m1-8v8m1-10v11m1-10v9m1-9v9m1-9v9m1-9v9m1-9v10m1-10v9m1-10v10m1-10v10m1-8v8m1-10v9m1-8v9m1-10v10m1-10v11m1-10v9m1-9v9m1-9v9m1-9v9m1-10v11m1-10v9m2-9v9m1-9v9m1-9v9m1-8v8m1-9v9m1-9v9m1-9v8m1-9v10m1-8v8m1-10v11m1-10v8m1-8v9m1-10v9m1-8v10m2-10v10m1-10v10m1-11v11m1-11v11m1-11v9m1-8v10m1-11v9m1-9v10m1-9v9m1-9v9m1-8v9m1-10v9m1-9v9m2-8v9m1-10v10m1-11v9m1-8v9m1-9v9m1-9v9m2-9v9m1-9v9m1-9v9m1-9v9m1-10v10m2-9v8m1-9v10m1-9v9m1-9v8m1-8v9m1-10v10m1-10v10m1-9v9m1-9v10m1-9v7m1-10v11m1-9v9m1-9v8m1-8v10m1-10v9m1-9v10m1-10v9m1-9v10m1-10v8m3-8v9m1-10v10m1-9v10m1-10v10m1-10v10m1-10v8m1-8v10m1-10v9m1-10v11m1-11v10m1-9v9m1-10v10m1-10v11m1-11v9m1-9v9m1-8v9m1-9v9m1-10v10m1-10v10m1-10v10m1-8v8m1-8v8m1-9v9m1-10v9m1-9v11m1-10v9m1-10v10m1-9v9m1-10v10m1-9v10m1-11v11m1-9v8m1-8v8m1-9v9m1-9v9m1-10v10m1-9v8m1-7v7m1-8v10m1-10v9m1-10v11m1-11v10m1-9v8m1-9v10m1-8v8m1-9v10m1-11v11m1-11v10m1-9v9m1-9v9m1-9v9m1-10v10m1-9v9m2-9v10m1-10v8m1-8v8m1-9v10m1-9v10m1-10v10m1-10v9m1-9v9m1-8v8m2-9v9m1-9v9m1-9v9m1-10v10m1-9v9m1-10v10m1-9v10m1-10v9m1-9v9m1-8v8m1-9v9m1-9v9m1-9v9m1-9v8m1-9v10m1-9v9m1-9v9m1-9v9m1-10v9m1-9v10m1-9v9m1-9v9m1-10v10m1-9v9m2-9v10m1-11v10m2-9v9m1-9v9m1-9v10m2-10v10m1-11v11m1-10v8m1-8v9m1-9v10m1-12v10m1-7v9m1-9v8m1-10v10m1-10v9m2-8v10m2-10v8m1-8v10m2-10v10m1-11v10m1-9v9m1-10v10m1-9v10m1-10v10m1-10v9m1-10v11m1-9v8m1-9v9m1-9v8m1-8v8m1-9v11m1-10v9m1-8v8m1-9v9m1-10v10m1-10v10m1-9v10m1-11v9m1-9v10m1-8v8m1-10v11m1-10v8m1-9v10m1-9v9m1-10v10m1-9v9m1-11v11m1-8v8m1-10v10m1-10v10m1-9v8m1-9v10m1-9v9m1-10v10m1-9v10m1-10v9m1-9v8m1-7v7m1-8v9m1-9v9m1-9v9m1-9v8m2-8v8m1-9v10m1-10v10m2-10v11m1-10v9m1-9v9m1-9v8m1-8v8m1-8v9m1-9v9m1-8v7m2-8v9m1-9v9m1-9v10m1-11v9m1-8v9m1-9v10m1-11v10m1-9v8m1-8v9m1-9v8m1-7v8m1-10v10m1-9v9m1-10v10m1-11v12m1-11v10m1-10v10m1-10v11m1-10v10m1-10v9m1-10v10m1-8v8m1-9v8m1-8v9m1-10v10m1-10v11m1-10v8m1-8v10m1-9v8m1-9v11m1-11v9m1-10v10m1-9v10m1-10v9m1-9v8m1-8v8m1-8v10m1-11v10m1-9v9m1-8v8m1-8v8m1-9v9m1-9v10m1-11v11m1-10v10m1-11v11m2-10v9m1-9v9m1-10v10m1-9v8m1-9v9m1-9v9m1-8v10m1-10v9m1-10v10m1-10v9m1-9v10m1-9v9m1-10v10m1-10v10m2-10v11m1-10v10m1-10v10m1-10v10m1-10v10m1-10v9m1-9v10m1-10v10m1-9v8m1-9v10m1-10v9m1-8v8m1-9v8m1-8v9m1-9v9m1-9v10m1-9v8m1-9v8m1-8v10m2-11v10m2-10v10m1-9v8m1-9v10m1-9v9m1-9v9m1-8v8m1-9v8m1-9v10m1-9v9m1-9v9m1-10v10m1-9v9m1-10v9m1-8v10m1-10v10m1-10v9m1-9v9m1-9v9m2-9v9m1-10v9m1-7v8m1-10v9m1-8v10m1-10v9m1-8v9m1-10v9m1-9v9m1-9v9m2-9v8m1-8v9m1-11v11m1-10v10m2-10v10m1-9v8m1-8v9m1-9v9m1-8v8m1-9v9m1-9v9m1-8v8m1-9v9m1-10v10m1-10v11m1-10v9m1-10v12m2-12v10m1-9v9m1-10v10m1-9v9m1-9v9m1-9v9m1-10v10m1-10v10m1-9v9m2-9v9m1-9v9m2-9v10m1-9v8m1-9v10m1-11v10m1-10v10m1-9v10m1-10v10m1-10v9m1-11v11m1-10v9m1-9v11m1-10v10m1-10v9m2-9v9m1-9v9m1-10v10m1-10v9m1-8v9m2-9v9m1-9v9m1-9v9m1-9v9m1-10v10m2-10v11m1-10v9m1-9v9m1-9v10m1-11v10m1-10v11"/><path stroke="#00f6f6" d="M217 197v8m1-7v7m1-6v5m1-6v7m1-8v7m2-6v7m1-8v8m1-7v7m1-9v9m1-8v8m1-5v3m1-6v8m1-7v7m2-7v7m2-8v8m2-7v6m1-5v6m2-6v6m1-8v9m1-8v7m1-8v9m1-8v5m1-3v4m1-7v9m1-9v9m1-7v6m1-7v7m1-7v7m1-8v9m1-9v9m1-9v9m1-8v7m1-6v6m1-8v6m1-6v8m2-7v8m2-6v4m1-7v8m3-5v4m1-5v5m1-5v6m1-7v7m1-8v9m1-8v8m2-8v7m1-6v7m1-8v7m2-8v8m1-7v5m1-6v8m1-8v9m2-9v7m1-7v9m1-8v7m2-8v9m1-9v7m1-5v5m1-4v3m2-6v8m1-8v6m1-6v8m1-9v9m1-7v6m4-7v8m1-6v5m1-6v7m1-7v7m1-7v8m1-9v8m3-7v7m1-7v6m1-6v6m1-7v8m2-7v8m1-8v7m2-8v7m1-7v7m1-6v9m2-9v7m1-8v9m1-10v9m1-8v9m1-8v7m1-7v8m1-9v8m1-6v7m1-9v7m1-7v8m1-8v8m1-8v8m4-7v7m1-7v8m1-9v9m1-9v9m1-9v8m1-8v8m1-6v4m3-4v6m2-6v5m1-6v6m1-5v4m2-5v7m1-7v7m2-6v5m3-6v7m1-8v9m1-8v7m3-7v8m1-8v7m2-8v9m1-8v7m1-9v9m1-7v7m1-9v9m1-7v7m1-7v7m1-7v7m1-7v7m1-8v8m1-7v8m1-8v6m2-7v8m1-5v5m1-8v7m1-7v9m1-8v7m1-7v6m1-7v9m1-8v7m1-7v7m1-6v5m1-6v7m1-6v4m1-5v7m1-7v8m2-9v9m1-9v9m1-10v10m1-7v6m1-8v8m1-8v8m1-7v7m2-7v8m1-9v6m1-5v7m1-8v10m1-11v9m1-7v7m1-8v8m1-8v9m1-7v6m1-7v7m1-9v9m2-7v7m1-6v3m1-3v8m1-10v9m2-9v7m1-5v6m1-5v5m2-7v8m1-9v9m1-7v6m1-8v7m1-4v5m1-8v8m1-6v4m1-4v5m2-7v8m3-8v8m1-7v7m1-7v6m1-5v7m1-8v7m1-9v9m1-6v6m2-6v6m1-7v6m1-6v7m1-5v4m1-7v8m1-8v8m2-7v6m1-5v6m1-6v8m1-8v5m1-5v5m1-7v8m1-7v6m1-6v7m1-7v7m2-8v8m2-8v7m2-4v3m2-3v2m1-5v8m1-6v5m1-7v8m1-8v8m1-7v7m1-7v7m1-7v7m1-8v9m1-8v8m1-8v8m1-9v7m1-6v8m2-8v7m1-7v8m1-7v5m1-6v8m1-8v7m1-7v7m1-7v7m2-7v8m1-9v5m1-4v8m1-8v8m1-9v8m2-7v7m1-7v5m2-5v7m1-7v8m1-8v8m1-9v8m1-6v6m1-7v7m1-7v7m1-7v7m1-5v6m2-8v6m2-7v8m1-8v9m2-8v8m1-8v8m1-9v9m1-9v8m1-7v8m1-7v3m1-4v7m1-7v8m1-8v8m1-9v6m1-5v7m2-8v8m1-7v8m2-8v7m1-6v6m1-6v5m1-6v7m1-7v7m2-7v8m1-6v4m1-7v8m1-8v9m1-7v5m1-6v5m1-5v7m1-7v7m1-8v8m1-6v5m1-6v7m1-8v9m2-6v5m1-7v5m3-5v8m1-7v7m1-9v9m1-8v7m1-8v9m2-8v6m2-5v7m1-8v7m1-6v5m1-6v6m1-7v6m1-6v9m3-9v8m1-7v8m1-8v6m1-6v6m2-7v8m1-6v6m1-8v8m1-8v9m1-9v9m1-9v8m1-8v8m2-9v10m1-8v7m2-7v7m1-7v7m1-5v4m1-7v9m1-9v8m1-7v8m1-9v8m1-7v7m1-8v9m4-9v9m2-6v4m1-4v5m2-7v8m1-9v8m1-8v9m1-9v8m1-7v7m3-7v7m1-7v9m1-9v7m1-8v8m2-7v7m2-8v8m1-8v8m1-7v7m1-8v8m1-6v6m2-6v4m1-5v7m1-7v6m1-5v4m1-5v7m1-8v7m3-8v9m1-7v8m2-6v5m1-8v8m1-8v8m1-8v8m1-9v8m1-4v6m1-9v7m1-6v7m1-7v8m1-7v5m2-5v7m1-9v8m1-8v8m1-7v8m1-8v7m2-5v4m1-6v8m1-7v7m2-9v8m1-7v7m1-5v5m1-7v5m2-6v8m1-5v5m1-7v7m2-7v6m1-6v7m1-8v8m1-7v7m1-7v7m1-8v9m1-7v5m1-8v8m1-6v8m2-9v8m3-5v3m1-5v8m1-9v6m1-6v8m1-8v7m3-6v8m1-8v7m2-8v7m1-6v8m1-9v8m1-7v6m1-7v9m1-8v7m1-6v7m4-9v7m1-6v7m1-8v8m1-8v8m1-8v9m1-8v7m1-7v6m1-5v4m1-6v7m1-7v9m2-9v9m2-9v9m1-7v6m1-6v5m1-5v6m1-7v8m1-8v6m2-6v8m1-8v7m1-6v6m1-5v3m1-3v5m1-8v8m1-7v7m1-8v6m1-5v6m1-6v7m3-8v9m1-6v4m1-6v7m1-6v7m1-8v6m2-6v6m2-4v5m1-7v7m1-7v7m1-7v7m2-7v8m1-8v7m1-6v6m1-7v7m1-7v7m2-7v7m2-6v5m2-6v8m2-8v7m1-7v7m1-7v6m2-6v8m2-7v5m1-6v7m1-7v6m1-6v7m2-6v5m1-7v8m2-8v8m1-7v7m3-7v6m1-7v8m1-7v8m1-8v7m1-8v8m1-5v4m1-5v5m1-7v9m4-9v8m1-6v6m4-8v8m1-8v7m1-5v4m1-5v6m1-7v9m2-9v8m1-8v8m1-8v8m3-6v7m1-8v4m1-5v8m1-5v4m1-7v6m2-3v5m1-5v6m1-8v8m2-9v8m1-7v6m2-5v7m1-9v8m1-8v8m1-8v8m1-8v9m1-7v6m2-8v8m2-7v6m1-7v8m2-7v8m1-9v8m1-5v5m1-8v8m1-7v5m1-6v8m1-8v9m2-9v8m1-7v6m1-6v6m2-6v7m1-7v7m1-8v8m1-7v7m1-9v9m1-8v8m1-7v7m2-8v9m1-8v6m3-6v7m1-7v7m1-7v7m1-5v4m1-5v6m3-7v4m1-2v3m1-5v7m1-8v7m1-6v6m1-6v8m1-8v7m1-7v7m2-7v7m2-9v9m1-8v8m2-6v6m1-6v6m1-7v6m1-5v6m1-7v7m1-6v5m1-7v8m1-6v6m1-8v8m1-8v8m1-8v9m1-8v6m2-6v7m1-8v8m1-8v9m1-7v4m1-6v8m1-7v6m2-7v6m1-5v7m1-5v5m2-7v6m1-6v8m1-8v8m1-8v8m1-8v7m2-8v9m3-8v7m1-8v7m1-6v7m1-8v9m1-9v7m1-6v7m2-5v4m1-6v8m1-8v7m1-8v7m1-6v6m2-7v9m2-9v9m1-9v9m1-8v7m1-7v7m1-7v8m1-6v4m1-6v8m1-6v4m2-6v6m1-5v5m2-7v9m1-6v6m2-8v8m1-8v5m1-4v4m1-5v7m1-8v9m2-8v7m2-8v8m3-7v8m1-8v7m1-7v7m2-8v9m1-7v4m1-5v8m1-8v8m1-9v9m2-9v9m1-8v6m2-7v7m1-6v8m1-9v7m1-6v7m2-7v8m1-8v7m1-7v8m1-9v9m1-8v9m1-9v5m1-5v8m2-7v6m1-7v7m2-6v5m1-6v7m1-8v8m1-7v7m1-7v7m1-6v5m1-6v6m1-7v7m1-4v4m1-8v10m1-8v6m1-6v8m1-7v4m2-5v6m1-5v6m1-5v5m1-7v7m1-7v7m2-6v5m1-6v7m2-8v8m1-6v6m1-6v4m1-3v6m1-8v7m3-8v9m1-8v7m1-8v9m1-8v7m1-9v10m1-9v7m1-7v8m2-8v8m2-8v8m1-6v6m1-6v5m1-7v8m1-6v6m1-7v7m2-7v7m1-7v8m2-9v8m1-7v7m1-8v9m2-8v8m1-8v8m1-8v8m1-9v6"/><path stroke="#052c2c" d="M214 206V304"/><path stroke="#001d00" d="M22 322v21m1-19v18m1-21v21m1-20v21m1-19v17m1-20v20m1-19v20m1-23v23m1-25v25m1-20v18m1-16v21m1-23v18m1-17v19m1-19v18m1-22v22m1-18v18m1-18v18m1-18v18m1-18v22m1-24v20m1-19v20m1-19v17m1-18v19m1-17v16m1-15v15m1-18v20m1-25v23m1-17v18m1-19v19m1-20v22m1-21v19m1-18v18m1-18v19m1-23v21m1-18v19m1-23v23m1-18v19m1-20v21m1-20v18m1-18v21m1-21v19m1-19v17m1-20v26m1-24v20m1-20v19m1-19v19m1-20v21m1-18v18m1-20v17m1-17v18m1-18v19m1-20v23m1-22v21m1-24v24m1-20v17m1-17v18m1-20v22m1-21v18m1-18v18m1-21v21m1-18v18m1-17v19m1-19v20m1-20v18m1-21v21m1-19v20m1-18v17m1-18v17m1-18v20m1-22v22m1-20v19m1-19v19m1-18v19m1-20v19m1-19v19m1-18v19m1-20v20m1-19v17m1-17v19m1-19v19m1-20v20m1-20v23m1-23v20m1-21v21m1-25v24m1-19v19m1-19v19m1-18v17m1-18v18m1-17v19m1-21v20m1-18v17m1-18v20m1-20v19m1-19v22m1-21v17m1-22v24m1-20v19m1-19v25m1-24v21m1-20v16m1-17v19m1-20v19m1-20v19m1-17v22m1-23v21m1-21v20m1-20v19m1-20v22m1-20v18m1-18v19m1-20v20m1-21v19m1-18v19m1-18v18m1-22v21m1-16v16m1-18v21m1-19v19m1-20v17m1-17v18m1-18v17m1-17v18m1-18v20m1-20v16m1-17v19m1-20v19m1-18v18m1-19v20m1-18v15m1-17v19m1-17v17m1-18v20m1-20v19m1-18v18m1-22v22m1-20v21m1-20v19m1-18v21m1-21v18m1-19v18m1-17v17m1-17v18m1-18v19m1-23v23m1-19v18m1-20v20m1-19v20m1-19v17m1-18v19m1-19v18m1-20v21m1-18v18m1-18v18m1-18v19m1-20v22m1-26v23m1-24v25m1-20v19m1-20v25m1-25v20m1-19v20m1-25v24m1-19v19m1-19v19m1-19v19m1-20v20m1-20v23m1-21v22m1-24v23m1-22v18m1-18v18m1-17v18m1-24v24m1-19v18m1-19v20m1-19v18m1-17v17m1-17v17m1-21v23m1-24v24m1-19v18m1-20v21m1-21v21m1-26v23m1-16v16m1-17v19m1-20v21m1-20v18m1-19v20m1-18v16m1-16v17m1-20v21m1-19v20m1-21v19m1-18v18m1-17v19m1-21v21m1-22v23m1-22v20m1-20v21m1-21v20m1-19v19m1-20v20m1-20v20m1-19v20m1-21v20m1-22v22m1-20v20m1-19v18m1-19v20m1-18v22m1-27v25m1-23v24m1-21v17m1-20v22m1-20v18m1-18v18m1-20v20m1-19v20m1-20v20m1-18v17m1-18v23m1-23v19m1-18v19m1-20v17m1-16v19m1-21v19m1-19v20m1-20v19m1-18v20m1-20v19m1-20v19m1-17v19m1-20v23m1-23v20m1-19v18m1-18v17m1-19v21m1-19v17m1-19v20m1-20v19m1-17v19m1-18v16m1-17v18m1-18v18m1-18v16m1-17v19m1-18v17m1-19v19m1-18v19m1-21v21m1-22v25m1-23v21m1-20v21m1-20v18m1-20v20m1-19v17m1-17v18m1-17v17m1-18v18m1-19v19m1-18v19m1-20v19m1-17v16m1-16v17m1-18v19m1-20v20m1-18v17m1-18v19m1-20v21m1-19v18m1-19v20m1-20v17m1-21v22m1-16v15m1-21v22m1-20v20m1-17v16m1-17v18m1-19v20m1-24v23m1-17v16m1-16v21m1-21v18m1-20v23m1-22v18m1-23v22m1-19v21m1-23v28m1-23v17m1-19v24m1-24v19m1-18v18m1-18v17m1-16v18m1-17v17m1-21v23m1-23v20m1-17v15m1-17v19m1-18v17m1-20v21m1-19v20m1-19v19m1-18v18m1-20v21m1-20v21m1-23v21m1-19v19m1-21v21m1-20v20m1-20v18m1-18v21m1-19v17m1-21v19m1-15v17m1-17v17m1-18v18m1-20v20m1-19v20m1-18v16m1-17v17m1-17v21m1-22v18m1-16v18m1-19v19m1-19v21m1-23v21m1-21v21m1-20v24m1-22v18m1-20v18m1-16v18m1-20v19m1-18v19m1-19v17m1-19v20m1-19v20m1-18v18m1-18v17m1-23v23m1-19v19m1-20v19m1-17v19m1-20v19m1-19v17m1-17v20m1-19v19m1-19v20m1-19v18m1-21v19m1-17v22m1-23v19m1-17v18m1-18v15m1-17v20m1-20v21m1-20v17m1-17v19m1-19v17m1-18v19m1-17v16m1-20v20m1-18v19m1-19v20m1-19v17m1-23v24m1-19v18m1-16v17m1-19v21m1-21v19m1-20v19m1-19v18m1-18v19m1-19v19m1-17v19m1-18v17m1-18v20m1-21v20m1-20v20m1-25v22m1-19v21m1-19v20m1-20v20m1-20v19m1-18v17m1-16v16m1-19v20m1-19v19m1-18v19m1-19v18m1-20v21m1-20v20m1-19v19m1-20v23m1-23v19m1-19v24m1-23v18m1-19v19m1-18v17m1-17v19m1-22v21m1-17v18m1-19v19m1-21v19m1-19v21m1-19v19m1-19v18m1-17v16m1-18v19m1-19v25m1-26v24m1-28v24m1-25v25m1-19v19m1-18v23m1-27v23m1-24v28m1-22v18m1-20v19m1-19v20m1-20v20m1-21v20m1-20v19m1-17v18m1-18v17m1-18v19m1-24v24m1-19v19m1-20v20m1-20v19m1-17v18m1-19v20m1-20v21m1-24v21m1-18v20m1-22v25m1-25v23m1-20v18m1-20v21m1-27v25m1-21v21m1-18v22m1-23v19m1-17v18m1-19v18m1-17v19m1-20v19m1-24v25m1-19v18m1-17v16m1-17v20m1-20v17m1-21v22m1-19v18m1-18v19m1-25v26m1-19v17m1-18v19m1-20v20m1-24v24m1-17v16m1-20v20m1-17v17m1-22v23m1-19v19m1-19v20m1-22v22m1-19v18m1-18v18m1-19v18m1-19v20m1-19v19m1-18v17m1-17v19m1-19v17m1-20v22m1-19v17m1-18v18m1-17v18m1-18v17m1-18v19m1-19v20m1-18v16m1-18v18m1-16v17m1-18v21m1-22v18m1-16v15m1-17v18m1-19v19m1-19v20m1-19v17m1-22v24m1-19v19m1-18v19m1-20v19m1-21v20m1-19v19m1-19v20m1-20v21m1-21v19m1-18v18m1-18v17m1-16v17m1-17v17m1-24v23m1-17v17m1-18v20m1-20v21m1-19v17m1-19v18m1-18v19m1-18v23m1-23v18m1-18v23m1-23v19m1-20v19m1-19v19m1-18v18m1-19v20m1-20v21m1-20v17m1-19v21m1-18v17m1-19v19m1-20v21m1-22v20m1-18v21m1-20v18m1-18v20m1-20v19m1-19v18m1-19v19m1-18v18m1-18v18m1-18v17m1-18v19m1-17v16m1-18v19m1-22v22m1-18v20m1-20v17m1-19v20m1-19v19m1-19v20m1-21v21m1-20v21m1-21v20m1-19v19m1-20v18m1-18v21m1-20v18m1-18v21m1-23v21m1-18v16m1-17v19m1-20v19m1-19v20m1-20v18m1-20v22m1-18v17m1-19v20m1-20v20m1-20v20m1-19v20m1-21v18m1-17v22m1-28v26m1-20v20m1-23v22m1-20v19m1-19v20m1-24v28m1-24v19m1-20v21m1-20v19m1-17v17m1-19v20m1-19v19m1-18v19m1-20v17m1-19v21m1-20v19m1-17v16m1-18v18m1-18v21m1-20v17m1-18v19m1-21v19m1-15v16m1-17v17m1-17v17m1-18v20m1-20v19m1-20v22m1-20v19m1-19v25m1-26v19m1-20v19m1-19v20m1-21v20m1-18v20m1-18v17m1-18v16m1-18v20m1-18v18m1-19v20m1-19v17m1-17v18m1-21v22m1-20v23m1-23v21m1-22v26m1-23v19m1-22v20m1-19v20m1-19v18m1-19v19m1-18v17m1-19v20m1-21v21m1-19v20m1-23v23m1-20v23m1-24v20m1-21v20m1-20v20m1-17v18m1-19v18m1-17v17m1-17v17m1-17v17m1-17v18m1-18v20m1-20v18m1-17v20m1-23v21m1-19v17m1-17v19m1-19v20m1-21v19m1-20v19m1-18v20m1-21v20m1-25v25m1-19v20m1-19v18m1-18v19m1-21v20m1-20v21m1-20v20m1-20v20m1-21v21m1-19v17m1-18v19m1-19v20m1-19v18m1-19v20m1-20v20m1-19v18m1-16v15m1-18v19m1-19v19m1-18v17m1-19v21m1-20v18m1-17v17m1-17v19m1-19v17m1-21v23m1-19v19m1-20v20m1-20v19m1-19v19m1-20v19m1-17v18m1-24v24m1-19v18m1-24v26m1-21v20m1-18v17m1-18v19m1-19v18m1-18v23m1-23v19m1-19v19m1-24v24m1-20v20m1-20v19m1-19v20m1-21v22m1-20v19m1-18v19m1-18v17m1-18v19m1-20v18m1-17v17m1-17v18m1-19v17m1-17v18m1-19v21m1-19v19m1-19v17m1-23v23m1-16v20m1-22v18m1-23v27m1-24v24m1-22v18m1-17v17m1-17v17m1-21v21m1-17v19m1-20v19m1-19v19m1-19v19m1-19v21m1-22v20m1-20v19m1-18v18m1-18v18m1-16v15m1-17v19m1-19v20m1-18v17m1-19v18m1-17v19m1-21v18m1-18v20m1-19v18m1-17v17m1-18v18m1-17v16m1-19v24m1-22v20m1-22v20m1-17v16m1-17v19m1-20v19m1-24v26m1-21v20m1-20v19m1-17v18m1-19v19m1-21v21m1-19v19m1-18v18m1-18v18m1-18v18m1-19v19m1-18v18m1-18v18m1-19v19m1-19v22m1-22v19m1-21v21m1-20v19m1-21v21m1-17v17m1-18v18m1-22v24m1-22v21m1-24v22m1-17v18m1-19v21m1-21v19m1-18v17m1-16v18m1-20v19m1-19v22m1-21v17m1-17v19m1-22v24m1-21v17m1-18v19m1-17v19m1-20v18m1-19v19m1-17v18m1-18v19m1-21v21m1-21v19m1-19v22m1-22v21m1-20v22m1-21v17m1-18v24m1-28v22m1-19v19m1-18v19m1-19v19m1-19v19m1-20v20m1-18v17m1-16v17m1-19v19m1-18v18m1-25v25m1-19v21m1-23v22m1-20v19m1-19v20m1-21v19m1-19v21m1-21v19m1-17v18m1-23v23m1-20v20m1-19v23m1-23v19m1-18v18m1-23v24m1-20v19m1-18v18m1-20v21m1-23v21m1-17v19m1-22v20m1-20v22m1-21v21m1-20v18m1-18v19m1-20v20m1-21v21m1-20v21m1-20v18m1-18v19m1-19v18m1-19v19m1-18v17m1-17v19m1-19v17m1-17v19m1-18v18m1-20v20m1-20v19m1-17v21m1-22v18m1-19v19m1-17v16m1-18v19m1-20v24m1-22v20m1-22v20m1-20v22m1-19v18m1-19v18m1-19v20m1-20v18m1-17v17m1-17v18m1-18v18m1-18v17m1-18v20m1-21v21m1-18v16m1-18v18m1-18v19m1-20v21m1-20v18m1-16v18m1-20v17m1-18v20m1-17v21m1-22v17m1-16v16m1-17v18m1-20v25m1-27v22m1-17v15m1-16v19m1-20v18m1-18v19m1-17v17m1-19v19m1-20v24m1-23v19m1-18v18m1-18v17m1-17v19m1-20v19m1-24v26m1-18v14m1-17v20m1-20v20m1-19v18m1-18v19m1-20v18m1-17v17m1-18v19m1-19v20m1-19v18m1-22v27m1-22v18m1-19v19m1-21v20m1-20v21m1-20v20m1-18v18m1-20v19m1-19v20m1-19v24m1-28v21m1-22v22m1-17v19m1-18v16m1-19v19m1-17v25m1-24v17m1-20v20m1-18v20m1-20v19m1-18v17m1-17v17m1-19v19m1-18v19m1-19v18m1-19v18m1-18v19m1-19v19m1-18v18m1-23v29m1-25v19m1-19v18m1-18v23m1-24v25m1-29v24m1-20v21m1-18v16m1-23v26m1-21v18m1-16v17m1-18v19m1-21v20m1-17v17m1-18v18m1-21v22m1-20v20m1-18v17m1-18v18m1-18v18m1-20v20m1-19v20m1-19v19m1-19v18m1-19v17m1-22v22m1-17v19m1-19v18m1-17v19m1-20v20m1-21v20m1-19v21m1-21v18m1-18v18m1-18v19m1-18v22m1-24v27m1-26v20m1-19v19m1-19v20m1-21v18m1-19v22m1-21v19m1-19v19m1-20v21m1-19v21m1-21v22m1-26v21m1-23v30m1-25v17m1-16v17m1-18v19m1-20v20m1-18v19m1-19v19m1-20v19m1-20v26m1-23v17m1-19v19m1-18v18m1-21v21m1-19v19m1-19v21m1-20v18m1-19v20m1-24v23m1-17v17m1-19v20m1-22v20m1-16v22m1-23v19m1-25v25m1-19v19m1-20v17m1-16v22m1-23v18"/><path stroke="#002f00" d="M22 324v17m1-17v17m1-17v16m1-16v16m1-15v16m1-17v17m1-17v16m1-17v18m1-17v15m1-17v17m1-15v16m1-16v16m1-17v18m1-16v16m1-17v16m1-16v15m1-16v19m1-18v16m1-16v17m1-18v18m1-18v18m1-17v16m1-16v16m1-15v14m1-14v14m1-15v16m1-15v16m1-18v18m1-18v16m1-18v20m1-17v17m1-16v14m1-16v17m1-17v17m1-17v18m1-17v17m1-19v18m1-16v16m1-16v16m1-16v17m1-18v19m1-18v16m1-17v16m1-16v18m1-17v16m1-18v18m1-17v17m1-16v16m1-17v17m1-17v17m1-17v17m1-17v18m1-17v17m1-17v17m1-18v16m1-15v16m1-17v17m1-17v17m1-16v17m1-16v16m1-17v15m1-15v17m1-16v15m1-15v15m1-17v18m1-17v16m1-17v17m1-17v16m1-17v20m1-19v17m1-17v17m1-17v17m1-17v18m1-18v16m1-14v15m1-16v17m1-18v16m1-15v15m1-15v16m1-16v17m1-17v17m1-18v17m1-16v16m1-17v17m1-17v17m1-18v17m1-15v15m1-15v15m1-15v15m1-15v16m1-18v19m1-17v17m1-18v18m1-18v18m1-17v17m1-17v15m1-15v16m1-17v17m1-15v14m1-16v17m1-15v14m1-16v18m1-16v16m1-18v16m1-15v16m1-18v18m1-16v17m1-17v16m1-17v17m1-16v16m1-15v14m1-15v16m1-16v17m1-18v16m1-15v16m1-17v17m1-17v17m1-17v17m1-16v16m1-16v15m1-17v19m1-18v17m1-17v17m1-17v17m1-17v17m1-17v16m1-16v16m1-15v15m1-16v17m1-17v16m1-17v17m1-15v15m1-14v15m1-17v18m1-19v18m1-17v17m1-18v19m1-19v19m1-16v15m1-17v17m1-17v16m1-16v17m1-18v19m1-18v16m1-15v17m1-19v17m1-17v17m1-16v18m1-18v15m1-14v16m1-18v18m1-17v16m1-15v15m1-14v14m1-16v17m1-17v16m1-16v16m1-16v18m1-18v17m1-17v18m1-19v18m1-18v19m1-19v19m1-18v17m1-18v18m1-16v16m1-18v18m1-18v18m1-17v18m1-18v16m1-15v15m1-15v16m1-17v16m1-16v17m1-18v17m1-17v18m1-16v16m1-16v16m1-17v17m1-18v19m1-17v17m1-17v17m1-19v18m1-19v19m1-18v18m1-18v16m1-15v16m1-17v19m1-17v15m1-16v17m1-17v15m1-16v19m1-19v17m1-17v18m1-17v16m1-15v15m1-17v18m1-18v18m1-19v19m1-18v19m1-20v20m1-18v16m1-17v17m1-16v16m1-16v16m1-16v17m1-16v15m1-16v17m1-18v18m1-18v19m1-18v18m1-18v17m1-17v17m1-18v19m1-16v15m1-17v17m1-18v18m1-17v17m1-17v17m1-18v18m1-18v17m1-15v16m1-18v17m1-15v15m1-15v15m1-15v14m1-14v17m1-19v18m1-18v18m1-17v17m1-16v17m1-19v17m1-16v16m1-15v16m1-17v16m1-15v16m1-18v17m1-16v16m1-16v17m1-17v17m1-18v18m1-18v17m1-16v17m1-16v16m1-18v18m1-17v17m1-16v15m1-16v17m1-16v16m1-17v16m1-18v20m1-19v17m1-17v17m1-16v18m1-18v17m1-17v18m1-19v18m1-18v18m1-17v17m1-17v16m1-18v18m1-16v16m1-17v18m1-17v17m1-16v15m1-17v18m1-18v18m1-18v18m1-17v17m1-17v17m1-17v17m1-16v15m1-16v17m1-17v16m1-16v15m1-15v16m1-17v18m1-18v18m1-17v17m1-17v16m1-18v18m1-17v17m1-15v16m1-18v17m1-17v17m1-17v18m1-17v17m1-18v17m1-16v16m1-17v18m1-18v17m1-16v16m1-17v18m1-16v14m1-15v15m1-14v16m1-16v16m1-18v18m1-17v16m1-17v16m1-15v15m1-15v17m1-16v16m1-18v18m1-17v18m1-18v16m1-16v18m1-19v18m1-18v16m1-16v17m1-17v18m1-17v17m1-18v17m1-18v18m1-16v16m1-16v15m1-15v16m1-15v15m1-16v17m1-19v17m1-17v19m1-17v17m1-16v14m1-15v16m1-18v18m1-16v16m1-16v17m1-18v18m1-18v17m1-17v18m1-17v16m1-17v17m1-18v19m1-17v16m1-17v16m1-15v18m1-18v16m1-15v15m1-17v17m1-16v17m1-18v18m1-17v16m1-18v18m1-18v18m1-17v18m1-17v16m1-16v15m1-16v17m1-17v19m1-18v16m1-16v16m1-17v16m1-16v17m1-17v18m1-17v17m1-17v15m1-16v17m1-17v18m1-18v16m1-15v16m1-16v16m1-17v18m1-18v17m1-16v15m1-15v17m1-19v19m1-17v16m1-17v17m1-15v15m1-15v14m1-16v18m1-18v17m1-17v18m1-17v15m1-16v18m1-18v17m1-16v17m1-17v15m1-15v16m1-18v18m1-16v16m1-17v17m1-16v16m1-16v17m1-19v17m1-16v16m1-15v14m1-14v16m1-17v18m1-18v16m1-15v16m1-17v18m1-18v17m1-17v18m1-18v16m1-16v17m1-16v16m1-17v16m1-15v16m1-16v16m1-16v15m1-17v18m1-16v15m1-16v17m1-16v16m1-17v17m1-16v17m1-18v17m1-16v16m1-16v15m1-16v16m1-16v18m1-17v16m1-18v17m1-16v16m1-16v16m1-17v18m1-18v19m1-18v17m1-15v16m1-19v18m1-17v18m1-18v18m1-17v15m1-16v15m1-15v17m1-17v16m1-16v16m1-16v16m1-16v17m1-16v15m1-16v18m1-17v17m1-17v17m1-18v17m1-16v16m1-17v17m1-17v18m1-19v19m1-17v14m1-16v18m1-19v18m1-17v19m1-18v18m1-18v17m1-17v18m1-19v18m1-16v16m1-16v15m1-16v17m1-17v16m1-16v17m1-16v16m1-16v15m1-16v18m1-19v18m1-17v17m1-18v18m1-16v16m1-18v18m1-16v16m1-18v17m1-16v17m1-18v18m1-18v19m1-17v17m1-18v17m1-17v18m1-18v17m1-16v14m1-15v16m1-17v17m1-17v19m1-18v17m1-16v16m1-18v17m1-16v16m1-17v19m1-19v18m1-17v17m1-18v17m1-15v17m1-18v16m1-18v19m1-15v14m1-15v15m1-14v15m1-17v17m1-17v17m1-17v17m1-17v17m1-18v18m1-18v18m1-18v17m1-18v20m1-17v16m1-18v19m1-18v17m1-19v19m1-17v16m1-16v17m1-16v16m1-18v18m1-17v17m1-17v15m1-14v16m1-17v16m1-16v16m1-16v15m1-16v19m1-19v17m1-15v16m1-17v17m1-17v17m1-19v19m1-17v18m1-18v18m1-19v18m1-17v16m1-17v17m1-16v16m1-15v14m1-15v18m1-18v16m1-17v18m1-16v16m1-19v19m1-18v18m1-17v15m1-15v17m1-18v17m1-17v18m1-18v18m1-18v18m1-18v17m1-16v17m1-17v16m1-15v15m1-17v18m1-17v17m1-16v15m1-16v16m1-16v17m1-18v17m1-17v18m1-17v17m1-17v17m1-17v17m1-19v18m1-16v17m1-18v18m1-18v17m1-17v18m1-18v19m1-18v17m1-18v18m1-17v16m1-16v16m1-16v16m1-16v17m1-19v17m1-16v17m1-15v16m1-16v15m1-16v16m1-17v18m1-17v16m1-17v17m1-17v18m1-19v19m1-18v19m1-17v15m1-17v17m1-16v15m1-17v19m1-17v17m1-17v17m1-18v17m1-16v17m1-19v19m1-18v18m1-17v16m1-17v18m1-18v17m1-18v19m1-16v15m1-17v16m1-15v17m1-16v14m1-17v19m1-16v15m1-16v17m1-17v14m1-15v18m1-18v19m1-20v19m1-18v18m1-17v17m1-17v16m1-17v17m1-17v17m1-17v18m1-17v15m1-15v16m1-16v17m1-18v17m1-17v18m1-19v19m1-17v17m1-17v17m1-18v18m1-17v17m1-17v16m1-17v18m1-17v16m1-15v17m1-18v16m1-16v16m1-17v17m1-16v17m1-18v17m1-18v18m1-16v16m1-17v17m1-18v18m1-18v18m1-16v17m1-19v17m1-15v15m1-15v17m1-18v18m1-18v16m1-15v15m1-15v17m1-17v16m1-17v16m1-16v16m1-15v15m1-16v18m1-17v16m1-17v18m1-17v15m1-15v16m1-17v16m1-16v16m1-15v16m1-17v17m1-17v17m1-17v16m1-16v17m1-18v18m1-18v19m1-20v19m1-16v17m1-19v18m1-18v17m1-16v17m1-15v15m1-18v18m1-17v18m1-16v15m1-17v16m1-14v14m1-15v14m1-15v16m1-17v19m1-18v18m1-16v14m1-16v18m1-18v17m1-16v16m1-16v15m1-15v17m1-17v16m1-16v16m1-17v16m1-17v19m1-18v16m1-16v18m1-17v17m1-19v18m1-17v18m1-17v16m1-16v15m1-15v15m1-16v16m1-15v17m1-18v17m1-17v18m1-18v17m1-16v16m1-16v16m1-17v18m1-17v16m1-17v17m1-17v17m1-15v16m1-17v16m1-17v17m1-17v17m1-16v15m1-16v17m1-17v16m1-15v16m1-16v15m1-15v15m1-14v14m1-15v16m1-16v15m1-16v16m1-16v17m1-16v15m1-15v15m1-16v16m1-15v17m1-18v16m1-16v18m1-19v17m1-16v19m1-19v16m1-16v17m1-16v15m1-15v15m1-15v15m1-16v18m1-18v18m1-17v16m1-18v18m1-16v17m1-18v16m1-17v18m1-18v18m1-17v17m1-18v17m1-16v17m1-16v17m1-17v17m1-20v20m1-16v15m1-16v16m1-18v19m1-19v18m1-18v19m1-18v16m1-16v16m1-15v16m1-16v17m1-20v20m1-19v19m1-19v17m1-16v16m1-16v16m1-16v16m1-16v16m1-16v18m1-19v18m1-17v17m1-17v17m1-18v19m1-17v15m1-16v18m1-18v17m1-18v17m1-16v17m1-17v16m1-17v17m1-17v17m1-17v18m1-17v15m1-15v17m1-17v16m1-16v16m1-17v18m1-17v16m1-16v17m1-17v16m1-16v17m1-17v17m1-17v17m1-18v18m1-16v15m1-15v16m1-17v17m1-17v17m1-18v19m1-20v20m1-18v17m1-16v16m1-17v17m1-17v15m1-15v17m1-17v16m1-17v18m1-18v17m1-17v17m1-15v16m1-18v18m1-17v16m1-15v15m1-16v17m1-18v18m1-16v15m1-16v16m1-16v18m1-19v18m1-17v17m1-17v18m1-19v18m1-18v17m1-16v17m1-18v18m1-18v18m1-16v16m1-17v16m1-17v18m1-17v17m1-17v18m1-17v15m1-17v17m1-15v16m1-18v17m1-18v19m1-17v17m1-17v17m1-18v18m1-17v17m1-17v16m1-16v17m1-16v14m1-15v16m1-17v16m1-16v17m1-17v18m1-17v17m1-18v18m1-16v14m1-15v17m1-17v18m1-18v16m1-18v19m1-18v17m1-17v16m1-16v19m1-19v17m1-16v15m1-17v18m1-17v17m1-17v17m1-16v17m1-19v18m1-18v18m1-16v16m1-18v17m1-14v16m1-18v17m1-17v18m1-18v18m1-18v17m1-17v16m1-16v18m1-19v18m1-16v16m1-16v17m1-18v17m1-16v18m1-17v14m1-15v15m1-16v16m1-16v17m1-17v17m1-16v17m1-17v16m1-17v17m1-16v17m1-17v15m1-15v17m1-17v16m1-17v18m1-18v18m1-18v18m1-18v17m1-16v16m1-18v19m1-17v16m1-15v14m1-16v17m1-16v17m1-17v15m1-15v16m1-17v16m1-16v16m1-17v18m1-16v16m1-15v15m1-16v16m1-16v16m1-17v16m1-17v17m1-16v18m1-18v18m1-17v16m1-17v18m1-17v17m1-17v16m1-16v16m1-17v17m1-17v17m1-15v15m1-16v15m1-15v16m1-16v15m1-15v15m1-15v16m1-17v18m1-17v15m1-15v16m1-16v17m1-18v16m1-17v18m1-16v16m1-16v15m1-16v16m1-16v16m1-15v17m1-17v17m1-18v17m1-17v18m1-18v17m1-17v18m1-18v18m1-16v16m1-18v17m1-17v18m1-17v16m1-16v16m1-16v17m1-17v16m1-17v18m1-17v17m1-18v16m1-16v17m1-17v18m1-17v15m1-16v17m1-17v16m1-15v17m1-18v18m1-18v16m1-16v17m1-17v16m1-15v15m1-16v16m1-16v17m1-17v16m1-15v17m1-18v16m1-15v15m1-15v15m1-15v16m1-18v18m1-17v17m1-16v16m1-16v16m1-16v16m1-16v16m1-17v18m1-18v17m1-17v18m1-17v15m1-16v18m1-18v18m1-17v16m1-17v16m1-15v16m1-16v16m1-17v16m1-17v18m1-16v16m1-17v15m1-16v19m1-17v15m1-15v17m1-18v16m1-17v18m1-16v16m1-18v19m1-17v16m1-16v17m1-18v17m1-17v18m1-18v17m1-17v15m1-15v18m1-19v18m1-18v19m1-17v15m1-15v15m1-17v18m1-16v16"/><path stroke="#004700" d="M22 324v16m1-15v14m1-14v15m1-15v16m1-16v14m1-15v15m1-15v15m1-15v15m1-15v15m1-15v15m1-14v14m1-14v14m1-15v14m1-14v15m1-15v15m1-13v13m1-15v16m1-15v15m1-16v15m1-14v14m1-15v15m1-13v12m1-12v13m1-14v14m1-14v14m1-14v15m1-16v15m1-14v15m1-15v14m1-15v16m1-16v16m1-15v14m1-15v15m1-15v16m1-17v16m1-14v14m1-15v16m1-15v15m1-16v15m1-14v14m1-14v15m1-16v15m1-14v13m1-13v14m1-14v13m1-15v17m1-16v16m1-15v14m1-14v14m1-15v15m1-14v14m1-14v14m1-16v17m1-14v13m1-13v13m1-14v14m1-14v14m1-14v14m1-14v15m1-15v15m1-16v14m1-12v12m1-13v14m1-14v14m1-15v15m1-14v14m1-14v14m1-14v13m1-13v14m1-14v14m1-14v13m1-14v16m1-15v15m1-16v15m1-15v14m1-15v16m1-14v13m1-14v15m1-14v14m1-14v14m1-15v15m1-15v14m1-13v13m1-14v14m1-12v13m1-15v14m1-14v13m1-12v13m1-13v13m1-14v16m1-16v15m1-14v14m1-15v16m1-16v16m1-16v16m1-16v13m1-12v15m1-15v13m1-14v15m1-15v16m1-15v14m1-16v16m1-15v16m1-16v14m1-14v14m1-13v14m1-15v15m1-14v15m1-16v15m1-13v14m1-15v13m1-13v13m1-14v15m1-15v16m1-17v17m1-15v14m1-14v13m1-14v14m1-13v15m1-15v13m1-14v15m1-15v15m1-16v15m1-14v15m1-15v15m1-16v16m1-15v15m1-14v14m1-16v16m1-15v13m1-13v15m1-15v15m1-15v15m1-15v15m1-15v15m1-14v13m1-14v17m1-17v15m1-14v14m1-14v13m1-14v15m1-14v14m1-16v16m1-15v15m1-14v14m1-15v14m1-13v14m1-16v16m1-15v14m1-13v13m1-13v14m1-15v14m1-14v14m1-13v13m1-15v16m1-16v15m1-14v15m1-15v14m1-14v14m1-15v16m1-15v16m1-16v14m1-15v15m1-14v15m1-14v13m1-12v14m1-16v14m1-14v15m1-14v15m1-16v15m1-14v13m1-15v15m1-14v15m1-15v14m1-13v13m1-14v15m1-14v14m1-14v13m1-12v12m1-14v15m1-14v14m1-15v15m1-15v16m1-16v14m1-14v15m1-15v15m1-15v14m1-15v16m1-15v14m1-13v13m1-15v16m1-14v13m1-15v16m1-15v15m1-16v16m1-16v16m1-15v15m1-16v15m1-16v16m1-14v17m1-18v15m1-15v14m1-14v16m1-16v16m1-16v16m1-14v13m1-13v13m1-14v14m1-14v15m1-14v13m1-14v15m1-14v14m1-16v17m1-16v14m1-13v13m1-14v16m1-16v15m1-15v14m1-14v15m1-15v15m1-15v14m1-13v14m1-15v15m1-14v14m1-16v16m1-15v14m1-14v16m1-17v17m1-16v15m1-15v14m1-14v15m1-15v15m1-16v15m1-13v15m1-17v16m1-14v14m1-15v15m1-15v13m1-13v14m1-13v14m1-14v13m1-14v13m1-13v15m1-14v14m1-14v12m1-12v14m1-15v15m1-15v15m1-14v13m1-15v16m1-16v16m1-16v16m1-15v14m1-13v15m1-16v15m1-15v15m1-16v16m1-16v14m1-13v15m1-15v14m1-15v14m1-14v15m1-16v16m1-15v15m1-14v15m1-15v14m1-14v13m1-12v14m1-15v13m1-13v14m1-14v14m1-13v13m1-14v14m1-15v15m1-15v16m1-15v13m1-14v15m1-14v15m1-16v15m1-14v14m1-15v16m1-14v13m1-15v15m1-14v13m1-14v15m1-13v14m1-16v16m1-15v14m1-14v14m1-15v15m1-14v13m1-14v14m1-13v14m1-14v14m1-14v14m1-15v15m1-14v13m1-14v16m1-15v15m1-16v14m1-13v15m1-16v14m1-13v14m1-15v16m1-16v16m1-15v14m1-15v16m1-15v14m1-14v15m1-16v15m1-15v15m1-16v17m1-15v14m1-16v17m1-14v13m1-14v14m1-15v14m1-13v15m1-16v16m1-15v13m1-13v15m1-15v13m1-13v13m1-13v14m1-15v15m1-14v14m1-14v14m1-15v16m1-15v15m1-16v15m1-15v15m1-14v15m1-15v14m1-14v14m1-14v13m1-14v16m1-15v13m1-13v14m1-16v16m1-15v14m1-12v14m1-16v14m1-13v14m1-15v16m1-16v15m1-15v15m1-14v13m1-14v15m1-14v15m1-15v14m1-14v14m1-14v14m1-15v15m1-15v16m1-15v13m1-12v13m1-15v15m1-15v16m1-16v16m1-15v15m1-16v15m1-16v17m1-15v14m1-15v14m1-13v14m1-15v15m1-15v15m1-15v14m1-12v12m1-14v15m1-15v16m1-16v16m1-16v16m1-15v13m1-15v17m1-16v15m1-15v15m1-14v14m1-15v15m1-15v15m1-14v13m1-14v15m1-15v15m1-14v15m1-16v16m1-15v14m1-15v15m1-15v15m1-16v16m1-14v14m1-14v15m1-16v16m1-16v15m1-16v18m1-17v15m1-15v14m1-13v13m1-14v15m1-15v15m1-15v14m1-13v14m1-15v16m1-16v14m1-14v16m1-16v15m1-16v16m1-14v13m1-14v15m1-15v14m1-14v15m1-14v13m1-15v17m1-17v17m1-15v13m1-15v16m1-15v14m1-14v15m1-15v15m1-15v15m1-15v15m1-16v17m1-15v14m1-16v16m1-15v15m1-14v13m1-13v14m1-14v14m1-15v14m1-14v14m1-14v14m1-15v16m1-15v15m1-16v15m1-15v16m1-15v16m1-15v13m1-13v13m1-14v16m1-16v16m1-16v14m1-15v16m1-15v15m1-15v15m1-15v16m1-15v13m1-14v14m1-13v13m1-14v15m1-15v15m1-14v13m1-14v14m1-12v13m1-14v14m1-14v13m1-15v16m1-15v15m1-14v14m1-16v16m1-14v14m1-14v14m1-14v14m1-16v16m1-14v14m1-15v15m1-14v14m1-15v15m1-15v16m1-17v17m1-17v16m1-14v14m1-15v15m1-15v14m1-15v15m1-13v13m1-13v14m1-15v16m1-14v11m1-14v17m1-16v15m1-14v14m1-16v15m1-13v15m1-16v15m1-15v14m1-13v14m1-15v15m1-14v14m1-14v14m1-14v14m1-14v14m1-14v14m1-16v15m1-16v17m1-15v14m1-16v17m1-14v13m1-13v14m1-16v16m1-16v17m1-16v14m1-14v14m1-13v13m1-14v14m1-14v15m1-16v14m1-12v13m1-14v15m1-16v16m1-14v12m1-13v14m1-14v15m1-13v12m1-14v14m1-14v15m1-16v17m1-16v14m1-13v15m1-17v17m1-15v14m1-14v14m1-14v13m1-13v13m1-13v14m1-14v13m1-16v16m1-13v14m1-15v15m1-15v14m1-13v13m1-14v15m1-15v15m1-16v15m1-15v16m1-15v15m1-15v15m1-16v15m1-14v15m1-15v13m1-13v15m1-16v16m1-14v14m1-16v15m1-14v15m1-16v14m1-13v14m1-14v15m1-16v15m1-14v15m1-17v17m1-15v14m1-15v16m1-14v13m1-14v14m1-14v15m1-14v12m1-13v15m1-15v15m1-14v14m1-14v12m1-13v15m1-15v14m1-14v15m1-14v14m1-15v15m1-15v15m1-16v17m1-17v16m1-16v15m1-15v14m1-15v17m1-15v15m1-15v14m1-15v16m1-16v15m1-15v15m1-15v16m1-15v15m1-15v14m1-14v15m1-16v16m1-15v15m1-15v13m1-14v16m1-15v15m1-16v16m1-14v12m1-14v15m1-14v15m1-14v13m1-14v14m1-14v14m1-13v13m1-14v13m1-14v15m1-14v16m1-17v15m1-15v16m1-15v14m1-15v15m1-15v15m1-14v15m1-15v15m1-15v13m1-14v14m1-14v16m1-15v14m1-14v14m1-14v14m1-13v14m1-14v14m1-15v14m1-15v15m1-14v15m1-15v14m1-16v16m1-14v14m1-15v15m1-14v14m1-13v13m1-14v15m1-15v15m1-16v15m1-14v14m1-13v15m1-18v16m1-15v14m1-14v15m1-16v16m1-15v14m1-13v14m1-15v15m1-14v14m1-15v15m1-14v14m1-16v17m1-16v15m1-15v14m1-12v13m1-16v16m1-14v13m1-14v16m1-15v13m1-14v15m1-15v15m1-14v15m1-15v13m1-14v16m1-15v13m1-13v13m1-15v16m1-16v16m1-15v17m1-18v16m1-14v15m1-16v15m1-15v15m1-16v16m1-14v14m1-15v14m1-14v15m1-13v13m1-13v13m1-13v13m1-15v13m1-12v14m1-16v16m1-16v17m1-16v15m1-14v15m1-15v14m1-13v13m1-15v15m1-14v14m1-15v16m1-15v14m1-14v13m1-14v15m1-15v13m1-13v17m1-16v15m1-16v16m1-15v15m1-16v15m1-15v15m1-14v14m1-14v14m1-14v14m1-14v14m1-15v15m1-15v15m1-16v16m1-15v15m1-15v16m1-16v14m1-12v13m1-15v15m1-14v14m1-15v15m1-14v13m1-15v15m1-13v13m1-13v14m1-15v15m1-15v16m1-16v15m1-15v15m1-14v14m1-14v14m1-15v14m1-13v12m1-12v13m1-14v14m1-13v13m1-15v17m1-16v15m1-14v13m1-14v14m1-13v14m1-15v16m1-16v14m1-15v15m1-14v15m1-14v13m1-14v14m1-13v15m1-17v16m1-15v15m1-15v14m1-15v16m1-14v13m1-13v15m1-16v14m1-14v15m1-16v16m1-14v13m1-15v15m1-13v13m1-15v16m1-15v14m1-15v16m1-15v15m1-15v15m1-16v16m1-16v16m1-15v13m1-13v15m1-15v15m1-16v17m1-17v16m1-14v13m1-13v13m1-13v14m1-15v15m1-15v15m1-15v15m1-16v16m1-14v12m1-14v16m1-16v16m1-15v14m1-14v15m1-15v14m1-16v17m1-16v16m1-15v13m1-13v15m1-15v15m1-16v16m1-14v12m1-14v15m1-14v14m1-13v13m1-13v14m1-14v15m1-16v15m1-14v13m1-14v15m1-15v16m1-17v16m1-15v14m1-14v15m1-14v14m1-15v15m1-15v15m1-16v17m1-17v16m1-16v16m1-14v12m1-12v13m1-14v14m1-14v14m1-13v14m1-15v15m1-15v15m1-15v15m1-14v14m1-15v16m1-16v14m1-13v14m1-16v15m1-15v16m1-15v14m1-14v15m1-15v16m1-17v15m1-13v15m1-16v16m1-17v15m1-15v16m1-15v16m1-15v13m1-16v17m1-15v16m1-17v16m1-15v14m1-14v16m1-17v17m1-15v13m1-14v14m1-14v15m1-15v13m1-14v15m1-15v15m1-15v16m1-16v16m1-16v16m1-16v16m1-14v13m1-13v14m1-15v13m1-13v14m1-15v15m1-14v15m1-15v15m1-16v15m1-14v15m1-16v16m1-16v16m1-15v15m1-16v15m1-16v16m1-15v15m1-14v15m1-16v15m1-14v15m1-16v16m1-16v15m1-14v14m1-15v15m1-15v15m1-14v14m1-14v14m1-15v15m1-14v14m1-14v13m1-13v16m1-16v15m1-14v13m1-15v15m1-15v16m1-17v17m1-16v14m1-12v13m1-15v14m1-13v15m1-15v14m1-14v13m1-14v14m1-14v15m1-15v16m1-16v15m1-14v12m1-12v13m1-13v14m1-14v13m1-14v15m1-15v15m1-16v17m1-15v16m1-17v15m1-13v13m1-14v13m1-13v15m1-15v15m1-14v13m1-15v15m1-14v13m1-14v15m1-14v14m1-14v13m1-13v13m1-13v14m1-13v14m1-13v11m1-14v16m1-14v13m1-16v16m1-15v16m1-16v16m1-16v16m1-14v13m1-15v15m1-14v14m1-14v15m1-14v13m1-15v15m1-15v15m1-14v14m1-14v14m1-14v15m1-16v14m1-14v15m1-14v13m1-14v14m1-13v13m1-13v14m1-13v13m1-13v13m1-15v14m1-14v14m1-13v13m1-13v14m1-14v14m1-14v14m1-16v17m1-15v13m1-14v14m1-13v14m1-15v16m1-15v14m1-14v14m1-15v15m1-16v16m1-15v14m1-14v16m1-15v14m1-13v14m1-15v14m1-14v14m1-16v15m1-13v14m1-14v15m1-14v12m1-14v16m1-15v14m1-14v14m1-15v16m1-16v14m1-13v13m1-14v15m1-13v13m1-14v15m1-16v15m1-14v13m1-14v17m1-18v16m1-14v14m1-16v16m1-13v13m1-15v16m1-17v16m1-14v14m1-14v14m1-15v14m1-14v16m1-16v15m1-15v14m1-14v16m1-16v13m1-13v15m1-15v15m1-14v14m1-16v14m1-13v14m1-13v14m1-14v13m1-14v15m1-15v14m1-13v13m1-15v16m1-15v14m1-13v15m1-14v12m1-14v15m1-14v14m1-14v14m1-15v15m1-15v16m1-16v14m1-12v13m1-14v15m1-15v12m1-11v12m1-13v14m1-15v14m1-13v14m1-15v15m1-16v15m1-15v16"/><path stroke="#006700" d="M22 325v15m1-13v10m1-11v13m1-14v13m1-12v12m1-13v13m1-11v11m1-12v12m1-13v13m1-13v14m1-12v11m1-11v11m1-13v13m1-11v12m1-14v13m1-11v11m1-13v13m1-12v13m1-13v13m1-13v13m1-14v14m1-12v11m1-12v13m1-13v12m1-11v10m1-12v14m1-14v14m1-13v13m1-12v11m1-13v13m1-12v12m1-13v12m1-12v12m1-11v11m1-11v12m1-12v12m1-12v13m1-14v14m1-13v12m1-12v12m1-11v11m1-12v12m1-13v13m1-12v11m1-11v11m1-12v14m1-14v14m1-14v13m1-12v11m1-11v12m1-13v12m1-11v13m1-14v14m1-12v10m1-11v11m1-11v11m1-11v12m1-13v14m1-14v12m1-11v12m1-12v12m1-11v11m1-10v10m1-12v12m1-13v12m1-10v11m1-12v12m1-13v12m1-11v13m1-14v13m1-12v11m1-11v11m1-12v14m1-13v12m1-12v12m1-13v13m1-12v11m1-12v13m1-13v14m1-14v13m1-13v14m1-14v13m1-12v12m1-13v13m1-11v10m1-12v13m1-11v10m1-10v10m1-11v11m1-12v13m1-13v13m1-11v12m1-14v14m1-13v13m1-13v13m1-14v13m1-13v13m1-13v12m1-11v11m1-13v15m1-12v11m1-12v12m1-12v12m1-14v14m1-12v12m1-12v12m1-12v12m1-13v13m1-13v13m1-11v12m1-12v10m1-11v12m1-12v12m1-12v11m1-11v13m1-14v12m1-12v13m1-13v12m1-11v12m1-11v9m1-11v13m1-13v13m1-12v12m1-13v12m1-11v11m1-13v13m1-11v11m1-13v14m1-13v12m1-12v11m1-10v12m1-12v12m1-13v13m1-13v13m1-13v13m1-13v14m1-15v14m1-13v14m1-12v10m1-11v12m1-13v12m1-12v13m1-12v12m1-12v12m1-13v13m1-14v13m1-12v11m1-11v12m1-12v11m1-11v13m1-13v13m1-13v12m1-12v13m1-12v12m1-14v14m1-13v13m1-13v13m1-12v11m1-12v12m1-13v13m1-13v13m1-12v12m1-12v13m1-13v13m1-13v13m1-12v11m1-12v13m1-14v14m1-13v14m1-14v12m1-12v13m1-13v12m1-11v11m1-12v13m1-12v12m1-14v14m1-12v12m1-12v12m1-11v11m1-14v15m1-14v13m1-12v12m1-14v15m1-14v13m1-13v11m1-11v13m1-12v12m1-14v14m1-12v11m1-12v12m1-11v10m1-10v11m1-13v13m1-13v13m1-13v13m1-12v13m1-13v13m1-13v12m1-13v14m1-12v13m1-15v14m1-13v12m1-12v13m1-13v12m1-13v14m1-12v11m1-11v11m1-12v12m1-12v13m1-12v11m1-12v13m1-13v12m1-11v12m1-13v12m1-10v10m1-13v14m1-13v13m1-13v12m1-13v14m1-13v12m1-12v12m1-12v13m1-12v12m1-13v12m1-11v11m1-12v12m1-12v14m1-15v14m1-14v13m1-12v13m1-13v13m1-14v13m1-13v13m1-12v13m1-14v14m1-13v13m1-13v13m1-12v11m1-12v12m1-11v12m1-12v12m1-13v12m1-11v12m1-12v12m1-12v11m1-11v11m1-12v11m1-11v12m1-11v11m1-12v12m1-12v12m1-13v14m1-13v13m1-13v12m1-12v12m1-10v11m1-15v15m1-13v11m1-11v12m1-12v12m1-13v12m1-12v14m1-14v14m1-14v13m1-12v12m1-12v12m1-12v11m1-11v12m1-12v12m1-12v13m1-13v12m1-11v12m1-13v12m1-12v12m1-13v12m1-11v12m1-13v13m1-12v13m1-13v12m1-12v12m1-13v14m1-13v11m1-12v13m1-12v12m1-12v12m1-12v12m1-11v11m1-12v11m1-11v12m1-13v13m1-11v12m1-13v11m1-11v12m1-12v12m1-11v10m1-11v12m1-11v12m1-14v14m1-14v13m1-12v11m1-11v12m1-12v12m1-11v12m1-13v12m1-13v14m1-13v11m1-11v13m1-13v11m1-12v14m1-14v13m1-13v13m1-12v12m1-12v13m1-15v14m1-11v10m1-12v12m1-11v12m1-12v12m1-12v13m1-14v14m1-13v13m1-13v11m1-11v11m1-11v12m1-13v14m1-14v14m1-12v12m1-14v13m1-12v12m1-12v13m1-14v12m1-11v12m1-14v15m1-12v12m1-14v13m1-13v14m1-13v11m1-11v11m1-11v12m1-12v11m1-11v13m1-14v12m1-11v13m1-14v14m1-13v13m1-13v11m1-11v11m1-10v11m1-12v13m1-13v13m1-12v12m1-13v12m1-12v12m1-12v13m1-13v12m1-12v11m1-11v11m1-12v14m1-13v11m1-11v12m1-11v10m1-12v14m1-14v12m1-11v11m1-12v14m1-14v14m1-13v11m1-12v12m1-11v12m1-12v12m1-13v14m1-13v12m1-13v13m1-12v11m1-12v13m1-13v13m1-13v13m1-11v10m1-11v12m1-13v13m1-13v12m1-12v12m1-12v13m1-12v12m1-12v12m1-13v13m1-13v13m1-12v12m1-13v13m1-13v13m1-12v12m1-12v13m1-13v12m1-13v13m1-12v12m1-13v12m1-11v12m1-12v12m1-13v13m1-12v11m1-11v11m1-12v14m1-14v12m1-12v13m1-13v13m1-14v14m1-13v13m1-12v11m1-11v11m1-11v12m1-13v12m1-12v14m1-13v11m1-12v12m1-12v13m1-13v12m1-12v12m1-12v13m1-12v12m1-13v13m1-12v13m1-14v14m1-15v15m1-13v10m1-10v11m1-12v12m1-13v14m1-13v13m1-13v12m1-10v10m1-12v13m1-13v12m1-12v13m1-13v13m1-12v12m1-14v14m1-13v13m1-13v13m1-13v13m1-12v11m1-13v14m1-14v13m1-13v14m1-13v13m1-13v13m1-12v11m1-12v13m1-13v12m1-12v12m1-11v11m1-11v11m1-10v10m1-11v11m1-12v12m1-13v15m1-13v12m1-12v12m1-13v13m1-11v11m1-13v13m1-12v11m1-12v13m1-12v11m1-12v13m1-12v12m1-13v13m1-13v12m1-12v12m1-13v13m1-11v10m1-11v12m1-11v10m1-11v13m1-12v12m1-12v12m1-13v13m1-12v10m1-12v15m1-14v13m1-13v12m1-13v13m1-12v14m1-14v12m1-12v12m1-11v11m1-11v12m1-12v11m1-12v13m1-12v12m1-12v11m1-11v12m1-13v12m1-14v15m1-13v12m1-13v14m1-12v11m1-12v13m1-13v13m1-14v13m1-12v12m1-13v13m1-11v11m1-13v13m1-12v13m1-13v12m1-11v11m1-12v12m1-13v13m1-12v11m1-11v12m1-11v12m1-12v11m1-13v12m1-11v13m1-13v13m1-13v12m1-12v13m1-13v14m1-13v11m1-12v11m1-10v10m1-11v13m1-13v13m1-12v11m1-12v11m1-11v13m1-13v12m1-12v12m1-11v10m1-10v11m1-12v12m1-12v12m1-13v13m1-12v13m1-14v12m1-11v12m1-12v12m1-10v10m1-13v14m1-13v11m1-10v11m1-12v12m1-13v15m1-13v11m1-13v13m1-12v13m1-12v11m1-13v14m1-13v13m1-12v11m1-12v13m1-13v11m1-10v11m1-12v12m1-12v12m1-13v13m1-12v12m1-12v12m1-12v11m1-11v12m1-13v14m1-13v12m1-12v12m1-13v14m1-14v14m1-14v13m1-12v12m1-12v12m1-12v12m1-12v13m1-13v13m1-13v12m1-13v13m1-12v11m1-12v12m1-12v14m1-14v13m1-12v13m1-13v13m1-14v13m1-13v13m1-12v12m1-13v12m1-11v12m1-13v13m1-11v11m1-12v11m1-11v12m1-11v11m1-13v13m1-12v12m1-12v12m1-13v12m1-12v13m1-13v14m1-14v13m1-12v13m1-13v12m1-12v13m1-14v14m1-13v12m1-12v12m1-11v10m1-11v11m1-12v13m1-11v11m1-12v13m1-14v14m1-13v11m1-10v11m1-12v11m1-12v13m1-11v12m1-13v12m1-13v13m1-12v12m1-13v12m1-11v12m1-11v11m1-13v13m1-12v12m1-13v13m1-12v12m1-12v13m1-13v11m1-12v13m1-11v11m1-14v14m1-12v11m1-11v12m1-12v12m1-12v11m1-11v12m1-13v13m1-12v12m1-11v11m1-13v12m1-10v12m1-14v13m1-12v11m1-12v13m1-12v11m1-11v12m1-12v12m1-13v13m1-12v12m1-12v12m1-12v12m1-12v11m1-11v12m1-14v14m1-12v12m1-13v13m1-12v12m1-13v13m1-14v14m1-12v12m1-11v12m1-14v13m1-13v13m1-11v11m1-12v11m1-10v10m1-11v12m1-12v11m1-12v13m1-14v14m1-12v12m1-13v13m1-11v10m1-11v12m1-13v13m1-13v13m1-13v13m1-13v13m1-13v12m1-12v12m1-11v11m1-12v13m1-12v12m1-13v12m1-11v11m1-11v12m1-13v13m1-13v12m1-10v12m1-13v13m1-14v13m1-14v15m1-13v12m1-12v11m1-11v11m1-12v13m1-13v12m1-10v10m1-11v11m1-11v12m1-13v13m1-12v11m1-11v11m1-12v12m1-11v12m1-14v14m1-12v12m1-13v13m1-12v12m1-12v11m1-12v13m1-13v13m1-13v13m1-13v13m1-13v13m1-13v12m1-12v12m1-12v14m1-13v12m1-12v12m1-13v12m1-13v14m1-13v13m1-13v12m1-12v13m1-13v13m1-12v10m1-10v11m1-12v13m1-12v11m1-13v13m1-12v12m1-11v11m1-12v12m1-13v14m1-13v13m1-13v13m1-13v12m1-12v12m1-11v12m1-14v14m1-12v10m1-10v12m1-14v14m1-13v12m1-12v12m1-13v13m1-12v12m1-11v11m1-12v13m1-14v13m1-11v11m1-12v12m1-12v12m1-11v11m1-12v13m1-13v12m1-11v12m1-14v13m1-11v12m1-13v12m1-12v14m1-14v13m1-12v12m1-12v10m1-12v14m1-13v13m1-13v13m1-13v12m1-11v11m1-12v13m1-12v10m1-10v11m1-11v11m1-11v12m1-13v11m1-11v14m1-13v12m1-13v12m1-11v11m1-13v14m1-13v12m1-13v14m1-12v12m1-13v13m1-13v13m1-13v13m1-13v13m1-13v13m1-13v14m1-14v12m1-11v10m1-12v14m1-12v11m1-12v13m1-13v12m1-12v12m1-11v11m1-11v12m1-12v13m1-14v13m1-12v11m1-12v12m1-12v12m1-11v11m1-12v12m1-12v13m1-13v12m1-12v13m1-12v12m1-13v12m1-12v11m1-12v14m1-12v11m1-12v12m1-12v13m1-14v14m1-14v13m1-12v13m1-13v13m1-12v11m1-11v11m1-12v12m1-12v12m1-14v15m1-13v12m1-12v12m1-12v12m1-12v12m1-12v12m1-11v11m1-12v11m1-11v13m1-14v14m1-14v13m1-12v12m1-11v11m1-12v13m1-12v11m1-12v13m1-12v11m1-12v12m1-12v13m1-14v12m1-10v10m1-12v14m1-13v12m1-12v11m1-11v12m1-12v13m1-13v12m1-12v11m1-11v13m1-15v13m1-11v12m1-12v11m1-11v11m1-11v12m1-13v13m1-13v13m1-13v13m1-12v12m1-13v13m1-13v13m1-12v11m1-11v12m1-13v13m1-12v12m1-11v10m1-12v13m1-12v11m1-12v13m1-12v12m1-12v11m1-9v9m1-11v12m1-13v13m1-11v10m1-11v13m1-13v12m1-12v13m1-14v13m1-14v15m1-13v11m1-12v13m1-12v12m1-12v12m1-11v9m1-11v13m1-13v13m1-12v12m1-12v12m1-13v12m1-11v11m1-12v13m1-13v14m1-12v11m1-12v12m1-12v12m1-13v13m1-13v12m1-12v14m1-15v14m1-11v12m1-13v11m1-11v13m1-13v12m1-12v11m1-12v13m1-13v13m1-12v13m1-14v12m1-11v13m1-13v12m1-12v11m1-10v10m1-11v12m1-12v12m1-12v12m1-13v13m1-11v10m1-12v12m1-12v13m1-12v11m1-12v12m1-11v12m1-12v12m1-13v12m1-12v12m1-12v13m1-12v11m1-12v14m1-14v13m1-13v13m1-14v14m1-13v13m1-12v12m1-13v12m1-11v13m1-12v12m1-14v13m1-12v12m1-13v13m1-13v13m1-13v13m1-13v12m1-11v12m1-12v12m1-12v12m1-13v13m1-13v13m1-13v12m1-11v12m1-12v12m1-13v13m1-13v12m1-12v12m1-11v12m1-13v13m1-12v11m1-12v13m1-12v12m1-14v14m1-14v13m1-12v13m1-12v12m1-12v12m1-12v12m1-13v13m1-12v12m1-13v13m1-13v13m1-12v12m1-12v11m1-10v11m1-13v12m1-12v12m1-12v12m1-12v13m1-12v13m1-14v13m1-12v11m1-13v14m1-11v9m1-10v11m1-12v12m1-12v12m1-11v12m1-13v14m1-14v12m1-12v13m1-13v13m1-13v12m1-12v14m1-13v10m1-10v13m1-13v12m1-14v14m1-12v11m1-12v13m1-13v13m1-13v11"/><path stroke="#008a00" d="M22 327v10m1-9v8m1-9v10m1-10v10m1-9v8m1-10v11m1-10v10m1-11v12m1-12v11m1-11v11m1-10v9m1-8v8m1-9v10m1-10v10m1-10v10m1-9v9m1-10v11m1-11v9m1-9v10m1-11v11m1-9v10m1-10v8m1-9v10m1-10v9m1-8v9m1-10v10m1-10v10m1-10v10m1-9v9m1-11v11m1-10v10m1-10v10m1-11v10m1-9v9m1-9v10m1-10v10m1-10v10m1-10v11m1-10v8m1-8v9m1-9v9m1-10v9m1-9v10m1-9v9m1-9v8m1-10v11m1-10v9m1-9v9m1-9v9m1-10v10m1-8v9m1-10v9m1-9v11m1-10v9m1-9v9m1-11v10m1-9v10m1-10v9m1-9v10m1-10v9m1-10v10m1-8v9m1-8v8m1-10v9m1-9v9m1-9v10m1-10v10m1-11v10m1-10v11m1-10v10m1-11v11m1-11v11m1-10v11m1-11v9m1-9v10m1-11v11m1-9v9m1-10v9m1-8v8m1-10v10m1-9v11m1-11v10m1-11v11m1-10v8m1-7v8m1-10v9m1-8v9m1-8v8m1-9v10m1-10v9m1-10v11m1-10v10m1-10v10m1-11v11m1-11v11m1-10v9m1-9v9m1-9v9m1-9v10m1-10v10m1-9v9m1-10v10m1-10v10m1-11v10m1-9v9m1-10v11m1-11v10m1-10v11m1-11v10m1-9v11m1-10v9m1-10v9m1-10v11m1-11v10m1-9v10m1-10v9m1-8v8m1-9v9m1-9v10m1-10v9m1-9v10m1-10v10m1-11v10m1-9v9m1-9v9m1-10v10m1-10v10m1-10v10m1-9v10m1-11v9m1-9v10m1-8v8m1-9v9m1-10v10m1-10v10m1-10v11m1-11v11m1-10v10m1-8v8m1-11v11m1-11v10m1-10v11m1-11v10m1-8v9m1-10v10m1-10v10m1-11v9m1-8v9m1-9v8m1-8v9m1-8v9m1-11v10m1-9v10m1-10v9m1-9v10m1-11v10m1-9v9m1-9v9m1-10v10m1-11v12m1-11v10m1-10v11m1-11v10m1-9v10m1-11v10m1-9v10m1-11v9m1-9v10m1-10v11m1-12v11m1-10v10m1-10v11m1-11v10m1-9v9m1-10v10m1-10v12m1-12v10m1-9v9m1-8v8m1-10v11m1-10v10m1-11v11m1-10v10m1-12v12m1-11v9m1-9v10m1-9v10m1-12v11m1-10v10m1-10v10m1-10v10m1-10v10m1-11v10m1-9v10m1-11v10m1-9v10m1-9v10m1-11v10m1-11v11m1-9v10m1-12v12m1-11v9m1-8v8m1-9v10m1-10v11m1-10v10m1-10v9m1-10v9m1-9v11m1-11v11m1-11v10m1-9v9m1-10v11m1-11v11m1-10v9m1-10v11m1-11v10m1-10v10m1-11v12m1-11v11m1-11v10m1-10v11m1-11v11m1-10v9m1-9v9m1-10v10m1-9v10m1-11v11m1-11v10m1-9v9m1-9v10m1-10v9m1-11v12m1-10v10m1-11v10m1-10v11m1-10v9m1-9v9m1-9v8m1-8v10m1-11v10m1-10v10m1-10v11m1-10v10m1-10v8m1-8v9m1-9v8m1-8v9m1-9v9m1-10v10m1-10v11m1-11v10m1-9v9m1-9v9m1-10v11m1-10v9m1-11v12m1-11v9m1-9v11m1-9v8m1-11v11m1-10v10m1-10v11m1-12v12m1-9v8m1-9v9m1-11v10m1-9v10m1-9v9m1-9v9m1-9v9m1-9v9m1-9v9m1-10v9m1-8v8m1-8v9m1-11v11m1-10v10m1-10v9m1-8v9m1-11v10m1-8v9m1-9v9m1-10v9m1-8v9m1-10v9m1-8v8m1-8v8m1-8v8m1-10v11m1-9v8m1-9v9m1-9v10m1-9v9m1-10v9m1-9v10m1-8v8m1-10v10m1-9v9m1-10v9m1-8v8m1-9v10m1-10v10m1-11v11m1-10v11m1-10v9m1-10v10m1-11v11m1-11v11m1-10v9m1-9v9m1-10v11m1-10v10m1-12v13m1-11v10m1-10v9m1-9v10m1-10v10m1-9v9m1-10v9m1-9v11m1-10v9m1-9v8m1-9v10m1-11v11m1-10v10m1-10v10m1-10v10m1-10v9m1-8v9m1-9v9m1-10v10m1-10v10m1-9v9m1-10v9m1-9v11m1-11v8m1-7v7m1-9v10m1-8v8m1-9v10m1-10v9m1-10v11m1-10v9m1-9v10m1-10v10m1-10v9m1-9v10m1-10v11m1-12v11m1-10v10m1-10v9m1-10v10m1-9v11m1-11v10m1-9v8m1-9v9m1-8v9m1-10v9m1-9v9m1-9v10m1-11v10m1-9v9m1-9v8m1-8v10m1-11v11m1-9v8m1-9v9m1-9v9m1-9v9m1-9v10m1-11v11m1-11v10m1-8v9m1-11v11m1-11v10m1-9v10m1-10v9m1-9v9m1-10v11m1-9v9m1-11v10m1-9v10m1-10v10m1-10v9m1-8v8m1-9v9m1-8v8m1-9v9m1-10v9m1-8v10m1-10v11m1-11v9m1-10v12m1-10v9m1-10v10m1-10v9m1-9v10m1-10v10m1-11v10m1-9v10m1-11v11m1-10v9m1-9v10m1-11v10m1-10v10m1-10v10m1-9v10m1-10v9m1-10v10m1-10v10m1-9v10m1-10v10m1-11v10m1-9v9m1-9v9m1-10v11m1-10v9m1-9v10m1-10v10m1-11v12m1-12v11m1-11v11m1-10v10m1-11v10m1-9v9m1-10v10m1-9v9m1-9v8m1-8v9m1-9v9m1-9v9m1-10v11m1-10v10m1-10v10m1-11v10m1-9v9m1-9v10m1-11v11m1-10v9m1-10v10m1-10v10m1-10v11m1-10v9m1-9v10m1-10v10m1-11v9m1-8v9m1-9v9m1-10v10m1-9v9m1-8v8m1-10v10m1-9v10m1-11v11m1-11v10m1-9v9m1-10v11m1-10v9m1-10v11m1-10v10m1-10v10m1-9v8m1-10v11m1-11v10m1-9v10m1-11v10m1-9v9m1-10v11m1-9v7m1-9v10m1-10v10m1-10v11m1-10v10m1-10v10m1-10v10m1-10v8m1-10v12m1-10v9m1-9v9m1-9v9m1-9v10m1-10v10m1-11v10m1-8v8m1-9v10m1-9v8m1-10v10m1-9v9m1-9v9m1-9v9m1-10v10m1-10v11m1-11v10m1-11v11m1-9v9m1-10v10m1-9v9m1-11v11m1-10v10m1-9v9m1-9v8m1-9v10m1-9v10m1-11v10m1-9v8m1-8v10m1-11v10m1-10v9m1-8v9m1-9v9m1-9v9m1-10v10m1-9v9m1-11v11m1-10v10m1-10v11m1-11v10m1-9v8m1-8v8m1-9v9m1-9v10m1-10v10m1-9v9m1-10v10m1-10v10m1-10v9m1-9v10m1-10v9m1-9v10m1-9v9m1-9v8m1-9v10m1-10v10m1-10v10m1-10v10m1-9v9m1-9v8m1-9v10m1-10v10m1-9v8m1-8v9m1-10v11m1-10v8m1-9v11m1-10v9m1-10v11m1-10v10m1-11v10m1-9v9m1-10v10m1-10v9m1-8v10m1-11v10m1-10v9m1-10v11m1-9v9m1-9v9m1-10v8m1-8v11m1-11v9m1-9v10m1-8v7m1-9v10m1-10v11m1-10v9m1-10v11m1-11v10m1-9v9m1-10v10m1-10v11m1-11v9m1-10v12m1-10v8m1-10v10m1-10v11m1-10v10m1-10v10m1-10v10m1-11v11m1-10v10m1-10v10m1-10v10m1-10v9m1-10v12m1-10v9m1-9v8m1-8v9m1-10v9m1-10v12m1-10v8m1-8v9m1-10v9m1-9v10m1-10v11m1-11v10m1-10v9m1-10v11m1-10v10m1-9v8m1-9v9m1-9v9m1-8v8m1-8v8m1-9v10m1-9v8m1-9v10m1-10v10m1-10v10m1-9v8m1-8v8m1-9v10m1-10v9m1-9v10m1-11v10m1-9v11m1-11v9m1-10v10m1-9v10m1-10v10m1-9v9m1-11v11m1-10v10m1-9v9m1-11v11m1-11v10m1-8v9m1-11v10m1-9v10m1-10v10m1-10v11m1-10v8m1-9v9m1-9v9m1-9v10m1-9v8m1-9v9m1-9v10m1-11v11m1-9v8m1-9v10m1-9v8m1-10v11m1-11v11m1-10v9m1-9v10m1-10v9m1-9v9m1-10v11m1-10v10m1-10v9m1-10v11m1-11v12m1-11v9m1-9v10m1-11v11m1-11v11m1-9v9m1-10v9m1-9v10m1-9v8m1-9v9m1-8v9m1-11v10m1-9v10m1-11v10m1-10v11m1-9v8m1-9v9m1-9v10m1-10v10m1-10v9m1-9v10m1-11v11m1-10v9m1-9v9m1-9v10m1-10v9m1-9v11m1-11v10m1-10v10m1-10v10m1-11v10m1-9v9m1-8v8m1-8v8m1-9v9m1-10v10m1-10v11m1-10v9m1-9v9m1-9v10m1-11v10m1-10v9m1-7v8m1-9v9m1-9v9m1-9v9m1-9v10m1-11v9m1-9v10m1-9v10m1-10v9m1-8v8m1-8v9m1-10v9m1-10v11m1-9v9m1-11v10m1-9v9m1-9v9m1-9v10m1-9v8m1-9v10m1-10v10m1-10v9m1-9v9m1-10v10m1-10v11m1-10v9m1-10v10m1-10v11m1-10v9m1-9v8m1-9v10m1-10v11m1-10v9m1-10v10m1-9v10m1-10v8m1-9v11m1-11v9m1-7v8m1-10v10m1-9v9m1-9v9m1-8v8m1-10v11m1-9v8m1-9v10m1-11v11m1-11v11m1-11v11m1-11v10m1-10v9m1-7v8m1-10v10m1-9v9m1-9v9m1-10v10m1-9v9m1-10v10m1-10v11m1-10v9m1-9v9m1-10v11m1-10v9m1-10v11m1-10v10m1-10v9m1-9v9m1-10v10m1-10v11m1-11v11m1-10v8m1-9v10m1-9v9m1-10v10m1-9v9m1-10v10m1-9v8m1-9v10m1-10v9m1-9v11m1-9v8m1-9v8m1-9v10m1-10v11m1-11v9m1-9v9m1-8v9m1-9v10m1-10v10m1-10v9m1-10v10m1-10v11m1-11v11m1-10v9m1-10v10m1-10v10m1-10v10m1-9v9m1-9v9m1-9v9m1-10v10m1-9v9m1-10v10m1-9v8m1-9v10m1-10v11m1-11v11m1-11v10m1-10v10m1-10v10m1-9v9m1-10v10m1-10v11m1-12v11m1-10v10m1-11v11m1-10v11m1-12v12m1-10v10m1-10v10m1-11v11m1-10v9m1-9v10m1-10v9m1-10v9m1-9v11m1-10v8m1-9v11m1-10v9m1-10v11m1-11v10m1-9v10m1-11v10m1-9v8m1-9v9m1-9v9m1-9v10m1-10v9m1-9v10m1-10v10m1-10v11m1-10v9m1-10v10m1-10v10m1-9v9m1-10v11m1-12v10m1-9v10m1-10v11m1-11v9m1-9v10m1-10v10m1-11v11m1-9v9m1-10v10m1-11v11m1-11v10m1-8v9m1-10v9m1-8v9m1-9v8m1-10v11m1-10v10m1-10v9m1-9v10m1-10v9m1-10v11m1-10v9m1-8v10m1-12v9m1-8v10m1-10v10m1-10v9m1-9v10m1-10v11m1-11v9m1-9v10m1-9v9m1-10v10m1-10v10m1-9v8m1-9v10m1-10v10m1-11v11m1-10v10m1-10v10m1-9v8m1-10v11m1-10v10m1-10v10m1-9v8m1-10v10m1-9v10m1-10v10m1-9v8m1-8v8m1-8v9m1-11v11m1-10v10m1-9v9m1-9v9m1-9v9m1-10v10m1-11v10m1-10v12m1-12v12m1-11v9m1-9v10m1-11v11m1-10v10m1-9v9m1-10v9m1-8v9m1-9v9m1-10v9m1-8v9m1-10v9m1-10v10m1-8v9m1-10v10m1-9v9m1-10v10m1-9v9m1-10v9m1-9v9m1-9v9m1-10v10m1-9v10m1-10v9m1-9v9m1-9v9m1-10v11m1-11v10m1-9v10m1-9v9m1-10v10m1-10v9m1-11v11m1-10v11m1-10v10m1-10v10m1-10v9m1-8v8m1-10v10m1-8v9m1-11v10m1-9v9m1-10v10m1-8v8m1-9v10m1-10v10m1-10v10m1-10v10m1-10v9m1-9v9m1-8v9m1-10v9m1-9v9m1-9v9m1-8v8m1-10v11m1-10v9m1-9v10m1-11v11m1-10v10m1-11v11m1-11v11m1-10v10m1-10v9m1-9v9m1-9v10m1-9v9m1-10v9m1-10v11m1-11v9m1-8v9m1-9v10m1-9v8m1-10v10m1-9v9m1-9v10m1-10v9m1-9v10m1-10v10m1-10v9m1-11v12m1-9v8m1-9v10m1-10v9m1-9v10m1-10v10m1-10v9m1-9v10m1-10v10m1-10v10m1-10v9m1-10v11m1-10v8m1-8v9m1-10v11m1-12v10m1-8v9m1-8v8m1-11v11m1-9v8"/><path stroke="#00bc00" d="M22 328v9m1-9v8m1-8v9m1-9v9m1-9v8m1-8v9m1-9v8m1-8v9m1-10v8m1-8v8m1-7v8m1-8v7m1-7v7m1-6v7m1-9v8m1-7v8m3-8v9m1-10v9m1-8v9m1-8v6m1-7v8m3-9v9m1-8v8m1-8v9m1-10v9m1-9v9m1-8v8m1-8v7m1-7v8m1-8v8m1-9v9m1-8v8m1-8v9m2-9v9m1-8v7m1-8v9m1-10v9m1-8v8m1-8v9m1-8v7m1-8v8m1-9v10m1-9v8m1-8v8m1-8v8m1-8v7m1-8v9m1-8v8m1-7v7m1-8v8m1-8v8m1-8v8m1-8v8m1-8v8m1-8v7m1-7v8m1-8v8m1-8v9m1-8v7m1-8v7m1-7v8m1-8v8m1-9v8m1-8v10m1-9v8m1-8v8m2-8v9m1-9v8m1-8v8m1-9v9m1-8v8m1-8v7m1-7v8m1-8v8m1-8v9m1-9v8m1-8v8m1-8v8m2-9v8m1-6v6m1-7v7m1-7v8m1-8v8m1-9v10m1-10v9m1-8v8m1-9v9m1-8v9m1-9v7m1-7v8m1-8v8m1-8v8m1-9v10m1-9v7m1-7v7m1-7v9m1-10v8m1-7v7m1-8v9m2-8v8m1-9v9m1-8v9m1-8v7m1-8v7m1-8v9m1-8v7m1-7v8m2-8v8m1-9v9m1-7v7m1-8v7m1-8v9m1-9v8m1-8v9m1-8v7m1-7v7m1-8v8m1-8v8m1-7v7m1-8v9m1-9v7m1-7v8m1-7v7m1-7v8m1-9v9m1-9v9m2-9v9m2-7v7m2-9v9m1-8v8m2-8v8m1-9v8m1-7v8m1-9v8m1-8v9m1-9v8m1-7v7m1-7v8m1-9v8m1-7v8m1-7v7m2-9v8m2-7v8m1-9v8m1-8v9m1-9v8m1-8v9m1-9v8m1-8v9m1-8v8m1-8v8m1-9v8m1-8v9m1-8v8m1-9v9m1-9v8m1-7v7m1-8v8m1-8v8m1-8v8m1-9v11m1-10v8m1-8v8m1-6v6m1-8v9m1-9v9m2-9v10m1-10v9m2-9v9m2-10v9m1-8v8m1-7v8m1-8v6m1-7v8m1-8v8m1-8v8m1-8v8m1-8v8m1-8v9m2-10v9m1-7v8m1-9v9m1-9v8m1-8v8m3-8v8m1-7v7m1-9v9m1-8v9m1-9v9m1-9v8m1-7v7m1-8v9m1-9v8m1-7v6m1-7v9m2-9v9m2-8v7m1-8v8m1-8v9m1-9v9m1-9v8m1-7v7m1-8v8m1-7v9m1-10v9m1-9v8m1-7v7m1-7v7m1-8v8m1-8v8m1-8v8m1-8v8m1-7v8m1-9v8m2-7v7m1-7v7m1-8v8m1-9v9m1-8v9m1-8v8m1-9v7m1-6v8m1-9v8m1-8v8m1-8v8m1-8v7m1-7v9m1-9v9m2-9v8m1-7v8m1-8v8m1-10v9m1-8v7m1-6v8m1-9v8m1-8v8m1-8v8m1-9v10m1-10v9m1-7v6m1-6v6m1-8v9m1-8v8m1-8v8m1-8v9m1-9v9m1-8v7m1-8v9m1-8v6m1-6v6m1-6v7m1-8v8m1-8v9m2-8v7m1-9v9m1-8v8m1-8v8m1-8v8m1-8v8m1-8v7m1-7v8m1-7v6m1-7v8m1-9v8m1-6v6m1-7v7m1-7v8m1-7v6m1-7v7m1-7v8m1-7v7m1-8v8m1-7v7m1-8v8m1-8v7m1-7v7m1-7v9m1-9v8m1-8v9m1-9v8m1-9v10m1-10v9m2-8v8m1-9v9m6-8v7m1-6v7m1-8v8m1-9v9m1-8v9m1-9v8m1-8v7m1-8v8m1-7v8m1-8v8m1-8v8m1-8v8m1-8v8m1-8v9m1-9v8m1-7v7m1-9v9m1-8v8m1-8v8m1-8v8m1-9v8m1-7v8m1-9v9m1-8v7m1-7v8m1-9v9m1-8v9m1-10v9m1-9v9m1-8v7m1-6v6m1-7v8m1-8v8m2-8v8m1-8v7m1-7v8m1-8v9m1-9v8m1-8v7m1-7v7m1-8v9m1-8v7m1-8v9m1-8v8m1-9v9m1-8v8m1-9v8m2-8v9m1-8v7m1-8v9m1-7v7m1-8v8m1-8v8m1-8v9m1-10v9m1-8v8m1-8v8m1-9v9m1-9v9m1-9v8m1-7v8m1-8v8m1-7v7m1-9v9m1-8v8m2-9v9m1-8v7m1-7v6m1-6v8m1-8v7m2-7v8m2-9v8m1-7v8m1-8v8m1-9v8m1-8v8m1-7v8m1-9v9m1-9v8m1-7v7m1-8v9m1-9v8m1-7v8m1-8v8m2-8v8m1-8v8m1-9v9m1-8v8m1-9v9m1-9v9m1-9v9m1-9v8m1-7v7m1-8v9m1-9v9m1-9v9m1-9v10m1-8v6m1-7v9m1-10v10m1-11v10m1-8v8m2-8v7m2-8v8m1-7v7m1-7v8m1-9v9m2-9v9m1-9v9m1-8v8m1-9v8m2-8v9m1-9v9m2-9v9m2-9v9m1-9v9m1-8v8m1-8v7m1-7v7m1-7v7m1-6v6m1-8v8m1-7v7m1-6v6m1-8v8m1-8v9m1-9v9m1-9v9m1-8v7m1-9v10m1-7v6m1-7v8m1-8v7m1-7v6m1-6v7m2-7v8m1-9v9m1-9v8m1-8v9m1-10v9m1-6v5m1-8v9m1-8v8m2-7v8m1-8v7m1-7v8m1-8v7m1-8v10m1-10v8m1-8v8m1-8v8m1-8v8m3-7v7m1-8v9m1-8v7m1-8v8m2-8v8m1-8v9m1-8v8m1-10v10m1-9v7m1-8v10m1-8v7m1-8v10m1-10v9m1-10v10m1-9v8m1-8v8m2-7v7m1-7v8m1-9v7m1-7v8m1-8v8m2-8v7m1-7v8m1-8v8m1-7v7m1-8v8m1-8v9m1-9v8m1-8v9m1-9v9m2-8v7m1-8v8m1-7v6m1-7v8m1-8v9m1-8v7m1-8v7m1-6v7m1-9v9m1-8v9m1-9v7m1-6v7m1-7v7m1-8v8m1-8v8m2-9v9m1-9v9m1-8v8m1-7v6m1-8v9m1-7v7m1-7v7m1-7v7m1-8v9m2-9v8m1-7v7m2-8v9m1-10v10m1-8v7m1-8v9m1-8v6m1-7v8m1-8v9m1-9v8m1-8v9m1-10v9m1-8v9m1-9v7m1-6v7m1-9v8m1-8v9m1-7v7m1-8v8m2-8v8m1-9v10m1-9v8m1-8v8m1-9v10m1-9v8m1-7v7m1-9v10m2-10v9m1-9v10m1-9v8m1-7v7m1-8v9m1-10v9m1-8v9m1-9v8m1-8v7m1-7v8m1-8v9m1-9v7m1-7v8m1-7v8m1-9v8m1-9v10m1-9v8m1-8v8m2-9v9m1-8v9m1-10v9m1-8v8m1-8v8m2-8v8m1-9v9m1-9v9m2-8v8m1-8v8m1-8v7m1-7v9m1-10v10m1-9v8m1-7v6m1-7v8m1-9v9m1-8v8m1-8v8m1-8v7m1-7v8m1-9v9m1-9v8m1-6v6m1-7v8m1-8v8m1-9v9m1-9v9m1-7v8m1-10v9m1-8v8m1-7v8m1-10v8m1-7v8m1-8v8m1-9v10m1-9v7m1-7v7m1-7v7m1-8v9m1-8v7m1-8v8m1-7v8m1-9v10m1-9v8m1-9v10m1-8v6m1-8v9m1-8v7m2-8v9m1-9v9m1-8v8m1-8v8m1-8v8m2-9v9m1-9v10m1-9v8m1-9v9m1-8v8m1-9v9m1-8v8m1-9v9m1-9v10m2-9v8m1-8v7m1-8v8m1-7v7m1-7v8m1-9v9m1-8v8m1-8v7m1-7v8m2-8v7m1-8v9m1-9v9m1-8v8m2-9v9m1-8v6m1-7v10m1-9v8m1-10v10m1-9v9m1-9v8m1-8v8m1-7v7m1-7v8m1-8v8m1-9v9m3-9v9m1-8v8m1-9v9m2-7v7m2-7v6m2-7v7m1-8v8m1-8v9m1-8v7m1-8v8m1-7v8m1-8v7m1-7v7m1-8v9m1-8v8m2-8v6m1-6v7m1-7v7m1-7v7m1-8v8m1-7v8m1-8v7m1-7v8m1-8v7m1-8v9m1-9v9m1-9v8m1-8v8m1-7v7m1-7v6m1-7v9m2-8v7m1-8v8m1-8v8m1-7v7m1-8v9m1-8v7m1-7v7m1-8v9m1-8v6m2-6v8m1-9v9m1-8v7m1-7v8m1-9v9m1-9v9m1-9v9m1-9v9m1-8v7m2-8v9m1-9v9m1-8v8m1-8v7m1-8v9m1-9v9m1-8v8m1-9v9m1-9v8m1-8v9m1-8v7m1-8v8m1-8v8m2-8v9m1-9v8m1-9v9m1-8v9m1-9v8m1-7v8m1-9v9m2-9v8m1-8v8m1-8v8m1-8v9m1-8v7m1-7v8m1-8v8m1-9v8m1-8v8m1-8v9m1-10v8m1-7v9m1-9v8m1-8v9m1-8v8m1-9v8m1-8v8m1-8v9m1-8v8m1-8v7m1-8v8m1-9v9m1-9v9m1-7v7m1-9v10m1-9v8m1-8v8m1-8v8m1-7v8m1-9v8m1-7v7m2-8v8m1-8v8m1-8v8m1-8v8m3-8v9m1-9v9m1-9v8m2-7v7m1-9v10m1-8v8m1-9v9m1-9v8m1-8v9m1-8v7m1-8v8m1-7v7m1-8v8m1-8v8m1-10v11m1-9v8m1-9v9m1-9v10m1-9v8m2-7v7m1-8v7m1-8v9m1-9v10m1-9v8m1-8v8m1-8v8m1-9v9m1-7v6m1-7v7m1-7v8m1-7v8m1-9v9m1-9v7m1-7v8m1-8v8m1-9v9m2-9v9m1-8v8m1-7v7m1-7v7m1-9v8m1-8v9m1-7v6m1-7v7m1-6v7m1-8v8m1-8v9m1-9v9m2-10v9m2-8v8m2-7v8m1-10v8m1-7v9m2-9v8m1-8v7m1-8v10m1-10v9m1-8v8m2-8v8m1-8v8m1-7v7m1-7v8m1-9v7m1-8v9m1-8v8m1-9v9m1-8v7m1-7v8m1-8v8m1-9v9m2-9v9m1-8v7m1-7v7m1-6v7m1-8v8m1-8v7m1-8v9m1-8v9m1-8v7m1-9v9m1-8v8m1-9v8m1-8v8m2-8v9m1-8v9m1-10v9m1-8v9m1-9v8m1-7v6m1-8v9m1-8v9m1-9v8m2-7v7m1-7v7m1-8v7m1-7v8m1-8v7m1-6v6m1-8v8m1-7v8m1-7v7m1-9v8m1-7v8m1-9v9m1-9v9m1-9v8m1-7v8m1-8v8m1-8v8m1-9v9m1-8v8m1-9v9m1-8v8m1-7v6m1-8v9m1-8v8m1-7v7m1-9v9m1-8v9m1-9v8m1-9v9m1-8v8m1-9v9m1-8v7m1-7v8m1-8v7m1-7v9m1-10v9m1-9v9m3-8v7m1-7v8m1-9v8m1-8v9m1-8v7m1-6v7m1-9v9m1-9v8m1-8v8m1-9v9m1-7v7m1-8v9m1-9v8m1-7v8m1-8v8m1-9v9m1-9v9m1-8v8m1-9v8m1-7v9m1-9v7m1-7v8m2-8v8m1-9v7m1-6v7m2-8v8m1-8v9m1-8v8m1-8v6m1-7v9m1-8v7m1-8v9m1-8v7m1-8v8m1-7v7m1-7v8m1-8v8m2-8v8m1-8v8m1-9v9m1-8v6m1-5v7m1-9v9m1-9v9m1-9v8m1-7v7m2-7v7"/><path stroke="#00e200" d="M23 329v6m1-6v6m1-6v7m2-8v5m1-4v7m1-8v8m1-8v7m1-5v3m1-5v7m1-6v4m1-4v6m2-6v6m2-6v7m1-5v3m3-5v6m1-5v4m1-4v6m1-6v5m1-6v6m1-7v7m1-7v7m1-7v8m1-7v6m1-8v8m1-4v4m2-7v7m1-7v7m1-7v7m1-7v7m1-7v6m1-6v8m1-8v7m2-4v4m1-7v8m1-8v7m1-5v5m3-6v5m1-6v7m2-7v7m1-7v7m2-6v5m1-5v6m1-4v2m1-5v6m1-5v7m1-7v7m4-5v2m1-3v6m1-7v5m1-6v7m1-6v6m2-6v4m1-4v6m1-8v8m1-6v6m1-6v6m1-6v7m1-7v6m2-7v6m1-5v6m2-6v6m1-7v7m1-4v3m1-4v5m1-5v4m3-4v4m1-5v5m1-5v6m1-5v3m1-5v8m1-6v5m1-6v7m1-8v7m2-7v7m1-7v6m1-5v6m1-5v5m1-7v6m1-7v9m1-7v6m1-6v6m2-7v7m1-7v6m1-4v4m1-7v8m2-7v7m1-3v2m1-5v6m1-7v7m2-5v3m1-5v7m2-7v7m2-6v7m2-8v7m1-6v6m1-7v7m1-4v2m2-5v6m3-6v7m1-7v3m1-3v7m1-7v7m1-6v6m1-5v4m1-6v7m4-6v7m1-7v5m1-7v8m2-5v3m2-4v6m1-8v8m1-7v6m1-5v5m2-6v7m1-7v6m2-6v6m1-5v6m1-8v8m1-6v5m1-6v6m1-6v6m1-6v6m1-6v7m1-6v5m1-4v5m1-7v5m1-5v7m1-6v4m2-4v6m1-8v7m1-5v6m1-7v6m1-6v7m2-7v6m2-5v6m4-6v6m2-7v7m1-7v7m1-7v8m2-8v6m1-6v6m2-7v6m1-5v6m3-5v6m1-7v7m1-7v5m1-5v6m1-6v6m1-6v7m1-7v7m1-8v7m2-6v7m1-8v7m1-7v7m1-6v6m1-5v5m1-6v7m2-7v7m1-6v6m1-6v6m1-7v7m1-5v2m1-4v7m1-8v8m1-6v6m1-8v8m1-8v7m1-7v7m2-6v6m3-6v7m2-7v7m2-6v7m1-6v5m1-7v7m1-6v5m1-4v3m1-4v3m2-4v7m1-8v8m1-6v5m1-5v3m1-4v5m1-4v5m1-4v4m1-6v7m1-7v5m3-3v2m1-4v7m3-6v4m1-5v6m1-6v6m1-5v4m3-5v7m1-6v5m1-7v8m1-7v6m1-6v6m1-3v1m1-4v6m2-7v7m1-7v7m1-5v4m1-4v5m2-7v8m1-8v7m3-6v7m1-8v7m1-6v6m1-4v3m2-6v7m1-7v8m1-8v6m1-4v4m1-7v8m1-6v6m1-7v5m1-4v6m1-5v6m2-8v7m1-7v6m1-6v7m1-7v7m2-6v6m3-6v6m1-6v6m1-5v6m1-7v4m1-5v7m1-6v5m2-6v8m1-8v8m1-8v7m1-6v8m1-6v4m2-5v5m1-6v7m1-8v7m1-6v6m2-6v6m1-8v9m1-6v4m1-5v5m1-6v7m1-6v7m2-8v6m1-5v7m1-7v6m1-5v3m1-5v7m1-5v5m1-5v3m1-4v6m1-5v4m1-6v8m1-6v5m1-4v2m1-3v5m1-5v4m1-5v4m1-4v6m1-6v6m1-6v5m1-5v5m1-6v7m1-5v5m3-6v7m1-8v6m1-6v7m1-6v5m1-5v4m1-5v7m1-7v8m1-6v6m1-8v7m2-7v7m1-5v4m2-5v5m2-5v7m2-8v7m1-6v6m1-7v8m2-7v4m1-4v7m1-7v5m1-6v7m1-7v8m1-7v7m1-5v3m1-6v8m1-6v5m2-7v5m1-5v7m2-7v7m1-6v4m1-3v4m2-3v2m1-3v4m3-6v7m1-7v7m1-7v6m2-6v7m1-5v2m1-2v5m1-7v7m3-7v7m1-6v4m1-5v7m1-7v7m2-7v6m1-6v7m1-7v7m1-7v7m1-7v7m1-7v8m1-9v8m2-7v6m2-6v7m1-7v7m3-6v3m2-2v4m2-6v7m2-7v6m1-5v6m1-7v6m2-6v4m3-2v2m2-3v5m2-6v7m1-7v7m1-6v6m4-5v4m1-6v7m1-7v8m1-8v6m1-6v7m1-7v7m2-8v8m1-6v6m1-5v4m1-6v7m1-6v5m1-5v4m1-4v6m1-5v3m3-4v6m1-8v8m1-6v5m1-5v6m1-8v8m5-6v6m1-7v7m1-4v3m1-5v4m1-5v7m2-7v7m1-7v6m1-4v5m1-5v4m1-6v5m2-4v5m1-5v6m1-6v5m1-4v3m1-6v6m1-2v3m1-7v5m2-4v7m2-4v4m3-7v7m1-7v7m1-7v7m1-7v7m1-7v5m1-4v5m1-7v7m2-6v6m1-6v7m1-5v5m1-8v8m1-6v5m1-4v3m1-2v3m1-6v6m1-4v5m1-7v6m2-6v7m1-8v7m1-4v2m2-5v8m2-8v6m1-5v7m2-6v4m1-4v6m1-8v8m1-7v7m1-7v7m1-7v6m1-5v5m1-4v4m2-4v2m1-4v7m1-6v4m1-5v7m1-6v5m1-5v6m1-7v7m2-8v7m2-7v7m1-4v3m2-3v1m1-4v8m1-7v6m1-6v6m1-6v6m1-6v8m1-7v3m3-4v7m1-7v8m1-9v7m1-4v4m1-6v5m2-6v8m1-6v6m2-8v7m1-5v4m1-3v3m1-5v5m3-5v7m1-6v5m1-4v4m1-5v5m1-7v8m4-8v8m1-7v7m1-7v6m1-6v7m1-7v5m1-6v7m1-6v6m1-6v7m1-7v5m3-5v7m2-8v8m2-8v8m3-8v6m3-5v6m1-6v5m1-5v5m2-5v7m1-8v7m1-7v8m2-8v8m3-8v8m1-6v5m1-6v7m4-7v6m1-6v6m1-5v5m1-7v6m1-6v7m2-7v6m1-5v6m1-6v7m1-8v6m1-6v5m2-4v4m1-4v6m1-7v7m1-5v5m1-6v7m1-8v5m2-2v3m1-6v7m1-7v7m2-7v8m1-7v6m1-7v6m1-3v2m1-2v5m1-7v4m1-4v3m1-1v5m1-8v8m1-7v6m1-8v6m2-5v7m1-6v5m1-6v7m2-7v6m1-5v6m1-5v3m1-5v6m1-5v6m1-7v6m1-4v5m1-6v6m1-7v7m1-7v7m1-7v6m1-3v4m1-7v7m1-7v8m1-7v7m1-8v6m1-5v6m1-7v6m1-6v6m1-7v8m1-7v8m4-5v3m1-5v6m1-6v6m1-6v5m1-4v2m1-3v6m1-6v5m1-5v6m1-7v8m1-7v4m1-6v9m2-8v6m1-5v6m2-6v6m2-7v7m2-4v4m1-5v3m1-2v1m1-4v7m1-5v2m1-2v5m3-7v7m1-7v6m1-5v5m2-5v6m1-8v8m2-6v6m1-6v3m1-4v7m1-6v6m1-6v6m3-6v6m1-5v5m1-7v7m1-4v4m2-6v5m1-6v6m1-6v8m2-8v7m1-6v6m1-7v7m1-5v4m1-5v6m1-7v7m1-6v5m1-6v7m1-7v6m2-6v7m1-8v8m1-5v4m1-7v8m1-7v6m1-5v7m1-8v6m1-4v4m1-6v6m2-5v5m2-6v8m2-6v2m1-4v7m1-8v6m1-5v7m1-6v6m1-7v5m1-4v3m1-3v6m1-7v6m1-4v3m1-5v7m1-7v7m1-7v6m1-6v6m2-6v6m1-6v7m1-8v7m1-7v8m1-8v8m1-7v6m1-5v5m1-4v3m1-5v7m1-6v5m1-5v5m1-6v6m2-6v6m1-6v7m1-7v6m1-4v2m2-4v7m1-8v7m2-4v4m1-6v7m2-5v5m1-7v7m1-6v4m2-5v4m1-3v5m1-6v6m1-6v6m1-6v6m1-6v6m2-4v3m2-4v7m4-8v6m2-6v4m1-5v8m1-7v7m2-6v6m2-8v7m2-4v2m1-5v8m4-7v7m1-7v7m1-7v6m1-6v6m2-6v6m1-8v9m1-8v7m2-7v8m1-6v6m1-5v5m3-7v6m3-6v7m1-8v7m1-7v8m1-6v5m2-5v6m2-7v7m1-6v3m3-3v5m2-7v7m2-4v3m2-5v6m1-6v4m1-5v6m1-5v5m1-5v6m1-6v7m1-7v7m2-5v4m1-7v7m1-5v4m1-6v7m1-7v7m1-6v6m2-6v7m1-7v6m1-4v2m1-5v6m2-4v6m4-7v6m3-7v5m1-5v7m2-5v6m1-7v6m1-7v7m1-7v7m4-7v7m2-5v5m1-5v4m1-6v7m1-6v5m2-4v5m1-7v8m1-7v7m1-7v5m1-5v4m1-3v6m1-8v8m1-7v6m1-7v7m1-6v5m1-6v7m2-5v4m1-5v7m1-6v3m2-2v4m1-6v6m1-6v6m1-6v6m3-7v7m1-7v6m1-4v5m2-6v4m1-5v7m2-7v6m1-5v6m1-7v5m1-4v4m1-5v7m1-7v7m1-7v7m1-6v6m2-7v7m1-5v3m2-5v7m2-4v3m1-6v6m1-5v6m1-7v7m2-6v6m2-6v7m2-7v7m1-8v7m1-7v7m1-7v6m1-6v7m2-7v7m1-6v5m1-5v5m3-5v5m1-6v7m1-7v8m1-6v4m1-6v5m2-4v6m1-7v7m1-6v7m1-6v6m2-8v5m1-5v6m1-5v4m1-4v6m1-6v6m3-6v4m1-4v5m1-6v7m1-7v7m2-7v7m1-6v4m2-3v4m1-6v7m1-7v7m1-4v3m1-6v7m1-6v7m2-7v5m1-5v7m1-8v5m1-4v6m2-7v7m1-6v5"/><path stroke="#1e001e" d="M22 592v23m1-23v25m1-24v25m1-27v24m1-24v26m1-26v24m1-25v25m1-24v26m1-26v24m1-26v26m1-24v25m1-25v26m1-25v25m1-25v27m1-29v25m1-24v25m1-23v23m1-24v24m1-26v25m1-24v28m1-28v23m1-23v23m1-24v26m1-25v25m1-24v23m1-25v26m1-23v23m1-26v27m1-31v29m1-25v27m1-26v25m1-25v24m1-26v26m1-23v22m1-23v28m1-28v24m1-30v32m1-25v23m1-23v23m1-25v25m1-24v25m1-24v24m1-26v25m1-23v27m1-28v25m1-29v32m1-31v27m1-24v26m1-28v27m1-24v23m1-22v23m1-24v25m1-28v31m1-29v24m1-25v26m1-25v25m1-25v24m1-25v26m1-26v25m1-23v23m1-24v24m1-22v22m1-23v25m1-26v24m1-23v22m1-22v25m1-26v24m1-23v28m1-29v26m1-27v27m1-25v24m1-25v24m1-29v29m1-23v23m1-23v24m1-25v26m1-28v29m1-31v30m1-26v26m1-27v24m1-23v24m1-25v32m1-30v24m1-25v25m1-24v27m1-28v25m1-24v23m1-22v22m1-24v29m1-28v23m1-23v22m1-23v29m1-29v26m1-25v25m1-30v28m1-24v23m1-22v24m1-25v23m1-23v25m1-26v24m1-23v24m1-24v24m1-23v25m1-27v26m1-29v29m1-25v25m1-26v26m1-26v27m1-24v24m1-25v22m1-22v24m1-23v23m1-25v26m1-27v30m1-30v26m1-24v23m1-24v23m1-23v24m1-24v25m1-25v26m1-25v23m1-25v27m1-26v24m1-24v26m1-24v26m1-29v27m1-26v24m1-25v24m1-23v25m1-24v25m1-25v23m1-24v25m1-24v24m1-24v23m1-23v28m1-30v24m1-26v29m1-26v26m1-26v25m1-25v24m1-24v25m1-24v25m1-25v28m1-30v26m1-26v31m1-29v24m1-24v24m1-27v29m1-26v24m1-25v24m1-24v26m1-25v24m1-26v26m1-23v22m1-25v27m1-25v22m1-24v25m1-25v27m1-27v27m1-26v27m1-27v27m1-28v26m1-25v29m1-28v23m1-27v28m1-26v26m1-27v28m1-25v23m1-23v24m1-25v26m1-25v29m1-28v23m1-25v24m1-25v31m1-31v26m1-25v25m1-25v25m1-23v23m1-24v25m1-26v25m1-24v23m1-24v26m1-24v23m1-24v30m1-30v25m1-27v26m1-28v29m1-26v26m1-26v26m1-25v23m1-25v26m1-24v23m1-24v24m1-26v26m1-24v26m1-26v23m1-24v26m1-24v23m1-25v26m1-28v28m1-27v31m1-27v22m1-24v24m1-23v23m1-25v24m1-25v27m1-28v29m1-24v23m1-23v22m1-24v26m1-27v26m1-26v24m1-22v23m1-22v22m1-23v27m1-27v23m1-24v25m1-24v25m1-28v27m1-25v24m1-22v23m1-26v27m1-26v24m1-28v27m1-24v25m1-25v25m1-29v28m1-23v26m1-26v26m1-25v28m1-30v26m1-25v25m1-26v25m1-23v25m1-26v25m1-25v30m1-29v24m1-23v24m1-26v24m1-25v26m1-24v22m1-24v25m1-30v32m1-26v24m1-23v22m1-22v25m1-26v26m1-28v31m1-29v26m1-26v24m1-22v23m1-25v25m1-24v25m1-25v24m1-24v25m1-26v28m1-27v23m1-24v24m1-24v24m1-25v27m1-30v34m1-30v26m1-25v23m1-24v27m1-26v22m1-23v25m1-25v25m1-24v24m1-24v23m1-22v22m1-24v25m1-30v29m1-24v25m1-26v28m1-25v24m1-26v24m1-26v25m1-22v24m1-24v22m1-22v24m1-29v29m1-26v24m1-23v23m1-22v23m1-24v24m1-24v25m1-24v23m1-22v26m1-27v23m1-24v29m1-29v23m1-23v24m1-24v26m1-27v25m1-24v29m1-30v26m1-25v23m1-24v25m1-24v30m1-30v27m1-26v24m1-24v24m1-26v30m1-28v24m1-23v25m1-28v26m1-24v23m1-23v24m1-26v28m1-28v28m1-26v29m1-29v23m1-27v28m1-26v27m1-27v27m1-25v24m1-27v26m1-23v25m1-31v31m1-31v30m1-24v24m1-25v24m1-23v24m1-28v32m1-28v26m1-29v29m1-26v23m1-25v30m1-29v25m1-25v25m1-24v25m1-24v21m1-21v26m1-27v24m1-29v33m1-29v27m1-27v23m1-24v26m1-24v23m1-24v26m1-27v27m1-27v27m1-29v26m1-22v23m1-24v28m1-29v26m1-24v28m1-28v23m1-23v24m1-29v29m1-24v24m1-26v25m1-26v28m1-32v34m1-30v29m1-27v25m1-26v26m1-28v28m1-27v30m1-27v23m1-24v26m1-25v24m1-24v23m1-24v29m1-29v24m1-25v24m1-22v24m1-24v27m1-29v27m1-26v25m1-25v25m1-25v25m1-25v26m1-24v22m1-23v23m1-24v26m1-26v24m1-24v24m1-23v24m1-24v24m1-24v23m1-25v24m1-23v25m1-25v26m1-26v26m1-27v27m1-26v24m1-23v24m1-26v25m1-23v23m1-22v23m1-25v30m1-29v25m1-27v26m1-26v26m1-25v24m1-23v25m1-25v24m1-24v24m1-25v30m1-29v24m1-25v28m1-28v24m1-24v25m1-25v26m1-25v25m1-25v22m1-24v26m1-23v22m1-24v25m1-25v25m1-24v24m1-26v28m1-25v23m1-25v27m1-25v25m1-25v26m1-28v25m1-26v27m1-26v25m1-29v29m1-27v30m1-27v25m1-26v23m1-23v25m1-25v27m1-27v28m1-31v26m1-22v24m1-24v27m1-27v25m1-29v28m1-24v24m1-25v23m1-22v24m1-26v25m1-23v23m1-23v22m1-24v26m1-32v34m1-33v30m1-26v28m1-26v25m1-26v25m1-26v26m1-23v22m1-28v29m1-24v23m1-24v25m1-26v25m1-26v26m1-25v25m1-23v23m1-25v25m1-27v26m1-23v25m1-25v28m1-29v24m1-24v24m1-25v27m1-25v24m1-26v25m1-24v25m1-28v28m1-27v26m1-24v24m1-24v24m1-24v22m1-22v25m1-26v24m1-25v25m1-24v25m1-26v27m1-27v24m1-24v23m1-23v23m1-25v26m1-24v25m1-25v23m1-23v24m1-23v22m1-24v23m1-22v24m1-25v25m1-25v26m1-27v26m1-25v25m1-27v25m1-24v26m1-27v27m1-25v24m1-24v26m1-27v25m1-24v23m1-24v24m1-24v23m1-23v24m1-26v26m1-23v23m1-29v28m1-24v23m1-23v24m1-25v25m1-24v24m1-24v23m1-24v26m1-26v30m1-29v22m1-22v23m1-24v24m1-23v24m1-26v28m1-28v26m1-24v23m1-24v26m1-24v23m1-24v23m1-25v26m1-24v24m1-23v22m1-26v27m1-24v24m1-23v24m1-28v27m1-25v26m1-26v24m1-23v22m1-21v23m1-25v26m1-26v26m1-26v25m1-25v25m1-25v27m1-29v28m1-25v23m1-24v30m1-29v25m1-25v27m1-28v23m1-23v26m1-25v26m1-25v25m1-27v27m1-27v26m1-25v24m1-24v29m1-28v22m1-24v24m1-24v26m1-26v26m1-29v29m1-23v23m1-25v25m1-24v23m1-26v29m1-27v26m1-27v27m1-26v24m1-24v24m1-26v25m1-23v25m1-24v23m1-23v24m1-24v23m1-25v26m1-25v25m1-26v27m1-25v24m1-27v30m1-27v23m1-23v25m1-28v28m1-25v24m1-27v26m1-23v27m1-28v29m1-29v25m1-23v23m1-27v28m1-26v25m1-24v25m1-26v24m1-23v25m1-29v28m1-23v23m1-26v32m1-30v25m1-25v24m1-25v27m1-26v25m1-25v24m1-23v22m1-27v28m1-29v29m1-25v27m1-27v31m1-30v25m1-24v23m1-24v25m1-25v24m1-24v25m1-24v23m1-25v25m1-25v25m1-25v26m1-23v22m1-25v24m1-25v29m1-26v22m1-24v25m1-25v27m1-30v29m1-25v23m1-23v26m1-26v24m1-23v25m1-26v23m1-23v24m1-24v25m1-26v28m1-24v24m1-32v29m1-24v24m1-24v25m1-25v26m1-25v24m1-24v23m1-26v27m1-25v23m1-23v24m1-26v27m1-28v33m1-29v23m1-22v21m1-23v25m1-27v27m1-25v23m1-24v26m1-23v21m1-23v25m1-29v29m1-25v25m1-25v29m1-30v27m1-25v25m1-29v26m1-22v24m1-25v25m1-25v25m1-24v27m1-29v25m1-23v25m1-29v28m1-25v25m1-23v24m1-25v23m1-21v20m1-24v29m1-26v23m1-25v31m1-30v24m1-24v24m1-23v23m1-24v24m1-26v26m1-24v24m1-24v25m1-24v22m1-27v28m1-24v24m1-29v29m1-24v24m1-25v25m1-26v27m1-27v26m1-23v22m1-24v26m1-26v27m1-28v26m1-25v28m1-27v22m1-23v27m1-27v26m1-25v24m1-23v23m1-25v26m1-24v23m1-26v30m1-27v22m1-26v28m1-24v25m1-25v23m1-24v23m1-24v24m1-22v24m1-26v25m1-23v23m1-23v23m1-24v28m1-29v27m1-26v23m1-21v23m1-26v31m1-30v23m1-23v24m1-26v30m1-26v22m1-24v24m1-24v24m1-24v25m1-25v25m1-23v22m1-23v28m1-33v29m1-25v25m1-24v26m1-28v25m1-24v26m1-32v30m1-22v23m1-25v24m1-23v23m1-28v29m1-24v26m1-27v23m1-23v26m1-33v36m1-28v23m1-25v25m1-23v25m1-25v29m1-30v24m1-25v26m1-25v24m1-22v21m1-22v26m1-28v26m1-25v25m1-25v24m1-24v25m1-26v25m1-28v29m1-24v23m1-24v25m1-25v26m1-26v25m1-29v29m1-25v23m1-22v25m1-30v28m1-24v25m1-26v27m1-26v30m1-30v24m1-24v25m1-24v24m1-26v29m1-26v24m1-27v27m1-29v27m1-24v25m1-23v22m1-25v26m1-24v25m1-27v27m1-25v23m1-23v24m1-24v25m1-25v28m1-31v26m1-23v23m1-24v24m1-25v27m1-25v24m1-29v28m1-24v25m1-25v27m1-25v24m1-25v22m1-22v23m1-23v24m1-23v23m1-25v31m1-30v22m1-21v24m1-25v25m1-26v26m1-26v25m1-24v28m1-28v23m1-25v26m1-26v26m1-27v27m1-25v28m1-26v22m1-24v26m1-27v26m1-24v23m1-22v24m1-23v22m1-27v25m1-22v24m1-23v23m1-25v25m1-27v26m1-23v25m1-25v24m1-24v25m1-27v26m1-25v26m1-25v24m1-25v25m1-26v26m1-25v27m1-26v23m1-24v27m1-25v23m1-24v24m1-24v23m1-24v26m1-26v28m1-27v24m1-22v21m1-22v24m1-25v24m1-25v26m1-28v27m1-25v32m1-29v22m1-25v27m1-27v26m1-27v27m1-25v26m1-25v22m1-24v29m1-27v23m1-25v27m1-27v24m1-23v24m1-23v23m1-25v24m1-24v26m1-25v23m1-22v21m1-23v25m1-26v31m1-31v27m1-23v21m1-22v22m1-23v25m1-26v25m1-23v23m1-26v27m1-29v29m1-25v25m1-25v25m1-23v22m1-24v24m1-23v23m1-25v27m1-25v23m1-24v24m1-23v26m1-26v23m1-26v26m1-22v23m1-24v23m1-24v23m1-23v24m1-24v23m1-25v27m1-26v25m1-25v24m1-21v23m1-25v25m1-24v28m1-28v25m1-25v26m1-26v24m1-26v25m1-26v27m1-24v22m1-23v25m1-25v24m1-23v23m1-24v25m1-25v24m1-25v27m1-26v29m1-29v30m1-30v23m1-24v26m1-26v26m1-24v24m1-25v25m1-24v24m1-28v26m1-25v28m1-25v22m1-24v26m1-26v27m1-27v29m1-25v20m1-27v29m1-24v24m1-25v26m1-26v26m1-25v22m1-22v22m1-23v24m1-23v23m1-23v24m1-24v23m1-24v25m1-25v23m1-23v24m1-24v25m1-24v23m1-23v28m1-26v24m1-30v27m1-23v23m1-22v24m1-26v25m1-24v26m1-28v26m1-23v21m1-22v23m1-23v24m1-24v23m1-25v26m1-25v24m1-24v24m1-27v28m1-23v23m1-23v24m1-31v31m1-25v24m1-25v24m1-24v25m1-24v24m1-25v25m1-25v24m1-25v27m1-26v25m1-25v25m1-25v25m1-29v29m1-24v23m1-23v23m1-27v29m1-26v25m1-23v21m1-22v23m1-27v28m1-25v27m1-26v25m1-26v24m1-23v26m1-27v25m1-24v22m1-21v22m1-26v27m1-27v27m1-25v24m1-23v25m1-25v24m1-24v24m1-23v23m1-30v36m1-35v30m1-29v29m1-26v24m1-23v24m1-22v27m1-28v22m1-23v24m1-25v25m1-25v24m1-24v25m1-24v23m1-23v25m1-26v32m1-31v23m1-24v25m1-24v23m1-26v26m1-23v24m1-27v26m1-24v25m1-25v25m1-24v23m1-24v24m1-24v25m1-25v26m1-26v27m1-28v27m1-30v30m1-25v26"/><path stroke="#310031" d="M22 594v21m1-24v24m1-21v20m1-21v21m1-21v22m1-22v21m1-22v22m1-21v23m1-22v20m1-21v20m1-22v24m1-23v23m1-23v23m1-22v21m1-21v23m1-23v22m1-22v22m1-21v21m1-23v23m1-23v23m1-22v21m1-21v20m1-21v21m1-20v23m1-24v23m1-24v24m1-21v20m1-22v22m1-22v22m1-21v22m1-23v22m1-21v21m1-22v22m1-20v21m1-21v20m1-22v22m1-22v22m1-22v23m1-23v22m1-23v24m1-23v22m1-20v19m1-22v25m1-24v21m1-20v22m1-23v22m1-22v22m1-21v22m1-22v21m1-20v21m1-20v19m1-22v23m1-24v24m1-22v21m1-22v21m1-20v22m1-23v23m1-24v24m1-24v23m1-22v22m1-20v21m1-22v20m1-20v21m1-20v20m1-21v21m1-22v23m1-21v20m1-22v23m1-24v25m1-24v23m1-22v22m1-23v22m1-20v21m1-22v21m1-22v22m1-22v23m1-24v25m1-23v22m1-23v23m1-22v22m1-21v19m1-21v24m1-25v25m1-23v22m1-23v22m1-22v23m1-23v23m1-23v21m1-20v21m1-22v23m1-21v19m1-20v22m1-23v22m1-21v22m1-22v21m1-21v20m1-19v20m1-20v20m1-22v23m1-22v21m1-22v21m1-20v20m1-20v22m1-23v23m1-22v22m1-24v24m1-24v23m1-22v22m1-21v21m1-21v21m1-22v23m1-22v20m1-20v21m1-21v21m1-21v22m1-23v21m1-20v21m1-21v21m1-22v22m1-23v23m1-20v20m1-22v23m1-23v23m1-22v23m1-22v20m1-21v22m1-23v22m1-22v22m1-21v21m1-21v23m1-23v22m1-23v23m1-23v23m1-22v21m1-21v21m1-23v22m1-20v22m1-21v20m1-21v22m1-23v21m1-20v21m1-22v23m1-22v22m1-23v23m1-22v22m1-23v22m1-20v20m1-21v22m1-22v22m1-22v22m1-23v24m1-24v21m1-21v22m1-22v22m1-22v23m1-22v21m1-22v24m1-24v23m1-22v21m1-21v21m1-22v24m1-24v23m1-22v21m1-23v23m1-22v22m1-23v23m1-23v23m1-22v22m1-22v23m1-23v23m1-23v22m1-21v21m1-21v21m1-22v23m1-23v22m1-21v21m1-20v19m1-20v21m1-22v23m1-22v22m1-23v21m1-19v20m1-20v21m1-23v24m1-24v22m1-22v23m1-23v24m1-24v22m1-21v22m1-23v22m1-21v20m1-21v21m1-20v23m1-24v22m1-21v23m1-22v20m1-22v23m1-22v22m1-22v22m1-22v22m1-23v25m1-24v21m1-20v20m1-21v22m1-21v20m1-21v21m1-22v23m1-20v20m1-21v19m1-19v20m1-21v22m1-21v20m1-20v20m1-21v22m1-23v22m1-19v19m1-21v22m1-21v21m1-23v23m1-23v22m1-20v19m1-22v24m1-22v22m1-21v20m1-23v24m1-23v23m1-22v20m1-21v22m1-21v22m1-22v22m1-24v24m1-23v23m1-22v21m1-22v22m1-20v20m1-22v23m1-22v21m1-20v21m1-23v21m1-19v19m1-19v20m1-21v21m1-23v25m1-23v21m1-21v20m1-20v22m1-22v23m1-25v25m1-25v23m1-21v21m1-21v21m1-22v22m1-21v20m1-19v21m1-22v22m1-24v24m1-23v23m1-22v22m1-22v21m1-22v23m1-24v24m1-23v22m1-20v19m1-20v23m1-24v21m1-21v23m1-22v20m1-20v23m1-23v22m1-21v20m1-22v23m1-22v22m1-22v23m1-25v25m1-22v20m1-21v21m1-21v21m1-22v21m1-21v22m1-22v23m1-23v23m1-23v23m1-22v22m1-23v23m1-22v21m1-23v22m1-20v21m1-21v21m1-22v21m1-21v23m1-21v19m1-20v20m1-21v23m1-23v23m1-23v22m1-22v21m1-21v22m1-21v21m1-23v23m1-22v23m1-22v21m1-20v21m1-23v23m1-22v21m1-21v22m1-22v21m1-21v21m1-20v20m1-23v23m1-22v23m1-22v22m1-21v19m1-21v23m1-22v23m1-23v23m1-24v23m1-22v21m1-22v23m1-23v23m1-25v26m1-24v23m1-22v20m1-21v23m1-23v23m1-23v22m1-21v22m1-22v21m1-21v21m1-21v21m1-21v20m1-21v22m1-20v20m1-21v22m1-22v20m1-21v23m1-23v23m1-23v20m1-19v22m1-23v22m1-22v23m1-22v22m1-23v23m1-21v21m1-23v23m1-22v21m1-21v21m1-21v20m1-20v22m1-21v20m1-20v21m1-22v20m1-21v21m1-21v21m1-22v24m1-24v25m1-23v21m1-22v23m1-22v20m1-20v22m1-22v21m1-21v22m1-22v21m1-20v21m1-22v21m1-22v23m1-23v22m1-22v22m1-20v20m1-21v22m1-23v23m1-24v24m1-21v21m1-23v24m1-22v20m1-22v22m1-22v23m1-21v20m1-22v22m1-22v22m1-22v23m1-22v21m1-22v23m1-22v22m1-24v25m1-25v25m1-24v23m1-23v23m1-22v22m1-22v21m1-22v23m1-23v23m1-23v23m1-22v22m1-24v25m1-23v22m1-22v21m1-22v23m1-23v23m1-22v22m1-22v22m1-22v22m1-23v23m1-23v22m1-22v22m1-22v24m1-24v21m1-21v22m1-23v24m1-21v19m1-20v22m1-23v23m1-22v22m1-23v24m1-22v20m1-21v22m1-21v21m1-22v21m1-21v20m1-21v22m1-21v21m1-22v22m1-23v23m1-22v22m1-20v19m1-21v22m1-22v24m1-24v21m1-21v21m1-20v22m1-23v23m1-22v23m1-23v21m1-20v19m1-21v22m1-21v22m1-21v21m1-22v21m1-21v20m1-20v21m1-23v23m1-21v22m1-24v25m1-25v22m1-22v23m1-22v23m1-23v22m1-23v24m1-24v22m1-22v23m1-23v22m1-23v22m1-21v22m1-21v21m1-21v21m1-21v20m1-20v20m1-21v22m1-22v21m1-22v22m1-23v24m1-22v21m1-23v23m1-22v22m1-22v23m1-23v21m1-21v22m1-21v19m1-21v22m1-22v23m1-23v21m1-20v20m1-20v22m1-22v20m1-22v24m1-25v23m1-21v22m1-24v24m1-24v23m1-22v21m1-22v23m1-22v21m1-21v21m1-21v22m1-24v24m1-23v24m1-24v21m1-22v23m1-22v22m1-22v22m1-21v23m1-25v23m1-22v20m1-21v23m1-23v22m1-22v21m1-21v21m1-21v22m1-23v23m1-21v21m1-22v22m1-22v21m1-22v23m1-22v21m1-21v20m1-20v20m1-20v21m1-22v20m1-19v20m1-21v22m1-22v21m1-22v23m1-22v23m1-23v20m1-21v24m1-23v22m1-22v23m1-24v22m1-22v23m1-23v23m1-23v23m1-24v25m1-22v21m1-21v21m1-24v23m1-21v21m1-21v21m1-22v21m1-20v22m1-22v23m1-22v20m1-23v24m1-21v22m1-24v24m1-23v23m1-21v19m1-21v21m1-20v20m1-22v22m1-21v20m1-20v22m1-23v23m1-21v22m1-23v23m1-23v22m1-24v23m1-21v23m1-22v22m1-23v22m1-21v21m1-22v21m1-20v21m1-20v20m1-21v22m1-22v20m1-21v23m1-21v19m1-21v24m1-23v21m1-21v20m1-20v21m1-22v22m1-22v23m1-21v20m1-22v22m1-22v23m1-22v22m1-24v24m1-22v21m1-21v20m1-21v22m1-22v23m1-22v22m1-22v22m1-22v21m1-22v23m1-22v22m1-21v21m1-22v23m1-25v24m1-24v23m1-21v23m1-23v21m1-21v22m1-23v25m1-23v20m1-21v21m1-22v22m1-21v23m1-24v23m1-22v22m1-22v23m1-22v21m1-22v22m1-23v22m1-20v21m1-22v21m1-20v21m1-21v21m1-22v22m1-21v21m1-22v21m1-21v23m1-23v22m1-22v22m1-22v22m1-22v20m1-21v22m1-21v22m1-22v20m1-19v21m1-22v22m1-22v23m1-23v20m1-21v23m1-21v22m1-23v22m1-21v19m1-21v23m1-21v21m1-22v23m1-21v18m1-20v21m1-19v20m1-22v22m1-23v24m1-22v20m1-21v22m1-22v24m1-22v19m1-20v22m1-22v23m1-25v25m1-23v21m1-21v20m1-21v22m1-23v24m1-22v22m1-23v23m1-21v20m1-22v23m1-23v22m1-22v24m1-23v22m1-23v24m1-24v23m1-21v19m1-21v22m1-21v22m1-22v21m1-21v22m1-23v23m1-22v22m1-22v21m1-22v23m1-21v22m1-22v21m1-21v19m1-20v22m1-22v21m1-22v23m1-23v23m1-23v22m1-21v21m1-22v23m1-23v24m1-24v23m1-23v24m1-23v21m1-21v21m1-21v22m1-22v22m1-22v21m1-22v24m1-23v21m1-20v21m1-21v20m1-22v22m1-20v21m1-22v22m1-21v22m1-23v21m1-21v23m1-24v24m1-24v22m1-22v24m1-24v24m1-22v20m1-21v22m1-20v18m1-19v21m1-22v23m1-22v22m1-21v19m1-22v22m1-20v23m1-25v23m1-21v21m1-22v22m1-22v21m1-22v24m1-22v20m1-20v21m1-21v22m1-22v20m1-21v21m1-22v24m1-22v22m1-22v22m1-23v21m1-20v22m1-22v22m1-23v21m1-21v21m1-20v22m1-22v21m1-22v23m1-23v22m1-23v24m1-22v21m1-21v22m1-22v21m1-21v20m1-21v23m1-23v22m1-21v22m1-22v21m1-23v23m1-22v21m1-20v21m1-22v23m1-22v21m1-22v22m1-23v24m1-23v22m1-21v21m1-22v22m1-21v21m1-22v22m1-20v20m1-20v20m1-21v20m1-19v20m1-19v18m1-20v21m1-21v22m1-23v23m1-23v22m1-21v20m1-20v22m1-22v21m1-20v20m1-22v23m1-22v22m1-23v22m1-22v22m1-21v22m1-23v23m1-22v22m1-23v24m1-24v23m1-23v23m1-22v20m1-20v21m1-21v21m1-22v22m1-20v21m1-22v22m1-23v22m1-22v23m1-21v19m1-19v21m1-21v22m1-25v25m1-24v23m1-21v20m1-22v22m1-22v24m1-22v21m1-20v20m1-21v20m1-20v20m1-21v21m1-21v22m1-23v21m1-19v21m1-21v20m1-22v24m1-23v22m1-21v21m1-21v20m1-21v21m1-22v24m1-22v19m1-21v24m1-22v21m1-23v24m1-24v24m1-22v21m1-22v21m1-19v21m1-23v20m1-20v21m1-22v23m1-21v22m1-22v21m1-23v23m1-21v22m1-23v23m1-23v22m1-24v25m1-23v22m1-22v23m1-24v24m1-23v22m1-22v22m1-22v23m1-23v21m1-20v19m1-19v21m1-22v22m1-23v23m1-21v21m1-21v20m1-21v22m1-21v20m1-21v21m1-20v21m1-21v21m1-21v20m1-21v23m1-23v22m1-22v23m1-23v22m1-20v20m1-23v23m1-22v22m1-21v21m1-22v22m1-21v21m1-22v21m1-20v20m1-20v22m1-24v23m1-22v22m1-21v20m1-21v22m1-22v24m1-22v19m1-21v21m1-20v22m1-22v21m1-21v20m1-22v25m1-23v21m1-22v22m1-22v22m1-21v21m1-21v20m1-21v22m1-21v21m1-22v23m1-22v21m1-19v18m1-20v21m1-21v21m1-21v22m1-20v19m1-22v22m1-21v22m1-23v22m1-21v20m1-20v21m1-23v22m1-21v23m1-23v22m1-20v20m1-22v23m1-23v22m1-20v21m1-24v24m1-23v22m1-22v22m1-22v21m1-22v23m1-22v22m1-22v23m1-22v22m1-22v21m1-21v21m1-22v22m1-21v21m1-22v23m1-23v23m1-23v23m1-24v22m1-20v21m1-20v19m1-21v23m1-22v21m1-21v22m1-22v22m1-23v24m1-23v20m1-21v24m1-22v19m1-21v23m1-23v23m1-23v22m1-21v22m1-22v21m1-20v19m1-21v21m1-21v24m1-24v21m1-20v22m1-23v23m1-22v22m1-23v22m1-22v23m1-20v19m1-22v23m1-21v20m1-21v23m1-25v23m1-22v22m1-22v22m1-21v22m1-22v21m1-22v22m1-22v23m1-22v20m1-21v23m1-22v21m1-21v22m1-22v21m1-21v23m1-24v22m1-22v24m1-24v22m1-21v22m1-21v20m1-21v21m1-21v20m1-20v22m1-23v22m1-21v19m1-19v22m1-22v22m1-23v24m1-24v23m1-23v24m1-24v23m1-22v20m1-22v24m1-24v24m1-22v22m1-22v21m1-20v19m1-21v22m1-21v22m1-22v20m1-19v20m1-22v22m1-23v24m1-22v22m1-22v23m1-22v19m1-21v23m1-22v21m1-23v24m1-22v23m1-24v23m1-22v21m1-20v21m1-21v21m1-22v22m1-21v19m1-21v22m1-20v22m1-24v22m1-21v21m1-21v21m1-22v23m1-21v21m1-22v21m1-20v21m1-23v22m1-22v23m1-23v22m1-20v22m1-24v23m1-20v19m1-20v21m1-22v21m1-21v22m1-24v24m1-23v23m1-22v21m1-22v24"/><path stroke="#4a004a" d="M22 594v20m1-21v19m1-17v18m1-19v20m1-21v20m1-19v18m1-19v20m1-20v21m1-21v20m1-18v18m1-19v19m1-20v22m1-21v19m1-18v19m1-20v19m1-19v20m1-20v20m1-20v19m1-19v19m1-19v19m1-20v19m1-18v18m1-18v20m1-19v19m1-19v18m1-19v19m1-19v18m1-18v20m1-21v19m1-18v20m1-20v19m1-19v19m1-18v18m1-19v18m1-17v18m1-19v20m1-20v20m1-21v20m1-19v19m1-19v20m1-22v22m1-20v20m1-20v19m1-20v19m1-18v20m1-20v20m1-21v19m1-18v20m1-21v20m1-19v20m1-19v18m1-19v20m1-20v20m1-19v18m1-20v19m1-18v19m1-19v19m1-19v20m1-21v21m1-19v18m1-19v19m1-19v19m1-20v21m1-20v19m1-19v19m1-19v19m1-19v19m1-19v20m1-21v21m1-21v21m1-21v19m1-18v19m1-19v18m1-19v19m1-19v21m1-20v20m1-22v21m1-19v20m1-20v20m1-20v19m1-17v17m1-20v21m1-21v21m1-21v19m1-18v19m1-18v18m1-20v19m1-19v20m1-19v20m1-20v19m1-18v18m1-19v18m1-17v19m1-20v20m1-21v19m1-18v18m1-18v20m1-20v19m1-20v19m1-18v19m1-20v21m1-20v18m1-18v20m1-21v20m1-21v21m1-19v19m1-20v19m1-19v21m1-20v20m1-20v19m1-19v20m1-20v19m1-19v19m1-18v18m1-18v20m1-21v19m1-19v18m1-18v19m1-19v19m1-20v21m1-19v18m1-20v20m1-19v19m1-19v21m1-21v18m1-19v20m1-19v19m1-20v19m1-18v19m1-19v20m1-20v19m1-20v20m1-18v18m1-19v18m1-19v19m1-18v18m1-18v20m1-20v19m1-19v20m1-21v19m1-18v19m1-19v19m1-18v17m1-18v19m1-20v20m1-18v17m1-17v18m1-19v18m1-18v19m1-19v19m1-19v20m1-21v19m1-20v21m1-19v18m1-19v20m1-18v18m1-19v19m1-19v20m1-20v19m1-18v18m1-19v20m1-21v21m1-20v19m1-19v19m1-19v19m1-19v19m1-20v20m1-20v20m1-20v21m1-20v20m1-20v19m1-18v17m1-19v21m1-21v20m1-19v19m1-19v19m1-19v19m1-18v18m1-19v20m1-20v19m1-18v17m1-18v19m1-19v20m1-20v20m1-20v19m1-20v20m1-20v22m1-22v20m1-18v19m1-20v19m1-18v18m1-18v17m1-17v18m1-19v20m1-19v18m1-19v18m1-20v22m1-20v18m1-18v20m1-20v19m1-21v23m1-20v17m1-17v18m1-19v19m1-19v19m1-19v19m1-20v22m1-19v16m1-18v18m1-17v19m1-19v19m1-19v18m1-18v18m1-17v17m1-19v20m1-19v16m1-17v20m1-19v18m1-20v21m1-21v19m1-17v17m1-20v22m1-21v21m1-19v17m1-18v19m1-20v20m1-20v19m1-18v19m1-18v18m1-18v18m1-20v21m1-19v18m1-19v19m1-18v19m1-19v19m1-21v20m1-19v20m1-18v17m1-19v19m1-18v17m1-18v19m1-21v21m1-19v19m1-19v20m1-19v17m1-18v19m1-19v20m1-20v20m1-21v21m1-20v20m1-20v18m1-19v20m1-19v19m1-20v20m1-19v18m1-19v20m1-18v19m1-21v20m1-20v21m1-21v21m1-21v21m1-19v19m1-19v18m1-19v20m1-21v19m1-18v18m1-18v20m1-19v19m1-20v18m1-17v19m1-20v19m1-18v17m1-19v20m1-20v21m1-19v18m1-20v19m1-18v19m1-19v19m1-19v19m1-19v20m1-20v18m1-19v20m1-19v19m1-19v20m1-19v19m1-22v21m1-18v17m1-18v20m1-20v18m1-18v19m1-19v19m1-19v20m1-21v21m1-20v20m1-21v20m1-20v20m1-19v18m1-18v20m1-22v22m1-20v21m1-21v18m1-17v17m1-18v20m1-20v18m1-17v19m1-20v19m1-19v19m1-18v19m1-20v20m1-20v20m1-20v20m1-19v18m1-19v20m1-21v20m1-20v21m1-20v19m1-19v18m1-19v21m1-22v21m1-20v20m1-19v20m1-20v17m1-18v20m1-19v20m1-20v20m1-20v20m1-21v20m1-19v19m1-20v20m1-19v18m1-17v19m1-19v18m1-19v19m1-19v18m1-18v20m1-19v19m1-20v18m1-18v20m1-21v21m1-21v20m1-20v21m1-21v21m1-19v18m1-19v20m1-20v18m1-19v20m1-19v19m1-18v18m1-20v21m1-19v17m1-18v19m1-19v20m1-20v19m1-20v20m1-21v22m1-21v20m1-20v20m1-19v20m1-19v18m1-19v18m1-18v19m1-18v18m1-19v20m1-19v17m1-18v19m1-19v19m1-20v21m1-19v17m1-18v19m1-20v21m1-21v21m1-20v19m1-20v21m1-19v18m1-19v18m1-17v18m1-19v20m1-20v19m1-20v21m1-20v19m1-19v18m1-18v19m1-19v18m1-18v20m1-21v21m1-20v19m1-18v17m1-18v19m1-19v19m1-20v20m1-17v17m1-20v20m1-20v20m1-19v20m1-20v18m1-17v17m1-18v20m1-20v19m1-19v20m1-20v18m1-17v18m1-20v20m1-20v20m1-19v18m1-18v18m1-19v20m1-18v17m1-19v20m1-17v17m1-18v18m1-20v19m1-19v22m1-21v20m1-19v18m1-18v20m1-20v19m1-20v19m1-18v18m1-19v18m1-18v18m1-19v20m1-20v21m1-20v19m1-18v17m1-20v21m1-21v23m1-21v18m1-18v19m1-19v19m1-19v18m1-17v18m1-19v18m1-17v18m1-19v18m1-19v22m1-21v19m1-19v18m1-17v17m1-19v20m1-19v19m1-20v20m1-20v20m1-20v20m1-20v20m1-20v19m1-19v19m1-19v19m1-20v20m1-19v18m1-19v19m1-19v20m1-19v18m1-19v19m1-19v20m1-19v18m1-18v19m1-21v21m1-20v19m1-20v19m1-19v21m1-20v18m1-19v19m1-19v20m1-20v20m1-21v20m1-19v18m1-17v18m1-19v19m1-19v19m1-19v18m1-19v17m1-16v19m1-19v16m1-17v19m1-19v19m1-19v18m1-19v20m1-20v20m1-20v18m1-18v20m1-19v17m1-17v17m1-17v18m1-20v19m1-19v20m1-19v18m1-19v20m1-19v19m1-19v18m1-18v20m1-21v19m1-19v19m1-20v20m1-19v19m1-20v20m1-19v18m1-20v21m1-21v20m1-19v19m1-19v19m1-20v20m1-20v21m1-20v20m1-20v19m1-19v19m1-18v17m1-19v19m1-19v19m1-18v17m1-18v19m1-19v20m1-20v19m1-19v19m1-18v19m1-21v21m1-19v20m1-20v18m1-20v19m1-17v19m1-19v18m1-20v22m1-20v19m1-20v20m1-20v20m1-20v19m1-18v18m1-18v17m1-17v19m1-20v20m1-19v17m1-17v19m1-19v19m1-19v19m1-21v20m1-17v17m1-19v19m1-18v18m1-20v21m1-19v18m1-18v18m1-18v17m1-17v20m1-20v19m1-19v19m1-20v19m1-19v21m1-19v19m1-21v19m1-19v19m1-18v18m1-18v19m1-19v19m1-20v20m1-19v19m1-20v20m1-19v18m1-19v21m1-21v20m1-19v19m1-18v18m1-19v19m1-19v18m1-18v19m1-19v19m1-20v20m1-19v19m1-19v19m1-19v19m1-18v18m1-18v18m1-18v18m1-19v19m1-18v17m1-18v18m1-18v18m1-18v18m1-16v18m1-20v20m1-20v21m1-21v20m1-20v20m1-20v18m1-17v19m1-21v22m1-21v19m1-19v20m1-21v19m1-17v19m1-21v21m1-20v20m1-21v21m1-20v19m1-18v18m1-18v19m1-19v19m1-20v19m1-18v20m1-21v19m1-18v19m1-19v17m1-17v19m1-20v20m1-20v20m1-20v19m1-20v20m1-17v17m1-19v20m1-20v20m1-18v17m1-18v18m1-18v19m1-20v20m1-18v17m1-18v19m1-19v20m1-20v20m1-19v17m1-19v19m1-18v20m1-21v22m1-20v16m1-17v17m1-17v18m1-18v18m1-19v20m1-18v18m1-20v20m1-19v19m1-18v17m1-17v19m1-20v19m1-20v21m1-20v19m1-19v19m1-19v20m1-21v21m1-19v18m1-19v20m1-19v18m1-19v20m1-21v20m1-20v21m1-20v19m1-19v19m1-20v20m1-18v17m1-17v17m1-18v19m1-18v18m1-19v18m1-18v19m1-18v19m1-18v18m1-20v20m1-19v18m1-17v16m1-18v19m1-19v20m1-19v18m1-19v19m1-19v19m1-19v19m1-18v18m1-19v20m1-20v21m1-21v20m1-20v20m1-20v19m1-19v19m1-19v20m1-20v20m1-20v18m1-18v19m1-19v20m1-21v20m1-18v17m1-17v19m1-20v19m1-18v17m1-17v18m1-18v18m1-19v21m1-21v20m1-21v20m1-19v20m1-19v19m1-19v19m1-19v17m1-17v18m1-17v17m1-18v19m1-20v20m1-19v19m1-20v19m1-19v20m1-20v19m1-19v20m1-19v19m1-19v19m1-20v20m1-18v17m1-17v18m1-20v20m1-19v18m1-18v18m1-19v21m1-21v20m1-20v20m1-20v19m1-18v19m1-19v19m1-19v19m1-19v18m1-19v20m1-19v19m1-20v21m1-21v20m1-20v21m1-21v20m1-19v19m1-20v19m1-17v18m1-21v21m1-19v20m1-20v18m1-18v19m1-21v22m1-19v16m1-17v18m1-19v20m1-19v19m1-20v19m1-18v19m1-19v19m1-18v18m1-18v19m1-20v19m1-20v20m1-19v20m1-19v18m1-20v19m1-17v18m1-17v17m1-19v18m1-18v19m1-19v21m1-21v18m1-18v18m1-19v21m1-21v20m1-19v18m1-19v20m1-17v17m1-19v18m1-17v18m1-18v19m1-21v21m1-20v20m1-20v20m1-20v18m1-18v20m1-20v19m1-18v18m1-18v19m1-20v19m1-18v17m1-18v19m1-19v20m1-20v19m1-17v15m1-16v18m1-18v18m1-21v23m1-20v19m1-19v17m1-18v19m1-20v21m1-19v19m1-18v16m1-17v17m1-18v19m1-18v18m1-18v18m1-18v17m1-17v19m1-20v19m1-20v21m1-20v18m1-17v19m1-19v18m1-19v20m1-20v20m1-19v17m1-19v21m1-18v18m1-20v21m1-20v19m1-19v18m1-18v18m1-18v18m1-19v19m1-18v18m1-19v20m1-19v20m1-19v16m1-17v19m1-19v18m1-18v19m1-19v18m1-19v21m1-21v21m1-21v19m1-20v21m1-20v19m1-17v17m1-19v20m1-19v18m1-18v17m1-16v16m1-18v20m1-19v19m1-19v19m1-19v18m1-19v19m1-18v18m1-18v18m1-17v18m1-20v21m1-19v17m1-19v20m1-19v19m1-19v20m1-21v20m1-19v18m1-20v21m1-19v19m1-20v19m1-19v20m1-19v19m1-18v17m1-18v18m1-18v19m1-19v19m1-19v19m1-19v19m1-20v19m1-19v20m1-18v17m1-19v19m1-18v19m1-20v19m1-19v19m1-19v21m1-20v17m1-17v19m1-19v18m1-17v17m1-17v17m1-17v17m1-18v19m1-19v20m1-21v20m1-17v15m1-16v18m1-18v18m1-19v19m1-18v17m1-18v18m1-18v20m1-21v20m1-19v18m1-18v18m1-20v20m1-17v19m1-19v18m1-18v18m1-18v19m1-21v21m1-20v19m1-20v20m1-19v18m1-18v18m1-18v19m1-19v19m1-19v20m1-20v18m1-17v18m1-19v19m1-18v18m1-19v19m1-19v18m1-18v20m1-20v19m1-20v20m1-19v19m1-19v18m1-18v19m1-19v19m1-19v19m1-19v19m1-19v20m1-20v19m1-18v17m1-19v21m1-20v19m1-19v20m1-21v21m1-19v17m1-17v18m1-19v19m1-18v17m1-18v18m1-18v20m1-20v18m1-17v17m1-18v19m1-19v20m1-20v19m1-19v19m1-17v16m1-19v21m1-18v16m1-18v20m1-22v21m1-19v20m1-20v19m1-19v19m1-19v19m1-20v20m1-18v19m1-20v19m1-20v20m1-18v18m1-19v20m1-19v18m1-19v20m1-21v20m1-19v19m1-19v18m1-18v20m1-20v19m1-19v19m1-18v17m1-19v22m1-21v20m1-21v19m1-19v20m1-19v19m1-19v19m1-19v19m1-20v21m1-21v21m1-19v17m1-18v19m1-20v20m1-18v19m1-20v20m1-20v18m1-18v19m1-18v18m1-20v20m1-19v18m1-18v19m1-19v20m1-21v20m1-19v20m1-20v19m1-19v20m1-19v18m1-19v20m1-20v19m1-18v19m1-19v18m1-17v17m1-18v19m1-19v19m1-19v18m1-20v21m1-19v18m1-19v20m1-20v19m1-18v18m1-19v19m1-18v17m1-18v19m1-18v18m1-19v19m1-19v19m1-20v20m1-18v20m1-21v20m1-19v19m1-20v19m1-18v18m1-19v19m1-19v20m1-21v20m1-19v18m1-19v21"/><path stroke="#6a006a" d="M22 596v15m1-16v17m1-16v16m1-17v17m1-17v16m1-15v15m1-16v17m1-17v17m1-16v15m1-14v14m1-17v18m1-17v17m1-16v16m1-16v16m1-18v18m1-16v15m1-15v16m1-16v16m1-18v17m1-17v17m1-16v16m1-15v16m1-17v16m1-17v17m1-16v17m1-17v17m1-16v15m1-15v15m1-16v16m1-15v17m1-17v15m1-16v17m1-16v14m1-14v14m1-14v15m1-16v17m1-16v17m1-19v17m1-16v16m1-17v18m1-17v16m1-15v15m1-16v17m1-17v17m1-15v16m1-17v16m1-17v16m1-16v17m1-16v16m1-15v15m1-16v15m1-15v17m1-19v18m1-16v15m1-15v14m1-15v17m1-16v15m1-16v17m1-16v17m1-18v16m1-16v17m1-17v16m1-16v16m1-15v15m1-15v15m1-16v17m1-16v15m1-16v17m1-18v17m1-16v17m1-18v17m1-15v15m1-16v17m1-17v17m1-17v17m1-17v18m1-19v18m1-16v15m1-16v17m1-17v17m1-16v15m1-16v17m1-17v17m1-16v16m1-16v15m1-16v16m1-16v17m1-16v15m1-16v17m1-16v16m1-15v15m1-17v16m1-16v17m1-16v16m1-17v17m1-17v16m1-15v16m1-16v14m1-15v17m1-16v15m1-15v15m1-15v15m1-14v15m1-17v17m1-17v18m1-18v17m1-17v17m1-16v16m1-15v15m1-16v14m1-15v17m1-17v16m1-16v17m1-16v15m1-15v17m1-17v15m1-16v16m1-16v17m1-16v15m1-17v17m1-14v14m1-16v17m1-17v17m1-17v17m1-16v15m1-16v16m1-16v16m1-16v16m1-15v15m1-14v16m1-17v16m1-17v16m1-15v16m1-17v15m1-15v17m1-16v15m1-16v17m1-17v17m1-15v14m1-16v16m1-16v16m1-15v17m1-18v16m1-17v17m1-16v17m1-16v15m1-16v16m1-15v16m1-17v17m1-17v17m1-16v16m1-16v16m1-18v18m1-17v17m1-17v17m1-16v16m1-17v17m1-17v17m1-17v16m1-14v14m1-15v16m1-18v18m1-17v16m1-15v16m1-16v16m1-17v16m1-15v15m1-16v16m1-16v17m1-17v17m1-16v14m1-13v14m1-16v16m1-16v17m1-17v16m1-15v16m1-16v16m1-15v14m1-16v18m1-18v17m1-16v15m1-15v16m1-16v16m1-16v16m1-16v14m1-16v18m1-17v17m1-18v18m1-16v17m1-18v16m1-16v15m1-15v16m1-15v16m1-17v17m1-16v16m1-16v15m1-16v17m1-17v17m1-17v17m1-17v17m1-18v19m1-17v15m1-16v16m1-15v16m1-17v16m1-15v15m1-16v18m1-16v14m1-15v14m1-14v17m1-17v16m1-17v15m1-14v16m1-15v14m1-15v16m1-16v15m1-15v15m1-14v16m1-18v17m1-17v17m1-16v15m1-17v18m1-16v16m1-15v14m1-15v16m1-18v18m1-16v16m1-18v18m1-16v15m1-15v15m1-16v18m1-17v16m1-16v15m1-15v16m1-16v16m1-16v15m1-15v16m1-16v15m1-16v16m1-15v16m1-16v16m1-17v16m1-15v17m1-17v15m1-15v15m1-15v17m1-17v16m1-17v17m1-17v16m1-16v16m1-15v16m1-18v18m1-17v17m1-17v17m1-16v15m1-16v18m1-17v15m1-16v16m1-16v17m1-17v17m1-17v16m1-15v15m1-16v16m1-16v18m1-17v14m1-15v16m1-16v17m1-16v16m1-17v17m1-16v15m1-15v16m1-16v16m1-16v17m1-18v17m1-17v16m1-16v16m1-16v17m1-17v16m1-16v16m1-16v16m1-15v15m1-15v15m1-15v16m1-17v16m1-15v15m1-16v16m1-15v15m1-15v16m1-15v14m1-16v17m1-16v14m1-14v15m1-16v17m1-17v16m1-15v15m1-16v17m1-16v15m1-16v17m1-18v18m1-16v17m1-17v15m1-16v17m1-17v18m1-18v16m1-14v15m1-16v15m1-16v16m1-15v16m1-18v17m1-17v18m1-16v15m1-16v17m1-17v17m1-17v17m1-18v19m1-18v16m1-15v15m1-16v16m1-17v17m1-17v18m1-17v17m1-16v15m1-16v16m1-15v16m1-18v17m1-16v17m1-17v16m1-16v16m1-16v17m1-16v15m1-15v16m1-16v14m1-15v16m1-16v16m1-16v17m1-16v16m1-16v14m1-14v16m1-17v16m1-15v16m1-18v18m1-17v17m1-17v16m1-15v15m1-16v16m1-16v16m1-15v15m1-15v15m1-15v15m1-15v15m1-15v15m1-15v16m1-16v15m1-17v17m1-16v18m1-18v17m1-16v15m1-15v16m1-16v15m1-15v16m1-17v17m1-16v16m1-17v17m1-15v14m1-16v17m1-17v16m1-16v17m1-16v15m1-16v16m1-15v15m1-16v17m1-17v17m1-18v19m1-16v14m1-15v15m1-16v17m1-17v16m1-15v15m1-16v16m1-15v15m1-16v17m1-17v17m1-16v16m1-16v17m1-17v16m1-17v17m1-17v17m1-17v16m1-16v17m1-16v15m1-15v17m1-18v17m1-16v16m1-17v18m1-18v16m1-15v15m1-16v17m1-16v15m1-16v17m1-16v15m1-15v16m1-17v17m1-17v17m1-16v15m1-16v16m1-16v17m1-16v15m1-16v17m1-15v14m1-15v15m1-15v16m1-16v16m1-17v17m1-16v15m1-16v17m1-16v16m1-17v16m1-15v16m1-16v14m1-15v17m1-16v15m1-17v19m1-18v17m1-15v14m1-17v18m1-18v19m1-18v17m1-16v15m1-16v16m1-15v15m1-15v16m1-17v17m1-16v15m1-15v15m1-15v17m1-17v16m1-16v15m1-15v15m1-16v16m1-16v17m1-17v16m1-16v18m1-18v16m1-17v16m1-16v18m1-17v16m1-16v15m1-16v17m1-16v15m1-16v17m1-17v17m1-16v14m1-14v14m1-15v15m1-15v15m1-15v16m1-17v16m1-15v16m1-16v15m1-16v16m1-16v16m1-17v17m1-16v15m1-16v17m1-17v16m1-16v16m1-15v15m1-16v17m1-16v16m1-17v15m1-15v15m1-15v17m1-17v15m1-16v17m1-17v17m1-17v16m1-16v17m1-18v17m1-16v16m1-16v15m1-15v15m1-15v15m1-15v16m1-16v15m1-16v17m1-17v16m1-17v16m1-15v17m1-17v16m1-16v17m1-18v16m1-15v16m1-17v16m1-16v16m1-16v16m1-16v16m1-16v16m1-17v17m1-15v15m1-16v15m1-16v16m1-16v16m1-16v16m1-16v17m1-16v15m1-16v16m1-15v14m1-15v15m1-15v15m1-16v17m1-16v15m1-16v17m1-17v17m1-16v16m1-17v17m1-16v16m1-17v17m1-18v18m1-16v16m1-16v14m1-15v18m1-17v17m1-17v16m1-18v17m1-16v17m1-16v16m1-15v15m1-15v15m1-16v16m1-16v15m1-15v16m1-16v17m1-17v16m1-17v18m1-16v15m1-16v15m1-15v16m1-16v17m1-17v15m1-15v16m1-16v16m1-15v15m1-16v16m1-17v17m1-16v16m1-16v17m1-16v16m1-18v17m1-16v17m1-17v16m1-16v16m1-15v15m1-16v17m1-16v15m1-16v18m1-17v16m1-18v19m1-18v17m1-16v14m1-14v15m1-15v15m1-15v16m1-16v16m1-17v16m1-16v17m1-16v15m1-17v18m1-16v14m1-14v15m1-15v16m1-17v17m1-17v17m1-16v16m1-17v16m1-16v16m1-15v16m1-16v16m1-17v18m1-18v18m1-17v17m1-18v18m1-17v15m1-16v17m1-18v18m1-15v15m1-17v17m1-16v15m1-14v15m1-17v16m1-15v15m1-14v15m1-16v16m1-15v15m1-16v15m1-14v15m1-17v16m1-15v17m1-17v16m1-16v16m1-16v16m1-15v15m1-16v16m1-15v15m1-16v16m1-17v17m1-16v15m1-15v16m1-17v17m1-15v15m1-16v16m1-16v17m1-18v18m1-17v16m1-16v17m1-17v16m1-16v16m1-15v14m1-16v18m1-16v16m1-17v17m1-16v14m1-14v15m1-15v15m1-16v17m1-18v18m1-15v14m1-15v15m1-15v15m1-15v14m1-14v15m1-17v18m1-17v16m1-14v13m1-13v14m1-15v15m1-15v16m1-16v15m1-15v16m1-16v15m1-16v17m1-17v16m1-16v18m1-17v16m1-16v16m1-17v16m1-15v14m1-15v16m1-14v14m1-14v15m1-16v15m1-16v17m1-16v17m1-17v17m1-17v17m1-16v15m1-16v15m1-15v15m1-15v16m1-15v15m1-16v15m1-16v17m1-16v15m1-15v16m1-16v16m1-16v17m1-18v17m1-16v16m1-16v16m1-16v15m1-16v17m1-16v16m1-16v15m1-15v17m1-17v16m1-16v17m1-16v15m1-16v16m1-15v14m1-16v17m1-17v17m1-16v15m1-15v16m1-17v17m1-17v18m1-16v15m1-17v18m1-18v17m1-15v14m1-14v14m1-14v15m1-17v17m1-16v16m1-15v15m1-17v17m1-15v16m1-17v16m1-16v17m1-17v17m1-17v16m1-16v16m1-15v14m1-14v15m1-16v17m1-17v15m1-15v16m1-18v18m1-16v16m1-15v16m1-17v15m1-15v17m1-17v17m1-16v16m1-17v16m1-15v17m1-17v15m1-16v17m1-17v17m1-17v16m1-16v16m1-14v14m1-16v15m1-14v14m1-16v17m1-17v18m1-17v15m1-14v15m1-17v18m1-16v14m1-14v16m1-17v17m1-17v16m1-15v15m1-17v18m1-17v17m1-16v16m1-16v16m1-17v17m1-16v16m1-16v16m1-16v16m1-16v16m1-17v16m1-15v15m1-16v16m1-16v17m1-16v16m1-17v16m1-15v16m1-16v16m1-17v16m1-15v15m1-17v17m1-16v17m1-17v16m1-15v15m1-16v17m1-16v16m1-16v15m1-17v18m1-16v16m1-17v17m1-16v15m1-16v17m1-16v16m1-17v17m1-15v15m1-16v16m1-16v16m1-16v16m1-15v15m1-15v15m1-16v16m1-18v20m1-18v15m1-14v14m1-15v16m1-17v17m1-17v17m1-15v14m1-13v13m1-15v16m1-16v15m1-16v17m1-15v13m1-14v16m1-16v16m1-16v16m1-16v16m1-17v16m1-14v14m1-16v18m1-17v16m1-15v15m1-18v19m1-15v14m1-17v18m1-18v17m1-16v15m1-15v15m1-14v16m1-16v14m1-14v15m1-16v15m1-15v17m1-17v15m1-16v18m1-16v15m1-16v16m1-16v15m1-15v17m1-17v17m1-18v18m1-17v17m1-18v16m1-15v16m1-17v17m1-15v15m1-15v14m1-15v16m1-16v17m1-17v16m1-15v14m1-14v15m1-16v15m1-15v15m1-14v15m1-15v15m1-16v17m1-16v15m1-16v17m1-17v16m1-16v16m1-16v17m1-17v17m1-17v17m1-16v15m1-16v16m1-17v16m1-15v16m1-15v14m1-14v14m1-16v17m1-16v15m1-14v15m1-16v16m1-17v17m1-17v18m1-15v14m1-15v15m1-16v16m1-15v16m1-18v17m1-17v18m1-17v15m1-15v17m1-17v16m1-15v16m1-16v15m1-15v16m1-18v17m1-16v16m1-15v16m1-15v13m1-14v14m1-15v15m1-13v15m1-15v14m1-15v14m1-14v15m1-17v17m1-17v18m1-17v15m1-16v16m1-14v16m1-16v16m1-16v15m1-16v17m1-17v17m1-16v15m1-16v16m1-15v16m1-17v17m1-16v16m1-18v17m1-16v17m1-17v16m1-16v15m1-14v15m1-14v15m1-16v15m1-16v16m1-17v18m1-17v17m1-17v16m1-15v15m1-16v17m1-16v14m1-14v16m1-16v15m1-16v16m1-15v16m1-17v18m1-16v13m1-14v15m1-15v14m1-15v17m1-17v17m1-17v16m1-16v16m1-15v14m1-13v14m1-16v16m1-14v15m1-16v14m1-14v16m1-17v17m1-17v16m1-15v16m1-16v16m1-16v16m1-16v15m1-15v15m1-16v18m1-18v16m1-15v16m1-17v16m1-15v15m1-15v16m1-16v15m1-16v16m1-15v16m1-18v17m1-15v15m1-17v17m1-16v16m1-16v18m1-17v16m1-17v17m1-17v16m1-15v15m1-15v15m1-15v16m1-16v14m1-16v18m1-17v17m1-16v14m1-16v18m1-17v18m1-17v16m1-17v16m1-16v17m1-17v18m1-17v15m1-17v18m1-18v17m1-16v17m1-17v17m1-17v15m1-16v17m1-16v16m1-15v16m1-16v15m1-15v17m1-18v17m1-17v17m1-16v16m1-15v14m1-15v17m1-17v15m1-15v17m1-17v17m1-17v16m1-16v16m1-16v15m1-14v15m1-16v16m1-15v15m1-17v18m1-18v17m1-17v17m1-16v15m1-15v16m1-18v19m1-17v16m1-17v16m1-14v15m1-17v16m1-15v16m1-17v16m1-15v17m1-17v17m1-16v14m1-15v16m1-16v14m1-15v17m1-17v17m1-16v17m1-17v16m1-18v19"/><path stroke="#8e008e" d="M22 597v13m1-12v12m1-12v12m1-13v13m1-13v12m1-12v12m1-12v12m1-13v14m1-13v12m1-10v11m1-14v14m1-13v13m1-13v13m1-13v13m1-13v13m1-13v13m1-12v13m1-13v13m1-14v13m1-12v12m1-14v14m1-13v13m1-13v13m1-12v13m1-14v14m1-14v13m1-11v11m1-13v13m1-14v13m1-11v12m1-12v11m1-13v13m1-12v12m1-12v13m1-12v12m1-13v13m1-14v15m1-14v12m1-12v13m1-13v14m1-14v13m1-13v12m1-12v13m1-13v12m1-11v13m1-14v13m1-14v14m1-13v14m1-14v12m1-12v14m1-13v12m1-13v13m1-13v13m1-13v13m1-13v12m1-13v14m1-13v12m1-13v14m1-14v14m1-12v11m1-12v13m1-13v12m1-13v14m1-12v12m1-13v12m1-12v13m1-13v12m1-12v13m1-13v13m1-14v14m1-13v13m1-13v13m1-14v13m1-12v13m1-13v13m1-14v15m1-14v13m1-12v13m1-14v13m1-13v13m1-12v11m1-12v13m1-12v12m1-13v13m1-13v12m1-12v13m1-12v12m1-13v12m1-12v13m1-12v11m1-11v11m1-11v11m1-11v11m1-12v13m1-12v12m1-13v11m1-10v12m1-13v13m1-14v14m1-12v11m1-12v13m1-13v12m1-11v12m1-13v12m1-12v13m1-13v13m1-14v13m1-13v14m1-12v12m1-14v13m1-12v14m1-14v13m1-13v13m1-12v13m1-14v13m1-12v11m1-12v12m1-12v13m1-13v12m1-12v13m1-12v12m1-13v13m1-13v12m1-12v14m1-14v13m1-14v13m1-13v14m1-13v11m1-11v13m1-12v13m1-13v12m1-13v12m1-11v12m1-13v12m1-12v12m1-12v12m1-12v13m1-13v12m1-12v13m1-13v12m1-12v14m1-14v13m1-13v12m1-13v14m1-13v13m1-13v13m1-12v12m1-13v13m1-13v13m1-13v13m1-13v13m1-14v13m1-13v14m1-13v13m1-13v12m1-11v12m1-13v13m1-13v13m1-13v13m1-11v11m1-13v13m1-14v14m1-13v12m1-11v12m1-12v12m1-14v13m1-12v14m1-14v12m1-13v15m1-15v14m1-12v11m1-12v13m1-13v13m1-12v12m1-14v14m1-12v11m1-11v11m1-11v12m1-13v14m1-14v13m1-13v12m1-12v12m1-11v12m1-13v14m1-14v12m1-12v13m1-14v15m1-14v13m1-12v12m1-13v12m1-12v12m1-11v12m1-12v13m1-14v13m1-13v13m1-12v11m1-13v14m1-14v13m1-12v14m1-14v13m1-14v14m1-13v12m1-11v12m1-12v11m1-11v12m1-13v12m1-12v14m1-14v13m1-13v12m1-11v12m1-12v12m1-13v13m1-12v12m1-11v12m1-14v13m1-12v11m1-12v14m1-13v12m1-14v13m1-12v12m1-11v12m1-14v14m1-12v12m1-12v11m1-12v13m1-13v13m1-14v13m1-13v14m1-12v12m1-12v11m1-12v14m1-14v13m1-12v11m1-12v13m1-13v13m1-13v13m1-14v14m1-11v11m1-13v12m1-11v12m1-12v12m1-13v12m1-12v13m1-12v12m1-13v13m1-13v13m1-12v11m1-13v14m1-14v15m1-13v12m1-12v12m1-14v15m1-14v13m1-12v12m1-12v11m1-13v14m1-13v13m1-13v12m1-12v13m1-13v14m1-14v13m1-12v12m1-12v12m1-13v14m1-14v12m1-11v12m1-13v12m1-11v13m1-14v13m1-12v12m1-13v13m1-12v12m1-12v12m1-13v14m1-14v13m1-13v12m1-12v13m1-14v14m1-14v14m1-12v13m1-14v12m1-12v12m1-11v11m1-11v12m1-12v11m1-13v13m1-11v11m1-11v12m1-12v11m1-11v11m1-11v11m1-11v11m1-13v14m1-13v13m1-13v12m1-12v13m1-13v11m1-11v12m1-12v14m1-14v13m1-13v13m1-13v13m1-13v13m1-13v12m1-12v12m1-12v13m1-12v12m1-11v11m1-13v13m1-13v13m1-13v13m1-13v13m1-13v13m1-13v14m1-14v13m1-12v12m1-12v11m1-12v13m1-14v14m1-14v14m1-13v13m1-12v11m1-12v12m1-12v14m1-14v12m1-12v14m1-14v13m1-14v14m1-14v14m1-13v13m1-12v12m1-11v10m1-11v12m1-13v12m1-11v12m1-13v13m1-12v11m1-12v13m1-14v15m1-13v12m1-13v14m1-15v14m1-12v12m1-13v13m1-13v12m1-13v14m1-12v12m1-12v12m1-13v13m1-12v11m1-12v13m1-13v13m1-12v12m1-14v15m1-15v14m1-13v12m1-12v13m1-12v11m1-12v13m1-12v11m1-12v14m1-14v13m1-12v12m1-11v11m1-13v13m1-13v12m1-12v13m1-13v13m1-13v13m1-13v13m1-14v13m1-12v14m1-14v14m1-13v11m1-11v12m1-12v13m1-13v11m1-12v13m1-13v12m1-12v13m1-13v13m1-13v12m1-12v13m1-13v14m1-15v15m1-15v13m1-12v14m1-13v11m1-11v13m1-14v13m1-12v12m1-13v13m1-13v12m1-13v14m1-13v13m1-13v13m1-13v13m1-12v12m1-13v13m1-13v13m1-13v13m1-14v15m1-14v13m1-12v11m1-12v13m1-13v13m1-13v13m1-13v14m1-12v10m1-11v12m1-13v12m1-12v14m1-14v13m1-13v12m1-12v13m1-12v14m1-15v12m1-12v13m1-13v12m1-12v13m1-13v13m1-14v14m1-13v14m1-12v11m1-13v13m1-14v15m1-13v12m1-13v12m1-12v13m1-12v12m1-12v12m1-13v13m1-13v13m1-12v11m1-12v14m1-14v13m1-14v14m1-12v12m1-14v15m1-14v13m1-14v14m1-13v13m1-14v14m1-14v12m1-11v13m1-13v11m1-12v13m1-13v13m1-12v11m1-12v12m1-13v14m1-14v14m1-13v12m1-12v12m1-12v11m1-10v12m1-13v12m1-12v12m1-13v12m1-13v13m1-12v12m1-13v13m1-13v12m1-12v14m1-14v12m1-12v13m1-13v12m1-13v13m1-12v13m1-13v11m1-12v13m1-12v12m1-11v10m1-13v13m1-13v14m1-13v12m1-12v13m1-14v13m1-12v12m1-13v13m1-12v12m1-12v11m1-12v14m1-14v12m1-13v14m1-13v12m1-13v14m1-13v12m1-12v12m1-12v14m1-15v12m1-12v13m1-13v12m1-11v12m1-13v13m1-13v12m1-12v13m1-14v13m1-12v12m1-13v14m1-14v13m1-13v14m1-14v13m1-13v12m1-12v12m1-12v12m1-12v12m1-11v10m1-12v13m1-13v12m1-12v12m1-12v14m1-14v13m1-13v13m1-13v13m1-12v12m1-13v12m1-13v14m1-13v14m1-13v11m1-12v14m1-13v12m1-11v11m1-13v14m1-14v13m1-11v11m1-12v12m1-11v12m1-13v12m1-13v13m1-13v13m1-12v12m1-12v13m1-14v14m1-12v11m1-12v12m1-11v12m1-14v13m1-12v11m1-11v13m1-13v12m1-11v11m1-12v13m1-14v13m1-13v13m1-12v13m1-13v13m1-14v13m1-12v12m1-12v13m1-12v12m1-12v12m1-13v13m1-12v12m1-13v13m1-13v12m1-13v14m1-14v14m1-12v12m1-13v13m1-12v12m1-12v12m1-12v12m1-12v12m1-14v14m1-13v13m1-14v15m1-13v11m1-11v11m1-12v13m1-13v14m1-14v13m1-13v12m1-12v12m1-12v13m1-13v12m1-11v12m1-13v13m1-13v14m1-14v14m1-14v14m1-12v10m1-12v14m1-14v14m1-14v12m1-11v12m1-12v12m1-12v13m1-14v14m1-14v13m1-13v13m1-13v13m1-12v12m1-12v11m1-11v13m1-15v14m1-13v14m1-13v12m1-12v13m1-13v12m1-12v12m1-13v14m1-13v12m1-13v14m1-14v14m1-13v12m1-13v13m1-12v12m1-11v11m1-12v12m1-13v14m1-13v13m1-13v12m1-12v12m1-11v12m1-13v14m1-13v10m1-12v14m1-12v12m1-13v14m1-13v11m1-12v13m1-12v12m1-13v13m1-14v15m1-13v11m1-12v13m1-13v14m1-13v10m1-12v14m1-14v15m1-14v13m1-12v11m1-10v10m1-12v13m1-14v14m1-12v12m1-13v13m1-13v13m1-13v13m1-13v13m1-13v15m1-14v13m1-13v12m1-13v13m1-12v12m1-13v12m1-12v13m1-12v12m1-12v12m1-12v11m1-11v13m1-14v13m1-13v13m1-12v12m1-13v12m1-11v11m1-12v13m1-11v10m1-11v12m1-13v13m1-12v12m1-12v12m1-13v13m1-13v13m1-13v13m1-13v14m1-13v12m1-13v14m1-14v13m1-12v12m1-12v12m1-13v13m1-13v13m1-13v14m1-13v12m1-13v13m1-12v12m1-13v13m1-13v13m1-12v12m1-12v13m1-14v14m1-13v12m1-12v12m1-12v13m1-14v13m1-12v12m1-12v12m1-12v13m1-13v13m1-14v14m1-12v11m1-13v13m1-12v13m1-15v15m1-13v13m1-13v12m1-12v12m1-13v14m1-12v11m1-12v12m1-13v13m1-12v13m1-13v12m1-13v13m1-12v13m1-13v13m1-13v12m1-12v13m1-13v13m1-13v12m1-12v12m1-12v13m1-13v13m1-13v13m1-14v14m1-14v14m1-14v14m1-12v12m1-13v13m1-12v11m1-12v13m1-13v14m1-15v13m1-12v14m1-14v12m1-11v10m1-11v12m1-12v14m1-15v14m1-13v13m1-13v13m1-13v12m1-11v11m1-12v13m1-13v13m1-13v12m1-11v12m1-13v12m1-12v12m1-12v13m1-12v11m1-13v13m1-12v13m1-13v13m1-12v11m1-12v12m1-11v12m1-13v12m1-11v11m1-12v13m1-12v12m1-13v12m1-12v12m1-11v12m1-12v12m1-12v13m1-15v13m1-12v13m1-13v13m1-12v12m1-12v12m1-12v12m1-14v14m1-12v12m1-13v14m1-13v13m1-14v12m1-10v10m1-11v12m1-13v13m1-15v17m1-14v13m1-13v11m1-12v13m1-12v13m1-13v12m1-11v10m1-10v11m1-12v13m1-12v11m1-13v13m1-13v12m1-11v13m1-14v14m1-14v13m1-12v12m1-14v14m1-12v11m1-12v14m1-13v13m1-13v12m1-14v15m1-12v12m1-15v15m1-14v14m1-14v12m1-11v12m1-11v11m1-13v13m1-12v13m1-13v12m1-12v12m1-11v11m1-12v13m1-13v12m1-13v13m1-12v13m1-13v12m1-12v13m1-13v12m1-14v15m1-14v13m1-12v12m1-12v13m1-13v12m1-12v12m1-12v12m1-12v12m1-12v13m1-13v12m1-12v12m1-11v10m1-10v11m1-12v13m1-13v13m1-12v13m1-14v12m1-13v13m1-12v13m1-14v14m1-13v12m1-12v12m1-13v13m1-12v12m1-12v12m1-12v13m1-13v12m1-12v12m1-12v11m1-12v13m1-12v11m1-11v12m1-12v12m1-13v13m1-12v14m1-13v10m1-11v11m1-11v13m1-12v11m1-12v12m1-13v13m1-12v12m1-13v13m1-12v12m1-11v12m1-13v12m1-12v12m1-12v12m1-12v12m1-13v14m1-12v11m1-12v12m1-11v11m1-12v12m1-10v10m1-12v12m1-12v13m1-14v14m1-14v14m1-14v13m1-12v12m1-12v13m1-13v13m1-13v13m1-13v13m1-13v13m1-13v13m1-13v13m1-13v13m1-12v11m1-12v12m1-13v14m1-13v14m1-14v13m1-13v12m1-13v13m1-11v12m1-13v13m1-13v13m1-14v14m1-14v14m1-12v12m1-14v13m1-12v13m1-13v11m1-12v14m1-12v11m1-12v13m1-12v12m1-14v14m1-12v11m1-13v15m1-14v12m1-12v13m1-14v14m1-13v12m1-12v13m1-13v13m1-12v11m1-11v11m1-11v12m1-13v12m1-12v12m1-12v13m1-13v12m1-12v13m1-13v13m1-12v11m1-12v13m1-13v13m1-12v13m1-15v14m1-12v12m1-12v12m1-13v13m1-13v12m1-11v11m1-12v12m1-12v12m1-12v13m1-13v12m1-13v13m1-12v13m1-13v13m1-13v13m1-13v12m1-11v12m1-13v13m1-13v12m1-11v12m1-12v11m1-13v14m1-13v14m1-14v12m1-12v13m1-13v14m1-14v14m1-14v13m1-12v12m1-13v13m1-12v11m1-13v14m1-13v13m1-12v12m1-13v13m1-13v12m1-12v12m1-11v12m1-13v13m1-13v12m1-12v14m1-15v14m1-13v13m1-13v14m1-13v12m1-13v14m1-14v13m1-13v13m1-12v12m1-13v13m1-13v13m1-12v12m1-11v11m1-13v13m1-13v14m1-13v12m1-13v13m1-12v13m1-13v12m1-13v13m1-12v13m1-12v11m1-12v12m1-12v13m1-14v13m1-13v12m1-13v14m1-12v13m1-14v13m1-11v11m1-12v11m1-11v12m1-12v13m1-15v15m1-14v14m1-13v12m1-13v14"/><path stroke="#c200c2" d="M22 599v9m1-10v11m1-10v10m1-11v11m1-11v11m1-12v11m1-9v9m2-10v10m1-8v9m1-12v11m1-10v11m1-11v11m2-11v11m1-10v9m1-9v11m1-11v10m1-11v11m1-11v11m1-12v12m1-11v10m1-10v10m1-10v11m1-11v12m1-13v11m1-9v10m1-11v11m1-11v10m1-9v11m1-11v10m1-12v12m1-10v10m1-10v10m1-11v11m1-10v10m1-11v11m1-12v12m1-10v9m1-10v11m1-11v11m1-10v9m1-10v11m1-12v11m1-9v10m1-10v10m1-11v11m1-11v11m1-11v11m1-10v10m1-10v10m1-11v11m1-11v11m1-11v10m1-10v10m1-10v12m2-13v12m1-12v13m1-11v10m1-11v12m1-12v11m1-11v11m1-10v9m1-9v9m1-9v10m1-10v10m1-11v11m1-11v11m1-11v11m1-11v11m1-11v11m1-10v9m1-10v11m1-11v11m1-11v11m1-11v12m1-11v11m1-11v11m1-12v10m1-9v9m1-11v12m2-11v11m1-11v11m2-11v12m1-12v11m1-11v11m2-10v10m1-10v10m1-11v10m1-10v11m1-11v10m1-10v10m1-10v11m1-10v9m1-10v11m2-11v11m1-11v9m1-9v12m2-12v11m1-12v12m1-11v11m1-11v11m1-10v10m1-12v12m2-11v11m1-11v10m1-10v11m1-11v12m1-11v10m1-11v10m1-11v12m1-11v11m1-12v12m1-10v10m1-10v10m1-11v10m1-10v12m1-12v11m1-11v11m1-11v10m1-10v10m1-9v10m1-10v11m1-12v10m1-10v11m1-11v10m1-9v9m1-10v10m1-11v11m1-10v10m1-9v10m1-11v10m1-10v10m1-10v12m1-12v11m1-11v10m1-10v10m1-10v11m2-10v10m1-11v11m1-11v11m1-11v11m2-11v10m1-11v12m1-11v12m1-13v13m1-11v9m1-9v10m1-11v11m1-11v11m1-10v10m1-11v12m1-13v12m1-11v10m1-10v11m1-11v11m1-11v10m1-10v11m1-11v11m1-12v12m3-10v10m1-11v10m1-10v11m1-11v11m1-10v9m1-9v9m1-9v9m1-9v11m1-12v11m1-11v11m1-10v10m1-10v9m1-9v10m1-11v10m1-10v11m1-11v12m1-13v12m1-10v11m1-12v10m1-9v10m1-10v9m1-10v12m1-12v11m2-10v9m1-11v11m1-10v11m1-12v12m1-11v11m1-12v13m1-12v10m1-10v11m1-10v10m1-11v10m1-10v11m1-12v12m1-10v10m1-11v10m1-9v10m1-11v10m1-9v9m1-10v11m1-9v10m1-12v12m1-11v9m1-9v11m1-11v10m1-12v12m1-11v10m1-9v10m1-12v12m1-10v10m2-11v11m1-12v11m1-10v10m1-10v10m2-9v9m3-10v10m1-9v11m1-11v10m1-11v11m1-12v13m1-11v11m1-12v10m1-9v9m1-9v9m1-10v10m1-10v11m1-10v10m1-11v11m1-11v11m1-10v10m1-11v11m1-12v12m1-10v10m1-10v10m1-11v11m1-11v10m1-9v10m1-11v10m1-10v11m1-10v10m1-10v9m1-10v10m1-11v12m1-12v12m1-11v11m1-10v9m1-10v11m1-11v10m1-10v11m1-10v10m1-10v10m1-11v10m1-9v10m1-11v11m1-10v10m1-10v10m1-11v12m1-12v11m1-11v10m1-10v11m1-12v12m1-11v11m1-10v10m1-10v10m1-11v10m1-10v11m1-11v11m1-10v10m1-11v10m1-9v10m1-10v9m2-10v11m1-10v9m1-10v11m1-11v11m1-11v11m1-10v9m2-10v10m1-10v11m1-11v12m1-12v12m1-11v9m1-9v9m1-10v11m1-11v10m2-9v9m1-11v12m1-10v10m1-12v12m1-11v11m1-11v10m1-9v10m1-10v10m1-11v12m1-12v12m1-12v11m1-11v10m1-10v11m1-12v12m1-12v12m1-10v10m1-11v10m1-10v10m1-10v11m1-11v11m1-11v12m1-11v10m1-11v10m1-10v11m1-11v11m1-11v10m1-9v10m1-10v10m1-10v9m2-10v12m1-12v10m1-9v9m1-10v11m1-11v11m1-11v11m1-12v12m1-11v10m1-10v11m2-12v12m1-11v10m1-10v11m1-11v11m1-10v10m1-11v11m1-10v10m1-11v10m2-11v13m1-12v11m1-11v11m1-11v11m1-11v11m1-10v9m1-9v10m2-11v11m1-10v10m1-10v10m2-11v11m1-10v9m2-10v11m1-11v10m1-10v11m1-12v13m1-11v9m1-9v10m1-11v12m1-12v11m1-11v11m2-11v11m1-11v11m1-11v10m1-10v11m1-11v12m1-13v12m1-12v12m1-10v10m1-10v10m1-10v10m1-11v10m1-9v11m1-12v11m1-10v9m1-10v11m1-11v10m2-10v12m1-11v10m1-11v11m1-11v10m2-11v12m1-11v10m1-9v10m1-11v11m1-11v11m1-11v11m1-11v11m1-10v10m1-10v10m1-11v11m1-11v12m1-12v11m1-11v10m1-9v11m1-11v10m1-10v10m1-11v10m1-10v10m2-10v10m2-10v11m1-11v10m1-10v11m1-12v13m1-12v11m1-11v10m1-10v11m1-11v11m1-10v10m1-11v11m1-11v10m1-9v9m1-9v11m1-12v11m1-12v12m1-10v10m1-11v11m1-11v11m1-11v11m1-11v12m1-13v12m1-12v11m1-11v11m1-9v9m1-11v11m1-11v11m1-10v9m1-11v12m1-12v11m1-10v10m1-10v10m1-11v10m1-9v10m2-11v11m1-11v11m1-12v11m1-10v11m1-10v9m1-11v11m1-11v10m1-10v11m1-11v11m2-10v9m1-10v10m1-11v12m1-11v10m1-11v10m1-9v10m1-10v9m1-10v11m1-11v11m1-11v11m1-11v10m1-11v11m1-11v10m1-10v11m1-10v9m1-10v11m2-11v10m1-10v11m1-11v10m1-11v11m1-10v10m1-10v11m1-11v12m1-13v11m1-11v11m1-11v11m1-11v10m2-11v11m1-11v12m1-13v11m1-9v10m2-11v10m2-10v10m1-10v11m1-11v10m1-10v11m1-11v10m1-10v10m1-10v10m1-11v10m1-9v9m1-10v12m1-12v10m1-9v11m1-12v11m1-10v11m1-12v10m1-11v12m1-11v11m1-10v10m1-11v11m1-10v10m1-10v10m2-10v10m1-9v8m1-9v10m1-10v10m1-10v10m1-11v11m1-11v11m1-10v10m1-11v12m1-12v12m1-10v10m1-11v9m1-9v11m1-12v11m1-11v10m1-9v10m2-10v11m1-11v11m2-12v11m1-10v11m1-11v11m1-12v11m1-9v10m1-11v10m1-9v10m1-10v10m2-10v10m1-12v12m1-11v11m1-12v13m1-12v11m1-11v10m2-10v11m1-11v10m2-10v10m1-11v12m2-12v12m1-10v10m1-11v10m1-10v11m1-10v10m1-10v9m1-10v11m1-11v11m1-11v10m1-9v10m1-9v9m1-10v11m1-12v12m2-12v11m1-10v10m1-11v12m1-11v11m2-11v11m3-13v12m1-10v10m1-11v11m1-10v10m1-10v10m1-11v10m1-10v11m1-12v12m1-11v11m1-11v11m1-10v10m1-10v10m1-10v10m1-10v11m2-12v12m1-12v12m1-11v10m2-11v12m2-11v10m1-10v10m1-10v12m1-12v10m1-10v10m1-10v10m1-10v11m1-10v9m1-11v12m1-10v11m1-12v11m1-10v9m1-10v11m1-11v11m1-11v10m1-10v11m3-11v12m1-12v9m1-9v11m1-11v11m1-11v12m1-12v10m1-9v9m1-10v11m1-11v11m1-11v11m1-10v10m1-10v9m2-11v11m1-10v12m2-12v11m1-10v10m1-10v10m1-11v10m1-10v10m1-9v11m1-11v10m1-11v10m1-9v10m1-11v11m1-11v11m1-10v11m1-12v11m1-10v10m1-11v11m1-10v10m1-10v10m1-11v11m1-11v11m1-11v11m1-11v12m1-12v11m1-10v10m1-11v12m1-11v9m1-10v11m1-11v11m1-10v11m1-11v9m1-9v10m1-11v11m1-10v11m1-11v10m1-11v11m1-10v10m1-11v11m1-11v11m1-10v10m1-10v11m1-12v11m2-10v10m1-10v10m1-10v10m1-10v9m2-8v8m1-10v12m1-11v11m1-11v10m1-11v12m2-12v12m1-11v10m1-10v10m1-10v10m1-10v11m2-10v9m1-10v11m1-11v10m1-10v10m1-12v13m1-10v9m1-9v9m1-10v9m1-9v11m1-11v11m1-11v10m1-9v9m1-10v12m2-12v11m1-11v11m1-12v12m1-12v12m1-10v10m1-12v11m1-9v9m1-10v11m1-12v13m1-12v11m1-11v11m2-11v10m1-10v11m1-11v11m1-11v10m1-10v10m1-10v11m1-11v11m1-10v9m1-9v10m1-11v11m1-11v11m1-10v10m1-11v11m1-11v11m1-10v9m1-10v10m1-9v10m1-11v12m1-11v10m1-11v11m1-10v10m1-11v10m1-10v10m1-9v10m1-11v11m1-10v10m2-11v10m1-10v11m1-11v10m1-9v10m1-12v12m1-11v11m1-10v9m1-9v10m2-11v12m2-11v9m1-10v11m2-11v11m1-9v8m1-9v10m2-12v13m2-12v10m2-9v10m1-10v10m1-10v10m1-9v10m1-11v10m2-10v10m1-11v10m1-9v11m1-11v10m1-11v11m1-11v11m1-11v11m1-10v10m1-11v12m1-12v11m1-10v9m1-11v12m3-10v10m1-10v10m1-10v11m1-10v10m1-12v10m1-8v9m1-11v11m1-10v10m1-9v9m2-10v10m1-10v10m1-10v11m1-12v11m1-10v10m1-10v10m1-11v12m1-12v11m1-10v11m1-11v10m1-10v10m1-10v10m1-10v10m1-10v10m1-10v10m1-10v10m1-9v10m3-11v10m1-10v11m1-11v11m1-11v9m1-10v12m1-11v10m1-10v11m1-11v10m1-10v10m1-10v11m1-11v11m1-11v10m1-9v9m1-10v10m1-10v10m1-10v10m1-11v11m1-10v10m1-10v10m2-12v12m1-11v12m1-10v9m1-10v10m1-10v10m1-10v11m1-11v10m1-10v11m1-11v10m1-10v11m1-10v10m1-11v12m1-12v11m1-11v11m1-11v11m1-10v10m1-11v10m1-9v9m2-10v10m2-9v9m1-10v10m1-10v12m1-12v11m2-12v12m2-10v10m1-10v10m1-10v9m1-10v12m1-12v11m1-10v9m1-10v11m1-11v11m1-11v10m1-9v10m1-11v10m1-9v10m1-11v10m1-9v10m1-11v11m1-10v10m1-11v11m1-10v9m1-11v13m1-12v12m1-12v11m1-11v11m1-11v10m1-9v9m1-11v13m1-12v10m1-10v11m1-10v10m1-11v11m1-10v10m1-11v11m1-10v9m1-11v13m1-12v12m1-12v11m1-11v10m1-9v10m2-10v9m1-10v11m1-12v11m1-10v10m1-10v10m1-10v10m1-9v10m1-10v11m1-11v9m1-10v11m1-10v9m1-9v10m2-11v11m1-10v10m1-10v9m3-10v10m1-9v9m1-11v12m1-10v9m2-9v10m1-10v10m1-11v12m1-12v11m1-11v11m1-11v10m1-9v10m2-11v10m1-10v12m1-12v12m1-12v9m1-9v10m1-10v11m3-10v11m1-12v12m1-11v9m1-11v12m1-12v11m1-9v10m1-11v10m1-9v9m1-10v10m2-10v10m1-9v9m1-9v10m1-11v11m1-11v12m1-12v12m1-11v10m2-10v9m1-11v13m1-11v10m1-10v11m1-12v11m1-9v9m1-9v9m1-11v11m1-10v10m1-10v10m1-10v10m1-11v11m1-11v10m1-10v11m1-11v12m1-11v9m1-10v10m1-9v10m1-10v9m1-10v11m1-10v9m1-9v10m1-11v11m1-10v10m1-11v11m1-11v10m1-9v10m2-11v12m1-12v11m1-11v12"/><path stroke="#e900e9" d="M22 600v8m1-9v9m1-8v8m1-8v8m1-8v7m1-8v8m1-8v9m1-10v10m1-9v8m3-7v8m2-8v6m1-7v7m1-6v8m1-7v8m2-10v8m1-8v9m1-10v8m1-7v9m1-7v7m1-9v9m1-9v10m1-11v10m1-8v8m2-7v6m1-5v7m1-9v5m1-6v8m1-6v7m1-9v9m1-8v6m1-8v10m1-9v9m1-9v9m2-9v9m1-10v10m1-9v9m1-9v9m2-8v6m1-5v5m1-7v8m1-8v10m1-11v9m2-6v7m2-7v6m1-8v9m3-8v7m1-8v10m1-10v7m1-7v8m2-8v9m1-9v9m1-8v7m1-6v5m2-7v9m1-8v8m1-7v6m2-8v9m1-9v9m1-9v7m1-5v4m1-6v9m1-10v10m1-9v10m1-10v10m1-10v9m1-10v8m1-7v8m1-7v6m1-7v9m2-7v6m1-8v8m1-9v10m1-9v9m1-9v9m1-9v9m1-9v9m2-9v9m1-8v9m1-10v9m1-9v8m1-7v8m1-9v8m1-7v6m1-6v7m1-7v8m1-9v8m2-9v10m1-10v8m1-8v10m1-9v8m1-8v7m1-6v8m1-9v8m1-7v8m1-9v8m1-6v5m1-5v7m2-8v8m1-8v8m2-9v9m1-10v10m1-6v6m1-7v7m1-9v9m1-9v9m1-7v6m1-8v9m1-9v9m2-7v5m1-5v8m1-10v9m3-8v8m2-9v8m1-9v10m1-8v8m1-9v7m1-7v8m3-6v5m1-8v10m1-9v8m1-8v8m1-8v9m1-9v9m1-9v9m1-9v8m1-6v5m1-7v9m1-10v9m1-8v8m1-7v6m1-7v7m3-8v10m1-8v8m3-8v8m2-8v8m2-7v7m1-7v7m2-9v8m2-7v8m2-9v8m1-8v9m1-6v4m1-7v9m1-9v8m2-8v9m1-8v6m2-6v6m3-7v10m1-11v11m1-10v8m1-8v9m2-9v8m1-7v8m1-8v9m1-10v9m1-9v9m1-9v9m1-7v6m1-7v8m1-9v10m1-10v8m3-7v8m1-8v8m1-9v8m1-8v9m1-9v10m1-9v9m1-9v7m1-7v9m1-10v7m1-7v8m1-7v9m1-8v8m2-10v7m1-7v9m1-8v8m1-10v10m1-9v9m1-9v9m1-9v7m1-7v7m1-7v8m3-6v7m1-10v10m1-8v7m1-7v8m2-8v8m1-9v7m1-7v9m1-9v10m1-10v9m1-10v9m2-8v8m1-8v9m1-8v8m1-9v7m2-6v8m2-9v9m2-9v9m1-10v10m1-8v8m1-8v8m2-9v9m1-8v9m1-10v9m1-10v8m2-5v7m1-9v6m3-6v9m1-9v8m1-9v11m1-9v8m1-9v9m1-8v8m1-9v10m2-7v6m1-8v7m1-8v9m1-8v9m1-10v9m1-8v8m1-8v6m1-8v10m1-9v9m1-8v7m1-7v8m1-9v9m1-10v10m1-8v8m1-8v8m2-7v5m1-7v7m2-7v8m2-7v7m3-8v9m2-10v9m1-8v8m2-8v10m1-10v9m1-7v6m1-8v9m1-9v10m3-10v8m1-6v6m1-7v8m3-9v9m2-9v9m1-9v10m1-10v9m1-9v9m2-9v10m1-10v8m1-8v9m2-9v8m1-9v10m1-9v9m3-7v6m1-7v7m1-8v9m1-9v9m1-6v5m1-6v7m1-9v8m1-8v8m2-9v10m1-9v7m1-6v7m1-8v9m2-9v8m1-8v9m4-8v8m1-8v8m1-9v10m1-9v6m2-6v8m1-9v9m1-7v7m1-8v6m1-8v11m1-10v9m2-8v6m1-7v9m2-9v9m2-9v9m1-6v5m1-8v8m1-8v8m1-8v10m1-9v6m2-5v5m1-7v9m1-8v8m1-10v8m1-7v8m1-7v6m1-7v10m1-10v7m2-8v10m1-7v7m1-9v9m1-9v8m1-8v9m1-8v7m1-7v7m2-8v10m1-9v7m1-8v9m1-7v6m2-8v9m1-8v8m1-8v8m5-9v10m1-10v8m1-8v9m1-8v7m1-8v9m1-9v8m1-8v9m1-9v9m1-8v6m1-8v10m2-9v8m1-8v8m1-8v10m1-10v9m1-9v8m1-7v9m1-9v9m1-10v9m2-7v5m1-6v8m1-9v8m1-9v10m1-8v8m1-8v6m1-7v9m1-9v10m1-10v9m1-10v10m1-7v6m1-8v9m1-7v7m1-8v7m1-7v7m1-6v7m1-9v9m1-9v9m1-9v9m1-9v8m1-8v9m1-9v9m1-9v8m1-7v7m1-8v9m2-10v9m1-9v8m1-6v5m1-7v7m1-6v7m1-8v9m1-9v8m1-9v9m1-8v8m2-9v9m1-8v8m1-7v7m1-9v9m1-10v9m1-8v9m1-9v8m1-9v9m1-8v8m1-7v5m1-7v9m1-9v9m1-9v8m2-8v9m1-10v9m1-9v8m1-8v8m1-7v7m1-9v10m1-9v9m2-9v9m1-9v8m2-8v8m1-8v6m1-7v9m1-10v10m1-10v10m1-9v9m1-9v8m6-7v6m1-9v10m1-9v9m1-7v5m1-8v9m2-10v10m1-7v6m1-7v7m1-8v8m1-6v6m1-8v9m1-9v9m2-6v3m1-6v8m1-9v9m1-9v9m1-9v9m2-9v9m3-9v9m1-9v10m1-10v8m2-7v9m1-10v9m2-9v10m1-9v7m1-7v7m1-8v9m2-8v7m1-7v8m1-6v4m1-5v5m2-6v8m2-8v9m2-10v8m2-6v7m1-9v6m1-5v9m1-10v9m1-7v7m2-7v5m1-7v9m1-8v9m1-8v8m1-10v10m2-10v9m1-7v8m1-7v6m1-8v7m1-6v7m2-7v8m1-9v10m1-10v9m1-9v8m1-8v8m1-8v9m1-9v9m1-9v8m1-8v8m1-9v10m1-8v8m1-9v8m2-8v8m1-5v6m1-9v9m2-9v9m1-9v9m1-9v9m1-8v7m1-5v6m1-8v7m1-6v7m2-7v7m1-7v5m1-6v7m2-8v8m1-7v7m1-8v9m1-8v6m1-7v9m1-6v6m1-8v8m2-8v8m1-8v8m1-9v10m1-9v8m1-8v9m1-9v8m1-8v9m1-7v5m3-5v5m1-8v10m2-8v7m1-9v9m4-8v9m1-10v10m2-9v8m2-9v10m1-9v7m1-7v8m1-8v10m1-10v9m1-6v3m1-6v6m2-6v9m1-9v9m2-9v9m1-9v9m1-7v5m1-7v9m2-9v8m1-8v8m2-8v9m1-9v9m1-9v9m1-9v9m2-9v9m1-9v9m1-9v10m1-9v9m1-10v9m1-9v7m3-4v5m1-7v8m1-8v8m2-8v9m1-7v7m1-10v9m2-8v7m1-8v8m1-8v9m1-8v8m2-8v8m1-9v9m4-9v9m1-9v10m2-10v9m1-7v7m1-9v10m1-9v8m1-7v7m1-8v8m1-8v8m1-8v8m2-9v9m1-7v5m1-6v8m3-10v11m1-9v9m3-8v7m1-8v8m1-9v9m3-7v8m1-6v5m3-8v9m1-9v7m1-8v9m1-8v9m1-10v10m1-8v6m2-8v9m1-6v6m1-9v9m1-9v10m3-9v8m1-8v9m1-9v9m1-9v8m2-8v10m1-9v8m1-9v7m1-7v8m1-7v6m1-8v10m3-8v7m1-9v11m1-10v10m1-10v8m1-7v6m1-6v8m1-9v7m2-7v10m3-10v9m1-9v9m1-9v9m1-9v7m1-6v8m1-9v8m1-8v9m2-9v9m2-6v5m1-8v8m2-8v9m1-9v9m1-9v8m1-8v9m1-10v10m1-8v7m1-8v9m1-8v8m1-9v8m1-8v9m1-7v5m1-7v9m1-6v6m1-9v9m1-8v7m1-8v8m1-7v8m1-9v9m2-9v9m1-8v8m1-8v8m1-8v8m2-7v6m1-7v8m1-8v8m1-9v9m1-9v9m1-8v8m1-8v7m2-8v10m1-9v8m1-7v8m1-9v9m1-9v7m1-7v6m1-7v6m1-5v9m1-10v9m5-9v9m1-10v10m1-7v5m1-7v10m3-10v8m2-7v8m1-7v7m5-7v7m2-8v7m1-6v7m1-8v9m1-8v6m1-8v10m1-10v10m1-10v10m2-9v9m1-7v5m3-7v8m2-8v8m1-8v8m2-8v8m1-7v5m1-6v8m1-8v9m2-9v8m1-9v10m1-7v6m1-8v9m2-8v6m1-8v10m1-9v8m1-9v10m1-10v9m1-5v4m1-6v7m1-8v8m1-9v9m2-8v9m1-8v6m1-9v10m1-9v10m1-8v5m1-6v8m1-9v9m1-7v8m2-8v6m1-7v9m1-10v7m1-6v8m1-8v9m1-10v10m1-7v5m1-7v8m2-8v8m1-5v4m1-6v8m2-7v7m2-9v8m1-5v4m1-8v10m1-10v9m2-9v9m1-8v9m1-8v9m1-9v8m1-9v9m1-8v7m1-8v9m1-9v8m1-8v8m1-7v7m1-8v8m1-8v9m1-9v10m1-9v7m1-8v7m1-7v9m1-7v7m1-9v9m1-8v8m1-7v7m1-9v9m1-8v9m1-10v8m1-8v9m1-7v6m1-8v10m1-10v8m2-7v6m2-7v6m1-7v10m1-8v7m1-6v7m1-9v10m1-10v9m1-9v9m1-9v9m1-8v8m1-8v5m1-6v10m3-10v8m2-8v9m1-9v9m1-8v5m1-4v5m1-6v5m1-3v6m1-8v6m2-7v9m1-8v7m1-7v6m1-7v9m1-9v8m1-7v8m1-10v11m1-9v7m1-8v9m2-9v9m3-9v8m1-7v8m2-9v9m1-8v7m1-8v10m1-10v9m1-9v8m1-8v8m1-8v7m1-5v7m1-9v9m2-9v9m1-9v8m1-8v9m1-10v9m1-7v9m1-11v10m1-9v7m1-5v5m1-7v10m1-10v8m1-7v7m1-8v8m1-8v8m1-8v9m1-7v7m1-9v10m1-7v5m1-8v6m1-7v11m1-9v9m1-9v9m1-10v9m1-7v7m1-5v5m1-7v6m1-5v7m1-7v6m1-8v9m1-9v8m1-9v9m1-9v9m1-7v6m1-5v3m1-6v9m1-7v6m1-8v9m1-9v8m1-7v5m2-5v7m1-6v5m1-7v9m2-8v8m1-9v8m1-7v8m1-8v8m1-9v10"/></g>
<rect x="21" y="17" width="1" height="651" fill="#000"/>
<path fill="#b4aa8c" d="M41 17h1v1h-1zM61 17h1v1h-1zM81 17h1v1h-1zM101 17h1v1h-1zM141 17h1v1h-1zM161 17h1v1h-1zM181 17h1v1h-1zM201 17h1v1h-1zM241 17h1v1h-1zM261 17h1v1h-1zM281 17h1v1h-1zM301 17h1v1h-1zM341 17h1v1h-1zM361 17h1v1h-1zM381 17h1v1h-1zM401 17h1v1h-1zM441 17h1v1h-1zM461 17h1v1h-1zM481 17h1v1h-1zM501 17h1v1h-1zM541 17h1v1h-1zM561 17h1v1h-1zM581 17h1v1h-1zM601 17h1v1h-1zM641 17h1v1h-1zM661 17h1v1h-1zM681 17h1v1h-1zM701 17h1v1h-1zM741 17h1v1h-1zM761 17h1v1h-1zM781 17h1v1h-1zM801 17h1v1h-1zM841 17h1v1h-1zM861 17h1v1h-1zM881 17h1v1h-1zM901 17h1v1h-1zM941 17h1v1h-1zM961 17h1v1h-1zM981 17h1v1h-1zM1001 17h1v1h-1zM121 18h1v1h-1zM221 18h1v1h-1zM321 18h1v1h-1zM421 18h1v1h-1zM521 18h1v1h-1zM621 18h1v1h-1zM721 18h1v1h-1zM821 18h1v1h-1zM921 18h1v1h-1zM41 19h1v1h-1zM61 19h1v1h-1zM81 19h1v1h-1zM101 19h1v1h-1zM141 19h1v1h-1zM161 19h1v1h-1zM181 19h1v1h-1zM201 19h1v1h-1zM241 19h1v1h-1zM261 19h1v1h-1zM281 19h1v1h-1zM301 19h1v1h-1zM341 19h1v1h-1zM361 19h1v1h-1zM381 19h1v1h-1zM401 19h1v1h-1zM441 19h1v1h-1zM461 19h1v1h-1zM481 19h1v1h-1zM501 19h1v1h-1zM541 19h1v1h-1zM561 19h1v1h-1zM581 19h1v1h-1zM601 19h1v1h-1zM641 19h1v1h-1zM661 19h1v1h-1zM681 19h1v1h-1zM701 19h1v1h-1zM741 19h1v1h-1zM761 19h1v1h-1zM781 19h1v1h-1zM801 19h1v1h-1zM841 19h1v1h-1zM861 19h1v1h-1zM881 19h1v1h-1zM901 19h1v1h-1zM941 19h1v1h-1zM961 19h1v1h-1zM981 19h1v1h-1zM1001 19h1v1h-1zM121 20h1v1h-1zM221 20h1v1h-1zM321 20h1v1h-1zM421 20h1v1h-1zM521 20h1v1h-1zM621 20h1v1h-1zM721 20h1v1h-1zM821 20h1v1h-1zM921 20h1v1h-1zM121 22h1v1h-1zM221 22h1v1h-1zM321 22h1v1h-1zM421 22h1v1h-1zM521 22h1v1h-1zM621 22h1v1h-1zM721 22h1v1h-1zM821 22h1v1h-1zM921 22h1v1h-1zM521 24h1v1h-1zM521 26h1v1h-1zM521 28h1v1h-1zM21 30h1v1h-1zM23 30h1v1h-1zM121 30h1v1h-1zM221 30h1v1h-1zM321 30h1v1h-1zM421 30h1v1h-1zM518 30h1v1h-1zM520 30h3v1h-3zM524 30h1v1h-1zM621 30h1v1h-1zM721 30h1v1h-1zM821 30h1v1h-1zM921 30h1v1h-1zM1018 30h1v1h-1zM1020 30h1v1h-1zM521 32h1v1h-1zM521 34h1v1h-1zM521 36h1v1h-1zM521 38h1v1h-1zM521 40h1v1h-1zM521 42h1v1h-1zM21 43h1v1h-1zM23 43h1v1h-1zM121 43h1v1h-1zM221 43h1v1h-1zM321 43h1v1h-1zM421 43h1v1h-1zM518 43h1v1h-1zM520 43h3v1h-3zM524 43h1v1h-1zM621 43h1v1h-1zM721 43h1v1h-1zM821 43h1v1h-1zM921 43h1v1h-1zM1018 43h1v1h-1zM1020 43h1v1h-1zM521 44h1v1h-1zM521 46h1v1h-1zM521 48h1v1h-1zM521 50h1v1h-1zM521 52h1v1h-1zM521 54h1v1h-1zM21 56h1v1h-1zM23 56h1v1h-1zM121 56h1v1h-1zM221 56h1v1h-1zM321 56h1v1h-1zM421 56h1v1h-1zM518 56h1v1h-1zM520 56h3v1h-3zM524 56h1v1h-1zM621 56h1v1h-1zM721 56h1v1h-1zM821 56h1v1h-1zM921 56h1v1h-1zM1018 56h1v1h-1zM1020 56h1v1h-1zM521 58h1v1h-1zM521 60h1v1h-1zM521 62h1v1h-1zM521 64h1v1h-1zM521 66h1v1h-1zM521 68h1v1h-1zM21 69h1v1h-1zM23 69h1v1h-1zM121 69h1v1h-1zM221 69h1v1h-1zM321 69h1v1h-1zM421 69h1v1h-1zM518 69h1v1h-1zM520 69h3v1h-3zM524 69h1v1h-1zM621 69h1v1h-1zM721 69h1v1h-1zM821 69h1v1h-1zM921 69h1v1h-1zM1018 69h1v1h-1zM1020 69h1v1h-1zM521 70h1v1h-1zM521 72h1v1h-1zM521 74h1v1h-1zM521 76h1v1h-1zM521 78h1v1h-1zM521 80h1v1h-1zM22 82h1v1h-1zM24 82h1v1h-1zM26 82h1v1h-1zM41 82h1v1h-1zM61 82h1v1h-1zM81 82h1v1h-1zM101 82h1v1h-1zM121 82h1v1h-1zM141 82h1v1h-1zM161 82h1v1h-1zM181 82h1v1h-1zM201 82h1v1h-1zM221 82h1v1h-1zM241 82h1v1h-1zM261 82h1v1h-1zM281 82h1v1h-1zM301 82h1v1h-1zM321 82h1v1h-1zM341 82h1v1h-1zM361 82h1v1h-1zM381 82h1v1h-1zM401 82h1v1h-1zM421 82h1v1h-1zM441 82h1v1h-1zM461 82h1v1h-1zM481 82h1v1h-1zM501 82h1v1h-1zM518 82h1v1h-1zM520 82h3v1h-3zM524 82h1v1h-1zM541 82h1v1h-1zM561 82h1v1h-1zM581 82h1v1h-1zM601 82h1v1h-1zM621 82h1v1h-1zM641 82h1v1h-1zM661 82h1v1h-1zM681 82h1v1h-1zM701 82h1v1h-1zM721 82h1v1h-1zM741 82h1v1h-1zM761 82h1v1h-1zM781 82h1v1h-1zM801 82h1v1h-1zM821 82h1v1h-1zM841 82h1v1h-1zM861 82h1v1h-1zM881 82h1v1h-1zM901 82h1v1h-1zM921 82h1v1h-1zM941 82h1v1h-1zM961 82h1v1h-1zM981 82h1v1h-1zM1001 82h1v1h-1zM1015 82h1v1h-1zM1017 82h1v1h-1zM1019 82h1v1h-1zM521 84h1v1h-1zM521 86h1v1h-1zM521 88h1v1h-1zM21 95h1v1h-1zM524 95h1v1h-1zM1020 95h1v1h-1zM521 100h1v1h-1zM521 102h1v1h-1zM521 104h1v1h-1zM521 106h1v1h-1zM21 108h1v1h-1zM23 108h1v1h-1zM121 108h1v1h-1zM221 108h1v1h-1zM321 108h1v1h-1zM421 108h1v1h-1zM518 108h1v1h-1zM520 108h3v1h-3zM524 108h1v1h-1zM621 108h1v1h-1zM721 108h1v1h-1zM821 108h1v1h-1zM921 108h1v1h-1zM1018 108h1v1h-1zM1020 108h1v1h-1zM521 110h1v1h-1zM521 112h1v1h-1zM521 114h1v1h-1zM521 116h1v1h-1zM521 118h1v1h-1zM521 120h1v1h-1zM21 121h1v1h-1zM23 121h1v1h-1zM121 121h1v1h-1zM221 121h1v1h-1zM321 121h1v1h-1zM421 121h1v1h-1zM518 121h1v1h-1zM520 121h3v1h-3zM524 121h1v1h-1zM621 121h1v1h-1zM721 121h1v1h-1zM821 121h1v1h-1zM921 121h1v1h-1zM1018 121h1v1h-1zM1020 121h1v1h-1zM521 122h1v1h-1zM521 124h1v1h-1zM521 126h1v1h-1zM521 128h1v1h-1zM521 130h1v1h-1zM521 132h1v1h-1zM21 134h1v1h-1zM23 134h1v1h-1zM121 134h1v1h-1zM221 134h1v1h-1zM321 134h1v1h-1zM421 134h1v1h-1zM518 134h1v1h-1zM520 134h3v1h-3zM524 134h1v1h-1zM621 134h1v1h-1zM721 134h1v1h-1zM821 134h1v1h-1zM921 134h1v1h-1zM1018 134h1v1h-1zM1020 134h1v1h-1zM521 136h1v1h-1zM521 138h1v1h-1zM521 140h1v1h-1zM521 142h1v1h-1zM521 144h1v1h-1zM521 146h1v1h-1zM22 147h1v1h-1zM24 147h1v1h-1zM26 147h1v1h-1zM41 147h1v1h-1zM61 147h1v1h-1zM81 147h1v1h-1zM101 147h1v1h-1zM121 147h1v1h-1zM141 147h1v1h-1zM161 147h1v1h-1zM181 147h1v1h-1zM201 147h1v1h-1zM221 147h1v1h-1zM241 147h1v1h-1zM261 147h1v1h-1zM281 147h1v1h-1zM301 147h1v1h-1zM321 147h1v1h-1zM341 147h1v1h-1zM361 147h1v1h-1zM381 147h1v1h-1zM401 147h1v1h-1zM421 147h1v1h-1zM441 147h1v1h-1zM461 147h1v1h-1zM481 147h1v1h-1zM501 147h1v1h-1zM518 147h1v1h-1zM520 147h3v1h-3zM524 147h1v1h-1zM541 147h1v1h-1zM561 147h1v1h-1zM581 147h1v1h-1zM601 147h1v1h-1zM621 147h1v1h-1zM641 147h1v1h-1zM661 147h1v1h-1zM681 147h1v1h-1zM701 147h1v1h-1zM721 147h1v1h-1zM741 147h1v1h-1zM761 147h1v1h-1zM781 147h1v1h-1zM801 147h1v1h-1zM821 147h1v1h-1zM841 147h1v1h-1zM861 147h1v1h-1zM881 147h1v1h-1zM901 147h1v1h-1zM921 147h1v1h-1zM941 147h1v1h-1zM961 147h1v1h-1zM981 147h1v1h-1zM1001 147h1v1h-1zM1015 147h1v1h-1zM1017 147h1v1h-1zM1019 147h1v1h-1zM521 148h1v1h-1zM521 150h1v1h-1zM521 152h1v1h-1zM521 154h1v1h-1zM521 156h1v1h-1zM521 158h1v1h-1zM21 160h1v1h-1zM23 160h1v1h-1zM121 160h1v1h-1zM221 160h1v1h-1zM321 160h1v1h-1zM421 160h1v1h-1zM518 160h1v1h-1zM520 160h3v1h-3zM524 160h1v1h-1zM621 160h1v1h-1zM721 160h1v1h-1zM821 160h1v1h-1zM921 160h1v1h-1zM1018 160h1v1h-1zM1020 160h1v1h-1zM521 162h1v1h-1zM521 164h1v1h-1zM521 166h1v1h-1zM521 168h1v1h-1zM521 170h1v1h-1zM521 172h1v1h-1zM21 173h1v1h-1zM23 173h1v1h-1zM121 173h1v1h-1zM221 173h1v1h-1zM321 173h1v1h-1zM421 173h1v1h-1zM518 173h1v1h-1zM520 173h3v1h-3zM524 173h1v1h-1zM621 173h1v1h-1zM721 173h1v1h-1zM821 173h1v1h-1zM921 173h1v1h-1zM1018 173h1v1h-1zM1020 173h1v1h-1zM521 174h1v1h-1zM521 176h1v1h-1zM521 178h1v1h-1zM521 180h1v1h-1zM521 182h1v1h-1zM521 184h1v1h-1zM21 186h1v1h-1zM23 186h1v1h-1zM121 186h1v1h-1zM221 186h1v1h-1zM321 186h1v1h-1zM421 186h1v1h-1zM518 186h1v1h-1zM520 186h3v1h-3zM524 186h1v1h-1zM621 186h1v1h-1zM721 186h1v1h-1zM821 186h1v1h-1zM921 186h1v1h-1zM1018 186h1v1h-1zM1020 186h1v1h-1zM521 188h1v1h-1zM521 190h1v1h-1zM521 192h1v1h-1zM521 194h1v1h-1zM521 196h1v1h-1zM521 198h1v1h-1zM21 199h1v1h-1zM23 199h1v1h-1zM121 199h1v1h-1zM521 199h1v1h-1zM521 200h1v1h-1zM521 202h1v1h-1zM521 204h1v1h-1zM521 206h1v1h-1zM521 208h1v1h-1zM521 210h1v1h-1zM22 212h1v1h-1zM24 212h1v1h-1zM26 212h1v1h-1zM41 212h1v1h-1zM61 212h1v1h-1zM81 212h1v1h-1zM101 212h1v1h-1zM121 212h1v1h-1zM141 212h1v1h-1zM161 212h1v1h-1zM181 212h1v1h-1zM201 212h1v1h-1zM221 212h1v1h-1zM241 212h1v1h-1zM261 212h1v1h-1zM281 212h1v1h-1zM301 212h1v1h-1zM321 212h1v1h-1zM341 212h1v1h-1zM361 212h1v1h-1zM381 212h1v1h-1zM401 212h1v1h-1zM421 212h1v1h-1zM441 212h1v1h-1zM461 212h1v1h-1zM481 212h1v1h-1zM501 212h1v1h-1zM518 212h1v1h-1zM520 212h3v1h-3zM524 212h1v1h-1zM541 212h1v1h-1zM561 212h1v1h-1zM581 212h1v1h-1zM601 212h1v1h-1zM621 212h1v1h-1zM641 212h1v1h-1zM661 212h1v1h-1zM681 212h1v1h-1zM701 212h1v1h-1zM721 212h1v1h-1zM741 212h1v1h-1zM761 212h1v1h-1zM781 212h1v1h-1zM801 212h1v1h-1zM821 212h1v1h-1zM841 212h1v1h-1zM861 212h1v1h-1zM881 212h1v1h-1zM901 212h1v1h-1zM921 212h1v1h-1zM941 212h1v1h-1zM961 212h1v1h-1zM981 212h1v1h-1zM1001 212h1v1h-1zM1015 212h1v1h-1zM1017 212h1v1h-1zM1019 212h1v1h-1zM521 214h1v1h-1zM521 216h1v1h-1zM521 218h1v1h-1zM521 220h1v1h-1zM521 222h1v1h-1zM521 224h1v1h-1zM21 225h1v1h-1zM23 225h1v1h-1zM121 225h1v1h-1zM221 225h1v1h-1zM321 225h1v1h-1zM421 225h1v1h-1zM518 225h1v1h-1zM520 225h3v1h-3zM524 225h1v1h-1zM621 225h1v1h-1zM721 225h1v1h-1zM821 225h1v1h-1zM921 225h1v1h-1zM1018 225h1v1h-1zM1020 225h1v1h-1zM521 226h1v1h-1zM521 228h1v1h-1zM521 230h1v1h-1zM521 232h1v1h-1zM521 234h1v1h-1zM521 236h1v1h-1zM21 238h1v1h-1zM23 238h1v1h-1zM121 238h1v1h-1zM221 238h1v1h-1zM321 238h1v1h-1zM421 238h1v1h-1zM518 238h1v1h-1zM520 238h3v1h-3zM524 238h1v1h-1zM621 238h1v1h-1zM721 238h1v1h-1zM821 238h1v1h-1zM921 238h1v1h-1zM1018 238h1v1h-1zM1020 238h1v1h-1zM521 240h1v1h-1zM521 242h1v1h-1zM521 244h1v1h-1zM521 246h1v1h-1zM521 248h1v1h-1zM521 250h1v1h-1zM21 251h1v1h-1zM23 251h1v1h-1zM121 251h1v1h-1zM221 251h1v1h-1zM321 251h1v1h-1zM421 251h1v1h-1zM518 251h1v1h-1zM520 251h3v1h-3zM524 251h1v1h-1zM621 251h1v1h-1zM721 251h1v1h-1zM821 251h1v1h-1zM921 251h1v1h-1zM1018 251h1v1h-1zM1020 251h1v1h-1zM521 252h1v1h-1zM521 254h1v1h-1zM521 256h1v1h-1zM521 258h1v1h-1zM521 260h1v1h-1zM521 262h1v1h-1zM21 264h1v1h-1zM23 264h1v1h-1zM121 264h1v1h-1zM221 264h1v1h-1zM321 264h1v1h-1zM421 264h1v1h-1zM518 264h1v1h-1zM520 264h3v1h-3zM524 264h1v1h-1zM621 264h1v1h-1zM721 264h1v1h-1zM821 264h1v1h-1zM921 264h1v1h-1zM1018 264h1v1h-1zM1020 264h1v1h-1zM521 266h1v1h-1zM521 268h1v1h-1zM521 270h1v1h-1zM521 272h1v1h-1zM521 274h1v1h-1zM521 276h1v1h-1zM22 277h1v1h-1zM24 277h1v1h-1zM26 277h1v1h-1zM41 277h1v1h-1zM61 277h1v1h-1zM81 277h1v1h-1zM101 277h1v1h-1zM121 277h1v1h-1zM141 277h1v1h-1zM161 277h1v1h-1zM181 277h1v1h-1zM201 277h1v1h-1zM221 277h1v1h-1zM241 277h1v1h-1zM261 277h1v1h-1zM281 277h1v1h-1zM301 277h1v1h-1zM321 277h1v1h-1zM341 277h1v1h-1zM361 277h1v1h-1zM381 277h1v1h-1zM401 277h1v1h-1zM421 277h1v1h-1zM441 277h1v1h-1zM461 277h1v1h-1zM481 277h1v1h-1zM501 277h1v1h-1zM518 277h1v1h-1zM520 277h3v1h-3zM524 277h1v1h-1zM541 277h1v1h-1zM561 277h1v1h-1zM581 277h1v1h-1zM601 277h1v1h-1zM621 277h1v1h-1zM641 277h1v1h-1zM661 277h1v1h-1zM681 277h1v1h-1zM701 277h1v1h-1zM721 277h1v1h-1zM741 277h1v1h-1zM761 277h1v1h-1zM781 277h1v1h-1zM801 277h1v1h-1zM821 277h1v1h-1zM841 277h1v1h-1zM861 277h1v1h-1zM881 277h1v1h-1zM901 277h1v1h-1zM921 277h1v1h-1zM941 277h1v1h-1zM961 277h1v1h-1zM981 277h1v1h-1zM1001 277h1v1h-1zM1015 277h1v1h-1zM1017 277h1v1h-1zM1019 277h1v1h-1zM521 278h1v1h-1zM521 280h1v1h-1zM521 282h1v1h-1zM521 284h1v1h-1zM521 286h1v1h-1zM521 288h1v1h-1zM21 290h1v1h-1zM23 290h1v1h-1zM121 290h1v1h-1zM221 290h1v1h-1zM321 290h1v1h-1zM421 290h1v1h-1zM518 290h1v1h-1zM520 290h3v1h-3zM524 290h1v1h-1zM621 290h1v1h-1zM721 290h1v1h-1zM821 290h1v1h-1zM921 290h1v1h-1zM1018 290h1v1h-1zM1020 290h1v1h-1zM521 292h1v1h-1zM521 294h1v1h-1zM521 296h1v1h-1zM521 298h1v1h-1zM521 300h1v1h-1zM521 302h1v1h-1zM21 303h1v1h-1zM23 303h1v1h-1zM121 303h1v1h-1zM221 303h1v1h-1zM321 303h1v1h-1zM421 303h1v1h-1zM518 303h1v1h-1zM520 303h3v1h-3zM524 303h1v1h-1zM621 303h1v1h-1zM721 303h1v1h-1zM821 303h1v1h-1zM921 303h1v1h-1zM1018 303h1v1h-1zM1020 303h1v1h-1zM521 304h1v1h-1zM521 306h1v1h-1zM521 308h1v1h-1zM521 310h1v1h-1zM521 312h1v1h-1zM521 314h1v1h-1zM21 316h1v1h-1zM23 316h1v1h-1zM121 316h1v1h-1zM221 316h1v1h-1zM321 316h1v1h-1zM421 316h1v1h-1zM518 316h1v1h-1zM520 316h3v1h-3zM524 316h1v1h-1zM621 316h1v1h-1zM721 316h1v1h-1zM821 316h1v1h-1zM921 316h1v1h-1zM1018 316h1v1h-1zM1020 316h1v1h-1zM521 318h1v1h-1zM521 320h1v1h-1zM521 322h1v1h-1zM521 324h1v1h-1zM21 329h1v1h-1zM821 329h1v1h-1zM521 334h1v1h-1zM521 336h1v1h-1zM521 338h1v1h-1zM41 339h1v1h-1zM61 339h1v1h-1zM81 339h1v1h-1zM101 339h1v1h-1zM121 339h1v1h-1zM141 339h1v1h-1zM161 339h1v1h-1zM181 339h1v1h-1zM201 339h1v1h-1zM221 339h1v1h-1zM241 339h1v1h-1zM261 339h1v1h-1zM281 339h1v1h-1zM301 339h1v1h-1zM321 339h1v1h-1zM341 339h1v1h-1zM361 339h1v1h-1zM381 339h1v1h-1zM401 339h1v1h-1zM421 339h1v1h-1zM441 339h1v1h-1zM461 339h1v1h-1zM481 339h1v1h-1zM501 339h1v1h-1zM521 339h1v1h-1zM541 339h1v1h-1zM561 339h1v1h-1zM581 339h1v1h-1zM601 339h1v1h-1zM621 339h1v1h-1zM641 339h1v1h-1zM661 339h1v1h-1zM681 339h1v1h-1zM701 339h1v1h-1zM721 339h1v1h-1zM741 339h1v1h-1zM761 339h1v1h-1zM781 339h1v1h-1zM801 339h1v1h-1zM821 339h1v1h-1zM841 339h1v1h-1zM861 339h1v1h-1zM881 339h1v1h-1zM901 339h1v1h-1zM921 339h1v1h-1zM941 339h1v1h-1zM961 339h1v1h-1zM981 339h1v1h-1zM1001 339h1v1h-1zM521 340h1v1h-1zM41 341h1v1h-1zM61 341h1v1h-1zM81 341h1v1h-1zM101 341h1v1h-1zM121 341h1v1h-1zM141 341h1v1h-1zM161 341h1v1h-1zM181 341h1v1h-1zM201 341h1v1h-1zM221 341h1v1h-1zM241 341h1v1h-1zM261 341h1v1h-1zM281 341h1v1h-1zM301 341h1v1h-1zM321 341h1v1h-1zM341 341h1v1h-1zM361 341h1v1h-1zM381 341h1v1h-1zM401 341h1v1h-1zM421 341h1v1h-1zM441 341h1v1h-1zM461 341h1v1h-1zM481 341h1v1h-1zM501 341h1v1h-1zM521 341h1v1h-1zM541 341h1v1h-1zM561 341h1v1h-1zM581 341h1v1h-1zM601 341h1v1h-1zM621 341h1v1h-1zM641 341h1v1h-1zM661 341h1v1h-1zM681 341h1v1h-1zM701 341h1v1h-1zM721 341h1v1h-1zM741 341h1v1h-1zM761 341h1v1h-1zM781 341h1v1h-1zM801 341h1v1h-1zM821 341h1v1h-1zM841 341h1v1h-1zM861 341h1v1h-1zM881 341h1v1h-1zM901 341h1v1h-1zM921 341h1v1h-1zM941 341h1v1h-1zM961 341h1v1h-1zM981 341h1v1h-1zM1001 341h1v1h-1zM21 342h7v1h-7zM29 342h1v1h-1zM31 342h1v1h-1zM33 342h1v1h-1zM35 342h1v1h-1zM37 342h1v1h-1zM39 342h1v1h-1zM41 342h1v1h-1zM43 342h1v1h-1zM45 342h1v1h-1zM47 342h1v1h-1zM49 342h1v1h-1zM51 342h1v1h-1zM53 342h1v1h-1zM55 342h1v1h-1zM57 342h1v1h-1zM59 342h1v1h-1zM61 342h1v1h-1zM63 342h1v1h-1zM65 342h1v1h-1zM67 342h1v1h-1zM69 342h1v1h-1zM71 342h1v1h-1zM73 342h1v1h-1zM75 342h1v1h-1zM77 342h1v1h-1zM79 342h1v1h-1zM81 342h1v1h-1zM83 342h1v1h-1zM85 342h1v1h-1zM87 342h1v1h-1zM89 342h1v1h-1zM91 342h1v1h-1zM93 342h1v1h-1zM95 342h1v1h-1zM97 342h1v1h-1zM99 342h1v1h-1zM101 342h1v1h-1zM103 342h1v1h-1zM105 342h1v1h-1zM107 342h1v1h-1zM109 342h1v1h-1zM111 342h1v1h-1zM113 342h1v1h-1zM115 342h1v1h-1zM117 342h1v1h-1zM119 342h1v1h-1zM121 342h1v1h-1zM123 342h1v1h-1zM125 342h1v1h-1zM127 342h1v1h-1zM129 342h1v1h-1zM131 342h1v1h-1zM133 342h1v1h-1zM135 342h1v1h-1zM137 342h1v1h-1zM139 342h1v1h-1zM141 342h1v1h-1zM143 342h1v1h-1zM145 342h1v1h-1zM147 342h1v1h-1zM149 342h1v1h-1zM151 342h1v1h-1zM153 342h1v1h-1zM155 342h1v1h-1zM157 342h1v1h-1zM159 342h1v1h-1zM161 342h1v1h-1zM163 342h1v1h-1zM165 342h1v1h-1zM167 342h1v1h-1zM169 342h1v1h-1zM171 342h1v1h-1zM173 342h1v1h-1zM175 342h1v1h-1zM177 342h1v1h-1zM179 342h1v1h-1zM181 342h1v1h-1zM183 342h1v1h-1zM185 342h1v1h-1zM187 342h1v1h-1zM189 342h1v1h-1zM191 342h1v1h-1zM193 342h1v1h-1zM195 342h1v1h-1zM197 342h1v1h-1zM199 342h1v1h-1zM201 342h1v1h-1zM203 342h1v1h-1zM205 342h1v1h-1zM207 342h1v1h-1zM209 342h1v1h-1zM211 342h1v1h-1zM213 342h1v1h-1zM215 342h1v1h-1zM217 342h1v1h-1zM219 342h1v1h-1zM221 342h1v1h-1zM223 342h1v1h-1zM225 342h1v1h-1zM227 342h1v1h-1zM229 342h1v1h-1zM231 342h1v1h-1zM233 342h1v1h-1zM235 342h1v1h-1zM237 342h1v1h-1zM239 342h1v1h-1zM241 342h1v1h-1zM243 342h1v1h-1zM245 342h1v1h-1zM247 342h1v1h-1zM249 342h1v1h-1zM251 342h1v1h-1zM253 342h1v1h-1zM255 342h1v1h-1zM257 342h1v1h-1zM259 342h1v1h-1zM261 342h1v1h-1zM263 342h1v1h-1zM265 342h1v1h-1zM267 342h1v1h-1zM269 342h1v1h-1zM271 342h1v1h-1zM273 342h1v1h-1zM275 342h1v1h-1zM277 342h1v1h-1zM279 342h1v1h-1zM281 342h1v1h-1zM283 342h1v1h-1zM285 342h1v1h-1zM287 342h1v1h-1zM289 342h1v1h-1zM291 342h1v1h-1zM293 342h1v1h-1zM295 342h1v1h-1zM297 342h1v1h-1zM299 342h1v1h-1zM301 342h1v1h-1zM303 342h1v1h-1zM305 342h1v1h-1zM307 342h1v1h-1zM309 342h1v1h-1zM311 342h1v1h-1zM313 342h1v1h-1zM315 342h1v1h-1zM317 342h1v1h-1zM319 342h1v1h-1zM321 342h1v1h-1zM323 342h1v1h-1zM325 342h1v1h-1zM327 342h1v1h-1zM329 342h1v1h-1zM331 342h1v1h-1zM333 342h1v1h-1zM335 342h1v1h-1zM337 342h1v1h-1zM339 342h1v1h-1zM341 342h1v1h-1zM343 342h1v1h-1zM345 342h1v1h-1zM347 342h1v1h-1zM349 342h1v1h-1zM351 342h1v1h-1zM353 342h1v1h-1zM355 342h1v1h-1zM357 342h1v1h-1zM359 342h1v1h-1zM361 342h1v1h-1zM363 342h1v1h-1zM365 342h1v1h-1zM367 342h1v1h-1zM369 342h1v1h-1zM371 342h1v1h-1zM373 342h1v1h-1zM375 342h1v1h-1zM377 342h1v1h-1zM379 342h1v1h-1zM381 342h1v1h-1zM383 342h1v1h-1zM385 342h1v1h-1zM387 342h1v1h-1zM389 342h1v1h-1zM391 342h1v1h-1zM393 342h1v1h-1zM395 342h1v1h-1zM397 342h1v1h-1zM399 342h1v1h-1zM401 342h1v1h-1zM403 342h1v1h-1zM405 342h1v1h-1zM407 342h1v1h-1zM409 342h1v1h-1zM411 342h1v1h-1zM413 342h1v1h-1zM415 342h1v1h-1zM417 342h1v1h-1zM419 342h1v1h-1zM421 342h1v1h-1zM423 342h1v1h-1zM425 342h1v1h-1zM427 342h1v1h-1zM429 342h1v1h-1zM431 342h1v1h-1zM433 342h1v1h-1zM435 342h1v1h-1zM437 342h1v1h-1zM439 342h1v1h-1zM441 342h1v1h-1zM443 342h1v1h-1zM445 342h1v1h-1zM447 342h1v1h-1zM449 342h1v1h-1zM451 342h1v1h-1zM453 342h1v1h-1zM455 342h1v1h-1zM457 342h1v1h-1zM459 342h1v1h-1zM461 342h1v1h-1zM463 342h1v1h-1zM465 342h1v1h-1zM467 342h1v1h-1zM469 342h1v1h-1zM471 342h1v1h-1zM473 342h1v1h-1zM475 342h1v1h-1zM477 342h1v1h-1zM479 342h1v1h-1zM481 342h1v1h-1zM483 342h1v1h-1zM485 342h1v1h-1zM487 342h1v1h-1zM489 342h1v1h-1zM491 342h1v1h-1zM493 342h1v1h-1zM495 342h1v1h-1zM497 342h1v1h-1zM499 342h1v1h-1zM501 342h1v1h-1zM503 342h1v1h-1zM505 342h1v1h-1zM507 342h1v1h-1zM509 342h1v1h-1zM511 342h1v1h-1zM513 342h1v1h-1zM515 342h1v1h-1zM517 342h9v1h-9zM527 342h1v1h-1zM529 342h1v1h-1zM531 342h1v1h-1zM533 342h1v1h-1zM535 342h1v1h-1zM537 342h1v1h-1zM539 342h1v1h-1zM541 342h1v1h-1zM543 342h1v1h-1zM545 342h1v1h-1zM547 342h1v1h-1zM549 342h1v1h-1zM551 342h1v1h-1zM553 342h1v1h-1zM555 342h1v1h-1zM557 342h1v1h-1zM559 342h1v1h-1zM561 342h1v1h-1zM563 342h1v1h-1zM565 342h1v1h-1zM567 342h1v1h-1zM569 342h1v1h-1zM571 342h1v1h-1zM573 342h1v1h-1zM575 342h1v1h-1zM577 342h1v1h-1zM579 342h1v1h-1zM581 342h1v1h-1zM583 342h1v1h-1zM585 342h1v1h-1zM587 342h1v1h-1zM589 342h1v1h-1zM591 342h1v1h-1zM593 342h1v1h-1zM595 342h1v1h-1zM597 342h1v1h-1zM599 342h1v1h-1zM601 342h1v1h-1zM603 342h1v1h-1zM605 342h1v1h-1zM607 342h1v1h-1zM609 342h1v1h-1zM611 342h1v1h-1zM613 342h1v1h-1zM615 342h1v1h-1zM617 342h1v1h-1zM619 342h1v1h-1zM621 342h1v1h-1zM623 342h1v1h-1zM625 342h1v1h-1zM627 342h1v1h-1zM629 342h1v1h-1zM631 342h1v1h-1zM633 342h1v1h-1zM635 342h1v1h-1zM637 342h1v1h-1zM639 342h1v1h-1zM641 342h1v1h-1zM643 342h1v1h-1zM645 342h1v1h-1zM647 342h1v1h-1zM649 342h1v1h-1zM651 342h1v1h-1zM653 342h1v1h-1zM655 342h1v1h-1zM657 342h1v1h-1zM659 342h1v1h-1zM661 342h1v1h-1zM663 342h1v1h-1zM665 342h1v1h-1zM667 342h1v1h-1zM669 342h1v1h-1zM671 342h1v1h-1zM673 342h1v1h-1zM675 342h1v1h-1zM677 342h1v1h-1zM679 342h1v1h-1zM681 342h1v1h-1zM683 342h1v1h-1zM685 342h1v1h-1zM687 342h1v1h-1zM689 342h1v1h-1zM691 342h1v1h-1zM693 342h1v1h-1zM695 342h1v1h-1zM697 342h1v1h-1zM699 342h1v1h-1zM701 342h1v1h-1zM703 342h1v1h-1zM705 342h1v1h-1zM707 342h1v1h-1zM709 342h1v1h-1zM711 342h1v1h-1zM713 342h1v1h-1zM715 342h1v1h-1zM717 342h1v1h-1zM719 342h1v1h-1zM721 342h1v1h-1zM723 342h1v1h-1zM725 342h1v1h-1zM727 342h1v1h-1zM729 342h1v1h-1zM731 342h1v1h-1zM733 342h1v1h-1zM735 342h1v1h-1zM737 342h1v1h-1zM739 342h1v1h-1zM741 342h1v1h-1zM743 342h1v1h-1zM745 342h1v1h-1zM747 342h1v1h-1zM749 342h1v1h-1zM751 342h1v1h-1zM753 342h1v1h-1zM755 342h1v1h-1zM757 342h1v1h-1zM759 342h1v1h-1zM761 342h1v1h-1zM763 342h1v1h-1zM765 342h1v1h-1zM767 342h1v1h-1zM769 342h1v1h-1zM771 342h1v1h-1zM773 342h1v1h-1zM775 342h1v1h-1zM777 342h1v1h-1zM779 342h1v1h-1zM781 342h1v1h-1zM783 342h1v1h-1zM785 342h1v1h-1zM787 342h1v1h-1zM789 342h1v1h-1zM791 342h1v1h-1zM793 342h1v1h-1zM795 342h1v1h-1zM797 342h1v1h-1zM799 342h1v1h-1zM801 342h1v1h-1zM803 342h1v1h-1zM805 342h1v1h-1zM807 342h1v1h-1zM809 342h1v1h-1zM811 342h1v1h-1zM813 342h1v1h-1zM815 342h1v1h-1zM817 342h1v1h-1zM819 342h1v1h-1zM821 342h1v1h-1zM823 342h1v1h-1zM825 342h1v1h-1zM827 342h1v1h-1zM829 342h1v1h-1zM831 342h1v1h-1zM833 342h1v1h-1zM835 342h1v1h-1zM837 342h1v1h-1zM839 342h1v1h-1zM841 342h1v1h-1zM843 342h1v1h-1zM845 342h1v1h-1zM847 342h1v1h-1zM849 342h1v1h-1zM851 342h1v1h-1zM853 342h1v1h-1zM855 342h1v1h-1zM857 342h1v1h-1zM859 342h1v1h-1zM861 342h1v1h-1zM863 342h1v1h-1zM865 342h1v1h-1zM867 342h1v1h-1zM869 342h1v1h-1zM871 342h1v1h-1zM873 342h1v1h-1zM875 342h1v1h-1zM877 342h1v1h-1zM879 342h1v1h-1zM881 342h1v1h-1zM883 342h1v1h-1zM885 342h1v1h-1zM887 342h1v1h-1zM889 342h1v1h-1zM891 342h1v1h-1zM893 342h1v1h-1zM895 342h1v1h-1zM897 342h1v1h-1zM899 342h1v1h-1zM901 342h1v1h-1zM903 342h1v1h-1zM905 342h1v1h-1zM907 342h1v1h-1zM909 342h1v1h-1zM911 342h1v1h-1zM913 342h1v1h-1zM915 342h1v1h-1zM917 342h1v1h-1zM919 342h1v1h-1zM921 342h1v1h-1zM923 342h1v1h-1zM925 342h1v1h-1zM927 342h1v1h-1zM929 342h1v1h-1zM931 342h1v1h-1zM933 342h1v1h-1zM935 342h1v1h-1zM937 342h1v1h-1zM939 342h1v1h-1zM941 342h1v1h-1zM943 342h1v1h-1zM945 342h1v1h-1zM947 342h1v1h-1zM949 342h1v1h-1zM951 342h1v1h-1zM953 342h1v1h-1zM955 342h1v1h-1zM957 342h1v1h-1zM959 342h1v1h-1zM961 342h1v1h-1zM963 342h1v1h-1zM965 342h1v1h-1zM967 342h1v1h-1zM969 342h1v1h-1zM971 342h1v1h-1zM973 342h1v1h-1zM975 342h1v1h-1zM977 342h1v1h-1zM979 342h1v1h-1zM981 342h1v1h-1zM983 342h1v1h-1zM985 342h1v1h-1zM987 342h1v1h-1zM989 342h1v1h-1zM991 342h1v1h-1zM993 342h1v1h-1zM995 342h1v1h-1zM997 342h1v1h-1zM999 342h1v1h-1zM1001 342h1v1h-1zM1003 342h1v1h-1zM1005 342h1v1h-1zM1007 342h1v1h-1zM1009 342h1v1h-1zM1011 342h1v1h-1zM1013 342h1v1h-1zM1015 342h1v1h-1zM1017 342h1v1h-1zM1019 342h1v1h-1zM41 343h1v1h-1zM61 343h1v1h-1zM81 343h1v1h-1zM101 343h1v1h-1zM121 343h1v1h-1zM141 343h1v1h-1zM161 343h1v1h-1zM181 343h1v1h-1zM201 343h1v1h-1zM221 343h1v1h-1zM241 343h1v1h-1zM261 343h1v1h-1zM281 343h1v1h-1zM301 343h1v1h-1zM321 343h1v1h-1zM341 343h1v1h-1zM361 343h1v1h-1zM381 343h1v1h-1zM401 343h1v1h-1zM421 343h1v1h-1zM441 343h1v1h-1zM461 343h1v1h-1zM481 343h1v1h-1zM501 343h1v1h-1zM521 343h1v1h-1zM541 343h1v1h-1zM561 343h1v1h-1zM581 343h1v1h-1zM601 343h1v1h-1zM621 343h1v1h-1zM641 343h1v1h-1zM661 343h1v1h-1zM681 343h1v1h-1zM701 343h1v1h-1zM721 343h1v1h-1zM741 343h1v1h-1zM761 343h1v1h-1zM781 343h1v1h-1zM801 343h1v1h-1zM821 343h1v1h-1zM841 343h1v1h-1zM861 343h1v1h-1zM881 343h1v1h-1zM901 343h1v1h-1zM921 343h1v1h-1zM941 343h1v1h-1zM961 343h1v1h-1zM981 343h1v1h-1zM1001 343h1v1h-1zM521 344h1v1h-1zM41 345h1v1h-1zM61 345h1v1h-1zM81 345h1v1h-1zM101 345h1v1h-1zM121 345h1v1h-1zM141 345h1v1h-1zM161 345h1v1h-1zM181 345h1v1h-1zM201 345h1v1h-1zM221 345h1v1h-1zM241 345h1v1h-1zM261 345h1v1h-1zM281 345h1v1h-1zM301 345h1v1h-1zM321 345h1v1h-1zM341 345h1v1h-1zM361 345h1v1h-1zM381 345h1v1h-1zM401 345h1v1h-1zM421 345h1v1h-1zM441 345h1v1h-1zM461 345h1v1h-1zM481 345h1v1h-1zM501 345h1v1h-1zM521 345h1v1h-1zM541 345h1v1h-1zM561 345h1v1h-1zM581 345h1v1h-1zM601 345h1v1h-1zM621 345h1v1h-1zM641 345h1v1h-1zM661 345h1v1h-1zM681 345h1v1h-1zM701 345h1v1h-1zM721 345h1v1h-1zM741 345h1v1h-1zM761 345h1v1h-1zM781 345h1v1h-1zM801 345h1v1h-1zM821 345h1v1h-1zM841 345h1v1h-1zM861 345h1v1h-1zM881 345h1v1h-1zM901 345h1v1h-1zM921 345h1v1h-1zM941 345h1v1h-1zM961 345h1v1h-1zM981 345h1v1h-1zM1001 345h1v1h-1zM521 346h1v1h-1zM521 348h1v1h-1zM521 350h1v1h-1zM521 352h1v1h-1zM521 354h1v1h-1zM21 355h1v1h-1zM23 355h1v1h-1zM121 355h1v1h-1zM221 355h1v1h-1zM321 355h1v1h-1zM421 355h1v1h-1zM518 355h1v1h-1zM520 355h3v1h-3zM524 355h1v1h-1zM621 355h1v1h-1zM721 355h1v1h-1zM821 355h1v1h-1zM921 355h1v1h-1zM1018 355h1v1h-1zM1020 355h1v1h-1zM521 356h1v1h-1zM521 358h1v1h-1zM521 360h1v1h-1zM521 362h1v1h-1zM521 364h1v1h-1zM521 366h1v1h-1zM21 368h1v1h-1zM23 368h1v1h-1zM121 368h1v1h-1zM221 368h1v1h-1zM321 368h1v1h-1zM421 368h1v1h-1zM518 368h1v1h-1zM520 368h3v1h-3zM524 368h1v1h-1zM621 368h1v1h-1zM721 368h1v1h-1zM821 368h1v1h-1zM921 368h1v1h-1zM1018 368h1v1h-1zM1020 368h1v1h-1zM521 370h1v1h-1zM521 372h1v1h-1zM521 374h1v1h-1zM521 376h1v1h-1zM521 378h1v1h-1zM521 380h1v1h-1zM21 381h1v1h-1zM23 381h1v1h-1zM121 381h1v1h-1zM221 381h1v1h-1zM321 381h1v1h-1zM421 381h1v1h-1zM518 381h1v1h-1zM520 381h3v1h-3zM524 381h1v1h-1zM621 381h1v1h-1zM721 381h1v1h-1zM821 381h1v1h-1zM921 381h1v1h-1zM1018 381h1v1h-1zM1020 381h1v1h-1zM521 382h1v1h-1zM521 384h1v1h-1zM521 386h1v1h-1zM521 388h1v1h-1zM521 390h1v1h-1zM521 392h1v1h-1zM21 394h1v1h-1zM23 394h1v1h-1zM121 394h1v1h-1zM221 394h1v1h-1zM321 394h1v1h-1zM421 394h1v1h-1zM518 394h1v1h-1zM520 394h3v1h-3zM524 394h1v1h-1zM621 394h1v1h-1zM721 394h1v1h-1zM821 394h1v1h-1zM921 394h1v1h-1zM1018 394h1v1h-1zM1020 394h1v1h-1zM521 396h1v1h-1zM521 398h1v1h-1zM521 400h1v1h-1zM521 402h1v1h-1zM521 404h1v1h-1zM521 406h1v1h-1zM22 407h1v1h-1zM24 407h1v1h-1zM26 407h1v1h-1zM41 407h1v1h-1zM61 407h1v1h-1zM81 407h1v1h-1zM101 407h1v1h-1zM121 407h1v1h-1zM141 407h1v1h-1zM161 407h1v1h-1zM181 407h1v1h-1zM201 407h1v1h-1zM221 407h1v1h-1zM241 407h1v1h-1zM261 407h1v1h-1zM281 407h1v1h-1zM301 407h1v1h-1zM321 407h1v1h-1zM341 407h1v1h-1zM361 407h1v1h-1zM381 407h1v1h-1zM401 407h1v1h-1zM421 407h1v1h-1zM441 407h1v1h-1zM461 407h1v1h-1zM481 407h1v1h-1zM501 407h1v1h-1zM518 407h1v1h-1zM520 407h3v1h-3zM524 407h1v1h-1zM541 407h1v1h-1zM561 407h1v1h-1zM581 407h1v1h-1zM601 407h1v1h-1zM621 407h1v1h-1zM641 407h1v1h-1zM661 407h1v1h-1zM681 407h1v1h-1zM701 407h1v1h-1zM721 407h1v1h-1zM741 407h1v1h-1zM761 407h1v1h-1zM781 407h1v1h-1zM801 407h1v1h-1zM821 407h1v1h-1zM841 407h1v1h-1zM861 407h1v1h-1zM881 407h1v1h-1zM901 407h1v1h-1zM921 407h1v1h-1zM941 407h1v1h-1zM961 407h1v1h-1zM981 407h1v1h-1zM1001 407h1v1h-1zM1015 407h1v1h-1zM1017 407h1v1h-1zM1019 407h1v1h-1zM521 408h1v1h-1zM521 410h1v1h-1zM521 412h1v1h-1zM521 414h1v1h-1zM521 416h1v1h-1zM521 418h1v1h-1zM21 420h1v1h-1zM23 420h1v1h-1zM121 420h1v1h-1zM221 420h1v1h-1zM321 420h1v1h-1zM421 420h1v1h-1zM518 420h1v1h-1zM520 420h3v1h-3zM524 420h1v1h-1zM621 420h1v1h-1zM721 420h1v1h-1zM821 420h1v1h-1zM921 420h1v1h-1zM1018 420h1v1h-1zM1020 420h1v1h-1zM521 422h1v1h-1zM521 424h1v1h-1zM521 426h1v1h-1zM521 428h1v1h-1zM521 430h1v1h-1zM521 432h1v1h-1zM21 433h1v1h-1zM23 433h1v1h-1zM121 433h1v1h-1zM221 433h1v1h-1zM321 433h1v1h-1zM421 433h1v1h-1zM518 433h1v1h-1zM520 433h3v1h-3zM524 433h1v1h-1zM621 433h1v1h-1zM721 433h1v1h-1zM821 433h1v1h-1zM921 433h1v1h-1zM1018 433h1v1h-1zM1020 433h1v1h-1zM521 434h1v1h-1zM521 436h1v1h-1zM521 438h1v1h-1zM521 440h1v1h-1zM521 442h1v1h-1zM521 444h1v1h-1zM21 446h1v1h-1zM23 446h1v1h-1zM121 446h1v1h-1zM221 446h1v1h-1zM321 446h1v1h-1zM421 446h1v1h-1zM518 446h1v1h-1zM520 446h3v1h-3zM524 446h1v1h-1zM621 446h1v1h-1zM721 446h1v1h-1zM821 446h1v1h-1zM921 446h1v1h-1zM1018 446h1v1h-1zM1020 446h1v1h-1zM521 448h1v1h-1zM521 450h1v1h-1zM521 452h1v1h-1zM521 454h1v1h-1zM521 456h1v1h-1zM521 458h1v1h-1zM21 459h1v1h-1zM23 459h1v1h-1zM121 459h1v1h-1zM221 459h1v1h-1zM321 459h1v1h-1zM421 459h1v1h-1zM518 459h1v1h-1zM520 459h3v1h-3zM524 459h1v1h-1zM621 459h1v1h-1zM721 459h1v1h-1zM821 459h1v1h-1zM921 459h1v1h-1zM1018 459h1v1h-1zM1020 459h1v1h-1zM521 460h1v1h-1zM521 462h1v1h-1zM521 464h1v1h-1zM521 466h1v1h-1zM521 468h1v1h-1zM521 470h1v1h-1zM22 472h1v1h-1zM24 472h1v1h-1zM26 472h1v1h-1zM41 472h1v1h-1zM61 472h1v1h-1zM81 472h1v1h-1zM101 472h1v1h-1zM121 472h1v1h-1zM141 472h1v1h-1zM161 472h1v1h-1zM181 472h1v1h-1zM201 472h1v1h-1zM221 472h1v1h-1zM241 472h1v1h-1zM261 472h1v1h-1zM281 472h1v1h-1zM301 472h1v1h-1zM321 472h1v1h-1zM341 472h1v1h-1zM361 472h1v1h-1zM381 472h1v1h-1zM401 472h1v1h-1zM421 472h1v1h-1zM441 472h1v1h-1zM461 472h1v1h-1zM481 472h1v1h-1zM501 472h1v1h-1zM518 472h1v1h-1zM520 472h3v1h-3zM524 472h1v1h-1zM541 472h1v1h-1zM561 472h1v1h-1zM581 472h1v1h-1zM601 472h1v1h-1zM621 472h1v1h-1zM641 472h1v1h-1zM661 472h1v1h-1zM681 472h1v1h-1zM701 472h1v1h-1zM721 472h1v1h-1zM741 472h1v1h-1zM761 472h1v1h-1zM781 472h1v1h-1zM801 472h1v1h-1zM821 472h1v1h-1zM841 472h1v1h-1zM861 472h1v1h-1zM881 472h1v1h-1zM901 472h1v1h-1zM921 472h1v1h-1zM941 472h1v1h-1zM961 472h1v1h-1zM981 472h1v1h-1zM1001 472h1v1h-1zM1015 472h1v1h-1zM1017 472h1v1h-1zM1019 472h1v1h-1zM521 474h1v1h-1zM521 476h1v1h-1zM521 478h1v1h-1zM521 480h1v1h-1zM521 482h1v1h-1zM521 484h1v1h-1zM21 485h1v1h-1zM23 485h1v1h-1zM121 485h1v1h-1zM221 485h1v1h-1zM321 485h1v1h-1zM421 485h1v1h-1zM518 485h1v1h-1zM520 485h3v1h-3zM524 485h1v1h-1zM621 485h1v1h-1zM721 485h1v1h-1zM821 485h1v1h-1zM921 485h1v1h-1zM1018 485h1v1h-1zM1020 485h1v1h-1zM521 486h1v1h-1zM521 488h1v1h-1zM521 490h1v1h-1zM521 492h1v1h-1zM521 494h1v1h-1zM521 496h1v1h-1zM21 498h1v1h-1zM23 498h1v1h-1zM121 498h1v1h-1zM221 498h1v1h-1zM321 498h1v1h-1zM421 498h1v1h-1zM518 498h1v1h-1zM520 498h3v1h-3zM524 498h1v1h-1zM621 498h1v1h-1zM721 498h1v1h-1zM821 498h1v1h-1zM921 498h1v1h-1zM1018 498h1v1h-1zM1020 498h1v1h-1zM521 500h1v1h-1zM521 502h1v1h-1zM521 504h1v1h-1zM521 506h1v1h-1zM521 508h1v1h-1zM521 510h1v1h-1zM21 511h1v1h-1zM23 511h1v1h-1zM121 511h1v1h-1zM221 511h1v1h-1zM321 511h1v1h-1zM421 511h1v1h-1zM518 511h1v1h-1zM520 511h3v1h-3zM524 511h1v1h-1zM621 511h1v1h-1zM721 511h1v1h-1zM821 511h1v1h-1zM921 511h1v1h-1zM1018 511h1v1h-1zM1020 511h1v1h-1zM521 512h1v1h-1zM521 514h1v1h-1zM521 516h1v1h-1zM521 518h1v1h-1zM521 520h1v1h-1zM521 522h1v1h-1zM21 524h1v1h-1zM23 524h1v1h-1zM121 524h1v1h-1zM221 524h1v1h-1zM321 524h1v1h-1zM421 524h1v1h-1zM518 524h1v1h-1zM520 524h3v1h-3zM524 524h1v1h-1zM621 524h1v1h-1zM721 524h1v1h-1zM821 524h1v1h-1zM921 524h1v1h-1zM1018 524h1v1h-1zM1020 524h1v1h-1zM521 526h1v1h-1zM521 528h1v1h-1zM521 530h1v1h-1zM521 532h1v1h-1zM521 534h1v1h-1zM521 536h1v1h-1zM22 537h1v1h-1zM24 537h1v1h-1zM26 537h1v1h-1zM41 537h1v1h-1zM61 537h1v1h-1zM81 537h1v1h-1zM101 537h1v1h-1zM121 537h1v1h-1zM141 537h1v1h-1zM161 537h1v1h-1zM181 537h1v1h-1zM201 537h1v1h-1zM221 537h1v1h-1zM241 537h1v1h-1zM261 537h1v1h-1zM281 537h1v1h-1zM301 537h1v1h-1zM321 537h1v1h-1zM341 537h1v1h-1zM361 537h1v1h-1zM381 537h1v1h-1zM401 537h1v1h-1zM421 537h1v1h-1zM441 537h1v1h-1zM461 537h1v1h-1zM481 537h1v1h-1zM501 537h1v1h-1zM518 537h1v1h-1zM520 537h3v1h-3zM524 537h1v1h-1zM541 537h1v1h-1zM561 537h1v1h-1zM581 537h1v1h-1zM601 537h1v1h-1zM621 537h1v1h-1zM641 537h1v1h-1zM661 537h1v1h-1zM681 537h1v1h-1zM701 537h1v1h-1zM721 537h1v1h-1zM741 537h1v1h-1zM761 537h1v1h-1zM781 537h1v1h-1zM801 537h1v1h-1zM821 537h1v1h-1zM841 537h1v1h-1zM861 537h1v1h-1zM881 537h1v1h-1zM901 537h1v1h-1zM921 537h1v1h-1zM941 537h1v1h-1zM961 537h1v1h-1zM981 537h1v1h-1zM1001 537h1v1h-1zM1015 537h1v1h-1zM1017 537h1v1h-1zM1019 537h1v1h-1zM521 538h1v1h-1zM521 540h1v1h-1zM521 542h1v1h-1zM521 544h1v1h-1zM521 546h1v1h-1zM521 548h1v1h-1zM21 550h1v1h-1zM23 550h1v1h-1zM121 550h1v1h-1zM221 550h1v1h-1zM321 550h1v1h-1zM421 550h1v1h-1zM518 550h1v1h-1zM520 550h3v1h-3zM524 550h1v1h-1zM621 550h1v1h-1zM721 550h1v1h-1zM821 550h1v1h-1zM921 550h1v1h-1zM1018 550h1v1h-1zM1020 550h1v1h-1zM521 552h1v1h-1zM521 554h1v1h-1zM521 556h1v1h-1zM521 558h1v1h-1zM521 560h1v1h-1zM521 562h1v1h-1zM21 563h1v1h-1zM23 563h1v1h-1zM121 563h1v1h-1zM221 563h1v1h-1zM321 563h1v1h-1zM421 563h1v1h-1zM518 563h1v1h-1zM520 563h3v1h-3zM524 563h1v1h-1zM621 563h1v1h-1zM721 563h1v1h-1zM821 563h1v1h-1zM921 563h1v1h-1zM1018 563h1v1h-1zM1020 563h1v1h-1zM521 564h1v1h-1zM521 566h1v1h-1zM521 568h1v1h-1zM521 570h1v1h-1zM521 572h1v1h-1zM521 574h1v1h-1zM21 576h1v1h-1zM23 576h1v1h-1zM121 576h1v1h-1zM221 576h1v1h-1zM321 576h1v1h-1zM421 576h1v1h-1zM518 576h1v1h-1zM520 576h3v1h-3zM524 576h1v1h-1zM621 576h1v1h-1zM721 576h1v1h-1zM821 576h1v1h-1zM921 576h1v1h-1zM1018 576h1v1h-1zM1020 576h1v1h-1zM521 578h1v1h-1zM521 580h1v1h-1zM521 582h1v1h-1zM521 584h1v1h-1zM521 586h1v1h-1zM521 588h1v1h-1zM21 589h1v1h-1zM23 589h1v1h-1zM121 589h1v1h-1zM221 589h1v1h-1zM321 589h1v1h-1zM421 589h1v1h-1zM518 589h1v1h-1zM520 589h3v1h-3zM524 589h1v1h-1zM621 589h1v1h-1zM721 589h1v1h-1zM821 589h1v1h-1zM921 589h1v1h-1zM1018 589h1v1h-1zM1020 589h1v1h-1zM521 590h1v1h-1zM521 592h1v1h-1zM521 594h1v1h-1zM521 596h1v1h-1zM521 598h1v1h-1zM521 600h1v1h-1zM121 602h1v1h-1zM441 602h1v1h-1zM520 602h3v1h-3zM524 602h1v1h-1zM541 602h1v1h-1zM561 602h1v1h-1zM581 602h1v1h-1zM601 602h1v1h-1zM621 602h1v1h-1zM661 602h1v1h-1zM981 602h1v1h-1zM1017 602h1v1h-1zM521 604h1v1h-1zM521 606h1v1h-1zM521 608h1v1h-1zM521 610h1v1h-1zM521 612h1v1h-1zM521 614h1v1h-1zM21 615h1v1h-1zM23 615h1v1h-1zM121 615h1v1h-1zM221 615h1v1h-1zM321 615h1v1h-1zM421 615h1v1h-1zM518 615h1v1h-1zM520 615h3v1h-3zM524 615h1v1h-1zM621 615h1v1h-1zM721 615h1v1h-1zM821 615h1v1h-1zM921 615h1v1h-1zM1018 615h1v1h-1zM1020 615h1v1h-1zM521 616h1v1h-1zM521 618h1v1h-1zM521 620h1v1h-1zM521 622h1v1h-1zM521 624h1v1h-1zM521 626h1v1h-1zM21 628h1v1h-1zM23 628h1v1h-1zM121 628h1v1h-1zM221 628h1v1h-1zM321 628h1v1h-1zM421 628h1v1h-1zM518 628h1v1h-1zM520 628h3v1h-3zM524 628h1v1h-1zM621 628h1v1h-1zM721 628h1v1h-1zM821 628h1v1h-1zM921 628h1v1h-1zM1018 628h1v1h-1zM1020 628h1v1h-1zM521 630h1v1h-1zM521 632h1v1h-1zM521 634h1v1h-1zM521 636h1v1h-1zM521 638h1v1h-1zM521 640h1v1h-1zM21 641h1v1h-1zM23 641h1v1h-1zM121 641h1v1h-1zM221 641h1v1h-1zM321 641h1v1h-1zM421 641h1v1h-1zM518 641h1v1h-1zM520 641h3v1h-3zM524 641h1v1h-1zM621 641h1v1h-1zM721 641h1v1h-1zM821 641h1v1h-1zM921 641h1v1h-1zM1018 641h1v1h-1zM1020 641h1v1h-1zM521 642h1v1h-1zM521 644h1v1h-1zM521 646h1v1h-1zM521 648h1v1h-1zM521 650h1v1h-1zM521 652h1v1h-1zM21 654h1v1h-1zM23 654h1v1h-1zM121 654h1v1h-1zM221 654h1v1h-1zM321 654h1v1h-1zM421 654h1v1h-1zM518 654h1v1h-1zM520 654h3v1h-3zM524 654h1v1h-1zM621 654h1v1h-1zM721 654h1v1h-1zM821 654h1v1h-1zM921 654h1v1h-1zM1018 654h1v1h-1zM1020 654h1v1h-1zM521 656h1v1h-1zM521 658h1v1h-1zM521 660h1v1h-1zM121 662h1v1h-1zM221 662h1v1h-1zM321 662h1v1h-1zM421 662h1v1h-1zM521 662h1v1h-1zM621 662h1v1h-1zM721 662h1v1h-1zM821 662h1v1h-1zM921 662h1v1h-1zM121 664h1v1h-1zM221 664h1v1h-1zM321 664h1v1h-1zM421 664h1v1h-1zM521 664h1v1h-1zM621 664h1v1h-1zM721 664h1v1h-1zM821 664h1v1h-1zM921 664h1v1h-1zM41 665h1v1h-1zM61 665h1v1h-1zM81 665h1v1h-1zM101 665h1v1h-1zM141 665h1v1h-1zM161 665h1v1h-1zM181 665h1v1h-1zM201 665h1v1h-1zM241 665h1v1h-1zM261 665h1v1h-1zM281 665h1v1h-1zM301 665h1v1h-1zM341 665h1v1h-1zM361 665h1v1h-1zM381 665h1v1h-1zM401 665h1v1h-1zM441 665h1v1h-1zM461 665h1v1h-1zM481 665h1v1h-1zM501 665h1v1h-1zM541 665h1v1h-1zM561 665h1v1h-1zM581 665h1v1h-1zM601 665h1v1h-1zM641 665h1v1h-1zM661 665h1v1h-1zM681 665h1v1h-1zM701 665h1v1h-1zM741 665h1v1h-1zM761 665h1v1h-1zM781 665h1v1h-1zM801 665h1v1h-1zM841 665h1v1h-1zM861 665h1v1h-1zM881 665h1v1h-1zM901 665h1v1h-1zM941 665h1v1h-1zM961 665h1v1h-1zM981 665h1v1h-1zM1001 665h1v1h-1zM121 666h1v1h-1zM221 666h1v1h-1zM321 666h1v1h-1zM421 666h1v1h-1zM521 666h1v1h-1zM621 666h1v1h-1zM721 666h1v1h-1zM821 666h1v1h-1zM921 666h1v1h-1zM41 667h1v1h-1zM61 667h1v1h-1zM81 667h1v1h-1zM101 667h1v1h-1zM141 667h1v1h-1zM161 667h1v1h-1zM181 667h1v1h-1zM201 667h1v1h-1zM241 667h1v1h-1zM261 667h1v1h-1zM281 667h1v1h-1zM301 667h1v1h-1zM341 667h1v1h-1zM361 667h1v1h-1zM381 667h1v1h-1zM401 667h1v1h-1zM441 667h1v1h-1zM461 667h1v1h-1zM481 667h1v1h-1zM501 667h1v1h-1zM541 667h1v1h-1zM561 667h1v1h-1zM581 667h1v1h-1zM601 667h1v1h-1zM641 667h1v1h-1zM661 667h1v1h-1zM681 667h1v1h-1zM701 667h1v1h-1zM741 667h1v1h-1zM761 667h1v1h-1zM781 667h1v1h-1zM801 667h1v1h-1zM841 667h1v1h-1zM861 667h1v1h-1zM881 667h1v1h-1zM901 667h1v1h-1zM941 667h1v1h-1zM961 667h1v1h-1zM981 667h1v1h-1zM1001 667h1v1h-1z"/><path fill="#000" d="M521 90h1v1h-1zM521 92h1v1h-1zM521 94h1v1h-1zM23 95h1v1h-1zM121 95h1v1h-1zM221 95h1v1h-1zM321 95h1v1h-1zM421 95h1v1h-1zM518 95h1v1h-1zM520 95h3v1h-3zM621 95h1v1h-1zM721 95h1v1h-1zM821 95h1v1h-1zM921 95h1v1h-1zM1018 95h1v1h-1zM521 96h1v1h-1zM521 98h1v1h-1zM221 199h1v1h-1zM321 199h1v1h-1zM421 199h1v1h-1zM518 199h1v1h-1zM520 199h1v1h-1zM522 199h1v1h-1zM524 199h1v1h-1zM621 199h1v1h-1zM721 199h1v1h-1zM821 199h1v1h-1zM921 199h1v1h-1zM1018 199h1v1h-1zM1020 199h1v1h-1zM521 326h1v1h-1zM521 328h1v1h-1zM23 329h1v1h-1zM121 329h1v1h-1zM221 329h1v1h-1zM321 329h1v1h-1zM421 329h1v1h-1zM518 329h1v1h-1zM520 329h3v1h-3zM524 329h1v1h-1zM621 329h1v1h-1zM721 329h1v1h-1zM921 329h1v1h-1zM1018 329h1v1h-1zM1020 329h1v1h-1zM521 330h1v1h-1zM521 332h1v1h-1zM22 602h1v1h-1zM24 602h1v1h-1zM26 602h1v1h-1zM41 602h1v1h-1zM61 602h1v1h-1zM81 602h1v1h-1zM101 602h1v1h-1zM141 602h1v1h-1zM161 602h1v1h-1zM181 602h1v1h-1zM201 602h1v1h-1zM221 602h1v1h-1zM241 602h1v1h-1zM261 602h1v1h-1zM281 602h1v1h-1zM301 602h1v1h-1zM321 602h1v1h-1zM341 602h1v1h-1zM361 602h1v1h-1zM381 602h1v1h-1zM401 602h1v1h-1zM421 602h1v1h-1zM461 602h1v1h-1zM481 602h1v1h-1zM501 602h1v1h-1zM518 602h1v1h-1zM641 602h1v1h-1zM681 602h1v1h-1zM701 602h1v1h-1zM721 602h1v1h-1zM741 602h1v1h-1zM761 602h1v1h-1zM781 602h1v1h-1zM801 602h1v1h-1zM821 602h1v1h-1zM841 602h1v1h-1zM861 602h1v1h-1zM881 602h1v1h-1zM901 602h1v1h-1zM921 602h1v1h-1zM941 602h1v1h-1zM961 602h1v1h-1zM1001 602h1v1h-1zM1015 602h1v1h-1zM1019 602h1v1h-1z"/>
<path d="M515.6 17h11.8l-5.9 6.8z" fill="#ffa000" shape-rendering="auto"/>
<path d="M209 24h10l1 1v10l-5.0 4h-2l-5.0 -4v-10z" fill="#ffa000" shape-rendering="auto"/><path d="M209 25h10v2h-10z M213.0 27h2v9h-2z" fill="#000"/>
<path d="M1010 251.5L1016 246v11z" fill="#00e8e8" shape-rendering="auto"/><rect x="1016" y="251" width="5" height="1" fill="#00e8e8"/>
<path d="M0 201h13v3h-13zM0 202h14v3h-14zM0 203h15v3h-15zM0 204h16v3h-16zM0 205h17v3h-17zM0 206h18v3h-18zM0 207h19v3h-19zM0 208h20v3h-20zM0 209h20v3h-20zM0 210h20v3h-20zM0 211h19v3h-19zM0 212h18v3h-18zM0 213h17v3h-17zM0 214h16v3h-16zM0 215h15v3h-15zM0 216h14v3h-14zM0 217h13v3h-13z" fill="#2a3aa8"/><path d="M0 202h12v1h-12zM0 203h13v1h-13zM0 204h14v1h-14zM0 205h15v1h-15zM0 206h16v1h-16zM0 207h17v1h-17zM0 208h18v1h-18zM0 209h19v1h-19zM0 210h20v1h-20zM0 211h19v1h-19zM0 212h18v1h-18zM0 213h17v1h-17zM0 214h16v1h-16zM0 215h15v1h-15zM0 216h14v1h-14zM0 217h13v1h-13zM0 218h12v1h-12z" fill="#000"/><path d="M0 202h12v1h-12z M0 202h1v17h-1zM12 203h1v1h-1zM13 204h1v1h-1zM14 205h1v1h-1zM15 206h1v1h-1zM16 207h1v1h-1zM17 208h1v1h-1zM18 209h1v1h-1zM19 210h1v1h-1z" fill="#ffff00"/><path d="M1 218h1v1h-1zM3 218h1v1h-1zM5 218h1v1h-1zM7 218h1v1h-1zM9 218h1v1h-1zM11 218h1v1h-1zM18 211h1v1h-1zM17 212h1v1h-1zM16 213h1v1h-1zM15 214h1v1h-1zM14 215h1v1h-1zM13 216h1v1h-1zM12 217h1v1h-1z" fill="#ffff00"/><text x="8.2" y="215.6" fill="#ffff00" stroke="#ffff00" stroke-width="0.6" font-size="15.5" text-anchor="middle" style="font-family:'Liberation Sans','DejaVu Sans',sans-serif">1</text>
<path d="M0 304h13v3h-13zM0 305h14v3h-14zM0 306h15v3h-15zM0 307h16v3h-16zM0 308h17v3h-17zM0 309h18v3h-18zM0 310h19v3h-19zM0 311h20v3h-20zM0 312h20v3h-20zM0 313h20v3h-20zM0 314h19v3h-19zM0 315h18v3h-18zM0 316h17v3h-17zM0 317h16v3h-16zM0 318h15v3h-15zM0 319h14v3h-14zM0 320h13v3h-13z" fill="#2a3aa8"/><path d="M0 305h12v1h-12zM0 306h13v1h-13zM0 307h14v1h-14zM0 308h15v1h-15zM0 309h16v1h-16zM0 310h17v1h-17zM0 311h18v1h-18zM0 312h19v1h-19zM0 313h20v1h-20zM0 314h19v1h-19zM0 315h18v1h-18zM0 316h17v1h-17zM0 317h16v1h-16zM0 318h15v1h-15zM0 319h14v1h-14zM0 320h13v1h-13zM0 321h12v1h-12z" fill="#000"/><path d="M0 305h12v1h-12z M0 305h1v17h-1zM12 306h1v1h-1zM13 307h1v1h-1zM14 308h1v1h-1zM15 309h1v1h-1zM16 310h1v1h-1zM17 311h1v1h-1zM18 312h1v1h-1zM19 313h1v1h-1z" fill="#00e8e8"/><path d="M1 321h1v1h-1zM3 321h1v1h-1zM5 321h1v1h-1zM7 321h1v1h-1zM9 321h1v1h-1zM11 321h1v1h-1zM18 314h1v1h-1zM17 315h1v1h-1zM16 316h1v1h-1zM15 317h1v1h-1zM14 318h1v1h-1zM13 319h1v1h-1zM12 320h1v1h-1z" fill="#00e8e8"/><text x="8.2" y="318.6" fill="#00e8e8" stroke="#00e8e8" stroke-width="0.6" font-size="15.5" text-anchor="middle" style="font-family:'Liberation Sans','DejaVu Sans',sans-serif">2</text>
<path d="M0 594h13v3h-13zM0 595h14v3h-14zM0 596h15v3h-15zM0 597h16v3h-16zM0 598h17v3h-17zM0 599h18v3h-18zM0 600h19v3h-19zM0 601h20v3h-20zM0 602h20v3h-20zM0 603h20v3h-20zM0 604h19v3h-19zM0 605h18v3h-18zM0 606h17v3h-17zM0 607h16v3h-16zM0 608h15v3h-15zM0 609h14v3h-14zM0 610h13v3h-13z" fill="#2a3aa8"/><path d="M0 595h12v1h-12zM0 596h13v1h-13zM0 597h14v1h-14zM0 598h15v1h-15zM0 599h16v1h-16zM0 600h17v1h-17zM0 601h18v1h-18zM0 602h19v1h-19zM0 603h20v1h-20zM0 604h19v1h-19zM0 605h18v1h-18zM0 606h17v1h-17zM0 607h16v1h-16zM0 608h15v1h-15zM0 609h14v1h-14zM0 610h13v1h-13zM0 611h12v1h-12z" fill="#000"/><path d="M0 595h12v1h-12z M0 595h1v17h-1zM12 596h1v1h-1zM13 597h1v1h-1zM14 598h1v1h-1zM15 599h1v1h-1zM16 600h1v1h-1zM17 601h1v1h-1zM18 602h1v1h-1zM19 603h1v1h-1z" fill="#c000c0"/><path d="M1 611h1v1h-1zM3 611h1v1h-1zM5 611h1v1h-1zM7 611h1v1h-1zM9 611h1v1h-1zM11 611h1v1h-1zM18 604h1v1h-1zM17 605h1v1h-1zM16 606h1v1h-1zM15 607h1v1h-1zM14 608h1v1h-1zM13 609h1v1h-1zM12 610h1v1h-1z" fill="#c000c0"/><text x="8.2" y="608.6" fill="#c000c0" stroke="#c000c0" stroke-width="0.6" font-size="15.5" text-anchor="middle" style="font-family:'Liberation Sans','DejaVu Sans',sans-serif">3</text>
<path d="M0 465h13v3h-13zM0 466h14v3h-14zM0 467h15v3h-15zM0 468h16v3h-16zM0 469h17v3h-17zM0 470h18v3h-18zM0 471h19v3h-19zM0 472h20v3h-20zM0 473h20v3h-20zM0 474h20v3h-20zM0 475h19v3h-19zM0 476h18v3h-18zM0 477h17v3h-17zM0 478h16v3h-16zM0 479h15v3h-15zM0 480h14v3h-14zM0 481h13v3h-13z" fill="#2a3aa8"/><path d="M0 466h12v1h-12zM0 467h13v1h-13zM0 468h14v1h-14zM0 469h15v1h-15zM0 470h16v1h-16zM0 471h17v1h-17zM0 472h18v1h-18zM0 473h19v1h-19zM0 474h20v1h-20zM0 475h19v1h-19zM0 476h18v1h-18zM0 477h17v1h-17zM0 478h16v1h-16zM0 479h15v1h-15zM0 480h14v1h-14zM0 481h13v1h-13zM0 482h12v1h-12z" fill="#00a800"/><path d="M0 466h12v1h-12z M0 466h1v17h-1zM12 467h1v1h-1zM13 468h1v1h-1zM14 469h1v1h-1zM15 470h1v1h-1zM16 471h1v1h-1zM17 472h1v1h-1zM18 473h1v1h-1zM19 474h1v1h-1z" fill="#fff"/><path d="M1 482h1v1h-1zM3 482h1v1h-1zM5 482h1v1h-1zM7 482h1v1h-1zM9 482h1v1h-1zM11 482h1v1h-1zM18 475h1v1h-1zM17 476h1v1h-1zM16 477h1v1h-1zM15 478h1v1h-1zM14 479h1v1h-1zM13 480h1v1h-1zM12 481h1v1h-1z" fill="#000"/><text x="8.2" y="479.6" fill="#000" stroke="#000" stroke-width="0.6" font-size="15.5" text-anchor="middle" style="font-family:'Liberation Sans','DejaVu Sans',sans-serif">4</text>
<rect x="20.5" y="670.5" width="553" height="21" rx="5" ry="5" fill="#0a0a00" stroke="#fff" stroke-width="1" shape-rendering="auto"/>
<rect x="25.599999999999998" y="672.7" width="25.4" height="16.6" rx="7.6" ry="8.3" fill="#ffff00" shape-rendering="auto"/><text x="38.3" y="686.3" fill="#000" stroke="#000" stroke-width="0.6" font-size="15" text-anchor="middle">1</text>
<text x="68.4" y="685.6" fill="#ffff00" stroke="#ffff00" stroke-width="0.45" font-size="14.7" textLength="49.7" lengthAdjust="spacing">1.00 V</text>
<rect x="164.8" y="672.7" width="25.4" height="16.6" rx="7.6" ry="8.3" fill="#00e8e8" shape-rendering="auto"/><text x="177.5" y="686.3" fill="#000" stroke="#000" stroke-width="0.6" font-size="15" text-anchor="middle">2</text>
<text x="207.9" y="685.6" fill="#00e8e8" stroke="#00e8e8" stroke-width="0.45" font-size="14.7" textLength="50" lengthAdjust="spacing">2.00 V</text>
<rect x="304.0" y="672.7" width="25.4" height="16.6" rx="7.6" ry="8.3" fill="#c000c0" shape-rendering="auto"/><text x="316.7" y="686.3" fill="#000" stroke="#000" stroke-width="0.6" font-size="15" text-anchor="middle">3</text>
<text x="346.9" y="685.6" fill="#c000c0" stroke="#c000c0" stroke-width="0.45" font-size="14.7" textLength="50" lengthAdjust="spacing">2.00 V</text>
<rect x="443.2" y="672.7" width="25.4" height="16.6" rx="7.6" ry="8.3" fill="#00a800" shape-rendering="auto"/><text x="455.9" y="686.3" fill="#000" stroke="#000" stroke-width="0.6" font-size="15" text-anchor="middle">4</text>
<text x="485.9" y="685.6" fill="#00a800" stroke="#00a800" stroke-width="0.45" font-size="14.7" textLength="50" lengthAdjust="spacing">5.00 V</text>
<rect x="584.5" y="670.5" width="147" height="42" rx="5" ry="5" fill="#0a0a00" stroke="#fff" stroke-width="1" shape-rendering="auto"/>
<text x="591" y="685.6" fill="#fff" stroke="#fff" stroke-width="0.45" font-size="14.7" textLength="56.3" lengthAdjust="spacing">1.00ms</text>
<rect x="589" y="691" width="12" height="13" rx="2" fill="#ffa000" shape-rendering="auto"/>
<path d="M590 692h10v2h-10z M594 694h2v9h-2z" fill="#000"/>
<path d="M601 697h6v1h-6z M607 694L611.2 697.5L607 701z M611.8 694h11.4l-5.7 6.3z" fill="#ffa000" shape-rendering="auto"/>
<text x="628" y="702.6" fill="#ffa000" stroke="#ffa000" stroke-width="0.45" font-size="14.7" textLength="87.5" lengthAdjust="spacing">3.07200ms</text>
<rect x="742.5" y="670.5" width="105" height="42" rx="5" ry="5" fill="#0a0a00" stroke="#fff" stroke-width="1" shape-rendering="auto"/>
<text x="748" y="685.6" fill="#fff" stroke="#fff" stroke-width="0.45" font-size="14.7" textLength="73" lengthAdjust="spacing">10.0MS/s</text>
<text x="748" y="702.6" fill="#fff" stroke="#fff" stroke-width="0.45" font-size="14.7" textLength="94" lengthAdjust="spacing">100k points</text>
<rect x="857.5" y="670.5" width="164" height="42" rx="5" ry="5" fill="#0a0a00" stroke="#fff" stroke-width="1" shape-rendering="auto"/>
<rect x="888.8" y="672.7" width="25.4" height="16.6" rx="7.6" ry="8.3" fill="#00e8e8" shape-rendering="auto"/><text x="901.5" y="686.3" fill="#000" stroke="#000" stroke-width="0.6" font-size="15" text-anchor="middle">2</text>
<path d="M928 685h5l3.4 -9h4.2" fill="none" stroke="#fff" stroke-width="2" shape-rendering="auto"/>
<text x="962.5" y="685.6" fill="#fff" stroke="#fff" stroke-width="0.45" font-size="14.7" textLength="50.3" lengthAdjust="spacing">1.88 V</text>
<rect x="909.5" y="730.5" width="112" height="34" rx="5" ry="5" fill="#0a0a00" stroke="#fff" stroke-width="1" shape-rendering="auto"/>
<text x="916" y="744.6" fill="#fff" stroke="#fff" stroke-width="0.45" font-size="14.7" textLength="100.5" lengthAdjust="spacing">23 Nov 2009</text>
<text x="915" y="760.4" fill="#fff" stroke="#fff" stroke-width="0.45" font-size="14.7" textLength="70.5" lengthAdjust="spacing">18:52:50</text>
<rect x="20" y="713" width="113" height="6" rx="5" fill="#323e8e" shape-rendering="auto"/><rect x="20" y="714" width="114" height="54" rx="5.5" fill="#000" shape-rendering="auto"/><rect x="20" y="714" width="113" height="53" rx="5" fill="#acd6ff" shape-rendering="auto"/><rect x="21" y="715" width="112" height="52" rx="4.5" fill="#74aefa" shape-rendering="auto"/><rect x="22" y="716" width="111" height="51" rx="4" fill="#5288e6" shape-rendering="auto"/>
<rect x="138" y="713" width="113" height="6" rx="5" fill="#323e8e" shape-rendering="auto"/><rect x="138" y="714" width="114" height="54" rx="5.5" fill="#000" shape-rendering="auto"/><rect x="138" y="714" width="113" height="53" rx="5" fill="#acd6ff" shape-rendering="auto"/><rect x="139" y="715" width="112" height="52" rx="4.5" fill="#74aefa" shape-rendering="auto"/><rect x="140" y="716" width="111" height="51" rx="4" fill="#5288e6" shape-rendering="auto"/>
<rect x="256" y="713" width="113" height="6" rx="5" fill="#323e8e" shape-rendering="auto"/><rect x="256" y="714" width="114" height="54" rx="5.5" fill="#000" shape-rendering="auto"/><rect x="256" y="714" width="113" height="53" rx="5" fill="#acd6ff" shape-rendering="auto"/><rect x="257" y="715" width="112" height="52" rx="4.5" fill="#74aefa" shape-rendering="auto"/><rect x="258" y="716" width="111" height="51" rx="4" fill="#5288e6" shape-rendering="auto"/>
<rect x="374" y="713" width="113" height="6" rx="5" fill="#323e8e" shape-rendering="auto"/><rect x="374" y="714" width="114" height="54" rx="5.5" fill="#000" shape-rendering="auto"/><rect x="374" y="714" width="113" height="53" rx="5" fill="#acd6ff" shape-rendering="auto"/><rect x="375" y="715" width="112" height="52" rx="4.5" fill="#74aefa" shape-rendering="auto"/><rect x="376" y="716" width="111" height="51" rx="4" fill="#5288e6" shape-rendering="auto"/>
<rect x="492" y="713" width="113" height="6" rx="5" fill="#323e8e" shape-rendering="auto"/><rect x="492" y="714" width="114" height="54" rx="5.5" fill="#000" shape-rendering="auto"/><rect x="492" y="714" width="113" height="53" rx="5" fill="#acd6ff" shape-rendering="auto"/><rect x="493" y="715" width="112" height="52" rx="4.5" fill="#74aefa" shape-rendering="auto"/><rect x="494" y="716" width="111" height="51" rx="4" fill="#5288e6" shape-rendering="auto"/>
<rect x="610" y="713" width="113" height="6" rx="5" fill="#323e8e" shape-rendering="auto"/><rect x="610" y="714" width="114" height="54" rx="5.5" fill="#000" shape-rendering="auto"/><rect x="610" y="714" width="113" height="53" rx="5" fill="#acd6ff" shape-rendering="auto"/><rect x="611" y="715" width="112" height="52" rx="4.5" fill="#74aefa" shape-rendering="auto"/><rect x="612" y="716" width="111" height="51" rx="4" fill="#5288e6" shape-rendering="auto"/>
<rect x="728" y="713" width="113" height="6" rx="5" fill="#323e8e" shape-rendering="auto"/><rect x="728" y="714" width="114" height="54" rx="5.5" fill="#000" shape-rendering="auto"/><rect x="728" y="714" width="113" height="53" rx="5" fill="#acd6ff" shape-rendering="auto"/><rect x="729" y="715" width="112" height="52" rx="4.5" fill="#74aefa" shape-rendering="auto"/><rect x="730" y="716" width="111" height="51" rx="4" fill="#5288e6" shape-rendering="auto"/>
<path d="M66 727L77.2 715.8L88 727z" fill="#dde8fc" shape-rendering="auto"/><path d="M69.5 727L72.5 724.3H81.5L84.5 727z" fill="#8c8680" shape-rendering="auto"/>
<text x="77" y="745.6" fill="#000" stroke="#000" stroke-width="0.5" font-size="14.7" text-anchor="middle" textLength="38.5" lengthAdjust="spacing">Type</text>
<rect x="58" y="750" width="38" height="16" fill="#c8d0e8"/>
<text x="77" y="762.2" fill="#000" stroke="#000" stroke-width="0.5" font-size="14.7" text-anchor="middle" textLength="36" lengthAdjust="spacing">Edge</text>
<text x="195" y="737.6" fill="#000" stroke="#000" stroke-width="0.5" font-size="14.7" text-anchor="middle" textLength="52.5" lengthAdjust="spacing">Source</text>
<rect x="182.7" y="742" width="25.6" height="16" rx="7.6" ry="8" fill="#00e8e8" shape-rendering="auto"/><text x="195.5" y="755.3" fill="#000" stroke="#000" stroke-width="0.6" font-size="15" text-anchor="middle">2</text>
<text x="313" y="737.6" fill="#000" stroke="#000" stroke-width="0.5" font-size="14.7" text-anchor="middle" textLength="71.5" lengthAdjust="spacing">Coupling</text>
<rect x="302" y="742" width="22" height="16" fill="#c8d0e8"/>
<text x="313" y="754.8" fill="#000" stroke="#000" stroke-width="0.5" font-size="14.7" text-anchor="middle" textLength="21" lengthAdjust="spacing">DC</text>
<text x="431" y="737.6" fill="#000" stroke="#000" stroke-width="0.5" font-size="14.7" text-anchor="middle" textLength="43" lengthAdjust="spacing">Slope</text>
<rect x="425" y="742" width="12" height="16" fill="#c8d0e8"/>
<path d="M425 754h4.6l3.2 -9h4.2" fill="none" stroke="#000" stroke-width="2" shape-rendering="auto"/>
<text x="549" y="737.6" fill="#000" stroke="#000" stroke-width="0.5" font-size="14.7" text-anchor="middle" textLength="39" lengthAdjust="spacing">Level</text>
<rect x="523" y="742" width="52" height="16" fill="#c8d0e8"/>
<text x="549" y="754.8" fill="#000" stroke="#000" stroke-width="0.5" font-size="14.7" text-anchor="middle" textLength="49" lengthAdjust="spacing">1.88 V</text>
<text x="667" y="728.4" fill="#000" stroke="#000" stroke-width="0.5" font-size="14.7" text-anchor="middle" textLength="42" lengthAdjust="spacing">Mode</text>
<rect x="638" y="733" width="58" height="16" fill="#c8d0e8"/>
<text x="667" y="745.6" fill="#000" stroke="#000" stroke-width="0.5" font-size="14.7" text-anchor="middle" textLength="55" lengthAdjust="spacing">Normal</text>
<text x="667" y="762.2" fill="#000" stroke="#000" stroke-width="0.5" font-size="14.7" text-anchor="middle" textLength="76" lengthAdjust="spacing">&amp; Holdoff</text>
<text x="785" y="737.6" fill="#000" stroke="#000" stroke-width="0.5" font-size="14.7" text-anchor="middle" textLength="78" lengthAdjust="spacing">Configure</text>
<text x="785" y="754.8" fill="#000" stroke="#000" stroke-width="0.5" font-size="14.7" text-anchor="middle" textLength="72" lengthAdjust="spacing">B Trigger</text>
</svg>
</body></html>
